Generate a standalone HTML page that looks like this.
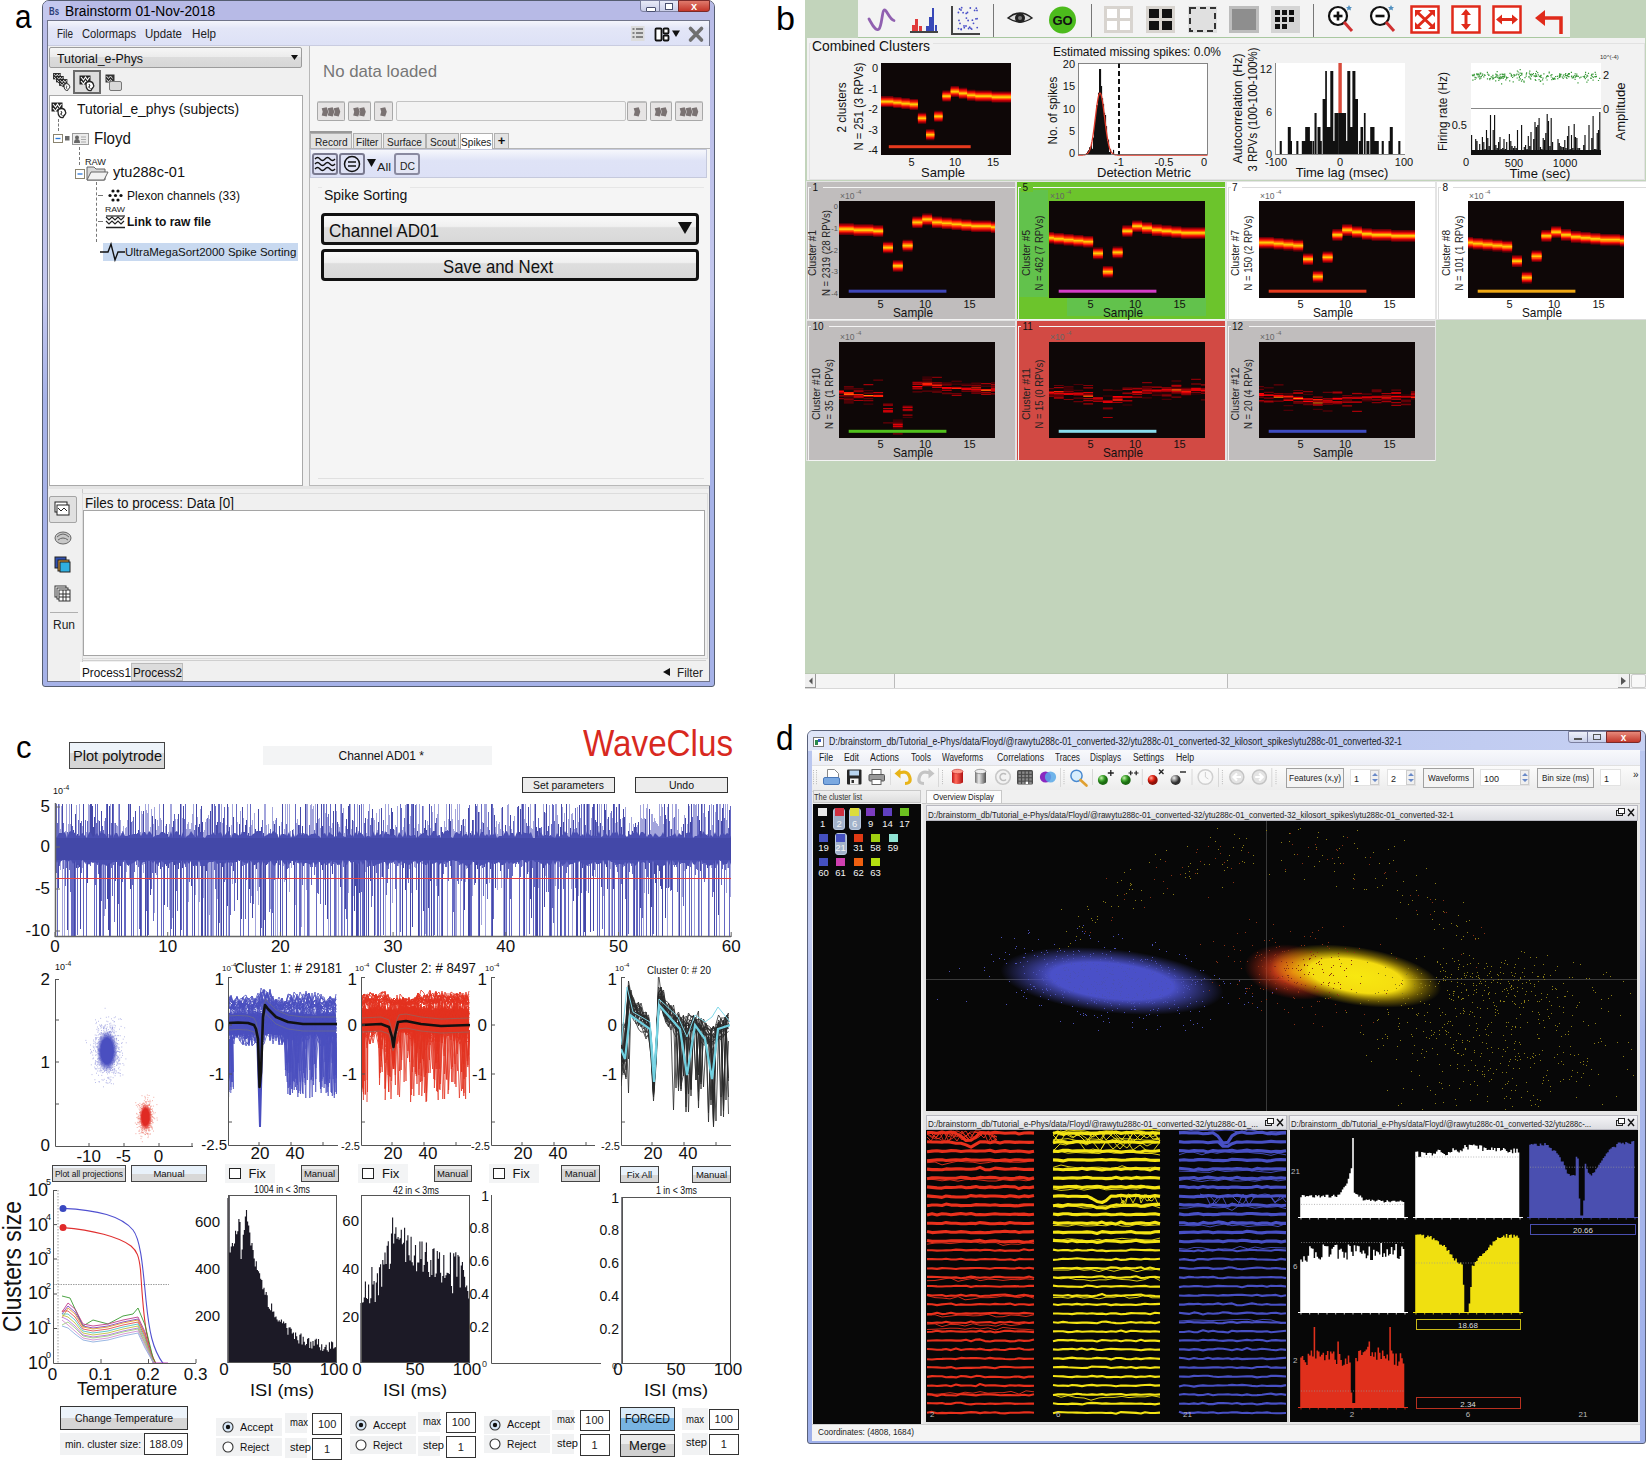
<!DOCTYPE html>
<html><head><meta charset="utf-8"><style>
html,body{margin:0;padding:0;background:#fff;}
body{width:1647px;height:1461px;position:relative;overflow:hidden;font-family:"Liberation Sans",sans-serif;}
.t{position:absolute;white-space:nowrap;transform-origin:0 0;line-height:normal;}
.r{position:absolute;}
.s{position:absolute;overflow:visible;}
</style></head><body>
<div class="t" style="left:14.5px;top:-3.5px;font-size:34px;color:#000;transform:scaleX(0.873);">a</div>
<div class="r" style="left:42px;top:0px;width:673px;height:687px;background:linear-gradient(#b9bce8 0,#c3c7ee 300px,#a6b2e8 400px,#a6b2e8 100%);border:1px solid #555d70;box-sizing:border-box;border-radius:7px 7px 3px 3px;"></div>
<div class="r" style="left:43px;top:1px;width:671px;height:19px;background:#b7bae6;border-radius:6px 6px 0 0;"></div>
<div class="r" style="left:43px;top:1px;width:27px;height:19px;background:#c4c8ee;border-radius:6px 0 0 0;"></div>
<div class="t" style="left:49.0px;top:5.9px;font-size:10px;color:#2c3e78;font-weight:bold;transform:scaleX(0.782);">Bs</div>
<div class="t" style="left:65.0px;top:2.8px;font-size:14px;color:#000;transform:scaleX(0.984);">Brainstorm 01-Nov-2018</div>
<div class="r" style="left:640px;top:0px;width:20px;height:12px;background:linear-gradient(#e8eaf8,#c9cde8);border:1px solid #7c80a0;box-sizing:border-box;border-radius:0 0 0 3px;"></div>
<div class="r" style="left:646px;top:7px;width:8px;height:3px;background:#fff;border:1px solid #4a5070;border-radius:1px;"></div>
<div class="r" style="left:659px;top:0px;width:20px;height:12px;background:linear-gradient(#e8eaf8,#c9cde8);border:1px solid #7c80a0;box-sizing:border-box;"></div>
<div class="r" style="left:665px;top:3px;width:8px;height:7px;background:#fff;border:1.5px solid #4a5070;box-sizing:border-box;"></div>
<div class="r" style="left:678px;top:0px;width:32px;height:12px;background:linear-gradient(#e07a6c,#c4362a);border:1px solid #7a2a2a;box-sizing:border-box;border-radius:0 0 3px 0;"></div>
<div class="t" style="left:690.9px;top:0.0px;font-size:11px;color:#fff;font-weight:bold;">x</div>
<div class="r" style="left:47px;top:20px;width:663px;height:662px;background:#f0f0f0;border:1px solid #70748a;box-sizing:border-box;"></div>
<div class="r" style="left:48px;top:21px;width:661px;height:25px;background:linear-gradient(#f4f5fc 0,#e3e6f7 30%,#dde1f6 100%);"></div>
<div class="r" style="left:48px;top:45px;width:661px;height:1px;background:#c9cce0;"></div>
<div class="t" style="left:57.0px;top:27.1px;font-size:12px;color:#222;transform:scaleX(0.827);">File</div>
<div class="t" style="left:82.0px;top:27.1px;font-size:12px;color:#222;transform:scaleX(0.931);">Colormaps</div>
<div class="t" style="left:145.0px;top:27.1px;font-size:12px;color:#222;transform:scaleX(0.956);">Update</div>
<div class="t" style="left:192.0px;top:27.1px;font-size:12px;color:#222;transform:scaleX(0.972);">Help</div>
<svg class="s" style="left:631px;top:26px;" width="14" height="15" viewBox="0 0 14 15"><rect x="0" y="0" width="13.5" height="15" fill="#dcdcdc"/><g stroke="#666" stroke-width="1.3" fill="none"><path d="M1.5 3h2M5 3h7M1.5 7h2M5 7h7M1.5 11h2M5 11h7"/></g></svg>
<svg class="s" style="left:654px;top:25px;" width="30" height="18" viewBox="0 0 30 18"><rect x="1.5" y="3.5" width="6" height="12" rx="1" fill="#fff" stroke="#111" stroke-width="1.8"/><rect x="9.5" y="3.5" width="5" height="5" rx="1" fill="#fff" stroke="#111" stroke-width="1.8"/><rect x="9.5" y="10.5" width="5" height="5" rx="1" fill="#fff" stroke="#111" stroke-width="1.8"/><path d="M18 5.5h8l-4 6.5z" fill="#111"/></svg>
<svg class="s" style="left:688px;top:26px;" width="16" height="17" viewBox="0 0 16 17"><path d="M2.5 2.5L13.5 14M13.5 2.5L2.5 14" stroke="#707070" stroke-width="3.6" stroke-linecap="round"/></svg>
<div class="r" style="left:49px;top:47px;width:253px;height:21px;background:linear-gradient(#f6f6f6 0,#ececec 45%,#dcdcdc 50%,#d6d6d6 100%);border:1px solid #9c9c9c;box-sizing:border-box;border-radius:2px;"></div>
<div class="t" style="left:57.0px;top:51.2px;font-size:13px;color:#111;transform:scaleX(0.950);">Tutorial_e-Phys</div>
<svg class="s" style="left:291px;top:55px;" width="8" height="6" viewBox="0 0 8 6"><path d="M0 0h7l-3.5 5z" fill="#111"/></svg>
<div class="r" style="left:73px;top:70px;width:28px;height:24px;background:#dcdcdc;border:2px solid #6a6a6a;box-sizing:border-box;"></div>
<svg class="s" style="left:52px;top:72px;" width="20" height="20" viewBox="0 0 20 20"><g transform="translate(0,0) scale(0.7)"><rect x="1.5" y="1.5" width="11" height="9" fill="#222"/><path d="M3 3l2.5 3 2-3 2 3 2-3M3 7l2.5 3 2-3 2 3 2-3" stroke="#fff" stroke-width="1.1" fill="none"/><path d="M8 10.5q0-3 3.5-3t4 3.5q1 1-0.5 2.5t-2 3q-2 0.5-3.5-1t-1.5-5z" fill="#fff" stroke="#222" stroke-width="1.3"/><path d="M11 10l1 2-1.5 1 2 1.5" stroke="#222" fill="none" stroke-width="1"/></g><g transform="translate(3,3) scale(0.7)"><rect x="1.5" y="1.5" width="11" height="9" fill="#222"/><path d="M3 3l2.5 3 2-3 2 3 2-3M3 7l2.5 3 2-3 2 3 2-3" stroke="#fff" stroke-width="1.1" fill="none"/><path d="M8 10.5q0-3 3.5-3t4 3.5q1 1-0.5 2.5t-2 3q-2 0.5-3.5-1t-1.5-5z" fill="#fff" stroke="#222" stroke-width="1.3"/><path d="M11 10l1 2-1.5 1 2 1.5" stroke="#222" fill="none" stroke-width="1"/></g><g transform="translate(6,6) scale(0.75)"><rect x="1.5" y="1.5" width="11" height="9" fill="#222"/><path d="M3 3l2.5 3 2-3 2 3 2-3M3 7l2.5 3 2-3 2 3 2-3" stroke="#fff" stroke-width="1.1" fill="none"/><path d="M8 10.5q0-3 3.5-3t4 3.5q1 1-0.5 2.5t-2 3q-2 0.5-3.5-1t-1.5-5z" fill="#fff" stroke="#222" stroke-width="1.3"/><path d="M11 10l1 2-1.5 1 2 1.5" stroke="#222" fill="none" stroke-width="1"/></g></svg>
<svg class="s" style="left:78px;top:74px;" width="18" height="18" viewBox="0 0 18 18"><rect x="1.5" y="1.5" width="11" height="9" fill="#222"/><path d="M3 3l2.5 3 2-3 2 3 2-3M3 7l2.5 3 2-3 2 3 2-3" stroke="#fff" stroke-width="1.1" fill="none"/><path d="M8 10.5q0-3 3.5-3t4 3.5q1 1-0.5 2.5t-2 3q-2 0.5-3.5-1t-1.5-5z" fill="#fff" stroke="#222" stroke-width="1.3"/><path d="M11 10l1 2-1.5 1 2 1.5" stroke="#222" fill="none" stroke-width="1"/></svg>
<svg class="s" style="left:104px;top:73px;" width="20" height="20" viewBox="0 0 20 20"><rect x="1.5" y="1.5" width="9" height="8" fill="#333"/><path d="M2.5 3l2 2.5 2-2.5 2 2.5M2.5 6.5l2 2.5 2-2.5 2 2.5" stroke="#ddd" fill="none"/><rect x="5.5" y="8.5" width="12" height="9" rx="1.5" fill="#d8d8d8" stroke="#777"/></svg>
<div class="r" style="left:49px;top:95px;width:254px;height:391px;background:#fff;border:1px solid #a9a9a9;box-sizing:border-box;"></div>
<svg class="s" style="left:50px;top:101px;" width="18" height="18" viewBox="0 0 18 18"><rect x="1.5" y="1.5" width="11" height="9" fill="#222"/><path d="M3 3l2.5 3 2-3 2 3 2-3M3 7l2.5 3 2-3 2 3 2-3" stroke="#fff" stroke-width="1.1" fill="none"/><path d="M8 10.5q0-3 3.5-3t4 3.5q1 1-0.5 2.5t-2 3q-2 0.5-3.5-1t-1.5-5z" fill="#fff" stroke="#222" stroke-width="1.3"/><path d="M11 10l1 2-1.5 1 2 1.5" stroke="#222" fill="none" stroke-width="1"/></svg>
<div class="t" style="left:77.0px;top:100.4px;font-size:15px;color:#111;transform:scaleX(0.924);">Tutorial_e_phys (subjects)</div>
<div class="r" style="left:58px;top:119px;width:0px;height:12px;border:0;box-sizing:border-box;border-left:1px dashed #777;"></div>
<svg class="s" style="left:52px;top:131px;" width="38" height="16" viewBox="0 0 38 16"><rect x="1.5" y="3.5" width="9" height="8" fill="#fff" stroke="#8a8470"/><path d="M3.5 7.5h5" stroke="#2a78d8" stroke-width="1.3"/><rect x="13" y="5" width="4.5" height="4.5" fill="#6a6a6a"/><rect x="20.5" y="2.5" width="16" height="11" fill="#ececec" stroke="#999"/><circle cx="25" cy="6.5" r="2" fill="#666"/><path d="M22 12q0-4 3-4t3 4z" fill="#666"/><path d="M29 6h5M29 8.5h5M29 11h5" stroke="#aaa"/></svg>
<div class="t" style="left:94.0px;top:128.6px;font-size:17px;color:#111;transform:scaleX(0.890);">Floyd</div>
<div class="r" style="left:79px;top:147px;width:0px;height:18px;border-left:1px dashed #777;"></div>
<div class="t" style="left:85.0px;top:156.9px;font-size:9px;color:#222;transform:scaleX(1.016);">RAW</div>
<svg class="s" style="left:74px;top:163px;" width="36" height="19" viewBox="0 0 36 19"><rect x="1.5" y="6.5" width="9" height="9" fill="#fff" stroke="#8a8470"/><path d="M3.5 11h5" stroke="#2a78d8" stroke-width="1.3"/><path d="M13 4h7l2 2h9v11H13z" fill="#d8d8d8" stroke="#666"/><path d="M13 17l4-8h17l-4 8z" fill="#f2f2f2" stroke="#666"/></svg>
<div class="t" style="left:113.0px;top:163.4px;font-size:15px;color:#111;transform:scaleX(0.970);">ytu288c-01</div>
<div class="r" style="left:96px;top:182px;width:0px;height:60px;border-left:1px dashed #777;"></div>
<div class="r" style="left:98px;top:195px;width:5px;height:0px;border-top:1px solid #777;"></div>
<svg class="s" style="left:108px;top:189px;" width="16" height="13" viewBox="0 0 16 13"><g fill="#111"><circle cx="5" cy="2" r="1.6"/><circle cx="10" cy="2" r="1.6"/><circle cx="2" cy="6.5" r="1.6"/><circle cx="7.5" cy="6.5" r="1.6"/><circle cx="13" cy="6.5" r="1.6"/><circle cx="5" cy="11" r="1.6"/><circle cx="10" cy="11" r="1.6"/></g></svg>
<div class="t" style="left:127.0px;top:188.2px;font-size:13px;color:#111;transform:scaleX(0.925);">Plexon channels (33)</div>
<div class="t" style="left:105.0px;top:204.8px;font-size:8px;color:#222;transform:scaleX(1.089);">RAW</div>
<div class="r" style="left:98px;top:221px;width:5px;height:0px;border-top:1px solid #777;"></div>
<svg class="s" style="left:105px;top:214px;" width="21" height="15" viewBox="0 0 21 15"><g stroke="#222" fill="none" stroke-width="1.2"><path d="M1 2h19"/><path d="M1 3l3 3 3-3 3 3 3-3 3 3 3-3"/><path d="M1 7l3 3 3-3 3 3 3-3 3 3 3-3"/><path d="M1 13.5h19" stroke-width="1.5"/></g></svg>
<div class="t" style="left:127.0px;top:214.2px;font-size:13px;color:#111;font-weight:bold;transform:scaleX(0.923);">Link to raw file</div>
<div class="r" style="left:103px;top:243px;width:195px;height:18px;background:#c8d9f0;"></div>
<svg class="s" style="left:100px;top:242px;" width="26" height="20" viewBox="0 0 26 20"><path d="M0 10h8l3-8 4 16 3-8h7" fill="none" stroke="#111" stroke-width="1.4"/></svg>
<div class="t" style="left:125.0px;top:245.6px;font-size:11.5px;color:#111;">UltraMegaSort2000 Spike Sorting</div>
<div class="r" style="left:303px;top:46px;width:6px;height:440px;background:#f0f0f0;"></div>
<div class="r" style="left:309px;top:46px;width:401px;height:440px;background:#f5f5f5;border:1px solid #b8b8b8;box-sizing:border-box;border-top:0;border-right:0;"></div>
<div class="t" style="left:323.0px;top:61.6px;font-size:17px;color:#777;transform:scaleX(0.989);">No data loaded</div>
<div class="r" style="left:317px;top:101px;width:28px;height:20px;background:#e6e4e4;border:1px solid #a8a8a8;box-sizing:border-box;border-top:2px solid #bdbdbd;border-radius:2px;"></div>
<svg class="s" style="left:0px;top:106.5px;" width="720" height="10" viewBox="0 0 720 10"><path d="M321.7 1.2L326.7 0.3L328.3 4.8L326.7 9.4L321.7 8.4L322.7 4.8z" fill="#7a7272"/><path d="M327.7 1.2L332.7 0.3L334.3 4.8L332.7 9.4L327.7 8.4L328.7 4.8z" fill="#7a7272"/><path d="M333.7 1.2L338.7 0.3L340.3 4.8L338.7 9.4L333.7 8.4L334.7 4.8z" fill="#7a7272"/></svg>
<div class="r" style="left:348px;top:101px;width:23px;height:20px;background:#e6e4e4;border:1px solid #a8a8a8;box-sizing:border-box;border-top:2px solid #bdbdbd;border-radius:2px;"></div>
<svg class="s" style="left:0px;top:106.5px;" width="720" height="10" viewBox="0 0 720 10"><path d="M353.2 1.2L358.2 0.3L359.8 4.8L358.2 9.4L353.2 8.4L354.2 4.8z" fill="#7a7272"/><path d="M359.2 1.2L364.2 0.3L365.8 4.8L364.2 9.4L359.2 8.4L360.2 4.8z" fill="#7a7272"/></svg>
<div class="r" style="left:374px;top:101px;width:19px;height:20px;background:#e6e4e4;border:1px solid #a8a8a8;box-sizing:border-box;border-top:2px solid #bdbdbd;border-radius:2px;"></div>
<svg class="s" style="left:0px;top:106.5px;" width="720" height="10" viewBox="0 0 720 10"><path d="M380.2 1.2L385.2 0.3L386.8 4.8L385.2 9.4L380.2 8.4L381.2 4.8z" fill="#7a7272"/></svg>
<div class="r" style="left:627px;top:101px;width:20px;height:20px;background:#e6e4e4;border:1px solid #a8a8a8;box-sizing:border-box;border-top:2px solid #bdbdbd;border-radius:2px;"></div>
<svg class="s" style="left:0px;top:106.5px;" width="720" height="10" viewBox="0 0 720 10"><path d="M633.7 1.2L638.7 0.3L640.3 4.8L638.7 9.4L633.7 8.4L634.7 4.8z" fill="#7a7272"/></svg>
<div class="r" style="left:650px;top:101px;width:22px;height:20px;background:#e6e4e4;border:1px solid #a8a8a8;box-sizing:border-box;border-top:2px solid #bdbdbd;border-radius:2px;"></div>
<svg class="s" style="left:0px;top:106.5px;" width="720" height="10" viewBox="0 0 720 10"><path d="M654.7 1.2L659.7 0.3L661.3 4.8L659.7 9.4L654.7 8.4L655.7 4.8z" fill="#7a7272"/><path d="M660.7 1.2L665.7 0.3L667.3 4.8L665.7 9.4L660.7 8.4L661.7 4.8z" fill="#7a7272"/></svg>
<div class="r" style="left:675px;top:101px;width:28px;height:20px;background:#e6e4e4;border:1px solid #a8a8a8;box-sizing:border-box;border-top:2px solid #bdbdbd;border-radius:2px;"></div>
<svg class="s" style="left:0px;top:106.5px;" width="720" height="10" viewBox="0 0 720 10"><path d="M679.7 1.2L684.7 0.3L686.3 4.8L684.7 9.4L679.7 8.4L680.7 4.8z" fill="#7a7272"/><path d="M685.7 1.2L690.7 0.3L692.3 4.8L690.7 9.4L685.7 8.4L686.7 4.8z" fill="#7a7272"/><path d="M691.7 1.2L696.7 0.3L698.3 4.8L696.7 9.4L691.7 8.4L692.7 4.8z" fill="#7a7272"/></svg>
<div class="r" style="left:396px;top:101px;width:230px;height:20px;background:#f3f3f3;border:1px solid #c3c3c3;box-sizing:border-box;border-radius:2px;"></div>
<div class="r" style="left:310px;top:131px;width:42px;height:2px;background:#999;"></div>
<div class="r" style="left:309px;top:148px;width:401px;height:1px;background:#b5b5b5;"></div>
<div class="r" style="left:310px;top:133px;width:42px;height:16px;background:#e3e3e3;border:1px solid #b0b0b0;box-sizing:border-box;"></div>
<div class="t" style="left:314.7px;top:135.6px;font-size:11.5px;color:#222;transform:scaleX(0.880);">Record</div>
<div class="r" style="left:353px;top:133px;width:29px;height:16px;background:#e3e3e3;border:1px solid #b0b0b0;box-sizing:border-box;"></div>
<div class="t" style="left:356.3px;top:135.6px;font-size:11.5px;color:#222;transform:scaleX(0.880);">Filter</div>
<div class="r" style="left:383px;top:133px;width:43px;height:16px;background:#e3e3e3;border:1px solid #b0b0b0;box-sizing:border-box;"></div>
<div class="t" style="left:387.1px;top:135.6px;font-size:11.5px;color:#222;transform:scaleX(0.880);">Surface</div>
<div class="r" style="left:426px;top:133px;width:33px;height:16px;background:#e3e3e3;border:1px solid #b0b0b0;box-sizing:border-box;"></div>
<div class="t" style="left:429.6px;top:135.6px;font-size:11.5px;color:#222;transform:scaleX(0.880);">Scout</div>
<div class="r" style="left:460px;top:133px;width:33px;height:16px;background:#fff;border:1px solid #b0b0b0;box-sizing:border-box;border-bottom:0;"></div>
<div class="t" style="left:461.3px;top:135.6px;font-size:11.5px;color:#222;transform:scaleX(0.880);">Spikes</div>
<div class="r" style="left:494px;top:133px;width:15px;height:16px;background:#e3e3e3;border:1px solid #b0b0b0;box-sizing:border-box;"></div>
<div class="t" style="left:497.7px;top:133.2px;font-size:13px;color:#111;font-weight:bold;">+</div>
<div class="r" style="left:310px;top:149px;width:397px;height:29px;background:linear-gradient(#f6f7fc 0,#dfe3f6 40%,#dde1f6 100%);border:1px solid #c5c9dc;box-sizing:border-box;"></div>
<div class="r" style="left:312px;top:153px;width:26px;height:22px;background:#dfe2f5;border:2px solid #7a7a90;box-sizing:border-box;border-radius:3px;"></div>
<svg class="s" style="left:313px;top:155px;" width="24" height="18" viewBox="0 0 24 18"><g stroke="#111" fill="none" stroke-width="1.3"><path d="M2 4q2.5-3 5 0t5 0 5 0 5 0"/><path d="M2 9q2.5-3 5 0t5 0 5 0 5 0"/><path d="M2 14q2.5-3 5 0t5 0 5 0 5 0"/></g></svg>
<div class="r" style="left:339px;top:153px;width:26px;height:22px;background:#dfe2f5;border:2px solid #7a7a90;box-sizing:border-box;border-radius:3px;"></div>
<svg class="s" style="left:341px;top:155px;" width="22" height="18" viewBox="0 0 22 18"><circle cx="11" cy="9" r="7.5" fill="none" stroke="#111" stroke-width="1.5"/><path d="M7 7h8M7 11h8" stroke="#111" stroke-width="1.5"/></svg>
<svg class="s" style="left:367px;top:159px;" width="10" height="9" viewBox="0 0 10 9"><path d="M0 0h9l-4.5 8z" fill="#111"/></svg>
<div class="t" style="left:377.0px;top:160.6px;font-size:11.5px;color:#222;transform:scaleX(1.095);">All</div>
<div class="r" style="left:394px;top:153px;width:26px;height:22px;background:#e4e6f5;border:2px solid #8a8aa0;box-sizing:border-box;border-radius:3px;"></div>
<div class="t" style="left:399.5px;top:160.0px;font-size:11px;color:#222;transform:scaleX(0.944);">DC</div>
<div class="r" style="left:318px;top:187px;width:386px;height:290px;border-top:1px solid #e6e6e6;border-bottom:1px solid #e0e0e0;"></div>
<div class="r" style="left:322px;top:186px;width:88px;height:4px;background:#f5f5f5;"></div>
<div class="t" style="left:324.0px;top:187.3px;font-size:14px;color:#111;">Spike Sorting</div>
<div class="r" style="left:321px;top:213px;width:378px;height:32px;background:linear-gradient(#fafafa 0,#f0f0f0 40%,#dedede 45%,#d8d8d8 100%);border:3px solid #111;box-sizing:border-box;border-radius:4px;"></div>
<div class="t" style="left:329.0px;top:219.8px;font-size:19px;color:#111;transform:scaleX(0.898);">Channel AD01</div>
<svg class="s" style="left:678px;top:222px;" width="15" height="13" viewBox="0 0 15 13"><path d="M0 0h14l-7 12z" fill="#111"/></svg>
<div class="r" style="left:321px;top:249px;width:378px;height:32px;background:linear-gradient(#fafafa 0,#f0f0f0 40%,#dedede 45%,#d8d8d8 100%);border:3px solid #111;box-sizing:border-box;border-radius:4px;"></div>
<div class="t" style="left:443.0px;top:255.8px;font-size:19px;color:#111;transform:scaleX(0.883);">Save and Next</div>
<div class="r" style="left:48px;top:486px;width:661px;height:3px;background:#e4e4e4;"></div>
<div class="r" style="left:48px;top:489px;width:34px;height:192px;background:#f0f0f0;border-right:1px solid #c8c8c8;"></div>
<div class="r" style="left:49px;top:496px;width:28px;height:27px;background:#e0e0e0;border:1px solid #a5a5a5;box-sizing:border-box;border-radius:2px;"></div>
<svg class="s" style="left:53px;top:500px;" width="20" height="20" viewBox="0 0 20 20"><g fill="#fff" stroke="#222" stroke-width="1"><rect x="2" y="2" width="12" height="10"/><rect x="4" y="5" width="12" height="10"/><path d="M5 8l3 3 3-3 3 3"/></g></svg>
<svg class="s" style="left:53px;top:528px;" width="20" height="20" viewBox="0 0 20 20"><g fill="#c8c8c8" stroke="#666" stroke-width="1"><ellipse cx="10" cy="10" rx="8" ry="6"/><path d="M4 9q6-6 12 0M5 12q5-4 10 0"/></g></svg>
<svg class="s" style="left:53px;top:555px;" width="20" height="20" viewBox="0 0 20 20"><rect x="2" y="2" width="11" height="11" fill="#3050b0" stroke="#222"/><rect x="5" y="5" width="11" height="11" fill="#e8a030" stroke="#222"/><rect x="7" y="7" width="10" height="10" fill="#30b0e0" stroke="#222"/></svg>
<svg class="s" style="left:53px;top:584px;" width="20" height="20" viewBox="0 0 20 20"><g fill="#fff" stroke="#333" stroke-width="1"><rect x="2" y="2" width="11" height="11"/><rect x="4" y="4" width="11" height="11"/><rect x="6" y="6" width="11" height="11"/><path d="M6 10h11M6 13h11M10 6v11M13 6v11"/></g></svg>
<div class="r" style="left:50px;top:612px;width:28px;height:1px;background:#b0b0b0;"></div>
<div class="t" style="left:53.0px;top:618.1px;font-size:12px;color:#222;">Run</div>
<div class="r" style="left:82px;top:493px;width:624px;height:164px;border:1px solid #dcdcdc;"></div>
<div class="t" style="left:85.0px;top:495.3px;font-size:14px;color:#111;transform:scaleX(0.962);">Files to process: Data [0]</div>
<div class="r" style="left:83px;top:510px;width:622px;height:146px;background:#fff;border:1px solid #a5a5a5;box-sizing:border-box;"></div>
<div class="r" style="left:82px;top:660px;width:624px;height:21px;border-top:1px solid #cfcfcf;"></div>
<div class="r" style="left:80px;top:662px;width:51px;height:19px;background:#fff;"></div>
<div class="t" style="left:82.0px;top:665.2px;font-size:13px;color:#111;transform:scaleX(0.904);">Process1</div>
<div class="r" style="left:131px;top:663px;width:52px;height:18px;background:#dcdcdc;border:1px solid #bbb;box-sizing:border-box;"></div>
<div class="t" style="left:133.0px;top:665.2px;font-size:13px;color:#111;transform:scaleX(0.904);">Process2</div>
<svg class="s" style="left:663px;top:668px;" width="8" height="9" viewBox="0 0 8 9"><path d="M7 0v8L0 4z" fill="#111"/></svg>
<div class="t" style="left:677.0px;top:666.1px;font-size:12px;color:#222;transform:scaleX(0.975);">Filter</div>
<div class="t" style="left:776.0px;top:-0.3px;font-size:33px;color:#000;transform:scaleX(1.035);">b</div>
<div class="r" style="left:805px;top:0px;width:841px;height:674px;background:#c2d4bb;"></div>
<div class="r" style="left:858px;top:0px;width:712px;height:37px;background:#f3f3f3;"></div>
<div class="r" style="left:858px;top:37px;width:712px;height:1px;background:#a9c8a0;"></div>
<svg class="s" style="left:866px;top:6px;" width="30" height="28" viewBox="0 0 30 28"><path d="M3 13C6 18 10 26 13 23C16 20 16 4 18.5 4C21 4 23 13 28 14.5" fill="none" stroke="#9060b0" stroke-width="2.8" stroke-linecap="round"/></svg>
<svg class="s" style="left:908px;top:5px;" width="32" height="30" viewBox="0 0 32 30"><path d="M2 27h28" stroke="#444" stroke-width="2"/><path d="M4 26v-6h3v-6h3v12zM11 26v-5h3v5z" fill="#e03a3a"/><path d="M18 26v-5h3v-9h3v-9h2v23zM27 26v-6h2v6z" fill="#3848b8"/></svg>
<svg class="s" style="left:950px;top:4px;" width="32" height="32" viewBox="0 0 32 32"><path d="M2 2v28h28" fill="none" stroke="#444" stroke-width="2"/><circle cx="24.6" cy="6.4" r="0.9" fill="#4a50c8"/><circle cx="9.0" cy="16.4" r="0.9" fill="#4a50c8"/><circle cx="27.0" cy="6.4" r="0.9" fill="#4a50c8"/><circle cx="11.2" cy="25.5" r="0.9" fill="#4a50c8"/><circle cx="11.2" cy="25.1" r="0.9" fill="#4a50c8"/><circle cx="19.7" cy="23.2" r="0.9" fill="#4a50c8"/><circle cx="23.5" cy="19.3" r="0.9" fill="#4a50c8"/><circle cx="13.1" cy="8.7" r="0.9" fill="#4a50c8"/><circle cx="11.0" cy="6.0" r="0.9" fill="#4a50c8"/><circle cx="16.2" cy="9.4" r="0.9" fill="#4a50c8"/><circle cx="18.6" cy="24.5" r="0.9" fill="#4a50c8"/><circle cx="16.0" cy="22.0" r="0.9" fill="#4a50c8"/><circle cx="16.4" cy="14.1" r="0.9" fill="#4a50c8"/><circle cx="11.7" cy="3.7" r="0.9" fill="#4a50c8"/><circle cx="8.4" cy="8.5" r="0.9" fill="#4a50c8"/><circle cx="27.2" cy="23.6" r="0.9" fill="#4a50c8"/><circle cx="14.0" cy="21.9" r="0.9" fill="#4a50c8"/><circle cx="17.5" cy="8.5" r="0.9" fill="#4a50c8"/><circle cx="10.0" cy="19.4" r="0.9" fill="#4a50c8"/><circle cx="20.9" cy="24.3" r="0.9" fill="#4a50c8"/><circle cx="25.9" cy="14.8" r="0.9" fill="#4a50c8"/><circle cx="9.6" cy="5.0" r="0.9" fill="#4a50c8"/><circle cx="27.1" cy="14.7" r="0.9" fill="#4a50c8"/><circle cx="26.3" cy="4.2" r="0.9" fill="#4a50c8"/><circle cx="21.7" cy="25.1" r="0.9" fill="#4a50c8"/><circle cx="14.3" cy="23.7" r="0.9" fill="#4a50c8"/><circle cx="22.4" cy="16.2" r="0.9" fill="#4a50c8"/><circle cx="20.3" cy="4.0" r="0.9" fill="#4a50c8"/><circle cx="8.5" cy="24.6" r="0.9" fill="#4a50c8"/><circle cx="18.1" cy="16.5" r="0.9" fill="#4a50c8"/></svg>
<div class="r" style="left:993px;top:4px;width:1px;height:33px;background:#777;"></div>
<svg class="s" style="left:1006px;top:10px;" width="28" height="16" viewBox="0 0 28 16"><path d="M2 8q12-10 24 0q-12 8-24 0z" fill="#ddd" stroke="#222" stroke-width="1.5"/><circle cx="14" cy="8" r="5" fill="#222"/><circle cx="14" cy="8" r="2" fill="#777"/></svg>
<svg class="s" style="left:1048px;top:6px;" width="30" height="30" viewBox="0 0 30 30"><circle cx="14.5" cy="14" r="13.5" fill="#4cbb1c"/><text x="14.5" y="19" font-size="13" text-anchor="middle" font-family="Liberation Sans" fill="#111" font-weight="bold">GO</text></svg>
<div class="r" style="left:1091px;top:4px;width:1px;height:33px;background:#777;"></div>
<svg class="s" style="left:1103px;top:5px;" width="31" height="29" viewBox="0 0 31 29"><rect x="1" y="1" width="29" height="27" fill="#d8d4cf"/><rect x="4" y="4" width="10" height="9" fill="#fff"/><rect x="17" y="4" width="10" height="9" fill="#fff"/><rect x="4" y="16" width="10" height="9" fill="#fff"/><rect x="17" y="16" width="10" height="9" fill="#fff"/></svg>
<svg class="s" style="left:1145px;top:5px;" width="31" height="29" viewBox="0 0 31 29"><rect x="1" y="1" width="29" height="27" fill="#d8d4cf"/><rect x="4" y="4" width="10" height="9" fill="#111"/><rect x="17" y="4" width="10" height="9" fill="#111"/><rect x="4" y="16" width="10" height="9" fill="#111"/><rect x="17" y="16" width="10" height="9" fill="#111"/></svg>
<svg class="s" style="left:1187px;top:5px;" width="31" height="29" viewBox="0 0 31 29"><rect x="1" y="1" width="29" height="27" fill="#e0e0e0"/><rect x="3" y="3" width="25" height="23" fill="none" stroke="#333" stroke-width="2" stroke-dasharray="6 4"/></svg>
<svg class="s" style="left:1228px;top:5px;" width="32" height="29" viewBox="0 0 32 29"><rect x="1" y="1" width="30" height="27" fill="#bdbdbd"/><rect x="4" y="4" width="24" height="21" fill="#8e8e8e"/></svg>
<svg class="s" style="left:1270px;top:5px;" width="31" height="29" viewBox="0 0 31 29"><rect x="1" y="1" width="29" height="27" fill="#d4d4d4"/><rect x="5" y="5" width="5" height="5" fill="#111"/><rect x="5" y="12" width="5" height="5" fill="#111"/><rect x="5" y="19" width="5" height="5" fill="#111"/><rect x="12" y="5" width="5" height="5" fill="#111"/><rect x="12" y="12" width="5" height="5" fill="#111"/><rect x="12" y="19" width="5" height="5" fill="#111"/><rect x="19" y="5" width="5" height="5" fill="#111"/><rect x="19" y="12" width="5" height="5" fill="#111"/><rect x="19" y="19" width="5" height="5" fill="#111"/><rect x="19" y="19" width="6" height="6" fill="#d4d4d4"/></svg>
<div class="r" style="left:1313px;top:4px;width:1px;height:33px;background:#777;"></div>
<svg class="s" style="left:1327px;top:4px;" width="30" height="30" viewBox="0 0 30 30"><circle cx="11" cy="12" r="9" fill="#fff" stroke="#111" stroke-width="2.2"/><path d="M17 18l8 9" stroke="#d03030" stroke-width="3"/><path d="M6.5 12h9" stroke="#111" stroke-width="2.6"/><path d="M11 7.5v9" stroke="#111" stroke-width="2.6"/><path d="M22 1l1 2 2 0-1.5 1.5.5 2-2-1-2 1 .5-2L19 3h2z" fill="#5090c0"/></svg>
<svg class="s" style="left:1369px;top:4px;" width="30" height="30" viewBox="0 0 30 30"><circle cx="11" cy="12" r="9" fill="#fff" stroke="#111" stroke-width="2.2"/><path d="M17 18l8 9" stroke="#d03030" stroke-width="3"/><path d="M6.5 12h9" stroke="#111" stroke-width="2.6"/><path d="M22 1l1 2 2 0-1.5 1.5.5 2-2-1-2 1 .5-2L19 3h2z" fill="#5090c0"/></svg>
<svg class="s" style="left:1410px;top:5px;" width="30" height="29" viewBox="0 0 30 29"><rect x="1.5" y="1.5" width="27" height="26" fill="#fff" stroke="#e02a1a" stroke-width="2.5"/><path d="M6 6l18 17M24 6L6 23" stroke="#e02a1a" stroke-width="3"/><path d="M5 5h7l-7 7zM25 5h-7l7 7zM5 24h7l-7-7zM25 24h-7l7-7z" fill="#e02a1a"/></svg>
<svg class="s" style="left:1451px;top:5px;" width="30" height="29" viewBox="0 0 30 29"><rect x="1.5" y="1.5" width="27" height="26" fill="#fff" stroke="#e02a1a" stroke-width="2.5"/><path d="M15 6v17" stroke="#e02a1a" stroke-width="3"/><path d="M10 10l5-6 5 6zM10 19l5 6 5-6z" fill="#e02a1a"/></svg>
<svg class="s" style="left:1492px;top:5px;" width="30" height="29" viewBox="0 0 30 29"><rect x="1.5" y="1.5" width="27" height="26" fill="#fff" stroke="#e02a1a" stroke-width="2.5"/><path d="M7 14.5h16" stroke="#e02a1a" stroke-width="3"/><path d="M10 9.5l-6 5 6 5zM20 9.5l6 5-6 5z" fill="#e02a1a"/></svg>
<svg class="s" style="left:1534px;top:5px;" width="32" height="30" viewBox="0 0 32 30"><path d="M27 29V13H10" fill="none" stroke="#e02a1a" stroke-width="3.5"/><path d="M11 5L1 13l10 8z" fill="#e02a1a"/></svg>
<div class="r" style="left:807px;top:38px;width:838px;height:142px;background:#f2f2f2;"></div>
<div class="r" style="left:809px;top:43px;width:834px;height:135px;border:1px solid #e2e2e2;"></div>
<div class="r" style="left:811px;top:40px;width:122px;height:10px;background:#f2f2f2;"></div>
<div class="t" style="left:812.0px;top:38.3px;font-size:14px;color:#111;transform:scaleX(0.991);">Combined Clusters</div>
<svg class="s" style="left:881px;top:63px;" width="130" height="92" viewBox="0 0 130 92"><rect width="130" height="92" fill="#0e0707"/><path d="M0.0 33.1h4.1v11.0h-4.1zM4.1 33.1h8.2v11.0h-8.2zM12.3 34.0h8.2v11.0h-8.2zM20.5 35.0h8.2v11.0h-8.2zM28.7 35.9h8.2v11.0h-8.2zM36.9 49.7h8.2v11.0h-8.2zM45.1 66.2h8.2v11.0h-8.2zM53.3 47.8h8.2v11.0h-8.2zM61.5 27.6h8.2v11.0h-8.2zM69.7 23.0h8.2v11.0h-8.2zM77.9 24.8h8.2v11.0h-8.2zM86.1 26.7h8.2v11.0h-8.2zM94.3 27.6h8.2v11.0h-8.2zM102.5 27.6h8.2v11.0h-8.2zM110.7 28.5h8.2v11.0h-8.2zM118.9 28.5h8.2v11.0h-8.2zM127.1 28.5h2.9v11.0h-2.9z" fill="#670007"/><path d="M0.0 34.4h4.1v8.6h-4.1zM4.1 34.4h8.2v8.6h-8.2zM12.3 35.3h8.2v8.6h-8.2zM20.5 36.2h8.2v8.6h-8.2zM28.7 37.1h8.2v8.6h-8.2zM36.9 50.9h8.2v8.6h-8.2zM45.1 67.5h8.2v8.6h-8.2zM53.3 49.1h8.2v8.6h-8.2zM61.5 28.8h8.2v8.6h-8.2zM69.7 24.2h8.2v8.6h-8.2zM77.9 26.1h8.2v8.6h-8.2zM86.1 27.9h8.2v8.6h-8.2zM94.3 28.8h8.2v8.6h-8.2zM102.5 28.8h8.2v8.6h-8.2zM110.7 29.8h8.2v8.6h-8.2zM118.9 29.8h8.2v8.6h-8.2zM127.1 29.8h2.9v8.6h-2.9z" fill="#c20007"/><path d="M0.0 35.6h4.1v6.1h-4.1zM4.1 35.6h8.2v6.1h-8.2zM12.3 36.5h8.2v6.1h-8.2zM20.5 37.4h8.2v6.1h-8.2zM28.7 38.4h8.2v6.1h-8.2zM36.9 52.2h8.2v6.1h-8.2zM45.1 68.7h8.2v6.1h-8.2zM53.3 50.3h8.2v6.1h-8.2zM61.5 30.1h8.2v6.1h-8.2zM69.7 25.5h8.2v6.1h-8.2zM77.9 27.3h8.2v6.1h-8.2zM86.1 29.2h8.2v6.1h-8.2zM94.3 30.1h8.2v6.1h-8.2zM102.5 30.1h8.2v6.1h-8.2zM110.7 31.0h8.2v6.1h-8.2zM118.9 31.0h8.2v6.1h-8.2zM127.1 31.0h2.9v6.1h-2.9z" fill="#ff1f07"/><path d="M0.0 36.7h4.1v3.9h-4.1zM4.1 36.7h8.2v3.9h-8.2zM12.3 37.6h8.2v3.9h-8.2zM20.5 38.5h8.2v3.9h-8.2zM28.7 39.5h8.2v3.9h-8.2zM36.9 53.3h8.2v3.9h-8.2zM45.1 69.8h8.2v3.9h-8.2zM53.3 51.4h8.2v3.9h-8.2zM61.5 31.2h8.2v3.9h-8.2zM69.7 26.6h8.2v3.9h-8.2zM77.9 28.4h8.2v3.9h-8.2zM86.1 30.3h8.2v3.9h-8.2zM94.3 31.2h8.2v3.9h-8.2zM102.5 31.2h8.2v3.9h-8.2zM110.7 32.1h8.2v3.9h-8.2zM118.9 32.1h8.2v3.9h-8.2zM127.1 32.1h2.9v3.9h-2.9z" fill="#ff7207"/><path d="M0.0 37.8h4.1v1.7h-4.1zM4.1 37.8h8.2v1.7h-8.2zM12.3 38.7h8.2v1.7h-8.2zM20.5 39.7h8.2v1.7h-8.2zM28.7 40.6h8.2v1.7h-8.2zM36.9 54.4h8.2v1.7h-8.2zM45.1 70.9h8.2v1.7h-8.2zM53.3 52.5h8.2v1.7h-8.2zM61.5 32.3h8.2v1.7h-8.2zM69.7 27.7h8.2v1.7h-8.2zM77.9 29.5h8.2v1.7h-8.2zM86.1 31.4h8.2v1.7h-8.2zM94.3 32.3h8.2v1.7h-8.2zM102.5 32.3h8.2v1.7h-8.2zM110.7 33.2h8.2v1.7h-8.2zM118.9 33.2h8.2v1.7h-8.2zM127.1 33.2h2.9v1.7h-2.9z" fill="#ffcb07"/><rect x="7.8" y="82.2" width="81.9" height="3" fill="#e63a1e"/></svg>
<div class="t" style="left:871.9px;top:62.0px;font-size:11px;color:#111;">0</div>
<div class="t" style="left:868.2px;top:82.5px;font-size:11px;color:#111;">-1</div>
<div class="t" style="left:868.2px;top:103.0px;font-size:11px;color:#111;">-2</div>
<div class="t" style="left:868.2px;top:123.5px;font-size:11px;color:#111;">-3</div>
<div class="t" style="left:868.2px;top:144.0px;font-size:11px;color:#111;">-4</div>
<div class="t" style="left:908.6px;top:156.0px;font-size:11px;color:#111;">5</div>
<div class="t" style="left:948.9px;top:156.0px;font-size:11px;color:#111;">10</div>
<div class="t" style="left:986.9px;top:156.0px;font-size:11px;color:#111;">15</div>
<div class="t" style="left:921.0px;top:165.2px;font-size:13px;color:#111;">Sample</div>
<div class="t" style="left:814.2px;top:99.7px;font-size:13px;color:#111;line-height:normal;transform-origin:50% 50%;transform:rotate(-90deg) scaleX(0.899)">2 clusters</div>
<div class="t" style="left:806.9px;top:98.7px;font-size:13px;color:#111;line-height:normal;transform-origin:50% 50%;transform:rotate(-90deg) scaleX(0.861)">N = 251 (3 RPVs)</div>
<svg class="s" style="left:1078px;top:63px;" width="130" height="92" viewBox="0 0 130 92"><rect x="0" y="0" width="130" height="92" fill="#fff"/><rect x="8.0" y="90.2" width="1.1" height="1.8" fill="#111"/><rect x="9.0" y="88.5" width="1.1" height="3.5" fill="#111"/><rect x="10.0" y="87.2" width="1.1" height="4.8" fill="#111"/><rect x="11.0" y="84.3" width="1.1" height="7.7" fill="#111"/><rect x="12.0" y="84.8" width="1.1" height="7.2" fill="#111"/><rect x="13.0" y="79.6" width="1.1" height="12.4" fill="#111"/><rect x="14.0" y="85.8" width="1.1" height="6.2" fill="#111"/><rect x="15.0" y="74.5" width="1.1" height="17.5" fill="#111"/><rect x="16.0" y="60.9" width="1.1" height="31.1" fill="#111"/><rect x="17.0" y="55.3" width="1.1" height="36.7" fill="#111"/><rect x="18.0" y="42.3" width="1.1" height="49.7" fill="#111"/><rect x="19.0" y="42.1" width="1.1" height="49.9" fill="#111"/><rect x="20.0" y="29.7" width="1.1" height="62.3" fill="#111"/><rect x="21.0" y="6.0" width="1.1" height="86.0" fill="#111"/><rect x="22.0" y="6.0" width="1.1" height="86.0" fill="#111"/><rect x="23.0" y="23.0" width="1.1" height="69.0" fill="#111"/><rect x="24.0" y="35.2" width="1.1" height="56.8" fill="#111"/><rect x="25.0" y="40.9" width="1.1" height="51.1" fill="#111"/><rect x="26.0" y="49.8" width="1.1" height="42.2" fill="#111"/><rect x="27.0" y="52.0" width="1.1" height="40.0" fill="#111"/><rect x="28.0" y="63.1" width="1.1" height="28.9" fill="#111"/><rect x="29.0" y="78.1" width="1.1" height="13.9" fill="#111"/><rect x="30.0" y="76.6" width="1.1" height="15.4" fill="#111"/><rect x="31.0" y="89.0" width="1.1" height="3.0" fill="#111"/><rect x="32.0" y="86.2" width="1.1" height="5.8" fill="#111"/><rect x="33.0" y="92.0" width="1.1" height="0.0" fill="#111"/><rect x="34.0" y="92.0" width="1.1" height="0.0" fill="#111"/><rect x="35.0" y="86.9" width="1.1" height="5.1" fill="#111"/><rect x="36.0" y="92.0" width="1.1" height="0.0" fill="#111"/><rect x="37.0" y="92.0" width="1.1" height="0.0" fill="#111"/><polyline points="0.0,92.0 0.5,92.0 1.0,92.0 1.5,92.0 2.0,92.0 2.5,92.0 3.0,92.0 3.5,92.0 4.0,92.0 4.5,92.0 5.0,91.9 5.5,91.9 6.0,91.9 6.5,91.8 7.0,91.7 7.5,91.6 8.0,91.4 8.5,91.2 9.0,90.9 9.5,90.5 10.0,89.9 10.5,89.3 11.0,88.5 11.5,87.4 12.0,86.2 12.5,84.7 13.0,82.9 13.5,80.8 14.0,78.4 14.5,75.6 15.0,72.6 15.5,69.2 16.0,65.6 16.5,61.7 17.0,57.7 17.5,53.6 18.0,49.5 18.5,45.6 19.0,41.9 19.5,38.5 20.0,35.6 20.5,33.2 21.0,31.5 21.5,30.4 22.0,30.0 22.5,30.4 23.0,31.5 23.5,33.2 24.0,35.6 24.5,38.5 25.0,41.9 25.5,45.6 26.0,49.5 26.5,53.6 27.0,57.7 27.5,61.7 28.0,65.6 28.5,69.2 29.0,72.6 29.5,75.6 30.0,78.4 30.5,80.8 31.0,82.9 31.5,84.7 32.0,86.2 32.5,87.4 33.0,88.5 33.5,89.3 34.0,89.9 34.5,90.5 35.0,90.9 35.5,91.2 36.0,91.4 36.5,91.6 37.0,91.7 37.5,91.8 38.0,91.9 38.5,91.9 39.0,91.9 39.5,92.0 40.0,92.0 40.5,92.0 41.0,92.0 41.5,92.0 42.0,92.0 42.5,92.0 43.0,92.0 43.5,92.0 44.0,92.0 44.5,92.0 45.0,92.0 45.5,92.0 46.0,92.0 46.5,92.0 47.0,92.0 47.5,92.0 48.0,92.0 48.5,92.0 49.0,92.0 49.5,92.0 50.0,92.0 50.5,92.0 51.0,92.0 51.5,92.0 52.0,92.0 52.5,92.0 53.0,92.0 53.5,92.0 54.0,92.0 54.5,92.0 55.0,92.0 55.5,92.0 56.0,92.0 56.5,92.0 57.0,92.0 57.5,92.0 58.0,92.0 58.5,92.0 59.0,92.0 59.5,92.0 60.0,92.0 60.5,92.0 61.0,92.0 61.5,92.0 62.0,92.0 62.5,92.0 63.0,92.0 63.5,92.0 64.0,92.0 64.5,92.0 65.0,92.0 65.5,92.0 66.0,92.0 66.5,92.0 67.0,92.0 67.5,92.0 68.0,92.0 68.5,92.0 69.0,92.0 69.5,92.0 70.0,92.0 70.5,92.0 71.0,92.0 71.5,92.0 72.0,92.0 72.5,92.0 73.0,92.0 73.5,92.0 74.0,92.0 74.5,92.0 75.0,92.0 75.5,92.0 76.0,92.0 76.5,92.0 77.0,92.0 77.5,92.0 78.0,92.0 78.5,92.0 79.0,92.0 79.5,92.0 80.0,92.0 80.5,92.0 81.0,92.0 81.5,92.0 82.0,92.0 82.5,92.0 83.0,92.0 83.5,92.0 84.0,92.0 84.5,92.0 85.0,92.0 85.5,92.0 86.0,92.0 86.5,92.0 87.0,92.0 87.5,92.0 88.0,92.0 88.5,92.0 89.0,92.0 89.5,92.0 90.0,92.0 90.5,92.0 91.0,92.0 91.5,92.0 92.0,92.0 92.5,92.0 93.0,92.0 93.5,92.0 94.0,92.0 94.5,92.0 95.0,92.0 95.5,92.0 96.0,92.0 96.5,92.0 97.0,92.0 97.5,92.0 98.0,92.0 98.5,92.0 99.0,92.0 99.5,92.0 100.0,92.0 100.5,92.0 101.0,92.0 101.5,92.0 102.0,92.0 102.5,92.0 103.0,92.0 103.5,92.0 104.0,92.0 104.5,92.0 105.0,92.0 105.5,92.0 106.0,92.0 106.5,92.0 107.0,92.0 107.5,92.0 108.0,92.0 108.5,92.0 109.0,92.0 109.5,92.0 110.0,92.0 110.5,92.0 111.0,92.0 111.5,92.0 112.0,92.0 112.5,92.0 113.0,92.0 113.5,92.0 114.0,92.0 114.5,92.0 115.0,92.0 115.5,92.0 116.0,92.0 116.5,92.0 117.0,92.0 117.5,92.0 118.0,92.0 118.5,92.0 119.0,92.0 119.5,92.0 120.0,92.0 120.5,92.0 121.0,92.0 121.5,92.0 122.0,92.0 122.5,92.0 123.0,92.0 123.5,92.0 124.0,92.0 124.5,92.0 125.0,92.0 125.5,92.0 126.0,92.0 126.5,92.0 127.0,92.0 127.5,92.0 128.0,92.0 128.5,92.0 129.0,92.0 129.5,92.0" fill="none" stroke="#e03a2a" stroke-width="1.3"/><path d="M41 0v92" stroke="#111" stroke-width="2" stroke-dasharray="5 3"/><rect x="0.5" y="0.5" width="129" height="91" fill="none" stroke="#666" stroke-width="0.8"/></svg>
<div class="t" style="left:1053.0px;top:44.2px;font-size:13px;color:#111;transform:scaleX(0.919);">Estimated missing spikes: 0.0%</div>
<div class="t" style="left:1062.8px;top:58.0px;font-size:11px;color:#111;">20</div>
<div class="t" style="left:1062.8px;top:80.3px;font-size:11px;color:#111;">15</div>
<div class="t" style="left:1062.8px;top:102.6px;font-size:11px;color:#111;">10</div>
<div class="t" style="left:1068.9px;top:124.9px;font-size:11px;color:#111;">5</div>
<div class="t" style="left:1068.9px;top:147.2px;font-size:11px;color:#111;">0</div>
<div class="t" style="left:1114.1px;top:156.0px;font-size:11px;color:#111;">-1</div>
<div class="t" style="left:1154.5px;top:156.0px;font-size:11px;color:#111;">-0.5</div>
<div class="t" style="left:1200.9px;top:156.0px;font-size:11px;color:#111;">0</div>
<div class="t" style="left:1097.0px;top:165.2px;font-size:13px;color:#111;">Detection Metric</div>
<div class="t" style="left:1015.4px;top:102.7px;font-size:13px;color:#111;line-height:normal;transform-origin:50% 50%;transform:rotate(-90deg) scaleX(0.905)">No. of spikes</div>
<svg class="s" style="left:1275px;top:63px;" width="130" height="92" viewBox="0 0 130 92"><rect x="0" y="0" width="130" height="92" fill="#fff"/><path d="M4.7 78.0h2.1V92h-2.1zM12.8 64.0h3.0V92h-3.0zM15.7 78.0h1.3V92h-1.3zM21.3 78.0h2.1V92h-2.1zM26.8 78.0h3.4V92h-3.4zM30.2 64.0h4.7V92h-4.7zM34.9 78.0h2.1V92h-2.1zM37.4 78.0h1.7V92h-1.7zM39.5 50.0h2.1V92h-2.1zM42.5 64.0h3.0V92h-3.0zM45.5 78.0h1.3V92h-1.3zM47.6 36.0h2.6V92h-2.6zM50.2 8.0h1.7V92h-1.7zM51.9 64.0h3.4V92h-3.4zM55.3 8.0h3.0V92h-3.0zM58.2 78.0h1.3V92h-1.3zM59.5 50.0h3.8V92h-3.8zM63.4 50.0h3.4V92h-3.4zM66.8 50.0h4.3V92h-4.3zM71.0 78.0h1.3V92h-1.3zM72.3 8.0h3.0V92h-3.0zM75.3 64.0h2.1V92h-2.1zM77.4 8.0h3.0V92h-3.0zM80.4 36.0h2.6V92h-2.6zM83.8 78.0h1.7V92h-1.7zM85.5 64.0h2.6V92h-2.6zM88.9 50.0h1.7V92h-1.7zM91.4 78.0h3.0V92h-3.0zM95.2 64.0h4.3V92h-4.3zM99.5 78.0h4.3V92h-4.3zM106.7 78.0h2.1V92h-2.1zM113.5 78.0h1.3V92h-1.3zM114.8 64.0h3.0V92h-3.0zM123.3 78.0h2.1V92h-2.1z" fill="#111"/><rect x="63.4" y="0" width="3.4" height="50" fill="#d84a3a"/><path d="M0.5 0V92" stroke="#888"/><path d="M0 91.5H130" stroke="#888"/></svg>
<div class="t" style="left:1259.8px;top:63.0px;font-size:11px;color:#111;">12</div>
<div class="t" style="left:1265.9px;top:106.0px;font-size:11px;color:#111;">6</div>
<div class="t" style="left:1265.9px;top:148.0px;font-size:11px;color:#111;">0</div>
<div class="t" style="left:1265.0px;top:156.0px;font-size:11px;color:#111;">-100</div>
<div class="t" style="left:1336.9px;top:156.0px;font-size:11px;color:#111;">0</div>
<div class="t" style="left:1394.8px;top:156.0px;font-size:11px;color:#111;">100</div>
<div class="t" style="left:1295.7px;top:165.2px;font-size:13px;color:#111;">Time lag (msec)</div>
<div class="t" style="left:1180.2px;top:100.7px;font-size:13px;color:#111;line-height:normal;transform-origin:50% 50%;transform:rotate(-90deg) scaleX(0.952)">Autocorrelation (Hz)</div>
<div class="t" style="left:1182.2px;top:101.7px;font-size:13px;color:#111;line-height:normal;transform-origin:50% 50%;transform:rotate(-90deg) scaleX(0.875)">3 RPVs (100-100-100%)</div>
<svg class="s" style="left:1471px;top:63px;" width="130" height="92" viewBox="0 0 130 92"><rect x="0" y="0" width="130" height="92" fill="#fff"/><path d="M21.3 12.3h1.2M61.8 10.6h1.2M27.9 14.6h1.2M66.1 9.6h1.2M65.2 13.5h1.2M47.9 13.7h1.2M75.5 17.0h1.2M30.0 15.1h1.2M30.0 20.9h1.2M95.3 15.5h1.2M112.9 13.1h1.2M42.4 13.1h1.2M64.2 17.5h1.2M47.5 17.1h1.2M20.0 14.0h1.2M119.7 12.5h1.2M58.5 11.6h1.2M62.5 12.9h1.2M24.1 17.8h1.2M30.3 14.5h1.2M100.7 15.0h1.2M115.3 19.1h1.2M97.4 13.7h1.2M94.1 10.6h1.2M15.8 9.4h1.2M25.9 14.1h1.2M119.1 15.2h1.2M47.1 12.0h1.2M58.2 8.1h1.2M49.9 18.2h1.2M3.5 16.4h1.2M128.1 15.4h1.2M64.0 10.7h1.2M96.5 13.6h1.2M28.6 11.3h1.2M80.3 11.7h1.2M23.3 14.5h1.2M119.6 15.3h1.2M44.7 12.0h1.2M13.3 12.4h1.2M8.5 15.0h1.2M48.4 10.0h1.2M88.2 11.4h1.2M123.6 9.3h1.2M52.5 19.1h1.2M76.2 13.1h1.2M113.9 11.4h1.2M31.9 13.6h1.2M113.0 13.9h1.2M103.9 14.2h1.2M99.8 9.3h1.2M6.7 13.9h1.2M33.3 12.9h1.2M22.0 15.7h1.2M9.0 11.0h1.2M126.9 17.5h1.2M96.2 11.8h1.2M123.7 13.7h1.2M67.8 13.4h1.2M27.4 13.0h1.2M108.1 14.8h1.2M77.6 9.1h1.2M55.0 9.8h1.2M39.7 11.4h1.2M68.9 12.9h1.2M1.3 17.2h1.2M88.4 14.0h1.2M76.6 13.4h1.2M83.1 15.2h1.2M33.2 11.2h1.2M52.3 18.1h1.2M17.2 12.3h1.2M12.2 13.9h1.2M57.6 13.8h1.2M18.2 15.7h1.2M16.3 11.1h1.2M69.5 12.3h1.2M28.3 15.8h1.2M21.4 14.4h1.2M91.6 15.5h1.2M71.0 16.8h1.2M112.7 14.5h1.2M99.9 13.6h1.2M59.8 13.2h1.2M8.2 13.6h1.2M91.8 12.1h1.2M32.6 12.9h1.2M5.4 11.7h1.2M50.2 11.8h1.2M38.1 17.9h1.2M64.9 8.4h1.2M12.7 11.9h1.2M77.6 9.9h1.2M124.8 13.3h1.2M40.0 12.7h1.2M72.3 10.9h1.2M8.2 15.9h1.2M45.8 8.0h1.2M41.0 14.5h1.2M9.8 13.5h1.2M9.5 15.0h1.2M57.8 10.1h1.2M80.2 16.6h1.2M57.1 13.9h1.2M66.7 11.8h1.2M29.1 14.9h1.2M6.3 12.0h1.2M90.8 14.2h1.2M105.4 13.1h1.2M30.5 11.1h1.2M49.7 10.4h1.2M124.2 13.8h1.2M11.0 11.0h1.2M92.5 13.8h1.2M114.9 14.1h1.2M97.8 10.5h1.2M86.2 15.7h1.2M88.1 10.9h1.2M31.6 15.4h1.2M79.3 12.4h1.2M106.4 19.9h1.2M0.8 12.0h1.2M40.3 12.7h1.2M18.8 15.5h1.2M71.4 15.1h1.2M121.7 14.4h1.2M95.8 12.5h1.2M123.3 13.7h1.2M90.8 14.0h1.2M82.8 15.4h1.2M87.9 13.1h1.2M41.6 18.9h1.2M32.8 14.2h1.2M87.9 12.5h1.2M25.8 12.1h1.2M48.9 12.5h1.2M121.4 11.2h1.2M79.6 14.0h1.2M36.2 14.5h1.2M35.1 15.4h1.2M24.3 14.1h1.2M104.5 13.4h1.2M120.6 13.4h1.2M64.7 13.1h1.2M5.1 10.8h1.2M31.0 11.4h1.2M1.0 12.6h1.2M39.9 13.2h1.2M58.6 15.2h1.2M17.4 12.2h1.2M102.1 14.7h1.2M6.3 11.1h1.2M24.2 11.2h1.2M29.0 15.1h1.2M103.5 16.3h1.2M114.0 9.3h1.2M2.3 12.7h1.2M116.1 13.1h1.2M96.4 13.6h1.2M7.7 12.1h1.2M105.2 11.1h1.2M60.8 11.6h1.2M103.2 12.6h1.2M45.6 15.0h1.2M38.4 10.3h1.2M9.2 10.2h1.2M8.7 10.2h1.2M24.5 13.3h1.2M34.8 14.1h1.2M63.9 13.7h1.2M87.8 12.8h1.2M13.4 12.4h1.2M120.1 11.3h1.2M89.1 13.0h1.2M93.9 12.6h1.2M106.7 13.4h1.2M27.6 15.5h1.2M68.7 14.0h1.2M81.0 15.1h1.2M63.7 16.6h1.2M20.9 15.9h1.2M116.9 10.3h1.2M87.7 14.3h1.2M116.5 17.2h1.2M68.8 18.4h1.2M50.3 10.3h1.2M121.5 17.1h1.2M1.5 12.0h1.2M45.4 11.2h1.2M97.5 11.5h1.2M83.4 16.2h1.2M69.2 17.8h1.2M113.7 15.6h1.2M71.6 21.0h1.2M100.0 13.2h1.2M46.7 9.0h1.2M10.7 12.4h1.2M69.6 14.3h1.2M105.1 12.7h1.2M3.5 14.4h1.2M54.6 13.1h1.2M85.8 13.3h1.2M27.2 17.4h1.2M67.5 16.6h1.2M115.5 12.4h1.2M31.0 13.4h1.2M54.7 11.1h1.2M96.9 10.6h1.2M84.0 13.5h1.2M48.8 15.8h1.2M63.2 13.2h1.2M59.2 16.2h1.2M4.6 14.8h1.2M103.6 10.9h1.2M95.0 12.7h1.2M48.6 6.6h1.2M50.8 16.7h1.2M75.0 13.6h1.2M74.4 15.0h1.2M29.3 13.5h1.2M94.7 14.5h1.2M7.1 11.2h1.2M47.8 14.7h1.2M59.5 11.2h1.2M50.2 11.4h1.2M89.4 11.4h1.2M111.6 13.5h1.2M32.3 11.4h1.2M100.9 14.8h1.2M25.6 8.6h1.2M109.4 14.2h1.2M39.7 12.9h1.2M81.7 16.0h1.2M34.2 16.8h1.2M88.0 13.1h1.2M26.7 15.0h1.2M64.2 13.1h1.2M88.5 12.0h1.2M43.2 12.3h1.2M24.9 11.8h1.2M18.2 16.7h1.2M53.4 14.7h1.2M15.9 15.8h1.2M2.7 11.3h1.2M93.5 11.5h1.2M64.6 12.2h1.2M124.1 11.3h1.2M82.0 15.7h1.2M47.2 11.4h1.2M82.0 16.5h1.2M58.9 11.9h1.2M101.8 13.4h1.2M2.6 12.0h1.2M28.6 11.6h1.2M75.7 12.7h1.2M63.2 13.0h1.2M21.3 14.1h1.2M42.4 11.6h1.2M27.8 14.9h1.2M19.6 13.9h1.2" stroke="#3a9a3a" stroke-width="1.2"/><path d="M0 45.5h130" stroke="#888" stroke-width="1"/><path d="M0.6 92V72M2.0 92V88M3.3 92V88M4.7 92V76M6.0 92V78M7.3 92V88M8.7 92V81M10.1 92V87M11.4 92V74M12.8 92V79M14.1 92V86M15.5 92V67M16.8 92V75M18.2 92V83M19.5 92V52M20.9 92V87M22.2 92V67M23.6 92V52M24.9 92V82M26.3 92V85M27.6 92V79M29.0 92V74M30.3 92V86M31.7 92V85M33.0 92V76M34.4 92V86M35.7 92V79M37.1 92V87M38.4 92V71M39.8 92V78M41.1 92V83M42.5 92V85M43.8 92V83M45.2 92V85M46.5 92V67M47.9 92V87M49.2 92V87M50.6 92V62M51.9 92V87M53.3 92V84M54.6 92V82M56.0 92V86M57.3 92V73M58.7 92V83M60.0 92V69M61.4 92V88M62.7 92V76M64.0 92V59M65.4 92V64M66.8 92V62M68.1 92V55M69.5 92V84M70.8 92V86M72.2 92V75M73.5 92V77M74.8 92V70M76.2 92V51M77.5 92V58M78.9 92V83M80.2 92V55M81.6 92V79M83.0 92V88M84.3 92V88M85.7 92V88M87.0 92V76M88.3 92V80M89.7 92V83M91.0 92V84M92.4 92V84M93.8 92V77M95.1 92V85M96.5 92V73M97.8 92V63M99.2 92V86M100.5 92V72M101.8 92V85M103.2 92V61M104.5 92V74M105.9 92V75M107.2 92V85M108.6 92V85M110.0 92V89M111.3 92V87M112.7 92V82M114.0 92V72M115.4 92V87M116.7 92V88M118.0 92V62M119.4 92V87M120.8 92V75M122.1 92V53M123.5 92V86M124.8 92V86M126.2 92V70M127.5 92V67M128.8 92V49" stroke="#111" stroke-width="1.15"/><rect x="0" y="87" width="130" height="5" fill="#111"/></svg>
<div class="t" style="left:1600.0px;top:53.6px;font-size:6px;color:#333;">10^(-4)</div>
<div class="t" style="left:1603.0px;top:69.0px;font-size:11px;color:#111;">2</div>
<div class="t" style="left:1603.0px;top:103.0px;font-size:11px;color:#111;">0</div>
<div class="t" style="left:1592.1px;top:103.7px;font-size:13px;color:#111;line-height:normal;transform-origin:50% 50%;transform:rotate(-90deg) scaleX(1.003)">Amplitude</div>
<div class="t" style="left:1398.7px;top:103.7px;font-size:13px;color:#111;line-height:normal;transform-origin:50% 50%;transform:rotate(-90deg) scaleX(0.911)">Firing rate (Hz)</div>
<div class="t" style="left:1451.7px;top:119.0px;font-size:11px;color:#111;">0.5</div>
<div class="t" style="left:1462.9px;top:156.0px;font-size:11px;color:#111;">0</div>
<div class="t" style="left:1504.8px;top:157.0px;font-size:11px;color:#111;">500</div>
<div class="t" style="left:1552.8px;top:157.0px;font-size:11px;color:#111;">1000</div>
<div class="t" style="left:1509.5px;top:166.2px;font-size:13px;color:#111;">Time (sec)</div>
<div class="r" style="left:806px;top:181px;width:840px;height:139px;background:#e4e4e4;"></div>
<div class="r" style="left:806px;top:320px;width:630px;height:141px;background:#e4e4e4;"></div>
<div class="r" style="left:807px;top:182px;width:208px;height:137px;background:#c0bdbd;"></div>
<div class="r" style="left:808px;top:187px;width:206px;height:131px;border:1px solid #f4f4f4;border-right:0;"></div>
<div class="r" style="left:811px;top:183px;width:11.5px;height:9px;background:#c0bdbd;"></div>
<div class="t" style="left:812.5px;top:181.9px;font-size:10px;color:#111;">1</div>
<svg class="s" style="left:839px;top:201px;" width="156" height="97" viewBox="0 0 156 97"><rect width="156" height="97" fill="#0e0707"/><path d="M0.0 22.3h4.9v11.6h-4.9zM4.9 22.3h9.8v11.6h-9.8zM14.7 23.3h9.8v11.6h-9.8zM24.5 23.3h9.8v11.6h-9.8zM34.3 24.2h9.8v11.6h-9.8zM44.1 40.7h9.8v11.6h-9.8zM53.9 59.2h9.8v11.6h-9.8zM63.7 38.8h9.8v11.6h-9.8zM73.5 15.5h9.8v11.6h-9.8zM83.3 12.6h9.8v11.6h-9.8zM93.1 15.5h9.8v11.6h-9.8zM102.9 16.5h9.8v11.6h-9.8zM112.7 17.5h9.8v11.6h-9.8zM122.5 18.4h9.8v11.6h-9.8zM132.3 19.4h9.8v11.6h-9.8zM142.1 19.4h9.8v11.6h-9.8zM151.9 20.4h4.1v11.6h-4.1z" fill="#670007"/><path d="M0.0 23.6h4.9v9.0h-4.9zM4.9 23.6h9.8v9.0h-9.8zM14.7 24.6h9.8v9.0h-9.8zM24.5 24.6h9.8v9.0h-9.8zM34.3 25.6h9.8v9.0h-9.8zM44.1 42.0h9.8v9.0h-9.8zM53.9 60.5h9.8v9.0h-9.8zM63.7 40.1h9.8v9.0h-9.8zM73.5 16.8h9.8v9.0h-9.8zM83.3 13.9h9.8v9.0h-9.8zM93.1 16.8h9.8v9.0h-9.8zM102.9 17.8h9.8v9.0h-9.8zM112.7 18.8h9.8v9.0h-9.8zM122.5 19.7h9.8v9.0h-9.8zM132.3 20.7h9.8v9.0h-9.8zM142.1 20.7h9.8v9.0h-9.8zM151.9 21.7h4.1v9.0h-4.1z" fill="#c20007"/><path d="M0.0 24.9h4.9v6.4h-4.9zM4.9 24.9h9.8v6.4h-9.8zM14.7 25.9h9.8v6.4h-9.8zM24.5 25.9h9.8v6.4h-9.8zM34.3 26.9h9.8v6.4h-9.8zM44.1 43.4h9.8v6.4h-9.8zM53.9 61.8h9.8v6.4h-9.8zM63.7 41.4h9.8v6.4h-9.8zM73.5 18.1h9.8v6.4h-9.8zM83.3 15.2h9.8v6.4h-9.8zM93.1 18.1h9.8v6.4h-9.8zM102.9 19.1h9.8v6.4h-9.8zM112.7 20.1h9.8v6.4h-9.8zM122.5 21.0h9.8v6.4h-9.8zM132.3 22.0h9.8v6.4h-9.8zM142.1 22.0h9.8v6.4h-9.8zM151.9 23.0h4.1v6.4h-4.1z" fill="#ff1f07"/><path d="M0.0 26.1h4.9v4.1h-4.9zM4.9 26.1h9.8v4.1h-9.8zM14.7 27.1h9.8v4.1h-9.8zM24.5 27.1h9.8v4.1h-9.8zM34.3 28.0h9.8v4.1h-9.8zM44.1 44.5h9.8v4.1h-9.8zM53.9 63.0h9.8v4.1h-9.8zM63.7 42.6h9.8v4.1h-9.8zM73.5 19.3h9.8v4.1h-9.8zM83.3 16.4h9.8v4.1h-9.8zM93.1 19.3h9.8v4.1h-9.8zM102.9 20.3h9.8v4.1h-9.8zM112.7 21.2h9.8v4.1h-9.8zM122.5 22.2h9.8v4.1h-9.8zM132.3 23.2h9.8v4.1h-9.8zM142.1 23.2h9.8v4.1h-9.8zM151.9 24.2h4.1v4.1h-4.1z" fill="#ff7207"/><path d="M0.0 27.3h4.9v1.7h-4.9zM4.9 27.3h9.8v1.7h-9.8zM14.7 28.2h9.8v1.7h-9.8zM24.5 28.2h9.8v1.7h-9.8zM34.3 29.2h9.8v1.7h-9.8zM44.1 45.7h9.8v1.7h-9.8zM53.9 64.1h9.8v1.7h-9.8zM63.7 43.7h9.8v1.7h-9.8zM73.5 20.5h9.8v1.7h-9.8zM83.3 17.6h9.8v1.7h-9.8zM93.1 20.5h9.8v1.7h-9.8zM102.9 21.4h9.8v1.7h-9.8zM112.7 22.4h9.8v1.7h-9.8zM122.5 23.4h9.8v1.7h-9.8zM132.3 24.3h9.8v1.7h-9.8zM142.1 24.3h9.8v1.7h-9.8zM151.9 25.3h4.1v1.7h-4.1z" fill="#ffcb07"/><rect x="9.7" y="88.7" width="97.7" height="3" fill="#3f46b8"/></svg>
<div class="t" style="left:840.0px;top:190.8px;font-size:8.5px;color:#666;">×10</div>
<div class="t" style="left:856.0px;top:189.1px;font-size:6px;color:#666;">-4</div>
<div class="t" style="left:833.8px;top:202.2px;font-size:7.5px;color:#555;">0</div>
<div class="t" style="left:831.3px;top:223.9px;font-size:7.5px;color:#555;">-1</div>
<div class="t" style="left:831.3px;top:245.6px;font-size:7.5px;color:#555;">-2</div>
<div class="t" style="left:831.3px;top:267.3px;font-size:7.5px;color:#555;">-3</div>
<div class="t" style="left:831.3px;top:289.0px;font-size:7.5px;color:#555;">-4</div>
<div class="t" style="left:787.4px;top:247.4px;font-size:11px;color:#222;line-height:normal;transform-origin:50% 50%;transform:rotate(-90deg) scaleX(0.918)">Cluster #1</div>
<div class="t" style="left:776.6px;top:247.4px;font-size:11px;color:#222;line-height:normal;transform-origin:50% 50%;transform:rotate(-90deg) scaleX(0.871)">N = 2319 (28 RPVs)</div>
<div class="t" style="left:877.4px;top:298.0px;font-size:11px;color:#111;">5</div>
<div class="t" style="left:918.9px;top:298.0px;font-size:11px;color:#111;">10</div>
<div class="t" style="left:963.5px;top:298.0px;font-size:11px;color:#111;">15</div>
<div class="t" style="left:893.1px;top:305.3px;font-size:13.5px;color:#111;transform:scaleX(0.874);">Sample</div>
<div class="r" style="left:1017px;top:182px;width:208px;height:137px;background:#6cc42c;"></div>
<div class="r" style="left:1018px;top:190px;width:30px;height:107px;background:#62c24c;"></div>
<div class="r" style="left:1067px;top:295px;width:139px;height:21px;background:#62c24c;"></div>
<div class="r" style="left:1018px;top:187px;width:206px;height:131px;border:1px solid #f4f4f4;border-right:0;"></div>
<div class="r" style="left:1021px;top:183px;width:11.5px;height:9px;background:#6cc42c;"></div>
<div class="t" style="left:1022.5px;top:181.9px;font-size:10px;color:#111;">5</div>
<svg class="s" style="left:1049px;top:201px;" width="156" height="97" viewBox="0 0 156 97"><rect width="156" height="97" fill="#0e0707"/><path d="M0.0 31.0h4.9v11.6h-4.9zM4.9 32.0h9.8v11.6h-9.8zM14.7 33.0h9.8v11.6h-9.8zM24.5 33.9h9.8v11.6h-9.8zM34.3 34.9h9.8v11.6h-9.8zM44.1 46.6h9.8v11.6h-9.8zM53.9 65.0h9.8v11.6h-9.8zM63.7 45.6h9.8v11.6h-9.8zM73.5 24.2h9.8v11.6h-9.8zM83.3 19.4h9.8v11.6h-9.8zM93.1 21.3h9.8v11.6h-9.8zM102.9 23.3h9.8v11.6h-9.8zM112.7 24.2h9.8v11.6h-9.8zM122.5 25.2h9.8v11.6h-9.8zM132.3 26.2h9.8v11.6h-9.8zM142.1 26.2h9.8v11.6h-9.8zM151.9 26.2h4.1v11.6h-4.1z" fill="#670007"/><path d="M0.0 32.3h4.9v9.0h-4.9zM4.9 33.3h9.8v9.0h-9.8zM14.7 34.3h9.8v9.0h-9.8zM24.5 35.3h9.8v9.0h-9.8zM34.3 36.2h9.8v9.0h-9.8zM44.1 47.9h9.8v9.0h-9.8zM53.9 66.3h9.8v9.0h-9.8zM63.7 46.9h9.8v9.0h-9.8zM73.5 25.6h9.8v9.0h-9.8zM83.3 20.7h9.8v9.0h-9.8zM93.1 22.6h9.8v9.0h-9.8zM102.9 24.6h9.8v9.0h-9.8zM112.7 25.6h9.8v9.0h-9.8zM122.5 26.5h9.8v9.0h-9.8zM132.3 27.5h9.8v9.0h-9.8zM142.1 27.5h9.8v9.0h-9.8zM151.9 27.5h4.1v9.0h-4.1z" fill="#c20007"/><path d="M0.0 33.7h4.9v6.4h-4.9zM4.9 34.6h9.8v6.4h-9.8zM14.7 35.6h9.8v6.4h-9.8zM24.5 36.6h9.8v6.4h-9.8zM34.3 37.5h9.8v6.4h-9.8zM44.1 49.2h9.8v6.4h-9.8zM53.9 67.6h9.8v6.4h-9.8zM63.7 48.2h9.8v6.4h-9.8zM73.5 26.9h9.8v6.4h-9.8zM83.3 22.0h9.8v6.4h-9.8zM93.1 24.0h9.8v6.4h-9.8zM102.9 25.9h9.8v6.4h-9.8zM112.7 26.9h9.8v6.4h-9.8zM122.5 27.8h9.8v6.4h-9.8zM132.3 28.8h9.8v6.4h-9.8zM142.1 28.8h9.8v6.4h-9.8zM151.9 28.8h4.1v6.4h-4.1z" fill="#ff1f07"/><path d="M0.0 34.8h4.9v4.1h-4.9zM4.9 35.8h9.8v4.1h-9.8zM14.7 36.8h9.8v4.1h-9.8zM24.5 37.7h9.8v4.1h-9.8zM34.3 38.7h9.8v4.1h-9.8zM44.1 50.3h9.8v4.1h-9.8zM53.9 68.8h9.8v4.1h-9.8zM63.7 49.4h9.8v4.1h-9.8zM73.5 28.0h9.8v4.1h-9.8zM83.3 23.2h9.8v4.1h-9.8zM93.1 25.1h9.8v4.1h-9.8zM102.9 27.1h9.8v4.1h-9.8zM112.7 28.0h9.8v4.1h-9.8zM122.5 29.0h9.8v4.1h-9.8zM132.3 30.0h9.8v4.1h-9.8zM142.1 30.0h9.8v4.1h-9.8zM151.9 30.0h4.1v4.1h-4.1z" fill="#ff7207"/><path d="M0.0 36.0h4.9v1.7h-4.9zM4.9 37.0h9.8v1.7h-9.8zM14.7 37.9h9.8v1.7h-9.8zM24.5 38.9h9.8v1.7h-9.8zM34.3 39.9h9.8v1.7h-9.8zM44.1 51.5h9.8v1.7h-9.8zM53.9 69.9h9.8v1.7h-9.8zM63.7 50.5h9.8v1.7h-9.8zM73.5 29.2h9.8v1.7h-9.8zM83.3 24.3h9.8v1.7h-9.8zM93.1 26.3h9.8v1.7h-9.8zM102.9 28.2h9.8v1.7h-9.8zM112.7 29.2h9.8v1.7h-9.8zM122.5 30.2h9.8v1.7h-9.8zM132.3 31.1h9.8v1.7h-9.8zM142.1 31.1h9.8v1.7h-9.8zM151.9 31.1h4.1v1.7h-4.1z" fill="#ffcb07"/><rect x="9.7" y="88.7" width="97.7" height="3" fill="#d43cc8"/></svg>
<div class="t" style="left:1050.0px;top:190.8px;font-size:8.5px;color:#666;">×10</div>
<div class="t" style="left:1066.0px;top:189.1px;font-size:6px;color:#666;">-4</div>
<div class="t" style="left:1000.7px;top:247.4px;font-size:11px;color:#222;line-height:normal;transform-origin:50% 50%;transform:rotate(-90deg) scaleX(0.918)">Cluster #5</div>
<div class="t" style="left:995.7px;top:247.4px;font-size:11px;color:#222;line-height:normal;transform-origin:50% 50%;transform:rotate(-90deg) scaleX(0.867)">N = 462 (7 RPVs)</div>
<div class="t" style="left:1087.4px;top:298.0px;font-size:11px;color:#111;">5</div>
<div class="t" style="left:1128.9px;top:298.0px;font-size:11px;color:#111;">10</div>
<div class="t" style="left:1173.5px;top:298.0px;font-size:11px;color:#111;">15</div>
<div class="t" style="left:1103.1px;top:305.3px;font-size:13.5px;color:#111;transform:scaleX(0.874);">Sample</div>
<div class="r" style="left:1226.5px;top:182px;width:208.5px;height:137px;background:#ffffff;"></div>
<div class="r" style="left:1227.5px;top:187px;width:206.5px;height:131px;border:1px solid #dcdcdc;border-right:0;"></div>
<div class="r" style="left:1230.5px;top:183px;width:11.5px;height:9px;background:#ffffff;"></div>
<div class="t" style="left:1232.0px;top:181.9px;font-size:10px;color:#111;">7</div>
<svg class="s" style="left:1259px;top:201px;" width="156" height="97" viewBox="0 0 156 97"><rect width="156" height="97" fill="#0e0707"/><path d="M0.0 35.9h4.9v11.6h-4.9zM4.9 35.9h9.8v11.6h-9.8zM14.7 36.9h9.8v11.6h-9.8zM24.5 37.8h9.8v11.6h-9.8zM34.3 38.8h9.8v11.6h-9.8zM44.1 52.4h9.8v11.6h-9.8zM53.9 69.8h9.8v11.6h-9.8zM63.7 50.4h9.8v11.6h-9.8zM73.5 28.1h9.8v11.6h-9.8zM83.3 23.3h9.8v11.6h-9.8zM93.1 25.2h9.8v11.6h-9.8zM102.9 27.2h9.8v11.6h-9.8zM112.7 28.1h9.8v11.6h-9.8zM122.5 28.1h9.8v11.6h-9.8zM132.3 29.1h9.8v11.6h-9.8zM142.1 29.1h9.8v11.6h-9.8zM151.9 29.1h4.1v11.6h-4.1z" fill="#670007"/><path d="M0.0 37.2h4.9v9.0h-4.9zM4.9 37.2h9.8v9.0h-9.8zM14.7 38.2h9.8v9.0h-9.8zM24.5 39.1h9.8v9.0h-9.8zM34.3 40.1h9.8v9.0h-9.8zM44.1 53.7h9.8v9.0h-9.8zM53.9 71.1h9.8v9.0h-9.8zM63.7 51.7h9.8v9.0h-9.8zM73.5 29.4h9.8v9.0h-9.8zM83.3 24.6h9.8v9.0h-9.8zM93.1 26.5h9.8v9.0h-9.8zM102.9 28.5h9.8v9.0h-9.8zM112.7 29.4h9.8v9.0h-9.8zM122.5 29.4h9.8v9.0h-9.8zM132.3 30.4h9.8v9.0h-9.8zM142.1 30.4h9.8v9.0h-9.8zM151.9 30.4h4.1v9.0h-4.1z" fill="#c20007"/><path d="M0.0 38.5h4.9v6.4h-4.9zM4.9 38.5h9.8v6.4h-9.8zM14.7 39.5h9.8v6.4h-9.8zM24.5 40.4h9.8v6.4h-9.8zM34.3 41.4h9.8v6.4h-9.8zM44.1 55.0h9.8v6.4h-9.8zM53.9 72.5h9.8v6.4h-9.8zM63.7 53.1h9.8v6.4h-9.8zM73.5 30.7h9.8v6.4h-9.8zM83.3 25.9h9.8v6.4h-9.8zM93.1 27.8h9.8v6.4h-9.8zM102.9 29.8h9.8v6.4h-9.8zM112.7 30.7h9.8v6.4h-9.8zM122.5 30.7h9.8v6.4h-9.8zM132.3 31.7h9.8v6.4h-9.8zM142.1 31.7h9.8v6.4h-9.8zM151.9 31.7h4.1v6.4h-4.1z" fill="#ff1f07"/><path d="M0.0 39.7h4.9v4.1h-4.9zM4.9 39.7h9.8v4.1h-9.8zM14.7 40.6h9.8v4.1h-9.8zM24.5 41.6h9.8v4.1h-9.8zM34.3 42.6h9.8v4.1h-9.8zM44.1 56.2h9.8v4.1h-9.8zM53.9 73.6h9.8v4.1h-9.8zM63.7 54.2h9.8v4.1h-9.8zM73.5 31.9h9.8v4.1h-9.8zM83.3 27.1h9.8v4.1h-9.8zM93.1 29.0h9.8v4.1h-9.8zM102.9 30.9h9.8v4.1h-9.8zM112.7 31.9h9.8v4.1h-9.8zM122.5 31.9h9.8v4.1h-9.8zM132.3 32.9h9.8v4.1h-9.8zM142.1 32.9h9.8v4.1h-9.8zM151.9 32.9h4.1v4.1h-4.1z" fill="#ff7207"/><path d="M0.0 40.8h4.9v1.7h-4.9zM4.9 40.8h9.8v1.7h-9.8zM14.7 41.8h9.8v1.7h-9.8zM24.5 42.8h9.8v1.7h-9.8zM34.3 43.7h9.8v1.7h-9.8zM44.1 57.3h9.8v1.7h-9.8zM53.9 74.8h9.8v1.7h-9.8zM63.7 55.4h9.8v1.7h-9.8zM73.5 33.1h9.8v1.7h-9.8zM83.3 28.2h9.8v1.7h-9.8zM93.1 30.2h9.8v1.7h-9.8zM102.9 32.1h9.8v1.7h-9.8zM112.7 33.1h9.8v1.7h-9.8zM122.5 33.1h9.8v1.7h-9.8zM132.3 34.0h9.8v1.7h-9.8zM142.1 34.0h9.8v1.7h-9.8zM151.9 34.0h4.1v1.7h-4.1z" fill="#ffcb07"/><rect x="9.7" y="88.7" width="97.7" height="3" fill="#e63a1e"/></svg>
<div class="t" style="left:1260.0px;top:190.8px;font-size:8.5px;color:#666;">×10</div>
<div class="t" style="left:1276.0px;top:189.1px;font-size:6px;color:#666;">-4</div>
<div class="t" style="left:1210.2px;top:247.4px;font-size:11px;color:#222;line-height:normal;transform-origin:50% 50%;transform:rotate(-90deg) scaleX(0.918)">Cluster #7</div>
<div class="t" style="left:1205.2px;top:247.4px;font-size:11px;color:#222;line-height:normal;transform-origin:50% 50%;transform:rotate(-90deg) scaleX(0.867)">N = 150 (2 RPVs)</div>
<div class="t" style="left:1297.4px;top:298.0px;font-size:11px;color:#111;">5</div>
<div class="t" style="left:1338.9px;top:298.0px;font-size:11px;color:#111;">10</div>
<div class="t" style="left:1383.5px;top:298.0px;font-size:11px;color:#111;">15</div>
<div class="t" style="left:1313.1px;top:305.3px;font-size:13.5px;color:#111;transform:scaleX(0.874);">Sample</div>
<div class="r" style="left:1437px;top:182px;width:209px;height:137px;background:#ffffff;"></div>
<div class="r" style="left:1438px;top:187px;width:207px;height:131px;border:1px solid #dcdcdc;border-right:0;"></div>
<div class="r" style="left:1441px;top:183px;width:11.5px;height:9px;background:#ffffff;"></div>
<div class="t" style="left:1442.5px;top:181.9px;font-size:10px;color:#111;">8</div>
<svg class="s" style="left:1468px;top:201px;" width="156" height="97" viewBox="0 0 156 97"><rect width="156" height="97" fill="#0e0707"/><path d="M0.0 35.9h4.9v11.6h-4.9zM4.9 36.9h9.8v11.6h-9.8zM14.7 37.8h9.8v11.6h-9.8zM24.5 38.8h9.8v11.6h-9.8zM34.3 39.8h9.8v11.6h-9.8zM44.1 54.3h9.8v11.6h-9.8zM53.9 70.8h9.8v11.6h-9.8zM63.7 49.5h9.8v11.6h-9.8zM73.5 29.1h9.8v11.6h-9.8zM83.3 25.2h9.8v11.6h-9.8zM93.1 28.1h9.8v11.6h-9.8zM102.9 30.1h9.8v11.6h-9.8zM112.7 31.0h9.8v11.6h-9.8zM122.5 32.0h9.8v11.6h-9.8zM132.3 33.0h9.8v11.6h-9.8zM142.1 33.0h9.8v11.6h-9.8zM151.9 33.9h4.1v11.6h-4.1z" fill="#670007"/><path d="M0.0 37.2h4.9v9.0h-4.9zM4.9 38.2h9.8v9.0h-9.8zM14.7 39.1h9.8v9.0h-9.8zM24.5 40.1h9.8v9.0h-9.8zM34.3 41.1h9.8v9.0h-9.8zM44.1 55.6h9.8v9.0h-9.8zM53.9 72.1h9.8v9.0h-9.8zM63.7 50.8h9.8v9.0h-9.8zM73.5 30.4h9.8v9.0h-9.8zM83.3 26.5h9.8v9.0h-9.8zM93.1 29.4h9.8v9.0h-9.8zM102.9 31.4h9.8v9.0h-9.8zM112.7 32.3h9.8v9.0h-9.8zM122.5 33.3h9.8v9.0h-9.8zM132.3 34.3h9.8v9.0h-9.8zM142.1 34.3h9.8v9.0h-9.8zM151.9 35.3h4.1v9.0h-4.1z" fill="#c20007"/><path d="M0.0 38.5h4.9v6.4h-4.9zM4.9 39.5h9.8v6.4h-9.8zM14.7 40.4h9.8v6.4h-9.8zM24.5 41.4h9.8v6.4h-9.8zM34.3 42.4h9.8v6.4h-9.8zM44.1 56.9h9.8v6.4h-9.8zM53.9 73.4h9.8v6.4h-9.8zM63.7 52.1h9.8v6.4h-9.8zM73.5 31.7h9.8v6.4h-9.8zM83.3 27.8h9.8v6.4h-9.8zM93.1 30.7h9.8v6.4h-9.8zM102.9 32.7h9.8v6.4h-9.8zM112.7 33.7h9.8v6.4h-9.8zM122.5 34.6h9.8v6.4h-9.8zM132.3 35.6h9.8v6.4h-9.8zM142.1 35.6h9.8v6.4h-9.8zM151.9 36.6h4.1v6.4h-4.1z" fill="#ff1f07"/><path d="M0.0 39.7h4.9v4.1h-4.9zM4.9 40.6h9.8v4.1h-9.8zM14.7 41.6h9.8v4.1h-9.8zM24.5 42.6h9.8v4.1h-9.8zM34.3 43.6h9.8v4.1h-9.8zM44.1 58.1h9.8v4.1h-9.8zM53.9 74.6h9.8v4.1h-9.8zM63.7 53.3h9.8v4.1h-9.8zM73.5 32.9h9.8v4.1h-9.8zM83.3 29.0h9.8v4.1h-9.8zM93.1 31.9h9.8v4.1h-9.8zM102.9 33.9h9.8v4.1h-9.8zM112.7 34.8h9.8v4.1h-9.8zM122.5 35.8h9.8v4.1h-9.8zM132.3 36.8h9.8v4.1h-9.8zM142.1 36.8h9.8v4.1h-9.8zM151.9 37.7h4.1v4.1h-4.1z" fill="#ff7207"/><path d="M0.0 40.8h4.9v1.7h-4.9zM4.9 41.8h9.8v1.7h-9.8zM14.7 42.8h9.8v1.7h-9.8zM24.5 43.7h9.8v1.7h-9.8zM34.3 44.7h9.8v1.7h-9.8zM44.1 59.3h9.8v1.7h-9.8zM53.9 75.8h9.8v1.7h-9.8zM63.7 54.4h9.8v1.7h-9.8zM73.5 34.0h9.8v1.7h-9.8zM83.3 30.2h9.8v1.7h-9.8zM93.1 33.1h9.8v1.7h-9.8zM102.9 35.0h9.8v1.7h-9.8zM112.7 36.0h9.8v1.7h-9.8zM122.5 37.0h9.8v1.7h-9.8zM132.3 37.9h9.8v1.7h-9.8zM142.1 37.9h9.8v1.7h-9.8zM151.9 38.9h4.1v1.7h-4.1z" fill="#ffcb07"/><rect x="9.7" y="88.7" width="97.7" height="3" fill="#f0a814"/></svg>
<div class="t" style="left:1469.0px;top:190.8px;font-size:8.5px;color:#666;">×10</div>
<div class="t" style="left:1485.0px;top:189.1px;font-size:6px;color:#666;">-4</div>
<div class="t" style="left:1420.7px;top:247.4px;font-size:11px;color:#222;line-height:normal;transform-origin:50% 50%;transform:rotate(-90deg) scaleX(0.918)">Cluster #8</div>
<div class="t" style="left:1415.7px;top:247.4px;font-size:11px;color:#222;line-height:normal;transform-origin:50% 50%;transform:rotate(-90deg) scaleX(0.867)">N = 101 (1 RPVs)</div>
<div class="t" style="left:1506.4px;top:298.0px;font-size:11px;color:#111;">5</div>
<div class="t" style="left:1547.9px;top:298.0px;font-size:11px;color:#111;">10</div>
<div class="t" style="left:1592.5px;top:298.0px;font-size:11px;color:#111;">15</div>
<div class="t" style="left:1522.1px;top:305.3px;font-size:13.5px;color:#111;transform:scaleX(0.874);">Sample</div>
<div class="r" style="left:807px;top:321px;width:208px;height:139px;background:#c0bdbd;"></div>
<div class="r" style="left:808px;top:326px;width:206px;height:133px;border:1px solid #f4f4f4;border-right:0;"></div>
<div class="r" style="left:811px;top:322px;width:18.0px;height:9px;background:#c0bdbd;"></div>
<div class="t" style="left:812.5px;top:320.9px;font-size:10px;color:#111;">10</div>
<svg class="s" style="left:839px;top:342px;" width="156" height="96" viewBox="0 0 156 96"><rect width="156" height="96" fill="#0e0707"/><path d="M0.0 50.7h4.9v1.2h-4.9zM0.0 53.6h4.9v1.2h-4.9zM4.9 54.3h9.8v1.2h-9.8zM4.9 60.3h9.8v1.2h-9.8zM4.9 46.2h9.8v1.2h-9.8zM14.7 46.2h9.8v1.2h-9.8zM24.5 56.1h9.8v1.2h-9.8zM24.5 50.9h9.8v1.2h-9.8zM34.3 37.5h9.8v1.2h-9.8zM34.3 53.4h9.8v1.2h-9.8zM44.1 80.2h9.8v1.2h-9.8zM44.1 62.0h9.8v1.2h-9.8zM44.1 68.9h9.8v1.2h-9.8zM53.9 81.1h9.8v1.2h-9.8zM53.9 79.5h9.8v1.2h-9.8zM63.7 64.4h9.8v1.2h-9.8zM63.7 63.4h9.8v1.2h-9.8zM63.7 67.6h9.8v1.2h-9.8zM63.7 68.0h9.8v1.2h-9.8zM73.5 49.3h9.8v1.2h-9.8zM83.3 38.5h9.8v1.2h-9.8zM83.3 48.6h9.8v1.2h-9.8zM83.3 36.5h9.8v1.2h-9.8zM93.1 42.5h9.8v1.2h-9.8zM102.9 51.0h9.8v1.2h-9.8zM102.9 50.4h9.8v1.2h-9.8zM102.9 42.1h9.8v1.2h-9.8zM102.9 40.5h9.8v1.2h-9.8zM112.7 38.8h9.8v1.2h-9.8zM112.7 44.8h9.8v1.2h-9.8zM112.7 51.1h9.8v1.2h-9.8zM122.5 42.4h9.8v1.2h-9.8zM122.5 46.4h9.8v1.2h-9.8zM122.5 42.7h9.8v1.2h-9.8zM132.3 41.2h9.8v1.2h-9.8zM132.3 50.8h9.8v1.2h-9.8zM142.1 48.3h9.8v1.2h-9.8z" fill="#670007"/><path d="M0.0 56.0h4.9v1.2h-4.9zM0.0 53.0h4.9v1.2h-4.9zM4.9 44.3h9.8v1.2h-9.8zM4.9 58.4h9.8v1.2h-9.8zM4.9 53.0h9.8v1.2h-9.8zM14.7 54.7h9.8v1.2h-9.8zM14.7 49.0h9.8v1.2h-9.8zM14.7 55.0h9.8v1.2h-9.8zM24.5 58.1h9.8v1.2h-9.8zM44.1 62.9h9.8v1.2h-9.8zM44.1 68.6h9.8v1.2h-9.8zM44.1 61.5h9.8v1.2h-9.8zM53.9 91.2h9.8v1.2h-9.8zM53.9 81.2h9.8v1.2h-9.8zM73.5 43.9h9.8v1.2h-9.8zM93.1 43.3h9.8v1.2h-9.8zM93.1 34.8h9.8v1.2h-9.8zM102.9 42.4h9.8v1.2h-9.8zM122.5 45.3h9.8v1.2h-9.8zM122.5 48.5h9.8v1.2h-9.8zM132.3 43.0h9.8v1.2h-9.8zM132.3 43.4h9.8v1.2h-9.8zM132.3 49.3h9.8v1.2h-9.8zM142.1 43.7h9.8v1.2h-9.8z" fill="#850007"/><path d="M0.0 49.1h4.9v1.2h-4.9zM24.5 49.8h9.8v1.2h-9.8zM24.5 47.9h9.8v1.2h-9.8zM24.5 61.6h9.8v1.2h-9.8zM34.3 53.6h9.8v1.2h-9.8zM34.3 53.2h9.8v1.2h-9.8zM34.3 52.1h9.8v1.2h-9.8zM53.9 85.6h9.8v1.2h-9.8zM53.9 82.8h9.8v1.2h-9.8zM53.9 77.6h9.8v1.2h-9.8zM63.7 74.8h9.8v1.2h-9.8zM73.5 39.3h9.8v1.2h-9.8zM73.5 45.9h9.8v1.2h-9.8zM73.5 46.6h9.8v1.2h-9.8zM83.3 34.5h9.8v1.2h-9.8zM93.1 47.6h9.8v1.2h-9.8zM93.1 41.6h9.8v1.2h-9.8zM102.9 41.0h9.8v1.2h-9.8zM112.7 41.5h9.8v1.2h-9.8zM112.7 39.1h9.8v1.2h-9.8zM112.7 45.5h9.8v1.2h-9.8zM122.5 47.7h9.8v1.2h-9.8zM122.5 41.6h9.8v1.2h-9.8zM132.3 40.5h9.8v1.2h-9.8zM142.1 43.9h9.8v1.2h-9.8zM142.1 40.9h9.8v1.2h-9.8zM151.9 48.3h4.1v1.2h-4.1zM151.9 40.1h4.1v1.2h-4.1z" fill="#490007"/><path d="M0.0 49.1h4.9v1.2h-4.9zM4.9 56.5h9.8v1.2h-9.8zM14.7 54.6h9.8v1.2h-9.8zM14.7 57.9h9.8v1.2h-9.8zM14.7 48.3h9.8v1.2h-9.8zM24.5 42.1h9.8v1.2h-9.8zM34.3 53.3h9.8v1.2h-9.8zM63.7 64.4h9.8v1.2h-9.8zM63.7 72.5h9.8v1.2h-9.8zM73.5 46.0h9.8v1.2h-9.8zM73.5 40.1h9.8v1.2h-9.8zM83.3 43.1h9.8v1.2h-9.8zM83.3 40.9h9.8v1.2h-9.8zM83.3 41.0h9.8v1.2h-9.8zM93.1 40.3h9.8v1.2h-9.8zM93.1 49.4h9.8v1.2h-9.8zM102.9 47.9h9.8v1.2h-9.8zM112.7 52.8h9.8v1.2h-9.8zM132.3 48.3h9.8v1.2h-9.8zM142.1 51.7h9.8v1.2h-9.8zM142.1 50.0h9.8v1.2h-9.8zM142.1 41.1h9.8v1.2h-9.8zM151.9 48.5h4.1v1.2h-4.1zM151.9 47.8h4.1v1.2h-4.1zM151.9 51.2h4.1v1.2h-4.1zM151.9 41.7h4.1v1.2h-4.1zM151.9 43.5h4.1v1.2h-4.1z" fill="#a40007"/><path d="M0.0 50.1h4.9v1.2h-4.9zM0.0 49.1h4.9v1.4h-4.9zM14.7 53.8h9.8v1.4h-9.8zM34.3 50.1h9.8v1.2h-9.8zM44.1 66.1h9.8v1.2h-9.8zM44.1 67.9h9.8v1.4h-9.8zM63.7 64.9h9.8v1.4h-9.8zM93.1 44.7h9.8v1.4h-9.8zM112.7 45.3h9.8v1.4h-9.8zM142.1 47.2h9.8v1.4h-9.8zM151.9 45.5h4.1v1.4h-4.1z" fill="#c20007"/><path d="M0.0 48.6h4.9v1.4h-4.9zM24.5 53.4h9.8v1.4h-9.8zM24.5 53.3h9.8v1.4h-9.8zM73.5 44.0h9.8v1.4h-9.8zM102.9 44.9h9.8v1.4h-9.8zM142.1 47.2h9.8v1.4h-9.8zM151.9 47.2h4.1v1.4h-4.1z" fill="#ff0007"/><path d="M4.9 51.5h9.8v1.4h-9.8zM4.9 50.0h9.8v1.4h-9.8zM14.7 52.0h9.8v1.4h-9.8zM34.3 53.6h9.8v1.4h-9.8zM34.3 52.9h9.8v1.4h-9.8zM83.3 41.8h9.8v1.4h-9.8zM83.3 40.5h9.8v1.4h-9.8zM93.1 42.5h9.8v1.4h-9.8zM112.7 45.7h9.8v1.4h-9.8zM132.3 45.2h9.8v1.4h-9.8z" fill="#ff1f07"/><path d="M4.9 51.7h9.8v1.0h-9.8zM24.5 53.1h9.8v1.0h-9.8zM142.1 47.8h9.8v1.0h-9.8z" fill="#ff7f07"/><path d="M44.1 69.2h9.8v1.4h-9.8zM53.9 82.1h9.8v1.4h-9.8zM53.9 83.9h9.8v1.4h-9.8zM63.7 67.2h9.8v1.4h-9.8zM73.5 41.4h9.8v1.4h-9.8zM102.9 45.8h9.8v1.4h-9.8zM122.5 46.0h9.8v1.4h-9.8zM122.5 46.7h9.8v1.4h-9.8zM132.3 46.9h9.8v1.4h-9.8z" fill="#e00007"/><rect x="9.7" y="87.8" width="97.7" height="3" fill="#50c01c"/></svg>
<div class="t" style="left:840.0px;top:331.8px;font-size:8.5px;color:#666;">×10</div>
<div class="t" style="left:856.0px;top:330.1px;font-size:6px;color:#666;">-4</div>
<div class="t" style="left:787.7px;top:387.9px;font-size:11px;color:#222;line-height:normal;transform-origin:50% 50%;transform:rotate(-90deg) scaleX(0.924)">Cluster #10</div>
<div class="t" style="left:788.8px;top:387.9px;font-size:11px;color:#222;line-height:normal;transform-origin:50% 50%;transform:rotate(-90deg) scaleX(0.871)">N = 35 (1 RPVs)</div>
<div class="t" style="left:877.4px;top:438.0px;font-size:11px;color:#111;">5</div>
<div class="t" style="left:918.9px;top:438.0px;font-size:11px;color:#111;">10</div>
<div class="t" style="left:963.5px;top:438.0px;font-size:11px;color:#111;">15</div>
<div class="t" style="left:893.1px;top:445.3px;font-size:13.5px;color:#111;transform:scaleX(0.874);">Sample</div>
<div class="r" style="left:1017px;top:321px;width:208px;height:139px;background:#d24a44;"></div>
<div class="r" style="left:1018px;top:326px;width:206px;height:133px;border:1px solid #f4f4f4;border-right:0;"></div>
<div class="r" style="left:1021px;top:322px;width:18.0px;height:9px;background:#d24a44;"></div>
<div class="t" style="left:1022.5px;top:320.9px;font-size:10px;color:#111;">11</div>
<svg class="s" style="left:1049px;top:342px;" width="156" height="96" viewBox="0 0 156 96"><rect width="156" height="96" fill="#0e0707"/><path d="M0.0 49.5h4.9v1.2h-4.9zM0.0 46.1h4.9v1.2h-4.9zM4.9 42.9h9.8v1.2h-9.8zM14.7 44.3h9.8v1.2h-9.8zM14.7 47.4h9.8v1.2h-9.8zM14.7 49.2h9.8v1.2h-9.8zM24.5 55.5h9.8v1.2h-9.8zM24.5 59.0h9.8v1.2h-9.8zM34.3 51.4h9.8v1.2h-9.8zM44.1 56.8h9.8v1.2h-9.8zM44.1 58.1h9.8v1.2h-9.8zM53.9 66.3h9.8v1.2h-9.8zM53.9 57.9h9.8v1.2h-9.8zM53.9 59.6h9.8v1.2h-9.8zM73.5 51.0h9.8v1.2h-9.8zM93.1 45.7h9.8v1.2h-9.8zM102.9 49.3h9.8v1.2h-9.8zM102.9 52.5h9.8v1.2h-9.8zM122.5 45.6h9.8v1.2h-9.8zM122.5 38.4h9.8v1.2h-9.8zM122.5 49.8h9.8v1.2h-9.8zM132.3 45.8h9.8v1.2h-9.8zM132.3 46.9h9.8v1.2h-9.8zM132.3 51.2h9.8v1.2h-9.8zM151.9 46.2h4.1v1.2h-4.1zM151.9 57.3h4.1v1.2h-4.1zM151.9 47.2h4.1v1.2h-4.1zM151.9 48.9h4.1v1.2h-4.1z" fill="#670007"/><path d="M0.0 51.5h4.9v1.2h-4.9zM0.0 50.3h4.9v1.2h-4.9zM4.9 52.6h9.8v1.2h-9.8zM14.7 46.3h9.8v1.2h-9.8zM14.7 50.8h9.8v1.2h-9.8zM24.5 41.9h9.8v1.2h-9.8zM24.5 47.7h9.8v1.2h-9.8zM44.1 56.5h9.8v1.2h-9.8zM44.1 57.6h9.8v1.2h-9.8zM44.1 54.9h9.8v1.2h-9.8zM53.9 53.4h9.8v1.2h-9.8zM63.7 47.7h9.8v1.2h-9.8zM73.5 62.4h9.8v1.2h-9.8zM73.5 58.8h9.8v1.2h-9.8zM83.3 50.6h9.8v1.2h-9.8zM93.1 48.3h9.8v1.2h-9.8zM93.1 50.0h9.8v1.2h-9.8zM93.1 55.3h9.8v1.2h-9.8zM102.9 50.4h9.8v1.2h-9.8zM112.7 56.7h9.8v1.2h-9.8zM112.7 50.4h9.8v1.2h-9.8zM132.3 49.6h9.8v1.2h-9.8zM142.1 51.4h9.8v1.2h-9.8z" fill="#490007"/><path d="M0.0 53.6h4.9v1.2h-4.9zM0.0 51.2h4.9v1.2h-4.9zM4.9 45.1h9.8v1.2h-9.8zM4.9 44.9h9.8v1.2h-9.8zM4.9 55.0h9.8v1.2h-9.8zM24.5 50.5h9.8v1.2h-9.8zM34.3 61.3h9.8v1.2h-9.8zM34.3 45.2h9.8v1.2h-9.8zM34.3 56.0h9.8v1.2h-9.8zM34.3 52.6h9.8v1.2h-9.8zM34.3 58.1h9.8v1.2h-9.8zM44.1 58.7h9.8v1.2h-9.8zM53.9 74.9h9.8v1.2h-9.8zM63.7 56.0h9.8v1.2h-9.8zM63.7 59.8h9.8v1.2h-9.8zM63.7 57.4h9.8v1.2h-9.8zM73.5 58.0h9.8v1.2h-9.8zM73.5 46.8h9.8v1.2h-9.8zM73.5 50.6h9.8v1.2h-9.8zM83.3 46.3h9.8v1.2h-9.8zM83.3 45.8h9.8v1.2h-9.8zM83.3 50.4h9.8v1.2h-9.8zM83.3 51.9h9.8v1.2h-9.8zM83.3 48.7h9.8v1.2h-9.8zM83.3 54.5h9.8v1.2h-9.8zM102.9 44.7h9.8v1.2h-9.8zM102.9 48.6h9.8v1.2h-9.8zM112.7 45.3h9.8v1.2h-9.8zM122.5 42.7h9.8v1.2h-9.8zM122.5 50.4h9.8v1.2h-9.8zM132.3 50.6h9.8v1.2h-9.8zM132.3 47.0h9.8v1.2h-9.8zM142.1 47.5h9.8v1.2h-9.8zM142.1 41.4h9.8v1.2h-9.8zM142.1 47.6h9.8v1.2h-9.8zM151.9 42.2h4.1v1.2h-4.1z" fill="#a40007"/><path d="M0.0 49.6h4.9v1.2h-4.9zM4.9 55.7h9.8v1.2h-9.8zM4.9 53.5h9.8v1.2h-9.8zM14.7 56.9h9.8v1.2h-9.8zM14.7 49.0h9.8v1.2h-9.8zM24.5 51.2h9.8v1.2h-9.8zM24.5 52.3h9.8v1.2h-9.8zM34.3 42.9h9.8v1.2h-9.8zM53.9 47.4h9.8v1.2h-9.8zM53.9 65.6h9.8v1.2h-9.8zM63.7 56.2h9.8v1.2h-9.8zM63.7 54.8h9.8v1.2h-9.8zM63.7 57.0h9.8v1.2h-9.8zM73.5 45.6h9.8v1.2h-9.8zM93.1 49.1h9.8v1.2h-9.8zM93.1 40.1h9.8v1.2h-9.8zM93.1 44.2h9.8v1.2h-9.8zM102.9 44.5h9.8v1.2h-9.8zM102.9 47.9h9.8v1.2h-9.8zM112.7 46.3h9.8v1.2h-9.8zM112.7 53.2h9.8v1.2h-9.8zM112.7 52.3h9.8v1.2h-9.8zM112.7 48.5h9.8v1.2h-9.8zM122.5 54.5h9.8v1.2h-9.8zM132.3 52.0h9.8v1.2h-9.8zM142.1 36.7h9.8v1.2h-9.8zM142.1 49.7h9.8v1.2h-9.8zM142.1 46.9h9.8v1.2h-9.8zM151.9 50.9h4.1v1.2h-4.1zM151.9 50.5h4.1v1.2h-4.1z" fill="#850007"/><path d="M0.0 49.7h4.9v1.4h-4.9zM4.9 49.1h9.8v1.4h-9.8zM63.7 57.3h9.8v1.4h-9.8zM83.3 49.7h9.8v1.4h-9.8zM132.3 48.5h9.8v1.4h-9.8z" fill="#ff1f07"/><path d="M0.0 50.2h4.9v1.4h-4.9zM63.7 54.1h9.8v1.4h-9.8zM73.5 54.2h9.8v1.4h-9.8zM93.1 47.4h9.8v1.4h-9.8zM122.5 48.4h9.8v1.4h-9.8zM142.1 47.3h9.8v1.4h-9.8zM151.9 47.9h4.1v1.4h-4.1z" fill="#ff0007"/><path d="M4.9 51.1h9.8v1.4h-9.8zM14.7 51.6h9.8v1.4h-9.8zM14.7 50.9h9.8v1.4h-9.8zM24.5 50.8h9.8v1.4h-9.8zM34.3 49.9h9.8v1.4h-9.8zM44.1 55.4h9.8v1.4h-9.8zM53.9 58.8h9.8v1.4h-9.8zM53.9 59.7h9.8v1.4h-9.8zM83.3 49.2h9.8v1.4h-9.8zM102.9 47.8h9.8v1.4h-9.8zM102.9 47.6h9.8v1.4h-9.8zM112.7 47.0h9.8v1.4h-9.8zM132.3 49.8h9.8v1.4h-9.8zM142.1 45.7h9.8v1.4h-9.8z" fill="#e00007"/><path d="M24.5 51.8h9.8v1.4h-9.8zM34.3 52.8h9.8v1.4h-9.8zM44.1 55.5h9.8v1.2h-9.8zM44.1 56.0h9.8v1.4h-9.8zM73.5 54.3h9.8v1.4h-9.8zM93.1 50.4h9.8v1.4h-9.8zM112.7 48.0h9.8v1.4h-9.8zM122.5 43.5h9.8v1.2h-9.8zM122.5 46.7h9.8v1.4h-9.8zM151.9 46.4h4.1v1.4h-4.1z" fill="#c20007"/><path d="M34.3 53.8h9.8v1.0h-9.8zM122.5 47.6h9.8v1.0h-9.8z" fill="#ff7f07"/><rect x="9.7" y="87.8" width="97.7" height="3" fill="#88dcec"/></svg>
<div class="t" style="left:1050.0px;top:331.8px;font-size:8.5px;color:#666;">×10</div>
<div class="t" style="left:1066.0px;top:330.1px;font-size:6px;color:#666;">-4</div>
<div class="t" style="left:998.1px;top:387.9px;font-size:11px;color:#222;line-height:normal;transform-origin:50% 50%;transform:rotate(-90deg) scaleX(0.938)">Cluster #11</div>
<div class="t" style="left:998.8px;top:387.9px;font-size:11px;color:#222;line-height:normal;transform-origin:50% 50%;transform:rotate(-90deg) scaleX(0.858)">N = 15 (0 RPVs)</div>
<div class="t" style="left:1087.4px;top:438.0px;font-size:11px;color:#111;">5</div>
<div class="t" style="left:1128.9px;top:438.0px;font-size:11px;color:#111;">10</div>
<div class="t" style="left:1173.5px;top:438.0px;font-size:11px;color:#111;">15</div>
<div class="t" style="left:1103.1px;top:445.3px;font-size:13.5px;color:#111;transform:scaleX(0.874);">Sample</div>
<div class="r" style="left:1226.5px;top:321px;width:208.5px;height:139px;background:#c0bdbd;"></div>
<div class="r" style="left:1227.5px;top:326px;width:206.5px;height:133px;border:1px solid #f4f4f4;border-right:0;"></div>
<div class="r" style="left:1230.5px;top:322px;width:18.0px;height:9px;background:#c0bdbd;"></div>
<div class="t" style="left:1232.0px;top:320.9px;font-size:10px;color:#111;">12</div>
<svg class="s" style="left:1259px;top:342px;" width="156" height="96" viewBox="0 0 156 96"><rect width="156" height="96" fill="#0e0707"/><path d="M0.0 54.5h4.9v1.2h-4.9zM0.0 51.6h4.9v1.2h-4.9zM14.7 58.8h9.8v1.2h-9.8zM14.7 51.1h9.8v1.2h-9.8zM14.7 51.0h9.8v1.2h-9.8zM24.5 56.4h9.8v1.2h-9.8zM34.3 59.1h9.8v1.2h-9.8zM44.1 49.0h9.8v1.2h-9.8zM53.9 62.9h9.8v1.2h-9.8zM63.7 61.9h9.8v1.2h-9.8zM63.7 59.7h9.8v1.2h-9.8zM63.7 60.5h9.8v1.2h-9.8zM63.7 55.9h9.8v1.2h-9.8zM73.5 61.1h9.8v1.2h-9.8zM93.1 58.9h9.8v1.2h-9.8zM102.9 57.2h9.8v1.2h-9.8zM102.9 56.2h9.8v1.2h-9.8zM112.7 60.0h9.8v1.2h-9.8zM112.7 54.0h9.8v1.2h-9.8zM112.7 47.5h9.8v1.2h-9.8zM112.7 56.8h9.8v1.2h-9.8zM122.5 56.7h9.8v1.2h-9.8zM122.5 54.9h9.8v1.2h-9.8zM122.5 52.7h9.8v1.2h-9.8zM132.3 54.0h9.8v1.2h-9.8zM151.9 49.2h4.1v1.2h-4.1zM151.9 50.8h4.1v1.2h-4.1z" fill="#850007"/><path d="M0.0 44.0h4.9v1.2h-4.9zM0.0 59.0h4.9v1.2h-4.9zM0.0 46.7h4.9v1.2h-4.9zM4.9 49.7h9.8v1.2h-9.8zM4.9 55.7h9.8v1.2h-9.8zM4.9 55.3h9.8v1.2h-9.8zM14.7 42.3h9.8v1.2h-9.8zM24.5 54.3h9.8v1.2h-9.8zM24.5 51.3h9.8v1.2h-9.8zM24.5 51.4h9.8v1.2h-9.8zM34.3 50.8h9.8v1.2h-9.8zM34.3 47.9h9.8v1.2h-9.8zM44.1 61.3h9.8v1.2h-9.8zM44.1 62.0h9.8v1.2h-9.8zM44.1 62.0h9.8v1.2h-9.8zM44.1 57.8h9.8v1.2h-9.8zM53.9 56.8h9.8v1.2h-9.8zM53.9 58.8h9.8v1.2h-9.8zM63.7 68.4h9.8v1.2h-9.8zM63.7 49.7h9.8v1.2h-9.8zM83.3 53.1h9.8v1.2h-9.8zM93.1 50.7h9.8v1.2h-9.8zM93.1 59.5h9.8v1.2h-9.8zM102.9 51.6h9.8v1.2h-9.8zM112.7 57.9h9.8v1.2h-9.8zM112.7 49.0h9.8v1.2h-9.8zM112.7 53.6h9.8v1.2h-9.8zM132.3 53.3h9.8v1.2h-9.8zM132.3 47.5h9.8v1.2h-9.8zM132.3 55.5h9.8v1.2h-9.8zM142.1 57.6h9.8v1.2h-9.8zM151.9 55.5h4.1v1.2h-4.1z" fill="#670007"/><path d="M0.0 52.2h4.9v1.2h-4.9zM0.0 57.9h4.9v1.2h-4.9zM4.9 58.6h9.8v1.2h-9.8zM4.9 59.3h9.8v1.2h-9.8zM24.5 53.3h9.8v1.2h-9.8zM34.3 60.4h9.8v1.2h-9.8zM34.3 50.5h9.8v1.2h-9.8zM44.1 56.8h9.8v1.2h-9.8zM53.9 54.6h9.8v1.2h-9.8zM53.9 62.1h9.8v1.2h-9.8zM73.5 56.3h9.8v1.2h-9.8zM73.5 49.5h9.8v1.2h-9.8zM73.5 50.1h9.8v1.2h-9.8zM73.5 50.2h9.8v1.2h-9.8zM83.3 63.2h9.8v1.2h-9.8zM83.3 59.8h9.8v1.2h-9.8zM83.3 58.4h9.8v1.2h-9.8zM93.1 68.8h9.8v1.2h-9.8zM93.1 59.7h9.8v1.2h-9.8zM93.1 51.1h9.8v1.2h-9.8zM102.9 54.5h9.8v1.2h-9.8zM122.5 50.9h9.8v1.2h-9.8zM122.5 59.1h9.8v1.2h-9.8zM132.3 56.8h9.8v1.2h-9.8zM132.3 62.8h9.8v1.2h-9.8zM132.3 60.1h9.8v1.2h-9.8zM142.1 61.7h9.8v1.2h-9.8zM142.1 58.8h9.8v1.2h-9.8zM151.9 53.8h4.1v1.2h-4.1z" fill="#a40007"/><path d="M0.0 50.9h4.9v1.4h-4.9zM0.0 52.6h4.9v1.4h-4.9zM4.9 52.4h9.8v1.4h-9.8zM14.7 53.1h9.8v1.4h-9.8zM34.3 54.8h9.8v1.4h-9.8zM44.1 58.9h9.8v1.4h-9.8zM53.9 59.2h9.8v1.4h-9.8zM73.5 56.0h9.8v1.4h-9.8zM83.3 55.8h9.8v1.4h-9.8zM93.1 55.4h9.8v1.4h-9.8zM102.9 55.5h9.8v1.4h-9.8zM112.7 54.3h9.8v1.4h-9.8zM132.3 53.9h9.8v1.4h-9.8zM132.3 50.3h9.8v1.4h-9.8zM142.1 54.3h9.8v1.4h-9.8zM151.9 52.0h4.1v1.4h-4.1z" fill="#ff0007"/><path d="M4.9 45.0h9.8v1.2h-9.8zM4.9 45.2h9.8v1.2h-9.8zM14.7 58.4h9.8v1.2h-9.8zM14.7 51.8h9.8v1.2h-9.8zM14.7 58.2h9.8v1.2h-9.8zM24.5 63.1h9.8v1.2h-9.8zM24.5 67.8h9.8v1.2h-9.8zM34.3 53.8h9.8v1.2h-9.8zM44.1 51.8h9.8v1.2h-9.8zM53.9 59.4h9.8v1.2h-9.8zM53.9 66.7h9.8v1.2h-9.8zM63.7 61.5h9.8v1.2h-9.8zM73.5 54.7h9.8v1.2h-9.8zM73.5 59.1h9.8v1.2h-9.8zM83.3 54.8h9.8v1.2h-9.8zM83.3 55.5h9.8v1.2h-9.8zM83.3 57.1h9.8v1.2h-9.8zM93.1 53.8h9.8v1.2h-9.8zM102.9 56.3h9.8v1.2h-9.8zM102.9 51.6h9.8v1.2h-9.8zM102.9 58.2h9.8v1.2h-9.8zM122.5 57.7h9.8v1.2h-9.8zM122.5 57.4h9.8v1.2h-9.8zM142.1 59.3h9.8v1.2h-9.8zM142.1 62.4h9.8v1.2h-9.8zM142.1 52.5h9.8v1.2h-9.8zM142.1 54.5h9.8v1.2h-9.8zM151.9 52.4h4.1v1.2h-4.1zM151.9 56.6h4.1v1.2h-4.1z" fill="#490007"/><path d="M4.9 52.7h9.8v1.4h-9.8zM14.7 53.7h9.8v1.4h-9.8zM24.5 57.5h9.8v1.4h-9.8zM34.3 56.3h9.8v1.4h-9.8zM44.1 56.2h9.8v1.4h-9.8zM63.7 59.2h9.8v1.4h-9.8zM73.5 59.3h9.8v1.4h-9.8zM102.9 54.4h9.8v1.4h-9.8z" fill="#e00007"/><path d="M14.7 54.7h9.8v1.0h-9.8zM34.3 56.0h9.8v1.0h-9.8zM53.9 60.6h9.8v1.0h-9.8z" fill="#ff7f07"/><path d="M24.5 54.0h9.8v1.4h-9.8zM53.9 57.1h9.8v1.4h-9.8zM122.5 54.4h9.8v1.4h-9.8zM151.9 54.7h4.1v1.4h-4.1z" fill="#ff1f07"/><path d="M34.3 50.4h9.8v1.2h-9.8zM63.7 57.5h9.8v1.4h-9.8zM83.3 55.0h9.8v1.4h-9.8zM93.1 55.2h9.8v1.4h-9.8zM112.7 54.1h9.8v1.4h-9.8zM122.5 55.5h9.8v1.4h-9.8zM142.1 54.1h9.8v1.4h-9.8zM151.9 51.6h4.1v1.2h-4.1z" fill="#c20007"/><rect x="9.7" y="87.8" width="97.7" height="3" fill="#3f4cc0"/></svg>
<div class="t" style="left:1260.0px;top:331.8px;font-size:8.5px;color:#666;">×10</div>
<div class="t" style="left:1276.0px;top:330.1px;font-size:6px;color:#666;">-4</div>
<div class="t" style="left:1207.2px;top:387.9px;font-size:11px;color:#222;line-height:normal;transform-origin:50% 50%;transform:rotate(-90deg) scaleX(0.942)">Cluster #12</div>
<div class="t" style="left:1208.3px;top:387.9px;font-size:11px;color:#222;line-height:normal;transform-origin:50% 50%;transform:rotate(-90deg) scaleX(0.871)">N = 20 (4 RPVs)</div>
<div class="t" style="left:1297.4px;top:438.0px;font-size:11px;color:#111;">5</div>
<div class="t" style="left:1338.9px;top:438.0px;font-size:11px;color:#111;">10</div>
<div class="t" style="left:1383.5px;top:438.0px;font-size:11px;color:#111;">15</div>
<div class="t" style="left:1313.1px;top:445.3px;font-size:13.5px;color:#111;transform:scaleX(0.874);">Sample</div>
<div class="r" style="left:805px;top:673px;width:841px;height:16px;background:#f4f4f4;border-top:1px solid #b8c8b0;border-bottom:1px solid #d8d8d8;box-sizing:border-box;"></div>
<div class="r" style="left:1618px;top:674px;width:12px;height:14px;background:#f0f0f0;border-right:1px solid #999;border-bottom:1px solid #999;box-sizing:border-box;"></div>
<div class="r" style="left:894px;top:674px;width:332px;height:14px;background:#f7f7f7;border-left:1px solid #bbb;border-right:1px solid #bbb;"></div>
<div class="r" style="left:805px;top:674px;width:11px;height:14px;background:#f0f0f0;border-right:1px solid #999;border-bottom:1px solid #999;box-sizing:border-box;"></div>
<svg class="s" style="left:808px;top:677px;" width="6" height="8" viewBox="0 0 6 8"><path d="M4.5 0.5v7L1 4z" fill="#555"/></svg>
<svg class="s" style="left:1619px;top:676px;" width="8" height="10" viewBox="0 0 8 10"><path d="M2 1v8l5-4z" fill="#555"/></svg>
<div class="r" style="left:1631px;top:674px;width:15px;height:14px;background:#f8f8f8;border:1px solid #ccc;box-sizing:border-box;border-radius:2px;"></div>
<div class="t" style="left:16.0px;top:729.0px;font-size:32px;color:#000;transform:scaleX(0.969);">c</div>
<div class="r" style="left:69px;top:742px;width:96px;height:27px;background:linear-gradient(#edf3f9 0,#edf3f9 42%,#d6d6d6 42%,#d6d6d6 100%);border:1.5px solid #444;box-sizing:border-box;"></div>
<div class="t" style="left:72.5px;top:747.9px;font-size:14px;color:#111;transform:scaleX(1.040);">Plot polytrode</div>
<div class="r" style="left:263px;top:746px;width:229px;height:19px;background:#f3f4f5;"></div>
<div class="t" style="left:338.5px;top:749.1px;font-size:12px;color:#111;">Channel AD01 *</div>
<div class="t" style="left:583.0px;top:723.4px;font-size:36px;color:#d8291f;transform:scaleX(0.922);">WaveClus</div>
<div class="r" style="left:522px;top:777px;width:93px;height:16px;background:linear-gradient(#ececec 0,#ececec 50%,#ececec 50%,#ececec 100%);border:1.5px solid #333;box-sizing:border-box;"></div>
<div class="t" style="left:533.0px;top:779.3px;font-size:10.5px;color:#111;transform:scaleX(0.989);">Set parameters</div>
<div class="r" style="left:635px;top:777px;width:93px;height:16px;background:linear-gradient(#ececec 0,#ececec 50%,#ececec 50%,#ececec 100%);border:1.5px solid #333;box-sizing:border-box;"></div>
<div class="t" style="left:668.9px;top:779.3px;font-size:10.5px;color:#111;">Undo</div>
<svg class="s" style="left:55px;top:803px;" width="676" height="134" viewBox="0 0 676 134"><path d="M4.5 46V1M5.5 46V26M5.5 46V67M6.5 46V3M6.5 46V58M7.5 46V133M9.5 46V133M10.5 46V28M11.5 46V1M13.5 46V21M13.5 46V133M14.5 46V1M15.5 46V21M19.5 46V32M21.5 46V2M24.5 46V1M27.5 46V23M27.5 46V65M29.5 46V33M30.5 46V61M31.5 46V29M33.5 46V1M33.5 46V61M34.5 46V2M38.5 46V57M43.5 46V17M45.5 46V28M47.5 46V133M49.5 46V18M49.5 46V113M53.5 46V31M55.5 46V1M59.5 46V20M61.5 46V22M62.5 46V23M63.5 46V1M65.5 46V17M66.5 46V30M67.5 46V28M68.5 46V23M69.5 46V33M70.5 46V25M71.5 46V24M71.5 46V69M72.5 46V17M74.5 46V1M74.5 46V75M77.5 46V18M79.5 46V31M81.5 46V32M82.5 46V133M85.5 46V29M86.5 46V8M87.5 46V11M87.5 46V62M88.5 46V70M89.5 46V61M90.5 46V1M91.5 46V7M92.5 46V10M93.5 46V1M94.5 46V33M95.5 46V24M96.5 46V6M98.5 46V21M99.5 46V4M99.5 46V110M101.5 46V27M101.5 46V72M102.5 46V17M103.5 46V23M104.5 46V1M105.5 46V15M106.5 46V17M110.5 46V23M113.5 46V29M114.5 46V21M114.5 46V107M115.5 46V1M116.5 46V1M117.5 46V115M120.5 46V16M122.5 46V16M126.5 46V1M127.5 46V15M129.5 46V57M131.5 46V26M132.5 46V21M133.5 46V19M133.5 46V99M134.5 46V26M135.5 46V26M136.5 46V20M137.5 46V11M138.5 46V1M140.5 46V92M142.5 46V14M143.5 46V133M144.5 46V99M145.5 46V6M148.5 46V29M148.5 46V95M149.5 46V27M149.5 46V133M150.5 46V19M151.5 46V16M153.5 46V12M153.5 46V133M154.5 46V16M154.5 46V112M155.5 46V133M156.5 46V1M157.5 46V133M158.5 46V34M158.5 46V133M162.5 46V96M165.5 46V133M166.5 46V1M167.5 46V20M170.5 46V33M170.5 46V77M171.5 46V22M173.5 46V4M173.5 46V133M175.5 46V32M176.5 46V22M177.5 46V1M177.5 46V81M180.5 46V31M181.5 46V57M182.5 46V19M183.5 46V32M185.5 46V8M186.5 46V29M188.5 46V15M192.5 46V1M194.5 46V24M196.5 46V22M196.5 46V93M197.5 46V17M198.5 46V34M199.5 46V10M199.5 46V62M200.5 46V133M201.5 46V28M202.5 46V88M203.5 46V102M204.5 46V30M207.5 46V133M209.5 46V1M210.5 46V1M211.5 46V22M213.5 46V21M213.5 46V76M215.5 46V106M217.5 46V4M218.5 46V18M220.5 46V17M220.5 46V133M222.5 46V31M222.5 46V133M223.5 46V35M226.5 46V19M226.5 46V57M228.5 46V63M229.5 46V26M229.5 46V79M230.5 46V1M232.5 46V1M233.5 46V31M234.5 46V1M234.5 46V89M235.5 46V28M236.5 46V34M236.5 46V65M238.5 46V26M239.5 46V34M240.5 46V102M241.5 46V20M242.5 46V16M243.5 46V60M246.5 46V30M246.5 46V124M249.5 46V33M249.5 46V133M250.5 46V59M251.5 46V1M251.5 46V87M252.5 46V1M254.5 46V133M255.5 46V2M256.5 46V1M257.5 46V6M258.5 46V3M258.5 46V57M260.5 46V1M263.5 46V16M264.5 46V15M265.5 46V25M269.5 46V1M269.5 46V77M270.5 46V10M272.5 46V14M273.5 46V133M274.5 46V23M276.5 46V25M277.5 46V20M279.5 46V34M281.5 46V8M281.5 46V133M283.5 46V21M283.5 46V133M284.5 46V24M284.5 46V60M285.5 46V1M287.5 46V133M288.5 46V5M289.5 46V30M290.5 46V23M293.5 46V90M295.5 46V1M296.5 46V26M298.5 46V18M298.5 46V93M300.5 46V32M302.5 46V1M303.5 46V28M305.5 46V30M307.5 46V31M308.5 46V1M310.5 46V69M311.5 46V30M312.5 46V16M314.5 46V1M318.5 46V15M319.5 46V17M320.5 46V35M320.5 46V132M321.5 46V10M322.5 46V27M324.5 46V6M324.5 46V60M326.5 46V74M329.5 46V33M330.5 46V1M330.5 46V133M332.5 46V22M333.5 46V1M334.5 46V12M334.5 46V58M337.5 46V100M339.5 46V27M340.5 46V22M342.5 46V3M343.5 46V33M343.5 46V63M344.5 46V133M346.5 46V62M347.5 46V27M348.5 46V24M350.5 46V2M351.5 46V1M354.5 46V21M354.5 46V66M355.5 46V13M356.5 46V90M358.5 46V58M359.5 46V25M359.5 46V64M360.5 46V65M361.5 46V1M363.5 46V21M364.5 46V1M365.5 46V30M367.5 46V61M368.5 46V3M370.5 46V131M372.5 46V18M372.5 46V133M373.5 46V22M375.5 46V25M377.5 46V9M379.5 46V1M380.5 46V59M381.5 46V83M382.5 46V11M383.5 46V1M384.5 46V133M385.5 46V24M385.5 46V57M388.5 46V35M389.5 46V18M390.5 46V24M391.5 46V1M392.5 46V133M393.5 46V16M396.5 46V1M397.5 46V16M398.5 46V26M399.5 46V28M400.5 46V6M400.5 46V133M401.5 46V29M401.5 46V133M402.5 46V1M403.5 46V17M404.5 46V1M405.5 46V133M407.5 46V17M407.5 46V75M409.5 46V23M410.5 46V16M410.5 46V79M411.5 46V29M411.5 46V66M412.5 46V34M416.5 46V28M417.5 46V93M419.5 46V34M422.5 46V1M424.5 46V9M425.5 46V26M426.5 46V122M427.5 46V19M429.5 46V1M430.5 46V1M430.5 46V133M431.5 46V1M432.5 46V24M433.5 46V58M434.5 46V80M435.5 46V34M438.5 46V5M440.5 46V24M441.5 46V18M442.5 46V31M442.5 46V87M443.5 46V21M443.5 46V58M444.5 46V19M444.5 46V59M445.5 46V26M446.5 46V5M446.5 46V85M448.5 46V28M448.5 46V133M450.5 46V133M451.5 46V32M452.5 46V2M453.5 46V1M454.5 46V23M456.5 46V26M459.5 46V13M461.5 46V32M462.5 46V59M466.5 46V1M467.5 46V63M469.5 46V16M470.5 46V1M470.5 46V59M471.5 46V133M473.5 46V69M474.5 46V23M475.5 46V1M476.5 46V25M477.5 46V26M478.5 46V18M479.5 46V1M483.5 46V85M485.5 46V133M488.5 46V1M490.5 46V10M490.5 46V73M494.5 46V2M499.5 46V133M500.5 46V1M500.5 46V83M501.5 46V1M502.5 46V12M504.5 46V64M507.5 46V4M509.5 46V10M510.5 46V32M512.5 46V30M513.5 46V16M514.5 46V1M516.5 46V11M516.5 46V86M517.5 46V10M517.5 46V133M519.5 46V26M519.5 46V60M522.5 46V4M523.5 46V19M523.5 46V93M525.5 46V15M528.5 46V1M531.5 46V1M531.5 46V88M534.5 46V1M534.5 46V63M536.5 46V15M540.5 46V74M543.5 46V23M544.5 46V1M545.5 46V59M546.5 46V1M547.5 46V23M548.5 46V93M550.5 46V58M551.5 46V1M552.5 46V16M553.5 46V133M555.5 46V10M555.5 46V66M556.5 46V133M557.5 46V15M560.5 46V20M562.5 46V19M563.5 46V1M564.5 46V133M567.5 46V15M568.5 46V64M570.5 46V4M571.5 46V34M572.5 46V34M572.5 46V133M574.5 46V20M576.5 46V14M578.5 46V21M580.5 46V87M582.5 46V22M583.5 46V58M585.5 46V2M586.5 46V15M587.5 46V16M588.5 46V1M588.5 46V133M589.5 46V15M589.5 46V90M591.5 46V5M592.5 46V1M593.5 46V32M595.5 46V27M596.5 46V11M597.5 46V11M598.5 46V19M599.5 46V15M600.5 46V18M601.5 46V20M602.5 46V21M603.5 46V23M603.5 46V133M604.5 46V1M605.5 46V13M606.5 46V1M607.5 46V4M608.5 46V21M612.5 46V4M612.5 46V133M614.5 46V84M615.5 46V26M617.5 46V1M618.5 46V15M620.5 46V1M621.5 46V1M622.5 46V27M623.5 46V6M623.5 46V133M625.5 46V32M626.5 46V24M626.5 46V133M627.5 46V94M629.5 46V12M629.5 46V68M632.5 46V21M634.5 46V3M638.5 46V1M638.5 46V61M639.5 46V1M639.5 46V133M640.5 46V2M641.5 46V1M644.5 46V133M647.5 46V1M648.5 46V10M650.5 46V14M652.5 46V31M654.5 46V133M655.5 46V62M656.5 46V1M656.5 46V65M657.5 46V22M659.5 46V34M660.5 46V9M664.5 46V1M664.5 46V133M665.5 46V1M670.5 46V1M671.5 46V17M671.5 46V90M672.5 46V1M672.5 46V65M675.5 46V94" stroke="#a3a5dc" stroke-width="1" fill="none"/><path d="M0.5 46V22M0.5 46V66M1.5 46V1M1.5 46V70M2.5 46V20M2.5 46V133M3.5 46V1M4.5 46V63M8.5 46V20M8.5 46V66M10.5 46V83M11.5 46V65M12.5 46V29M14.5 46V67M15.5 46V89M16.5 46V133M17.5 46V23M17.5 46V133M18.5 46V133M20.5 46V133M22.5 46V132M23.5 46V17M23.5 46V65M26.5 46V18M26.5 46V70M28.5 46V133M29.5 46V58M30.5 46V17M31.5 46V133M32.5 46V18M34.5 46V61M35.5 46V63M36.5 46V59M37.5 46V58M39.5 46V133M40.5 46V1M40.5 46V82M41.5 46V20M41.5 46V133M42.5 46V1M42.5 46V62M43.5 46V71M46.5 46V98M47.5 46V23M48.5 46V27M48.5 46V133M50.5 46V15M50.5 46V106M51.5 46V1M51.5 46V58M55.5 46V133M56.5 46V20M56.5 46V65M57.5 46V93M58.5 46V1M58.5 46V62M59.5 46V119M60.5 46V20M61.5 46V59M63.5 46V101M64.5 46V1M64.5 46V133M65.5 46V59M67.5 46V79M68.5 46V59M69.5 46V133M70.5 46V133M72.5 46V60M73.5 46V63M76.5 46V19M76.5 46V133M77.5 46V82M78.5 46V14M78.5 46V133M79.5 46V69M80.5 46V58M81.5 46V62M82.5 46V30M83.5 46V64M84.5 46V3M84.5 46V126M86.5 46V133M89.5 46V33M91.5 46V108M93.5 46V132M94.5 46V77M96.5 46V86M97.5 46V70M98.5 46V118M102.5 46V133M103.5 46V63M104.5 46V58M106.5 46V133M107.5 46V31M107.5 46V64M108.5 46V133M109.5 46V32M112.5 46V104M115.5 46V133M116.5 46V126M117.5 46V24M119.5 46V11M121.5 46V88M122.5 46V108M124.5 46V32M124.5 46V60M126.5 46V127M128.5 46V133M129.5 46V16M130.5 46V1M130.5 46V64M131.5 46V133M132.5 46V133M134.5 46V79M135.5 46V58M137.5 46V133M138.5 46V62M139.5 46V27M140.5 46V22M141.5 46V63M145.5 46V63M152.5 46V15M152.5 46V133M156.5 46V133M159.5 46V1M159.5 46V67M160.5 46V3M160.5 46V86M161.5 46V133M163.5 46V1M164.5 46V1M164.5 46V120M165.5 46V19M169.5 46V4M169.5 46V79M171.5 46V133M174.5 46V133M175.5 46V112M176.5 46V63M179.5 46V108M180.5 46V80M181.5 46V1M185.5 46V133M187.5 46V63M188.5 46V133M189.5 46V62M190.5 46V116M191.5 46V77M193.5 46V133M195.5 46V1M195.5 46V100M198.5 46V101M204.5 46V84M206.5 46V125M207.5 46V17M209.5 46V117M212.5 46V61M214.5 46V35M214.5 46V109M215.5 46V26M216.5 46V31M216.5 46V133M217.5 46V110M218.5 46V133M219.5 46V77M221.5 46V15M224.5 46V62M227.5 46V133M230.5 46V77M231.5 46V21M232.5 46V66M233.5 46V65M237.5 46V58M240.5 46V1M241.5 46V133M242.5 46V60M244.5 46V22M244.5 46V133M245.5 46V133M247.5 46V82M248.5 46V30M252.5 46V133M253.5 46V133M254.5 46V22M255.5 46V64M256.5 46V82M257.5 46V64M259.5 46V27M259.5 46V72M260.5 46V64M261.5 46V20M261.5 46V133M262.5 46V90M263.5 46V91M264.5 46V59M265.5 46V101M268.5 46V1M268.5 46V133M271.5 46V1M271.5 46V62M273.5 46V11M275.5 46V1M275.5 46V133M276.5 46V63M278.5 46V61M279.5 46V133M280.5 46V133M282.5 46V62M286.5 46V1M286.5 46V133M288.5 46V64M289.5 46V133M291.5 46V116M292.5 46V26M292.5 46V133M294.5 46V58M295.5 46V59M296.5 46V133M299.5 46V1M303.5 46V133M305.5 46V133M306.5 46V1M306.5 46V89M307.5 46V133M308.5 46V133M309.5 46V20M311.5 46V133M312.5 46V64M313.5 46V8M314.5 46V63M315.5 46V22M316.5 46V15M316.5 46V104M317.5 46V93M318.5 46V58M321.5 46V70M322.5 46V133M323.5 46V133M325.5 46V133M327.5 46V28M328.5 46V17M328.5 46V132M331.5 46V29M331.5 46V92M332.5 46V80M333.5 46V66M335.5 46V133M336.5 46V60M338.5 46V58M339.5 46V61M340.5 46V86M341.5 46V24M341.5 46V133M342.5 46V63M345.5 46V1M345.5 46V129M346.5 46V5M349.5 46V15M349.5 46V60M351.5 46V133M353.5 46V80M356.5 46V1M357.5 46V1M360.5 46V2M361.5 46V87M364.5 46V133M366.5 46V133M367.5 46V3M369.5 46V133M371.5 46V133M374.5 46V133M376.5 46V3M377.5 46V59M378.5 46V133M379.5 46V132M381.5 46V15M382.5 46V133M384.5 46V32M386.5 46V133M388.5 46V71M389.5 46V61M390.5 46V64M391.5 46V64M392.5 46V27M393.5 46V78M395.5 46V63M397.5 46V133M398.5 46V109M399.5 46V133M402.5 46V78M403.5 46V81M404.5 46V62M405.5 46V28M406.5 46V78M408.5 46V133M412.5 46V65M414.5 46V2M415.5 46V133M416.5 46V133M418.5 46V17M419.5 46V82M421.5 46V3M423.5 46V133M425.5 46V63M426.5 46V1M427.5 46V65M428.5 46V93M432.5 46V96M433.5 46V9M434.5 46V27M436.5 46V133M437.5 46V1M438.5 46V116M439.5 46V61M449.5 46V33M451.5 46V133M452.5 46V75M453.5 46V66M454.5 46V133M455.5 46V96M456.5 46V133M457.5 46V31M457.5 46V73M458.5 46V18M458.5 46V60M459.5 46V59M460.5 46V64M461.5 46V61M462.5 46V4M463.5 46V61M464.5 46V133M465.5 46V74M466.5 46V64M468.5 46V1M468.5 46V133M471.5 46V20M472.5 46V23M474.5 46V131M477.5 46V65M478.5 46V133M479.5 46V84M480.5 46V133M483.5 46V15M484.5 46V133M485.5 46V25M486.5 46V24M486.5 46V59M491.5 46V89M492.5 46V28M493.5 46V89M494.5 46V133M495.5 46V32M496.5 46V21M496.5 46V133M497.5 46V1M497.5 46V105M498.5 46V2M498.5 46V120M499.5 46V18M501.5 46V57M502.5 46V133M503.5 46V86M506.5 46V133M507.5 46V63M508.5 46V86M509.5 46V133M510.5 46V133M511.5 46V70M512.5 46V64M513.5 46V133M514.5 46V58M515.5 46V60M520.5 46V5M520.5 46V85M521.5 46V25M526.5 46V1M526.5 46V90M527.5 46V33M528.5 46V133M530.5 46V22M532.5 46V63M533.5 46V1M533.5 46V90M535.5 46V27M536.5 46V57M537.5 46V4M537.5 46V73M539.5 46V1M539.5 46V67M541.5 46V19M541.5 46V61M542.5 46V133M543.5 46V60M544.5 46V133M547.5 46V126M548.5 46V27M549.5 46V133M554.5 46V27M554.5 46V133M556.5 46V8M557.5 46V133M559.5 46V1M559.5 46V133M560.5 46V62M561.5 46V64M562.5 46V69M563.5 46V133M565.5 46V16M565.5 46V133M566.5 46V81M569.5 46V63M570.5 46V96M573.5 46V131M574.5 46V69M575.5 46V59M576.5 46V63M577.5 46V71M578.5 46V133M581.5 46V24M581.5 46V133M582.5 46V133M584.5 46V133M586.5 46V133M587.5 46V115M591.5 46V133M592.5 46V74M593.5 46V91M594.5 46V58M597.5 46V133M598.5 46V131M602.5 46V60M611.5 46V16M611.5 46V85M614.5 46V18M615.5 46V88M617.5 46V133M618.5 46V62M619.5 46V14M619.5 46V64M621.5 46V64M622.5 46V89M624.5 46V33M625.5 46V61M628.5 46V103M630.5 46V133M631.5 46V30M634.5 46V133M635.5 46V64M636.5 46V133M637.5 46V14M640.5 46V72M641.5 46V66M642.5 46V13M642.5 46V67M643.5 46V1M643.5 46V133M646.5 46V133M647.5 46V61M648.5 46V75M649.5 46V1M649.5 46V79M650.5 46V76M651.5 46V62M653.5 46V133M654.5 46V2M655.5 46V27M657.5 46V94M658.5 46V2M658.5 46V89M660.5 46V65M661.5 46V1M661.5 46V133M662.5 46V1M665.5 46V58M666.5 46V82M667.5 46V66M668.5 46V1M668.5 46V60M669.5 46V15M669.5 46V133M670.5 46V67M673.5 46V25M673.5 46V65M674.5 46V133M675.5 46V3" stroke="#6569c2" stroke-width="1" fill="none"/><path d="M3.5 46V85M7.5 46V1M9.5 46V34M12.5 46V127M16.5 46V1M18.5 46V27M19.5 46V133M20.5 46V11M21.5 46V65M22.5 46V31M24.5 46V64M25.5 46V20M25.5 46V126M28.5 46V1M32.5 46V80M35.5 46V1M36.5 46V1M37.5 46V3M38.5 46V24M39.5 46V14M44.5 46V18M44.5 46V133M45.5 46V133M46.5 46V8M52.5 46V1M52.5 46V96M53.5 46V127M54.5 46V3M54.5 46V133M57.5 46V1M60.5 46V78M62.5 46V133M66.5 46V133M73.5 46V1M75.5 46V1M75.5 46V86M80.5 46V8M83.5 46V27M85.5 46V133M88.5 46V8M90.5 46V133M92.5 46V133M95.5 46V92M97.5 46V13M100.5 46V16M100.5 46V70M105.5 46V66M108.5 46V1M109.5 46V102M110.5 46V59M111.5 46V21M111.5 46V63M112.5 46V31M113.5 46V65M118.5 46V18M118.5 46V133M119.5 46V62M120.5 46V133M121.5 46V29M123.5 46V11M123.5 46V66M125.5 46V1M125.5 46V133M127.5 46V65M128.5 46V3M136.5 46V83M139.5 46V133M141.5 46V1M142.5 46V75M143.5 46V24M144.5 46V21M146.5 46V3M146.5 46V133M147.5 46V19M147.5 46V133M150.5 46V133M151.5 46V68M155.5 46V8M157.5 46V1M161.5 46V22M162.5 46V19M163.5 46V133M166.5 46V133M167.5 46V64M168.5 46V15M168.5 46V133M172.5 46V1M172.5 46V103M174.5 46V24M178.5 46V14M178.5 46V68M179.5 46V33M182.5 46V97M183.5 46V57M184.5 46V21M184.5 46V58M186.5 46V116M187.5 46V4M189.5 46V34M190.5 46V22M191.5 46V17M192.5 46V59M193.5 46V30M194.5 46V86M197.5 46V115M200.5 46V26M201.5 46V66M202.5 46V30M203.5 46V6M205.5 46V29M205.5 46V133M206.5 46V24M208.5 46V30M208.5 46V133M210.5 46V133M211.5 46V62M212.5 46V33M219.5 46V21M221.5 46V60M223.5 46V75M224.5 46V23M225.5 46V35M225.5 46V133M227.5 46V1M228.5 46V31M231.5 46V133M235.5 46V60M237.5 46V27M238.5 46V62M239.5 46V133M243.5 46V22M245.5 46V4M247.5 46V23M248.5 46V63M250.5 46V1M253.5 46V33M262.5 46V1M266.5 46V1M266.5 46V62M267.5 46V23M267.5 46V67M270.5 46V102M272.5 46V116M274.5 46V59M277.5 46V71M278.5 46V8M280.5 46V1M282.5 46V19M285.5 46V84M287.5 46V10M290.5 46V106M291.5 46V16M293.5 46V3M294.5 46V1M297.5 46V17M297.5 46V133M299.5 46V108M300.5 46V83M301.5 46V24M301.5 46V133M302.5 46V133M304.5 46V2M304.5 46V90M309.5 46V133M310.5 46V15M313.5 46V133M315.5 46V78M317.5 46V6M319.5 46V133M323.5 46V19M325.5 46V34M326.5 46V5M327.5 46V74M329.5 46V59M335.5 46V26M336.5 46V5M337.5 46V9M338.5 46V26M344.5 46V32M347.5 46V133M348.5 46V65M350.5 46V87M352.5 46V1M352.5 46V75M353.5 46V1M355.5 46V133M357.5 46V124M358.5 46V1M362.5 46V28M362.5 46V58M363.5 46V133M365.5 46V59M366.5 46V35M368.5 46V108M369.5 46V25M370.5 46V17M371.5 46V27M373.5 46V105M374.5 46V1M375.5 46V78M376.5 46V133M378.5 46V29M380.5 46V20M383.5 46V93M386.5 46V24M387.5 46V29M387.5 46V133M394.5 46V1M394.5 46V57M395.5 46V18M396.5 46V75M406.5 46V22M408.5 46V16M409.5 46V107M413.5 46V5M413.5 46V133M414.5 46V133M415.5 46V30M417.5 46V17M418.5 46V59M420.5 46V1M420.5 46V80M421.5 46V62M422.5 46V66M423.5 46V9M424.5 46V133M428.5 46V20M429.5 46V64M431.5 46V81M435.5 46V66M436.5 46V1M437.5 46V133M439.5 46V12M440.5 46V85M441.5 46V58M445.5 46V68M447.5 46V4M447.5 46V60M449.5 46V133M450.5 46V22M455.5 46V12M460.5 46V35M463.5 46V3M464.5 46V29M465.5 46V6M467.5 46V1M469.5 46V133M472.5 46V71M473.5 46V4M475.5 46V96M476.5 46V115M480.5 46V1M481.5 46V24M481.5 46V133M482.5 46V28M482.5 46V133M484.5 46V25M487.5 46V34M487.5 46V133M488.5 46V65M489.5 46V9M489.5 46V104M491.5 46V1M492.5 46V58M493.5 46V23M495.5 46V133M503.5 46V21M504.5 46V34M505.5 46V24M505.5 46V133M506.5 46V1M508.5 46V19M511.5 46V1M515.5 46V25M518.5 46V17M518.5 46V98M521.5 46V133M522.5 46V133M524.5 46V2M524.5 46V58M525.5 46V133M527.5 46V65M529.5 46V1M529.5 46V129M530.5 46V133M532.5 46V1M535.5 46V129M538.5 46V1M538.5 46V128M540.5 46V17M542.5 46V1M545.5 46V20M546.5 46V84M549.5 46V1M550.5 46V7M551.5 46V64M552.5 46V86M553.5 46V14M558.5 46V1M558.5 46V86M561.5 46V4M564.5 46V1M566.5 46V24M567.5 46V133M568.5 46V6M569.5 46V14M571.5 46V133M573.5 46V28M575.5 46V33M577.5 46V28M579.5 46V24M579.5 46V133M580.5 46V20M583.5 46V19M584.5 46V34M585.5 46V105M590.5 46V16M590.5 46V66M594.5 46V6M595.5 46V133M596.5 46V104M599.5 46V71M600.5 46V80M601.5 46V133M604.5 46V68M605.5 46V83M606.5 46V86M607.5 46V133M608.5 46V59M609.5 46V1M609.5 46V58M610.5 46V12M610.5 46V115M613.5 46V1M613.5 46V85M616.5 46V26M616.5 46V87M620.5 46V62M624.5 46V133M627.5 46V28M628.5 46V21M630.5 46V15M631.5 46V66M632.5 46V62M633.5 46V1M633.5 46V63M635.5 46V19M636.5 46V1M637.5 46V57M644.5 46V17M645.5 46V28M645.5 46V68M646.5 46V1M651.5 46V32M652.5 46V65M653.5 46V8M659.5 46V133M662.5 46V59M663.5 46V17M663.5 46V112M666.5 46V18M667.5 46V5M674.5 46V7" stroke="#4448a8" stroke-width="1" fill="none"/><polygon points="0,35 2,34 4,30 6,30 8,30 10,29 12,35 14,29 16,28 18,29 20,30 22,33 24,33 26,31 28,30 30,33 32,35 34,29 36,30 38,34 40,32 42,30 44,33 46,28 48,30 50,31 52,34 54,35 56,31 58,35 60,30 62,30 64,34 66,32 68,28 70,33 72,33 74,32 76,32 78,31 80,31 82,31 84,30 86,33 88,29 90,29 92,32 94,28 96,30 98,34 100,33 102,32 104,32 106,29 108,29 110,30 112,33 114,34 116,28 118,35 120,29 122,28 124,31 126,34 128,29 130,35 132,33 134,32 136,28 138,31 140,34 142,34 144,29 146,29 148,34 150,35 152,32 154,32 156,32 158,29 160,32 162,31 164,30 166,29 168,34 170,32 172,29 174,28 176,35 178,30 180,30 182,31 184,33 186,31 188,29 190,29 192,32 194,33 196,33 198,31 200,30 202,28 204,28 206,28 208,34 210,33 212,32 214,30 216,31 218,28 220,29 222,31 224,35 226,31 228,32 230,31 232,33 234,29 236,35 238,30 240,34 242,32 244,30 246,31 248,33 250,30 252,31 254,33 256,31 258,31 260,30 262,32 264,33 266,35 268,31 270,30 272,34 274,29 276,31 278,32 280,34 282,33 284,28 286,30 288,33 290,34 292,33 294,30 296,32 298,34 300,29 302,32 304,29 306,30 308,32 310,35 312,33 314,33 316,34 318,28 320,33 322,29 324,32 326,31 328,35 330,28 332,31 334,31 336,33 338,32 340,32 342,35 344,29 346,32 348,34 350,28 352,34 354,32 356,33 358,32 360,32 362,35 364,33 366,31 368,30 370,30 372,32 374,33 376,32 378,28 380,28 382,33 384,32 386,35 388,31 390,28 392,28 394,28 396,34 398,35 400,30 402,29 404,31 406,30 408,34 410,31 412,31 414,35 416,31 418,34 420,31 422,28 424,34 426,29 428,29 430,33 432,31 434,34 436,31 438,32 440,29 442,35 444,33 446,33 448,33 450,29 452,28 454,33 456,30 458,30 460,34 462,29 464,32 466,32 468,29 470,30 472,30 474,31 476,29 478,35 480,35 482,34 484,32 486,29 488,33 490,32 492,32 494,33 496,33 498,34 500,35 502,30 504,33 506,34 508,31 510,28 512,32 514,34 516,33 518,28 520,30 522,29 524,32 526,33 528,31 530,35 532,28 534,31 536,33 538,32 540,33 542,33 544,28 546,34 548,33 550,29 552,32 554,34 556,32 558,29 560,30 562,28 564,33 566,30 568,32 570,32 572,34 574,31 576,32 578,30 580,29 582,29 584,33 586,29 588,29 590,31 592,34 594,31 596,31 598,34 600,30 602,32 604,34 606,33 608,29 610,34 612,34 614,33 616,33 618,32 620,30 622,34 624,30 626,32 628,32 630,35 632,30 634,29 636,31 638,35 640,33 642,33 644,31 646,35 648,28 650,31 652,32 654,34 656,32 658,34 660,29 662,33 664,34 666,31 668,30 670,32 672,30 674,31 676,34 676,62 674,57 672,61 670,61 668,62 666,58 664,57 662,63 660,57 658,62 656,62 654,63 652,61 650,60 648,60 646,57 644,59 642,58 640,62 638,61 636,57 634,62 632,63 630,60 628,60 626,60 624,58 622,62 620,60 618,58 616,57 614,63 612,57 610,62 608,63 606,63 604,63 602,62 600,60 598,58 596,60 594,60 592,57 590,60 588,59 586,60 584,58 582,61 580,63 578,60 576,61 574,59 572,61 570,59 568,63 566,61 564,61 562,62 560,60 558,59 556,59 554,57 552,59 550,62 548,57 546,60 544,61 542,61 540,59 538,59 536,61 534,61 532,62 530,63 528,61 526,60 524,58 522,62 520,59 518,61 516,61 514,62 512,58 510,61 508,62 506,61 504,58 502,58 500,62 498,57 496,62 494,62 492,60 490,63 488,60 486,61 484,59 482,59 480,59 478,57 476,58 474,58 472,60 470,59 468,57 466,57 464,60 462,59 460,60 458,61 456,59 454,61 452,58 450,61 448,62 446,62 444,59 442,60 440,61 438,59 436,61 434,59 432,60 430,61 428,62 426,62 424,62 422,58 420,60 418,58 416,62 414,61 412,63 410,62 408,60 406,62 404,59 402,58 400,58 398,57 396,58 394,58 392,60 390,58 388,60 386,60 384,62 382,59 380,60 378,61 376,60 374,57 372,62 370,62 368,58 366,58 364,62 362,60 360,58 358,59 356,61 354,62 352,62 350,60 348,61 346,58 344,61 342,58 340,57 338,60 336,58 334,61 332,63 330,59 328,59 326,60 324,61 322,61 320,63 318,63 316,57 314,62 312,58 310,57 308,62 306,58 304,60 302,62 300,59 298,59 296,60 294,57 292,62 290,61 288,57 286,61 284,62 282,61 280,59 278,59 276,58 274,61 272,59 270,60 268,62 266,61 264,58 262,61 260,62 258,59 256,62 254,61 252,60 250,60 248,63 246,59 244,61 242,57 240,60 238,58 236,58 234,62 232,58 230,62 228,59 226,57 224,57 222,58 220,63 218,62 216,58 214,59 212,61 210,61 208,58 206,63 204,59 202,60 200,62 198,62 196,58 194,58 192,61 190,60 188,59 186,57 184,57 182,59 180,59 178,60 176,59 174,60 172,58 170,61 168,59 166,60 164,60 162,61 160,58 158,59 156,59 154,59 152,61 150,63 148,63 146,62 144,58 142,61 140,63 138,63 136,58 134,61 132,58 130,62 128,58 126,58 124,60 122,62 120,58 118,59 116,59 114,61 112,62 110,61 108,59 106,58 104,60 102,62 100,58 98,60 96,58 94,58 92,58 90,59 88,59 86,62 84,58 82,57 80,59 78,60 76,61 74,62 72,62 70,57 68,58 66,63 64,63 62,59 60,59 58,59 56,61 54,60 52,63 50,62 48,61 46,63 44,59 42,61 40,59 38,60 36,59 34,62 32,59 30,60 28,57 26,58 24,62 22,62 20,58 18,61 16,57 14,58 12,59 10,57 8,57 6,58 4,62 2,58 0,62" fill="#4a4fb2"/><rect x="0" y="35" width="676" height="22" fill="#4348a8"/><path d="M0 75.5H676" stroke="#e84040" stroke-width="1"/><path d="M0.5 0V133.5H676" fill="none" stroke="#666" stroke-width="1.5"/><path d="M0 4h5" stroke="#666"/><path d="M0 44h5" stroke="#666"/><path d="M0 86h5" stroke="#666"/><path d="M0 128h5" stroke="#666"/><path d="M0.0 134v-5" stroke="#666"/><path d="M112.7 134v-5" stroke="#666"/><path d="M225.4 134v-5" stroke="#666"/><path d="M338.1 134v-5" stroke="#666"/><path d="M450.8 134v-5" stroke="#666"/><path d="M563.5 134v-5" stroke="#666"/><path d="M676.2 134v-5" stroke="#666"/></svg>
<div class="t" style="left:53.0px;top:785.9px;font-size:9px;color:#111;">10</div><div class="t" style="left:63.2px;top:783.8px;font-size:6.75px;color:#111;">-4</div>
<div class="t" style="left:40.5px;top:796.6px;font-size:17px;color:#111;">5</div>
<div class="t" style="left:40.5px;top:836.6px;font-size:17px;color:#111;">0</div>
<div class="t" style="left:34.9px;top:878.6px;font-size:17px;color:#111;">-5</div>
<div class="t" style="left:25.4px;top:920.6px;font-size:17px;color:#111;">-10</div>
<div class="t" style="left:50.3px;top:936.6px;font-size:17px;color:#111;">0</div>
<div class="t" style="left:158.2px;top:936.6px;font-size:17px;color:#111;">10</div>
<div class="t" style="left:270.9px;top:936.6px;font-size:17px;color:#111;">20</div>
<div class="t" style="left:383.6px;top:936.6px;font-size:17px;color:#111;">30</div>
<div class="t" style="left:496.3px;top:936.6px;font-size:17px;color:#111;">40</div>
<div class="t" style="left:609.0px;top:936.6px;font-size:17px;color:#111;">50</div>
<div class="t" style="left:721.7px;top:936.6px;font-size:17px;color:#111;">60</div>
<svg class="s" style="left:54.5px;top:979px;" width="140" height="168" viewBox="0 0 140 168"><defs><radialGradient id="sb"><stop offset="0" stop-color="#4a4fc0"/><stop offset="0.6" stop-color="#4a4fc0"/><stop offset="1" stop-color="#4a4fc0" stop-opacity="0"/></radialGradient><radialGradient id="sr"><stop offset="0" stop-color="#e02a24"/><stop offset="0.6" stop-color="#e02a24"/><stop offset="1" stop-color="#e02a24" stop-opacity="0"/></radialGradient></defs><path d="M50.4 78.3h0.8M50.6 68.1h0.8M46.2 69.4h0.8M58.9 77.3h0.8M58.4 75.1h0.8M54.4 74.3h0.8M41.7 82.6h0.8M55.1 78.2h0.8M41.5 50.4h0.8M46.5 66.2h0.8M53.9 71.4h0.8M55.2 64.0h0.8M53.9 76.9h0.8M47.9 93.3h0.8M55.5 86.8h0.8M48.2 62.8h0.8M49.9 70.7h0.8M55.9 75.1h0.8M49.2 60.1h0.8M48.8 87.1h0.8M47.0 75.0h0.8M54.6 53.5h0.8M52.3 88.2h0.8M39.5 68.0h0.8M51.3 61.9h0.8M55.1 71.2h0.8M42.9 82.3h0.8M56.1 83.7h0.8M60.9 76.5h0.8M52.7 55.9h0.8M55.8 64.4h0.8M49.2 56.3h0.8M46.0 65.4h0.8M60.0 46.8h0.8M43.0 75.0h0.8M60.9 79.2h0.8M40.2 40.8h0.8M54.2 62.9h0.8M45.1 84.1h0.8M58.8 73.9h0.8M53.5 77.4h0.8M61.9 79.7h0.8M55.2 78.8h0.8M42.3 87.9h0.8M57.9 78.6h0.8M39.8 64.1h0.8M57.2 49.5h0.8M50.9 84.6h0.8M43.9 92.0h0.8M55.4 70.1h0.8M54.0 80.1h0.8M52.7 86.2h0.8M47.9 66.9h0.8M58.5 72.3h0.8M46.5 83.7h0.8M61.1 66.5h0.8M43.4 70.3h0.8M51.1 68.3h0.8M60.7 59.3h0.8M59.8 56.3h0.8M47.1 79.8h0.8M59.0 82.7h0.8M54.1 73.8h0.8M52.9 79.1h0.8M50.9 75.4h0.8M55.6 72.0h0.8M56.7 79.0h0.8M64.5 76.0h0.8M49.3 67.4h0.8M51.9 83.5h0.8M49.9 76.8h0.8M63.4 40.2h0.8M45.0 75.0h0.8M54.5 75.0h0.8M49.3 80.1h0.8M53.7 65.5h0.8M67.1 76.4h0.8M48.6 70.8h0.8M50.6 71.2h0.8M35.1 66.0h0.8M58.3 57.5h0.8M51.6 83.8h0.8M57.3 90.5h0.8M41.5 67.6h0.8M49.9 79.7h0.8M58.8 38.7h0.8M58.7 54.1h0.8M56.2 53.5h0.8M53.1 86.8h0.8M51.1 74.4h0.8M56.9 73.8h0.8M51.5 91.0h0.8M58.5 68.4h0.8M69.0 57.8h0.8M57.7 68.7h0.8M52.8 80.7h0.8M53.4 79.9h0.8M42.5 53.3h0.8M55.8 60.1h0.8M45.6 53.8h0.8M59.9 81.3h0.8M61.1 60.4h0.8M52.0 57.9h0.8M56.7 91.7h0.8M46.5 91.3h0.8M58.1 69.8h0.8M39.8 89.4h0.8M51.4 64.5h0.8M54.5 77.1h0.8M61.3 59.4h0.8M59.0 90.4h0.8M61.0 69.8h0.8M47.4 84.6h0.8M52.7 73.5h0.8M60.8 68.7h0.8M37.8 67.2h0.8M40.5 82.2h0.8M54.0 64.4h0.8M51.9 82.3h0.8M52.5 88.4h0.8M51.6 84.9h0.8M61.2 92.0h0.8M47.8 82.9h0.8M40.4 58.6h0.8M39.8 85.3h0.8M44.4 71.8h0.8M50.8 71.6h0.8M48.3 74.9h0.8M63.1 72.5h0.8M55.3 84.4h0.8M50.8 56.4h0.8M48.6 85.3h0.8M41.8 64.6h0.8M58.2 81.8h0.8M52.0 82.0h0.8M53.0 57.4h0.8M42.3 64.1h0.8M57.7 65.0h0.8M46.4 62.4h0.8M42.5 70.5h0.8M44.7 76.5h0.8M37.4 76.1h0.8M48.0 47.9h0.8M56.5 68.6h0.8M38.2 61.1h0.8M53.8 66.3h0.8M56.8 81.3h0.8M56.1 76.1h0.8M60.3 80.2h0.8M54.8 46.2h0.8M57.6 88.2h0.8M50.2 66.2h0.8M64.0 50.2h0.8M54.9 102.1h0.8M46.2 80.6h0.8M63.7 70.5h0.8M55.5 83.2h0.8M46.4 70.9h0.8M53.8 82.2h0.8M51.8 69.6h0.8M45.7 67.5h0.8M57.5 73.3h0.8M46.7 61.6h0.8M68.5 86.1h0.8M56.0 39.8h0.8M55.9 78.0h0.8M62.4 77.3h0.8M51.6 78.5h0.8M39.9 84.8h0.8M54.0 63.3h0.8M60.2 94.4h0.8M43.3 63.7h0.8M53.8 74.3h0.8M49.5 59.9h0.8M65.1 84.9h0.8M44.6 55.3h0.8M62.6 84.3h0.8M63.3 82.0h0.8M46.6 75.2h0.8M38.6 62.7h0.8M51.6 78.5h0.8M47.5 70.5h0.8M54.8 76.7h0.8M56.0 74.6h0.8M50.0 81.8h0.8M52.3 61.8h0.8M48.1 72.0h0.8M51.3 73.9h0.8M52.0 74.2h0.8M51.2 56.4h0.8M54.6 85.1h0.8M54.7 69.7h0.8M54.8 60.0h0.8M40.2 72.7h0.8M46.2 81.2h0.8M45.3 39.4h0.8M45.6 91.6h0.8M49.6 55.0h0.8M47.3 78.5h0.8M55.1 74.2h0.8M61.2 80.8h0.8M51.9 79.4h0.8M62.3 84.0h0.8M58.3 58.6h0.8M51.1 81.1h0.8M50.2 85.3h0.8M55.7 83.3h0.8M50.7 103.6h0.8M59.7 69.3h0.8M52.6 104.2h0.8M49.9 82.8h0.8M58.1 72.1h0.8M44.8 74.3h0.8M54.2 86.0h0.8M56.9 72.3h0.8M57.3 78.7h0.8M53.3 72.7h0.8M50.5 80.5h0.8M45.5 64.2h0.8M52.0 53.8h0.8M49.3 47.1h0.8M47.8 79.0h0.8M55.5 71.3h0.8M50.6 54.4h0.8M63.3 78.4h0.8M58.8 61.1h0.8M50.9 49.4h0.8M56.8 83.6h0.8M40.2 71.4h0.8M55.9 50.2h0.8M40.7 58.8h0.8M48.1 54.6h0.8M52.2 75.1h0.8M55.9 80.7h0.8M61.3 86.4h0.8M43.9 65.7h0.8M45.4 58.6h0.8M51.5 72.1h0.8M55.0 52.3h0.8M44.3 71.7h0.8M50.8 68.1h0.8M51.6 62.6h0.8M56.3 76.4h0.8M51.5 63.7h0.8M50.9 38.3h0.8M45.9 72.5h0.8M42.7 74.5h0.8M52.9 54.9h0.8M50.4 68.1h0.8M54.9 79.6h0.8M51.8 61.4h0.8M51.1 71.2h0.8M56.6 75.6h0.8M47.5 55.2h0.8M49.7 62.8h0.8M45.1 70.6h0.8M49.0 73.3h0.8M55.2 66.9h0.8M66.4 68.0h0.8M58.8 73.5h0.8M58.9 42.5h0.8M47.3 75.1h0.8M55.7 101.0h0.8M54.0 87.9h0.8M56.8 83.7h0.8M55.2 70.1h0.8M55.2 58.6h0.8M59.3 59.4h0.8M53.5 98.3h0.8M50.6 72.2h0.8M59.2 72.3h0.8M47.0 75.2h0.8M55.6 80.8h0.8M47.2 93.7h0.8M62.3 72.2h0.8M53.7 66.7h0.8M60.8 63.3h0.8M56.2 66.1h0.8M47.7 80.9h0.8M60.3 71.9h0.8M47.8 82.1h0.8M51.7 75.9h0.8M61.4 86.0h0.8M48.8 100.3h0.8M52.0 81.7h0.8M48.0 71.4h0.8M41.2 94.2h0.8M60.5 56.9h0.8M42.7 51.9h0.8M59.3 66.3h0.8M51.6 68.1h0.8M51.2 58.5h0.8M52.1 54.2h0.8M51.6 75.8h0.8M54.9 69.1h0.8M46.4 74.0h0.8M49.0 91.4h0.8M56.8 70.6h0.8M49.1 63.3h0.8M46.2 67.6h0.8M53.8 78.4h0.8M55.5 98.0h0.8M47.6 72.2h0.8M69.3 48.8h0.8M48.8 74.1h0.8M53.0 77.1h0.8M50.5 76.5h0.8M52.3 81.6h0.8M40.3 61.0h0.8M52.0 59.2h0.8M45.5 79.8h0.8M48.0 79.9h0.8M56.6 75.8h0.8M55.1 70.7h0.8M43.3 71.6h0.8M54.8 65.4h0.8M51.4 81.3h0.8M46.6 79.9h0.8M63.5 65.1h0.8M52.9 70.1h0.8M61.5 75.9h0.8M57.6 63.4h0.8M51.9 71.9h0.8M41.0 89.9h0.8M57.6 50.3h0.8M56.6 70.4h0.8M54.8 76.5h0.8M42.7 69.4h0.8M61.3 64.9h0.8M45.7 55.1h0.8M44.4 76.2h0.8M62.5 77.3h0.8M53.5 99.7h0.8M48.8 63.6h0.8M55.3 78.8h0.8M45.7 57.5h0.8M53.8 75.1h0.8M43.9 69.5h0.8M48.6 77.7h0.8M51.3 70.9h0.8M49.8 85.1h0.8M60.6 67.4h0.8M57.2 62.6h0.8M52.4 81.3h0.8M61.4 67.3h0.8M51.5 74.4h0.8M42.7 72.2h0.8M47.8 76.6h0.8M45.0 47.5h0.8M52.2 75.2h0.8M48.6 83.0h0.8M50.3 64.5h0.8M55.0 52.6h0.8M47.8 71.7h0.8M57.3 70.0h0.8M53.9 63.9h0.8M53.9 92.6h0.8M47.7 101.3h0.8M48.0 72.2h0.8M53.1 84.7h0.8M44.3 46.0h0.8M55.8 81.9h0.8M55.9 104.6h0.8M53.3 75.1h0.8M57.8 76.6h0.8M62.3 56.6h0.8M49.7 29.3h0.8M57.0 67.4h0.8M57.7 98.7h0.8M52.0 68.8h0.8M48.9 61.6h0.8M48.1 79.9h0.8M52.2 72.8h0.8M50.9 83.3h0.8M55.1 70.2h0.8M56.1 70.1h0.8M44.9 90.0h0.8M54.9 60.1h0.8M58.7 76.3h0.8M42.3 92.0h0.8M54.1 83.1h0.8M53.2 70.1h0.8M42.4 84.0h0.8M52.2 68.4h0.8M54.2 73.0h0.8M56.2 67.4h0.8M51.8 45.5h0.8M49.4 80.4h0.8M60.3 67.5h0.8M51.2 91.6h0.8M50.0 81.1h0.8M62.4 72.5h0.8M59.6 63.2h0.8M53.3 71.0h0.8M52.7 86.0h0.8M66.8 63.7h0.8M48.4 78.2h0.8M45.5 78.2h0.8M55.5 68.6h0.8M55.3 52.8h0.8M56.7 52.8h0.8M47.7 65.1h0.8M49.5 82.6h0.8M52.5 67.1h0.8M55.4 91.6h0.8M52.0 76.5h0.8M59.7 75.3h0.8M44.0 102.9h0.8M65.7 47.4h0.8M51.8 77.2h0.8M58.0 80.3h0.8M50.3 58.9h0.8M52.6 84.8h0.8M45.2 59.3h0.8M51.8 48.0h0.8M50.4 66.6h0.8M54.8 63.3h0.8M46.5 67.1h0.8M51.7 63.8h0.8M52.1 81.3h0.8M59.3 93.1h0.8M47.1 66.8h0.8M36.6 95.6h0.8M47.5 71.6h0.8M55.2 55.2h0.8M54.9 71.7h0.8M40.7 75.6h0.8M59.4 48.8h0.8M57.0 74.6h0.8M54.9 77.5h0.8M60.1 69.2h0.8M57.4 66.9h0.8M56.5 61.9h0.8M51.3 93.5h0.8M54.8 70.0h0.8M44.9 62.2h0.8M53.2 83.6h0.8M54.6 78.5h0.8M51.7 88.8h0.8M49.6 65.2h0.8M57.5 72.8h0.8M50.3 64.9h0.8M50.4 79.7h0.8M54.2 57.0h0.8M54.6 74.2h0.8M45.8 81.6h0.8M50.3 67.8h0.8M56.9 88.4h0.8M47.7 77.4h0.8M46.6 100.7h0.8M48.9 86.8h0.8M48.0 82.1h0.8M65.8 40.5h0.8M49.3 78.2h0.8M51.4 63.7h0.8M65.3 73.0h0.8M41.8 82.6h0.8M41.3 86.3h0.8M48.4 73.8h0.8M59.8 73.5h0.8M43.4 51.0h0.8M59.3 81.2h0.8M46.9 82.7h0.8M55.1 80.0h0.8M38.0 68.3h0.8M57.6 81.1h0.8M57.5 41.5h0.8M53.0 78.1h0.8M67.8 60.2h0.8M50.0 72.4h0.8M57.5 66.5h0.8M59.1 62.2h0.8M53.7 65.5h0.8M53.0 63.4h0.8M42.1 85.6h0.8M53.9 65.1h0.8M53.2 84.3h0.8M45.9 70.6h0.8M55.3 78.5h0.8M49.9 45.9h0.8M59.7 76.1h0.8M52.1 68.5h0.8M53.6 66.7h0.8M45.6 62.8h0.8M48.3 64.4h0.8M44.8 79.9h0.8M43.9 80.2h0.8M45.7 76.4h0.8M60.5 74.5h0.8M47.5 72.6h0.8M52.9 50.5h0.8M48.2 74.0h0.8M49.1 73.0h0.8M56.6 81.5h0.8M57.6 79.3h0.8M50.2 71.8h0.8M50.3 68.1h0.8M50.9 50.6h0.8M49.9 71.7h0.8M46.0 71.7h0.8M55.2 70.0h0.8M64.9 39.7h0.8M50.7 49.4h0.8M58.1 104.9h0.8M36.5 73.6h0.8M55.2 68.2h0.8M55.4 44.2h0.8M57.3 76.6h0.8M52.1 64.7h0.8M56.0 66.0h0.8M53.4 65.7h0.8M38.1 71.6h0.8M53.3 81.4h0.8M46.6 71.6h0.8M55.8 73.8h0.8M59.7 96.7h0.8M46.4 48.2h0.8M57.3 91.0h0.8M57.7 82.1h0.8M48.2 63.2h0.8M57.5 60.7h0.8M40.8 59.6h0.8M67.5 95.9h0.8M47.7 63.0h0.8M53.4 62.7h0.8M60.1 71.0h0.8M45.3 88.2h0.8M48.4 74.7h0.8M51.9 68.1h0.8M54.0 63.4h0.8M40.6 44.6h0.8M44.1 62.6h0.8M51.9 72.7h0.8M55.4 73.5h0.8M47.1 63.2h0.8M38.9 69.9h0.8M55.0 78.6h0.8M51.2 69.8h0.8M57.8 72.2h0.8M56.6 79.2h0.8M53.3 88.2h0.8M48.4 67.5h0.8M47.0 62.1h0.8M61.6 93.8h0.8M52.1 79.0h0.8M59.3 82.0h0.8M59.5 56.3h0.8M48.0 77.6h0.8M60.9 73.3h0.8M46.7 67.6h0.8M47.9 61.4h0.8M61.3 64.2h0.8M52.1 98.8h0.8M59.3 76.2h0.8M48.2 77.1h0.8M62.1 79.7h0.8M59.8 73.2h0.8M55.2 69.5h0.8M54.6 88.1h0.8M43.1 71.2h0.8M53.5 64.9h0.8M50.1 81.8h0.8M64.4 79.8h0.8M54.0 52.8h0.8M64.0 73.0h0.8M51.8 58.1h0.8M51.6 58.4h0.8M52.4 77.8h0.8M52.2 75.5h0.8M46.7 89.7h0.8M48.0 49.5h0.8M50.8 62.5h0.8M45.7 67.6h0.8M53.8 57.3h0.8M51.1 89.7h0.8M56.2 70.1h0.8M52.8 70.5h0.8M51.7 81.1h0.8M51.4 42.2h0.8M51.9 61.0h0.8M56.0 64.4h0.8M52.9 99.0h0.8M45.5 58.1h0.8M43.2 42.3h0.8M40.4 76.5h0.8M48.0 48.8h0.8M42.8 79.7h0.8M47.2 67.5h0.8M54.0 88.8h0.8M64.0 84.8h0.8M52.9 74.3h0.8M63.2 89.7h0.8M50.1 77.7h0.8M53.8 72.6h0.8M48.9 55.6h0.8M48.7 52.9h0.8M59.6 78.7h0.8M44.5 89.3h0.8M57.5 48.3h0.8M63.4 82.0h0.8M64.8 56.7h0.8M55.3 77.2h0.8M53.3 74.1h0.8M58.5 53.5h0.8M44.3 54.7h0.8M48.5 64.5h0.8M54.3 75.3h0.8M52.2 63.6h0.8M49.3 83.8h0.8M56.7 73.3h0.8M50.0 91.3h0.8M48.3 80.0h0.8M59.2 68.7h0.8M57.1 58.2h0.8M58.3 74.5h0.8M42.2 80.3h0.8M46.5 87.9h0.8M47.8 70.0h0.8M53.8 67.9h0.8M53.6 65.1h0.8M56.2 72.1h0.8M53.3 37.9h0.8M59.2 72.4h0.8M40.9 73.2h0.8M54.9 85.3h0.8M45.3 91.2h0.8M51.0 101.7h0.8M51.1 80.4h0.8M49.7 58.2h0.8M58.8 83.2h0.8M61.5 82.6h0.8M48.4 51.4h0.8M48.0 63.6h0.8M46.9 79.2h0.8M54.0 68.7h0.8M53.1 70.2h0.8M53.3 81.3h0.8M57.9 63.5h0.8M42.7 89.7h0.8M52.7 85.7h0.8M41.8 67.9h0.8M52.2 54.1h0.8M48.8 81.0h0.8M58.7 91.8h0.8M46.6 54.6h0.8M55.2 83.7h0.8M53.2 55.9h0.8M56.8 81.8h0.8M55.4 66.0h0.8M53.9 81.8h0.8M48.5 49.1h0.8M54.0 78.0h0.8M52.1 83.0h0.8M48.4 71.0h0.8M50.1 79.1h0.8M61.9 68.9h0.8M64.7 91.0h0.8M56.9 79.3h0.8M63.0 69.8h0.8M51.3 58.8h0.8M54.9 88.7h0.8M55.3 77.2h0.8M50.8 74.1h0.8M43.2 85.0h0.8M49.5 58.3h0.8M47.3 61.8h0.8M57.3 85.1h0.8M43.6 83.5h0.8M57.5 64.8h0.8M42.8 62.8h0.8M48.1 76.2h0.8M49.8 46.8h0.8M53.4 53.0h0.8M57.6 57.0h0.8M47.7 61.4h0.8M48.6 88.1h0.8M57.3 79.5h0.8M54.0 52.8h0.8M48.8 65.2h0.8M45.9 78.3h0.8M47.4 63.2h0.8M45.5 46.5h0.8M55.7 88.5h0.8M53.1 59.9h0.8M35.2 74.1h0.8M59.5 75.7h0.8M57.7 90.3h0.8M59.0 66.5h0.8M58.5 81.6h0.8M42.5 67.0h0.8M43.2 70.6h0.8M55.6 58.8h0.8M39.3 88.1h0.8M54.3 90.2h0.8M43.8 85.2h0.8M64.9 96.9h0.8M50.7 75.3h0.8M51.0 84.4h0.8M58.4 73.1h0.8M43.6 81.2h0.8M49.1 79.8h0.8M53.6 92.1h0.8M59.1 66.4h0.8M54.2 93.9h0.8M48.7 77.4h0.8M59.4 87.6h0.8M55.2 55.6h0.8M44.2 75.1h0.8M54.4 103.6h0.8M46.7 86.1h0.8M56.8 51.3h0.8M46.9 74.1h0.8M48.9 70.1h0.8M54.9 62.0h0.8M54.9 64.1h0.8M48.6 78.7h0.8M48.4 75.6h0.8M61.9 72.3h0.8M51.1 81.1h0.8M49.7 85.4h0.8M44.0 79.7h0.8M48.8 62.1h0.8M63.0 61.5h0.8M62.9 80.2h0.8M61.0 59.9h0.8M59.4 90.1h0.8M51.3 70.4h0.8M67.2 74.2h0.8M49.4 64.2h0.8M54.8 76.1h0.8M53.1 93.3h0.8M50.0 77.9h0.8M61.0 59.6h0.8M58.4 94.7h0.8M43.6 58.4h0.8M45.6 49.1h0.8M54.8 49.0h0.8M55.1 90.0h0.8M42.0 68.1h0.8M40.1 81.7h0.8M47.4 68.7h0.8M52.3 78.8h0.8M49.9 72.2h0.8M48.6 73.4h0.8M44.7 72.8h0.8M40.0 65.9h0.8M63.9 73.0h0.8M44.2 75.2h0.8M46.0 51.5h0.8M47.4 81.1h0.8M54.4 70.8h0.8M46.3 58.6h0.8M60.4 75.0h0.8M46.1 45.8h0.8M43.5 102.7h0.8M44.9 71.0h0.8M53.3 70.0h0.8M50.3 55.0h0.8M45.5 92.9h0.8M47.3 82.5h0.8M41.5 68.6h0.8M53.6 84.9h0.8M45.0 79.4h0.8M54.4 62.9h0.8M55.0 60.9h0.8M47.1 71.8h0.8M35.2 70.6h0.8M45.8 53.9h0.8M49.4 81.5h0.8M49.5 87.7h0.8M44.8 55.7h0.8M61.6 76.9h0.8M57.9 61.7h0.8M57.0 75.2h0.8M56.0 72.3h0.8M59.5 64.0h0.8M46.0 53.7h0.8M59.2 62.8h0.8M45.5 60.3h0.8M49.2 56.2h0.8M50.2 64.2h0.8M48.6 60.1h0.8M52.2 66.3h0.8M52.7 75.1h0.8M54.1 44.9h0.8M48.7 62.1h0.8M56.8 52.4h0.8M47.6 68.4h0.8M49.9 84.3h0.8M49.3 84.0h0.8M42.9 49.5h0.8M59.6 77.4h0.8M55.0 73.5h0.8M55.0 56.9h0.8M57.9 65.4h0.8M58.1 73.1h0.8M39.8 56.0h0.8M59.0 70.3h0.8M49.5 75.0h0.8M49.4 65.2h0.8M52.6 73.8h0.8M61.4 72.6h0.8M63.7 94.4h0.8M62.6 85.2h0.8M52.8 73.7h0.8M51.1 62.9h0.8M51.6 64.1h0.8M62.2 78.6h0.8M49.2 48.2h0.8M51.7 66.8h0.8M45.3 57.9h0.8M38.0 79.1h0.8M51.6 104.0h0.8M51.8 70.2h0.8M61.0 73.7h0.8M53.0 67.4h0.8M48.2 90.6h0.8M58.2 93.3h0.8M49.8 72.4h0.8M46.5 84.0h0.8M43.4 79.0h0.8M58.8 89.5h0.8M46.2 85.5h0.8M47.6 62.6h0.8M43.8 86.3h0.8M62.2 64.6h0.8M47.3 67.8h0.8M67.5 84.5h0.8M48.6 49.8h0.8M47.8 86.7h0.8M63.6 68.7h0.8M47.7 65.7h0.8M40.3 83.3h0.8M45.3 85.2h0.8M41.4 56.3h0.8M53.8 62.5h0.8M56.8 72.1h0.8M44.7 79.7h0.8M57.2 48.3h0.8M63.3 78.2h0.8M56.7 48.9h0.8M47.5 67.7h0.8M58.7 53.9h0.8M46.5 46.8h0.8M50.5 76.3h0.8M41.5 64.7h0.8M55.2 91.7h0.8M56.1 68.2h0.8M44.7 60.4h0.8M47.9 73.8h0.8M51.7 92.7h0.8M53.8 58.7h0.8M61.6 83.8h0.8M52.6 63.1h0.8M40.4 59.3h0.8M57.7 62.0h0.8M43.8 74.4h0.8M53.5 79.5h0.8M56.1 89.5h0.8M46.8 84.1h0.8M45.9 80.6h0.8M53.1 75.0h0.8M58.0 71.8h0.8M58.9 82.9h0.8M52.8 65.0h0.8M47.3 65.5h0.8M50.7 71.7h0.8M70.5 79.9h0.8M56.8 61.3h0.8M47.6 68.0h0.8M53.2 59.2h0.8M62.0 65.0h0.8M58.7 43.0h0.8M52.0 75.4h0.8M53.2 79.5h0.8M53.7 74.0h0.8M40.3 63.2h0.8M37.5 79.8h0.8M53.9 69.6h0.8M46.9 64.8h0.8M63.4 93.5h0.8M51.6 88.0h0.8M42.2 48.0h0.8M49.0 61.2h0.8M48.5 74.3h0.8M70.8 63.8h0.8M52.3 75.4h0.8M51.8 83.5h0.8M63.0 56.6h0.8M53.0 68.7h0.8M54.2 53.0h0.8M41.1 43.3h0.8M55.3 74.4h0.8M52.5 42.7h0.8M49.7 62.6h0.8M43.2 60.6h0.8M56.3 78.7h0.8M51.9 78.4h0.8M48.3 72.9h0.8M52.2 78.9h0.8M51.6 70.2h0.8M51.2 64.0h0.8M65.8 78.4h0.8M54.7 100.4h0.8M60.7 52.7h0.8M56.3 82.4h0.8M63.7 88.3h0.8M56.8 57.4h0.8M46.6 75.3h0.8M55.1 59.3h0.8M49.6 67.0h0.8M52.4 76.2h0.8M50.2 56.7h0.8M59.7 91.8h0.8M51.3 84.7h0.8M54.8 80.2h0.8M55.0 62.5h0.8M55.6 84.5h0.8M46.4 96.4h0.8M65.0 94.6h0.8M64.3 81.2h0.8M49.9 64.6h0.8M47.0 73.4h0.8M51.8 80.3h0.8M39.5 100.7h0.8M66.1 71.7h0.8M56.2 77.9h0.8M53.7 69.4h0.8M51.2 61.8h0.8M53.1 71.7h0.8M54.0 61.4h0.8M52.2 72.6h0.8M55.7 58.8h0.8M54.6 84.2h0.8M55.7 67.4h0.8M49.0 69.1h0.8M56.5 91.3h0.8M51.0 64.0h0.8M54.3 74.5h0.8M46.4 62.9h0.8M51.4 80.3h0.8M44.6 59.4h0.8M55.1 56.8h0.8M52.7 76.4h0.8M51.3 59.4h0.8M51.6 67.9h0.8M54.1 61.6h0.8M58.8 51.2h0.8M50.9 72.1h0.8M58.0 64.5h0.8M55.4 65.0h0.8M56.6 93.5h0.8M49.5 77.5h0.8M46.3 84.1h0.8M59.5 72.4h0.8M45.0 77.0h0.8M59.1 85.5h0.8M57.0 49.3h0.8M47.8 89.6h0.8M44.4 86.0h0.8M63.7 81.4h0.8M58.9 67.9h0.8M44.4 70.7h0.8M50.8 71.4h0.8M56.3 70.2h0.8M53.2 77.3h0.8M52.0 94.9h0.8M54.7 73.0h0.8M50.7 64.2h0.8M60.3 73.9h0.8M45.3 65.0h0.8M51.2 66.5h0.8M58.7 57.6h0.8M55.1 73.8h0.8M44.7 72.6h0.8M51.4 78.2h0.8M49.2 75.8h0.8M41.7 58.6h0.8M56.9 84.9h0.8M51.9 64.6h0.8M58.7 46.1h0.8M47.0 80.3h0.8M56.0 59.2h0.8M40.3 90.0h0.8M52.9 60.9h0.8M52.3 83.2h0.8M35.9 85.8h0.8M56.6 46.2h0.8M56.8 49.9h0.8M59.1 76.9h0.8M66.0 64.4h0.8M52.0 85.0h0.8M48.0 63.3h0.8M49.7 71.1h0.8M45.3 78.0h0.8M55.4 72.9h0.8M62.5 67.9h0.8M60.1 65.2h0.8M56.7 48.0h0.8M53.2 69.8h0.8M48.9 64.4h0.8M49.8 63.1h0.8M38.4 64.6h0.8M48.6 65.5h0.8M45.4 70.3h0.8M56.9 68.9h0.8M48.9 88.8h0.8M58.1 83.4h0.8M59.2 67.9h0.8M51.2 85.8h0.8M48.6 70.5h0.8M54.3 76.6h0.8M50.3 84.2h0.8M50.9 81.0h0.8M58.6 80.2h0.8M56.5 57.6h0.8M43.9 64.3h0.8M54.9 90.6h0.8M44.4 75.8h0.8M46.7 62.9h0.8M50.3 80.6h0.8M53.3 86.6h0.8M45.9 83.0h0.8M57.8 72.9h0.8M55.0 65.0h0.8M45.2 67.0h0.8M48.0 107.8h0.8M49.0 92.5h0.8M53.3 75.9h0.8M56.6 62.3h0.8M57.7 76.7h0.8M42.6 79.5h0.8M55.4 77.6h0.8M61.8 66.9h0.8M55.2 81.3h0.8M46.4 86.9h0.8M43.0 55.9h0.8M55.2 58.5h0.8M51.3 51.6h0.8M52.4 57.9h0.8M54.1 53.0h0.8M54.8 68.7h0.8M52.4 71.2h0.8M52.8 55.6h0.8M36.1 72.4h0.8M46.2 66.4h0.8M54.6 47.4h0.8M47.3 64.4h0.8M45.4 76.1h0.8M51.1 61.8h0.8M45.9 82.0h0.8M47.9 79.3h0.8M54.8 48.5h0.8M45.3 72.0h0.8M54.1 81.7h0.8M57.0 84.8h0.8M49.7 69.4h0.8M56.8 66.7h0.8M58.6 52.3h0.8M56.1 69.9h0.8M39.8 84.1h0.8M53.9 72.3h0.8M45.3 66.2h0.8M61.4 61.7h0.8M30.5 61.4h0.8M44.6 70.4h0.8M49.6 60.7h0.8M46.8 85.0h0.8M43.1 96.3h0.8M48.6 58.5h0.8M56.9 79.0h0.8M45.5 81.3h0.8M40.6 60.5h0.8M59.0 68.8h0.8M43.9 78.4h0.8M57.7 71.7h0.8M40.8 67.7h0.8M54.6 81.5h0.8M63.5 68.9h0.8M49.0 71.5h0.8M59.5 60.3h0.8M60.1 37.9h0.8M56.9 63.6h0.8M54.8 80.5h0.8M44.7 70.9h0.8M53.5 79.3h0.8M46.2 59.7h0.8M40.1 103.5h0.8M50.8 69.2h0.8M42.7 83.5h0.8M48.7 89.8h0.8M57.3 72.3h0.8M56.5 58.2h0.8M50.0 64.9h0.8M44.1 72.2h0.8M51.1 89.8h0.8M31.2 63.7h0.8M46.3 66.2h0.8M54.6 77.0h0.8M52.2 66.1h0.8" stroke="#6a6ed0" stroke-width="0.8" opacity="0.7"/><ellipse cx="52" cy="72" rx="10.5" ry="21.0" fill="url(#sb)"/><path d="M92.3 140.9h0.8M83.6 135.9h0.8M85.4 128.5h0.8M91.0 138.5h0.8M90.9 130.9h0.8M89.8 130.6h0.8M91.9 143.6h0.8M97.0 148.2h0.8M87.5 134.3h0.8M87.0 140.5h0.8M97.9 143.7h0.8M82.3 127.9h0.8M85.7 142.2h0.8M90.5 140.4h0.8M97.1 131.3h0.8M87.3 153.8h0.8M91.8 131.7h0.8M83.0 125.7h0.8M81.4 138.6h0.8M90.7 146.0h0.8M90.0 132.4h0.8M87.7 153.3h0.8M83.9 139.4h0.8M90.6 143.0h0.8M89.0 142.0h0.8M93.5 136.8h0.8M88.8 136.5h0.8M86.9 136.3h0.8M89.4 139.7h0.8M95.5 148.5h0.8M88.8 142.9h0.8M91.6 144.1h0.8M90.6 140.1h0.8M88.8 131.7h0.8M93.7 148.5h0.8M93.0 141.5h0.8M91.5 134.4h0.8M83.9 143.3h0.8M91.2 133.5h0.8M86.9 148.3h0.8M83.8 152.2h0.8M92.9 157.1h0.8M87.8 137.8h0.8M88.6 139.3h0.8M89.7 132.0h0.8M94.5 131.7h0.8M88.6 142.5h0.8M88.5 134.5h0.8M91.8 135.0h0.8M85.9 137.2h0.8M89.7 151.7h0.8M86.4 145.8h0.8M87.6 135.1h0.8M89.3 140.2h0.8M93.7 152.1h0.8M88.1 148.7h0.8M94.2 144.5h0.8M87.7 145.3h0.8M90.1 140.8h0.8M89.5 143.4h0.8M94.6 147.1h0.8M89.7 146.0h0.8M95.9 130.5h0.8M96.0 127.2h0.8M92.5 142.8h0.8M96.0 140.2h0.8M88.7 131.6h0.8M85.8 144.2h0.8M89.6 132.2h0.8M92.5 131.8h0.8M88.9 134.3h0.8M96.7 149.8h0.8M89.9 125.3h0.8M91.5 138.6h0.8M91.8 142.6h0.8M89.3 145.5h0.8M93.6 139.7h0.8M89.0 134.1h0.8M93.1 129.1h0.8M89.9 132.0h0.8M85.3 142.9h0.8M90.4 138.3h0.8M93.8 126.0h0.8M90.3 140.3h0.8M93.6 129.3h0.8M93.2 139.8h0.8M95.5 147.2h0.8M92.5 155.3h0.8M90.5 134.6h0.8M89.2 130.4h0.8M90.4 122.9h0.8M90.2 141.4h0.8M94.2 135.2h0.8M95.7 132.8h0.8M90.0 122.9h0.8M87.7 131.6h0.8M95.9 142.2h0.8M86.5 142.2h0.8M92.2 136.2h0.8M90.6 135.6h0.8M88.5 124.0h0.8M90.2 148.1h0.8M95.7 135.8h0.8M87.8 136.3h0.8M93.8 140.8h0.8M88.4 140.8h0.8M89.8 142.1h0.8M89.0 126.4h0.8M90.7 144.0h0.8M86.5 137.2h0.8M93.7 135.1h0.8M88.1 154.0h0.8M93.5 146.1h0.8M87.1 150.8h0.8M84.5 133.9h0.8M93.2 148.4h0.8M87.1 132.8h0.8M91.2 122.9h0.8M92.8 142.4h0.8M88.9 142.2h0.8M93.3 140.4h0.8M92.4 149.8h0.8M88.8 139.3h0.8M88.6 146.1h0.8M89.0 141.7h0.8M91.0 138.5h0.8M96.7 137.3h0.8M95.6 144.4h0.8M95.3 136.7h0.8M93.8 143.9h0.8M88.3 140.1h0.8M90.0 137.7h0.8M95.2 132.4h0.8M84.5 124.4h0.8M88.9 133.0h0.8M90.6 142.4h0.8M96.8 140.4h0.8M92.2 132.3h0.8M92.6 148.6h0.8M95.3 122.8h0.8M93.7 150.3h0.8M93.5 126.4h0.8M89.4 142.6h0.8M92.0 131.7h0.8M87.3 145.5h0.8M85.7 149.1h0.8M90.6 140.3h0.8M85.7 133.4h0.8M93.0 126.6h0.8M97.9 127.1h0.8M86.1 138.3h0.8M92.2 143.7h0.8M89.2 136.4h0.8M89.7 133.5h0.8M81.3 145.5h0.8M91.4 139.2h0.8M88.3 139.9h0.8M90.5 137.4h0.8M94.5 124.7h0.8M91.4 129.7h0.8M89.4 149.6h0.8M86.6 137.2h0.8M88.4 145.4h0.8M87.0 125.0h0.8M92.3 135.3h0.8M89.4 146.4h0.8M87.3 135.1h0.8M91.0 141.2h0.8M88.7 146.0h0.8M98.5 134.8h0.8M97.2 121.7h0.8M95.5 135.3h0.8M91.0 135.4h0.8M88.2 128.1h0.8M89.1 148.0h0.8M94.6 135.3h0.8M88.6 132.6h0.8M86.2 152.0h0.8M92.9 138.9h0.8M88.7 130.1h0.8M95.2 144.0h0.8M87.1 145.7h0.8M86.5 143.0h0.8M87.1 134.8h0.8M92.3 141.3h0.8M94.1 131.5h0.8M96.1 148.4h0.8M90.5 141.6h0.8M87.7 136.8h0.8M85.8 138.7h0.8M91.2 148.4h0.8M93.9 144.3h0.8M89.2 136.3h0.8M89.3 139.7h0.8M83.6 144.0h0.8M84.9 134.0h0.8M90.6 134.0h0.8M96.4 137.2h0.8M96.1 147.1h0.8M88.7 141.1h0.8M95.1 135.4h0.8M90.8 133.7h0.8M90.7 135.3h0.8M90.8 145.8h0.8M95.5 139.0h0.8M91.2 144.6h0.8M89.5 129.8h0.8M94.5 130.8h0.8M93.8 130.5h0.8M97.0 129.9h0.8M93.5 149.6h0.8M87.1 149.5h0.8M87.6 124.3h0.8M93.1 143.4h0.8M89.8 118.5h0.8M90.3 135.6h0.8M89.1 135.8h0.8M84.1 133.6h0.8M96.9 150.0h0.8M89.2 132.5h0.8M91.9 146.2h0.8M93.1 129.0h0.8M91.1 139.1h0.8M95.6 147.3h0.8M92.4 147.4h0.8M89.1 149.9h0.8M89.0 141.1h0.8M93.8 130.9h0.8M88.0 124.4h0.8M91.1 137.6h0.8M89.3 141.9h0.8M82.9 137.8h0.8M90.8 135.9h0.8M93.3 151.6h0.8M88.9 130.7h0.8M88.3 138.7h0.8M92.6 131.3h0.8M94.1 130.1h0.8M93.5 141.3h0.8M92.2 154.7h0.8M89.6 136.7h0.8M92.2 144.7h0.8M85.7 140.1h0.8M87.9 142.9h0.8M95.4 138.4h0.8M90.1 139.4h0.8M79.9 144.0h0.8M92.5 139.3h0.8M89.1 132.3h0.8M89.9 147.4h0.8M90.1 148.4h0.8M81.3 134.4h0.8M91.5 137.9h0.8M84.6 132.9h0.8M95.0 128.0h0.8M87.0 129.5h0.8M88.5 143.0h0.8M92.6 122.3h0.8M95.7 133.4h0.8M88.4 150.9h0.8M90.2 128.4h0.8M88.2 132.4h0.8M86.9 135.4h0.8M93.6 140.7h0.8M85.6 159.6h0.8M87.0 138.9h0.8M90.6 143.9h0.8M89.3 141.5h0.8M98.0 138.7h0.8M86.6 140.5h0.8M87.6 135.1h0.8M91.2 140.6h0.8M89.5 144.6h0.8M89.8 127.9h0.8M93.6 135.2h0.8M94.8 132.9h0.8M92.5 140.4h0.8M80.9 126.4h0.8M86.5 148.9h0.8M83.8 145.1h0.8M94.4 141.8h0.8M92.9 134.2h0.8M90.5 139.7h0.8M92.0 143.5h0.8M89.8 132.6h0.8M88.5 141.2h0.8M84.6 128.3h0.8M89.0 133.7h0.8M89.5 117.4h0.8M89.3 136.1h0.8M93.3 122.7h0.8M89.4 141.7h0.8M92.2 147.3h0.8M94.3 129.9h0.8M92.8 135.4h0.8M87.6 149.9h0.8M88.3 131.4h0.8M89.0 131.4h0.8M94.1 140.9h0.8M95.5 141.2h0.8M88.3 146.1h0.8M88.2 134.4h0.8M89.9 138.3h0.8M94.8 133.3h0.8M91.8 137.8h0.8M86.0 129.5h0.8M89.7 141.1h0.8M91.6 141.7h0.8M90.7 134.5h0.8M92.0 130.2h0.8M85.7 135.4h0.8M85.4 134.0h0.8M87.8 133.7h0.8M90.3 131.8h0.8M89.0 124.7h0.8M91.0 131.2h0.8M91.9 116.0h0.8M87.6 139.9h0.8M81.7 135.2h0.8M90.8 138.8h0.8M85.1 139.8h0.8M91.0 130.4h0.8M93.2 137.6h0.8M90.6 134.5h0.8M92.5 138.8h0.8M94.6 141.5h0.8M88.3 136.3h0.8M93.8 135.2h0.8M91.9 142.1h0.8M89.9 119.9h0.8M91.0 139.7h0.8M91.0 132.1h0.8M94.8 137.0h0.8M88.3 132.4h0.8M91.8 129.5h0.8M86.9 153.6h0.8M95.2 146.2h0.8M95.4 142.6h0.8M84.4 147.3h0.8M95.0 141.8h0.8M83.5 147.7h0.8M95.4 134.2h0.8M91.0 144.1h0.8M90.2 146.6h0.8M90.8 143.4h0.8M90.8 126.5h0.8M86.9 162.7h0.8M91.5 148.2h0.8M94.6 151.4h0.8M92.5 133.3h0.8M90.6 123.0h0.8M89.8 145.1h0.8M82.7 139.5h0.8M93.5 148.4h0.8M87.2 132.9h0.8M83.7 130.0h0.8M92.4 154.2h0.8M86.4 148.8h0.8M92.0 134.1h0.8M98.4 118.3h0.8M90.3 139.7h0.8M98.2 152.1h0.8M98.7 139.1h0.8M94.0 148.7h0.8M92.3 140.8h0.8M89.8 134.8h0.8M86.1 153.3h0.8M88.9 121.7h0.8M91.5 137.7h0.8M91.1 152.2h0.8M90.1 135.9h0.8M87.8 137.8h0.8M88.9 139.6h0.8M101.8 141.1h0.8M87.4 153.1h0.8M93.6 144.4h0.8M93.1 144.4h0.8M92.9 149.1h0.8M94.1 148.6h0.8M88.7 138.0h0.8M87.9 145.5h0.8M93.5 134.3h0.8M92.6 158.6h0.8M95.0 129.2h0.8M90.2 143.0h0.8M90.4 141.0h0.8M94.8 140.6h0.8M86.5 143.6h0.8M90.1 138.9h0.8M88.4 127.1h0.8M86.0 135.2h0.8M86.6 116.7h0.8M94.7 128.9h0.8M87.9 142.2h0.8M81.8 148.5h0.8M87.7 143.2h0.8M88.8 140.4h0.8M90.9 138.0h0.8M83.9 126.5h0.8M90.4 149.1h0.8M88.5 142.2h0.8M91.1 141.8h0.8M94.1 126.2h0.8M91.5 136.6h0.8M89.4 131.3h0.8M87.7 129.9h0.8M86.5 157.7h0.8M96.7 138.1h0.8M93.2 130.3h0.8M80.4 123.7h0.8M91.0 149.3h0.8M90.3 130.1h0.8M89.6 130.2h0.8M85.4 136.2h0.8M89.1 131.6h0.8M87.3 130.7h0.8M91.4 148.9h0.8M89.7 155.6h0.8M84.6 140.2h0.8M86.3 136.7h0.8M90.9 142.4h0.8M94.6 133.6h0.8M86.0 136.5h0.8M91.6 132.5h0.8M93.7 151.2h0.8M85.3 140.8h0.8M94.2 122.9h0.8M91.2 136.2h0.8M85.3 148.3h0.8M91.3 134.2h0.8M92.1 143.0h0.8M93.3 142.6h0.8M92.0 128.8h0.8M89.0 139.0h0.8M80.5 154.7h0.8M89.1 129.7h0.8M83.9 140.0h0.8M90.6 133.4h0.8M89.0 131.0h0.8M87.8 137.2h0.8M88.2 143.3h0.8M90.0 139.0h0.8M92.0 148.0h0.8M92.7 139.8h0.8M89.9 131.7h0.8M89.3 143.4h0.8M91.3 135.0h0.8M85.7 126.0h0.8M91.7 146.1h0.8M91.9 127.2h0.8M89.7 139.7h0.8M87.2 140.7h0.8M89.8 131.4h0.8M86.0 144.4h0.8M91.8 131.0h0.8M86.8 145.0h0.8M92.7 135.6h0.8M96.3 135.7h0.8M86.7 146.6h0.8M89.8 140.7h0.8M90.6 130.1h0.8M86.2 136.5h0.8M95.6 130.1h0.8M95.4 139.7h0.8M86.5 140.1h0.8M92.6 130.9h0.8M82.8 140.8h0.8M86.5 141.5h0.8M83.6 136.9h0.8M87.6 126.4h0.8M89.6 139.3h0.8M88.5 128.7h0.8M91.3 124.3h0.8M92.4 141.8h0.8M96.6 144.9h0.8M91.8 140.1h0.8M90.6 127.6h0.8M95.8 142.1h0.8M89.5 129.0h0.8M95.9 142.2h0.8M86.2 143.3h0.8M97.4 137.8h0.8M91.9 134.7h0.8M88.2 146.4h0.8M101.6 138.9h0.8M90.1 144.2h0.8M89.4 143.7h0.8M93.5 130.0h0.8M86.6 137.4h0.8M93.5 140.2h0.8M95.0 127.2h0.8M92.3 133.1h0.8M90.9 140.5h0.8M87.0 136.2h0.8M86.3 140.1h0.8M87.4 134.1h0.8M91.3 132.9h0.8M94.6 133.0h0.8M93.6 140.2h0.8M86.8 136.3h0.8M87.5 135.2h0.8M89.5 152.2h0.8M89.0 150.3h0.8M92.1 127.8h0.8M82.2 143.3h0.8M83.3 143.6h0.8M94.2 141.0h0.8M89.7 136.0h0.8M91.4 135.6h0.8M88.6 135.1h0.8M94.7 133.2h0.8M91.9 129.0h0.8M87.9 127.3h0.8M89.8 143.3h0.8M91.6 134.2h0.8M92.7 135.3h0.8M91.8 140.1h0.8M92.5 118.7h0.8M85.8 144.0h0.8M90.1 155.5h0.8M89.7 133.7h0.8M95.9 142.3h0.8M97.3 142.0h0.8M89.8 143.6h0.8M87.7 134.5h0.8M88.5 136.3h0.8M93.3 134.2h0.8M91.7 134.1h0.8M93.7 116.5h0.8M89.8 139.3h0.8M86.6 145.9h0.8M91.3 148.0h0.8M94.0 143.0h0.8M90.0 129.5h0.8M89.7 134.4h0.8M91.4 134.4h0.8M101.5 125.6h0.8M94.7 134.3h0.8M89.6 145.2h0.8M90.5 128.6h0.8M92.0 136.5h0.8M83.1 139.5h0.8M86.7 132.2h0.8M92.2 140.3h0.8M89.5 154.9h0.8M92.0 133.2h0.8M91.3 137.1h0.8M82.6 125.7h0.8M85.5 154.1h0.8M89.8 135.8h0.8M88.5 145.6h0.8M90.6 151.3h0.8M93.3 150.8h0.8M90.1 140.9h0.8M88.9 136.7h0.8M84.3 133.5h0.8M87.1 132.9h0.8M94.9 140.0h0.8M94.9 144.7h0.8M93.8 145.8h0.8M88.3 144.2h0.8M89.3 133.9h0.8M94.8 154.8h0.8M87.0 151.5h0.8M93.5 131.4h0.8M91.5 140.9h0.8M91.8 135.2h0.8M85.9 138.2h0.8M93.6 144.1h0.8M92.9 146.6h0.8M86.9 137.7h0.8M91.7 145.8h0.8M91.1 142.0h0.8M91.0 154.3h0.8M82.7 137.8h0.8M99.4 139.8h0.8M83.9 139.0h0.8M85.4 132.7h0.8M91.3 151.3h0.8M92.2 143.2h0.8M94.1 139.6h0.8M87.4 137.2h0.8M91.7 135.9h0.8M88.1 135.2h0.8M85.1 130.0h0.8M90.2 135.2h0.8M90.6 148.9h0.8M91.6 137.7h0.8M86.3 129.6h0.8M91.8 131.2h0.8M92.0 129.7h0.8M91.0 137.4h0.8M94.1 135.0h0.8M89.2 139.9h0.8M90.7 151.1h0.8M89.6 133.8h0.8M89.4 141.7h0.8M91.3 143.4h0.8M85.5 157.2h0.8M97.1 137.8h0.8M86.2 139.2h0.8M92.0 120.7h0.8M90.5 126.5h0.8M92.1 148.7h0.8M94.2 126.3h0.8M95.4 145.0h0.8M89.2 141.9h0.8M95.9 135.4h0.8M90.4 133.7h0.8M94.6 121.3h0.8M95.6 130.5h0.8M93.8 125.4h0.8M87.1 133.4h0.8M93.5 125.4h0.8M92.7 133.1h0.8M94.9 135.6h0.8M92.2 136.7h0.8M96.9 135.2h0.8M90.4 153.4h0.8M90.8 143.3h0.8M87.9 139.5h0.8M82.4 138.8h0.8M88.2 126.3h0.8M85.4 146.9h0.8M92.0 126.2h0.8M97.0 132.6h0.8M89.2 139.9h0.8M86.4 125.5h0.8M87.8 147.2h0.8M93.9 125.7h0.8M94.8 138.3h0.8M92.3 138.4h0.8M92.0 130.2h0.8M87.2 132.5h0.8M89.2 142.8h0.8M86.1 150.4h0.8M88.2 133.4h0.8M93.0 141.4h0.8M89.3 129.7h0.8M86.9 125.6h0.8M94.6 146.4h0.8M97.2 141.9h0.8M91.7 143.9h0.8M93.9 136.0h0.8M91.8 154.7h0.8M84.4 127.1h0.8M87.1 143.8h0.8M94.8 135.4h0.8M92.9 137.6h0.8M91.6 133.8h0.8M90.4 138.0h0.8M94.6 155.3h0.8M84.0 142.1h0.8M90.5 145.5h0.8M94.3 144.1h0.8M93.4 130.6h0.8M84.4 151.0h0.8M94.8 130.6h0.8M95.1 143.2h0.8M81.7 145.0h0.8M87.0 147.0h0.8M88.1 132.2h0.8M85.0 136.3h0.8M94.1 132.8h0.8M83.8 154.6h0.8M97.1 143.4h0.8M88.6 128.6h0.8M84.6 142.3h0.8M95.2 129.8h0.8M90.5 135.8h0.8M89.6 141.9h0.8M98.0 133.1h0.8M93.5 146.5h0.8M89.5 136.8h0.8M85.7 146.4h0.8M88.6 132.9h0.8M90.7 131.3h0.8M86.8 135.7h0.8M95.8 136.4h0.8M92.4 126.6h0.8M83.5 152.1h0.8M89.1 126.0h0.8M90.1 142.7h0.8M84.3 131.1h0.8M91.4 130.8h0.8M93.4 145.5h0.8M92.1 134.7h0.8M90.3 133.1h0.8M90.0 140.5h0.8M89.4 145.6h0.8M99.8 133.7h0.8M91.7 144.4h0.8M92.8 136.1h0.8M88.8 145.8h0.8M92.7 141.9h0.8M87.6 142.9h0.8M93.4 136.6h0.8M92.8 154.9h0.8M83.8 142.7h0.8M86.3 127.4h0.8" stroke="#e85040" stroke-width="0.8" opacity="0.7"/><ellipse cx="90.5" cy="138" rx="6.300000000000001" ry="13.65" fill="url(#sr)"/><path d="M0.5 0V167.5H138" fill="none" stroke="#555" stroke-width="1"/><path d="M34 168v-4" stroke="#555"/><path d="M69 168v-4" stroke="#555"/><path d="M104 168v-4" stroke="#555"/><path d="M137 168v-4" stroke="#555"/><path d="M0 0.5h4" stroke="#555"/><path d="M0 41h4" stroke="#555"/><path d="M0 83h4" stroke="#555"/><path d="M0 125h4" stroke="#555"/></svg>
<div class="t" style="left:40.5px;top:969.6px;font-size:17px;color:#111;">2</div>
<div class="t" style="left:55.0px;top:961.9px;font-size:9px;color:#111;">10</div><div class="t" style="left:65.2px;top:959.8px;font-size:6.75px;color:#111;">-4</div>
<div class="t" style="left:40.5px;top:1052.6px;font-size:17px;color:#111;">1</div>
<div class="t" style="left:40.5px;top:1135.6px;font-size:17px;color:#111;">0</div>
<div class="t" style="left:76.4px;top:1146.6px;font-size:17px;color:#111;">-10</div>
<div class="t" style="left:115.9px;top:1146.6px;font-size:17px;color:#111;">-5</div>
<div class="t" style="left:153.8px;top:1146.6px;font-size:17px;color:#111;">0</div>
<div class="r" style="left:52px;top:1165px;width:74px;height:17px;background:linear-gradient(#f0f5fb 0,#f0f5fb 15%,#dadada 15%,#dadada 100%);border:1.5px solid #444;box-sizing:border-box;"></div>
<div class="t" style="left:55.0px;top:1168.3px;font-size:9.5px;color:#111;transform:scaleX(0.882);">Plot all projections</div>
<div class="r" style="left:131px;top:1165px;width:76px;height:17px;background:linear-gradient(#e8f1fa 0,#e8f1fa 50%,#d8d8d8 50%,#d8d8d8 100%);border:1.5px solid #444;box-sizing:border-box;"></div>
<div class="t" style="left:153.4px;top:1168.3px;font-size:9.5px;color:#111;">Manual</div>
<svg class="s" style="left:228px;top:977px;overflow:hidden;" width="109" height="168" viewBox="0 0 109 168"><path d="M62.1 56L64.5 116L65.7 56M81.3 56L83.4 102L85.9 56M60.0 56L62.6 86L64.1 56M95.4 56L97.0 85L99.3 56M67.1 56L69.9 120L70.5 56M56.3 56L59.2 105L60.6 56M66.5 56L67.1 101L68.1 56M78.2 56L79.3 103L80.4 56M66.6 56L67.8 102L68.4 56M99.4 56L101.5 106L102.5 56M107.6 56L108.4 117L109.7 56M93.2 56L96.1 111L97.6 56M99.0 56L100.3 110L102.2 56M101.8 56L103.5 116L105.5 56M56.8 56L59.3 94L60.9 56M64.2 56L66.4 105L68.6 56M74.9 56L76.6 101L79.1 56M82.6 56L84.3 100L84.9 56M57.3 56L60.3 111L62.2 56M75.9 56L77.6 91L80.6 56M95.8 56L98.5 105L99.6 56M82.2 56L84.2 120L85.8 56M69.3 56L72.2 105L72.7 56M96.5 56L99.2 115L101.6 56M97.9 56L99.8 104L101.4 56M58.0 56L59.9 117L60.9 56M81.8 56L83.1 103L84.5 56M83.5 56L85.6 108L87.2 56M56.5 56L57.4 93L59.4 56M100.6 56L103.1 115L105.7 56M68.5 56L70.7 116L71.4 56M55.9 56L58.3 86L59.4 56M60.8 56L62.2 108L62.8 56M63.5 56L64.4 105L65.6 56M92.7 56L94.0 102L95.7 56M56.3 56L57.8 99L58.8 56M60.8 56L62.5 118L63.6 56M87.1 56L87.7 115L88.2 56M62.8 56L63.7 112L65.9 56M90.9 56L92.0 105L94.9 56M97.3 56L98.3 104L100.5 56M75.9 56L77.2 106L79.3 56M58.1 56L61.0 96L63.7 56M71.2 56L72.5 117L75.4 56M94.4 56L95.6 100L96.1 56M101.6 56L104.1 86L107.0 56M85.2 56L87.9 91L90.8 56M92.3 56L93.8 104L95.1 56M65.9 56L67.5 110L68.5 56M60.5 56L61.8 110L63.5 56M72.2 56L75.0 117L75.5 56M65.6 56L68.6 97L71.1 56M73.0 56L75.2 93L77.8 56M104.4 56L107.1 98L109.3 56M80.7 56L81.8 121L84.1 56M59.5 56L62.3 91L63.3 56M95.2 56L97.8 107L99.3 56M73.0 56L75.7 96L77.7 56M105.6 56L106.4 118L108.3 56M60.5 56L61.2 86L63.9 56M96.8 56L98.1 116L100.2 56M96.4 56L98.4 99L99.4 56M59.3 56L62.1 95L64.0 56M104.0 56L105.2 102L107.7 56M98.9 56L101.0 85L101.8 56M61.1 56L61.7 118L62.8 56M107.4 56L108.2 101L109.1 56M67.8 56L68.6 113L71.3 56M75.0 56L77.8 121L79.1 56M68.4 56L69.2 103L71.3 56M57.1 56L60.1 85L61.3 56M86.6 56L87.9 102L88.6 56M103.4 56L106.3 121L107.1 56M66.4 56L69.4 108L71.2 56M91.5 56L92.6 109L94.5 56M71.3 56L72.0 94L73.2 56M107.1 56L109.2 102L111.4 56M104.9 56L106.1 99L107.4 56M71.8 56L74.5 116L75.8 56M72.7 56L74.7 105L76.7 56M68.0 56L69.1 86L69.8 56M84.2 56L84.9 88L87.0 56M70.4 56L72.1 114L74.8 56M63.2 56L65.7 104L66.4 56M105.3 56L107.7 91L110.7 56M98.5 56L99.3 97L101.1 56M103.7 56L106.5 96L107.3 56M103.3 56L104.5 86L107.3 56M97.6 56L100.2 119L102.6 56M91.5 56L93.1 92L94.0 56M92.9 56L94.0 110L94.7 56M106.1 56L107.9 115L109.8 56M100.1 56L101.6 102L103.0 56M68.7 56L70.8 86L72.3 56M85.2 56L86.6 87L87.5 56M61.6 56L64.2 95L65.7 56M76.3 56L77.3 108L77.9 56M83.0 56L85.1 104L86.7 56M91.4 56L92.5 112L94.2 56M80.4 56L81.9 93L83.8 56M103.1 56L104.3 119L106.4 56M57.6 56L59.3 88L62.0 56M63.5 56L66.2 113L67.4 56M91.7 56L93.1 116L95.4 56M94.0 56L96.7 107L99.4 56M105.9 56L106.8 106L108.0 56M66.5 56L68.9 106L69.6 56M91.1 56L92.5 112L94.3 56M63.7 56L64.3 112L67.3 56M97.8 56L99.0 108L101.8 56" stroke="#4a4fbf" stroke-width="0.7" fill="none" stroke-linejoin="bevel"/><path d="M0 33L3 21L6 31L9 31L12 29L15 30L18 26L21 32L24 33L27 26L30 30L33 24L36 17L39 21L42 16L45 32L48 33L51 24L54 30L57 28L60 19L63 23L66 22L69 30L72 15L75 21L78 26L81 16L84 28L87 28L90 31L93 21L96 23L99 27L102 23L105 28L108 22M0 30L3 31L6 31L9 33L12 28L15 27L18 31L21 31L24 28L27 26L30 20L33 15L36 30L39 16L42 29L45 29L48 33L51 31L54 33L57 24L60 27L63 28L66 23L69 27L72 24L75 27L78 14L81 26L84 26L87 23L90 25L93 30L96 29L99 26L102 29L105 25L108 21M0 17L3 24L6 28L9 32L12 31L15 27L18 33L21 27L24 31L27 26L30 29L33 33L36 21L39 17L42 27L45 29L48 27L51 20L54 27L57 28L60 25L63 31L66 28L69 30L72 32L75 30L78 26L81 30L84 29L87 29L90 28L93 25L96 28L99 28L102 32L105 30L108 31M0 31L3 31L6 29L9 25L12 24L15 30L18 32L21 28L24 21L27 31L30 25L33 24L36 13L39 25L42 29L45 28L48 27L51 30L54 21L57 29L60 32L63 29L66 25L69 29L72 28L75 21L78 21L81 32L84 23L87 18L90 31L93 27L96 24L99 27L102 30L105 21L108 29M0 30L3 31L6 24L9 29L12 23L15 28L18 22L21 31L24 32L27 25L30 19L33 32L36 28L39 31L42 12L45 32L48 30L51 27L54 28L57 31L60 30L63 21L66 28L69 20L72 33L75 26L78 32L81 30L84 28L87 23L90 27L93 20L96 20L99 30L102 24L105 30L108 22M0 30L3 30L6 24L9 20L12 26L15 27L18 20L21 22L24 19L27 28L30 31L33 19L36 12L39 28L42 30L45 33L48 30L51 27L54 32L57 24L60 29L63 19L66 25L69 26L72 25L75 21L78 22L81 31L84 26L87 28L90 21L93 30L96 24L99 28L102 32L105 33L108 17M0 31L3 32L6 25L9 26L12 28L15 32L18 26L21 32L24 30L27 21L30 32L33 11L36 17L39 28L42 13L45 27L48 24L51 28L54 32L57 32L60 17L63 18L66 31L69 17L72 23L75 19L78 19L81 16L84 29L87 30L90 29L93 31L96 29L99 25L102 28L105 33L108 29M0 23L3 19L6 32L9 28L12 25L15 29L18 28L21 28L24 19L27 25L30 23L33 18L36 31L39 23L42 28L45 31L48 31L51 31L54 31L57 26L60 33L63 20L66 32L69 31L72 31L75 17L78 19L81 31L84 26L87 24L90 33L93 17L96 27L99 26L102 20L105 25L108 29M0 32L3 18L6 28L9 20L12 31L15 20L18 18L21 26L24 30L27 24L30 16L33 30L36 30L39 31L42 21L45 28L48 26L51 29L54 27L57 27L60 30L63 32L66 28L69 19L72 29L75 26L78 33L81 30L84 31L87 29L90 27L93 32L96 31L99 23L102 20L105 24L108 27M0 20L3 25L6 28L9 19L12 31L15 29L18 24L21 24L24 25L27 25L30 29L33 25L36 25L39 17L42 32L45 27L48 27L51 23L54 33L57 28L60 32L63 32L66 33L69 31L72 32L75 32L78 31L81 20L84 27L87 28L90 33L93 30L96 29L99 30L102 24L105 32L108 29M0 26L3 27L6 33L9 28L12 22L15 21L18 30L21 28L24 32L27 22L30 23L33 29L36 13L39 15L42 26L45 26L48 23L51 26L54 30L57 29L60 18L63 18L66 31L69 29L72 21L75 31L78 16L81 24L84 31L87 29L90 23L93 32L96 28L99 31L102 32L105 25L108 29M0 28L3 32L6 31L9 30L12 31L15 33L18 24L21 22L24 30L27 31L30 25L33 25L36 23L39 31L42 30L45 29L48 22L51 32L54 28L57 25L60 23L63 29L66 15L69 19L72 23L75 32L78 30L81 33L84 27L87 28L90 27L93 27L96 27L99 31L102 32L105 25L108 28M0 24L3 24L6 27L9 28L12 28L15 33L18 22L21 29L24 33L27 30L30 26L33 22L36 23L39 32L42 31L45 30L48 32L51 32L54 32L57 27L60 26L63 31L66 25L69 30L72 26L75 24L78 26L81 19L84 24L87 25L90 16L93 21L96 22L99 31L102 28L105 23L108 33M0 24L3 27L6 30L9 30L12 26L15 31L18 27L21 30L24 27L27 33L30 29L33 15L36 16L39 33L42 19L45 21L48 26L51 28L54 33L57 27L60 30L63 31L66 18L69 28L72 33L75 27L78 27L81 24L84 32L87 33L90 19L93 27L96 25L99 29L102 19L105 23L108 23M0 27L3 31L6 32L9 31L12 29L15 20L18 26L21 29L24 24L27 27L30 32L33 16L36 31L39 15L42 23L45 32L48 25L51 29L54 28L57 32L60 33L63 23L66 26L69 32L72 27L75 22L78 30L81 24L84 26L87 15L90 33L93 29L96 32L99 33L102 23L105 27L108 26M0 30L3 31L6 23L9 24L12 30L15 26L18 21L21 22L24 28L27 28L30 32L33 25L36 27L39 17L42 23L45 26L48 30L51 26L54 25L57 27L60 26L63 24L66 28L69 21L72 32L75 29L78 27L81 17L84 24L87 29L90 29L93 31L96 32L99 24L102 26L105 24L108 20" stroke="#4a4fbf" stroke-width="0.8" fill="none"/><polygon points="0,36 2,36 4,37 6,37 8,36 10,38 12,35 14,36 16,36 18,37 20,37 22,37 24,36 26,36 28,38 30,36 32,36 34,36 36,25 38,22 40,25 42,27 44,28 46,31 48,33 50,33 52,34 54,34 56,35 58,35 60,37 62,36 64,37 66,36 68,37 70,36 72,37 74,36 76,37 78,37 80,38 82,36 84,38 86,38 88,38 90,38 92,37 94,36 96,37 98,36 100,36 102,38 104,36 106,38 108,37 108,58 106,58 104,59 102,58 100,59 98,58 96,58 94,59 92,59 90,59 88,57 86,57 84,57 82,57 80,59 78,59 76,58 74,58 72,58 70,58 68,57 66,58 64,57 62,57 60,58 58,58 56,58 54,58 52,58 50,58 48,58 46,58 44,57 42,57 40,57 38,59 36,57 34,57 32,57 30,59 28,57 26,59 24,57 22,57 20,58 18,59 16,57 14,58 12,57 10,58 8,58 6,57 4,58 2,58 0,57" fill="#4a4fbf"/><path d="M0 44L3 53L6 39L9 32L12 60L15 41L18 57L21 60L24 54L27 64L30 54L33 53L36 45L39 47L42 48L45 38L48 47L51 45L54 68L57 60L60 43L63 56L66 35L69 51L72 67L75 52L78 62L81 48L84 55L87 54L90 32L93 44L96 68L99 43L102 61L105 66L108 50M0 55L3 46L6 57L9 55L12 43L15 47L18 40L21 49L24 51L27 43L30 35L33 57L36 57L39 36L42 46L45 41L48 30L51 68L54 52L57 38L60 62L63 58L66 64L69 58L72 56L75 64L78 49L81 54L84 42L87 41L90 53L93 54L96 38L99 55L102 60L105 40L108 49M0 47L3 59L6 61L9 56L12 55L15 59L18 57L21 56L24 41L27 57L30 47L33 68L36 67L39 57L42 30L45 59L48 52L51 42L54 42L57 63L60 48L63 53L66 55L69 63L72 36L75 65L78 47L81 51L84 60L87 58L90 36L93 60L96 53L99 45L102 49L105 40L108 61M0 48L3 49L6 40L9 47L12 44L15 53L18 69L21 63L24 62L27 45L30 61L33 47L36 40L39 52L42 47L45 67L48 52L51 48L54 58L57 42L60 59L63 67L66 52L69 49L72 63L75 44L78 57L81 49L84 56L87 46L90 59L93 58L96 69L99 50L102 57L105 38L108 46M0 36L3 48L6 40L9 53L12 54L15 44L18 54L21 44L24 50L27 53L30 53L33 54L36 58L39 35L42 41L45 28L48 53L51 36L54 42L57 43L60 52L63 46L66 46L69 49L72 46L75 48L78 40L81 44L84 38L87 56L90 57L93 54L96 52L99 43L102 53L105 35L108 30M0 56L3 45L6 56L9 36L12 51L15 57L18 51L21 45L24 52L27 39L30 58L33 33L36 30L39 35L42 30L45 54L48 46L51 34L54 56L57 54L60 39L63 56L66 53L69 38L72 38L75 45L78 53L81 57L84 56L87 38L90 27L93 28L96 56L99 52L102 53L105 43L108 43M0 54L3 50L6 41L9 37L12 51L15 48L18 62L21 40L24 32L27 32L30 49L33 64L36 40L39 36L42 47L45 59L48 56L51 55L54 56L57 46L60 50L63 53L66 65L69 31L72 45L75 53L78 47L81 48L84 47L87 41L90 54L93 61L96 46L99 53L102 59L105 44L108 49M0 56L3 57L6 40L9 60L12 50L15 26L18 47L21 44L24 47L27 48L30 38L33 52L36 39L39 51L42 35L45 19L48 56L51 45L54 24L57 36L60 35L63 50L66 37L69 53L72 38L75 51L78 37L81 32L84 48L87 40L90 47L93 28L96 33L99 39L102 60L105 46L108 27M0 51L3 38L6 24L9 43L12 42L15 53L18 37L21 31L24 42L27 23L30 31L33 26L36 24L39 16L42 16L45 21L48 35L51 33L54 32L57 38L60 41L63 39L66 53L69 37L72 38L75 31L78 44L81 48L84 16L87 42L90 25L93 38L96 36L99 24L102 23L105 33L108 53M0 39L3 40L6 40L9 52L12 60L15 42L18 46L21 40L24 56L27 42L30 49L33 41L36 46L39 34L42 29L45 55L48 22L51 42L54 38L57 33L60 60L63 45L66 39L69 35L72 46L75 43L78 40L81 37L84 56L87 44L90 41L93 31L96 36L99 49L102 36L105 48L108 42M0 52L3 45L6 47L9 48L12 55L15 67L18 57L21 38L24 68L27 48L30 43L33 50L36 43L39 44L42 43L45 44L48 57L51 62L54 48L57 62L60 57L63 59L66 51L69 51L72 56L75 41L78 50L81 39L84 57L87 51L90 54L93 46L96 42L99 58L102 45L105 47L108 49M0 50L3 40L6 40L9 58L12 46L15 47L18 42L21 58L24 53L27 45L30 34L33 65L36 38L39 31L42 39L45 35L48 46L51 42L54 37L57 54L60 41L63 33L66 52L69 45L72 40L75 35L78 43L81 44L84 45L87 45L90 61L93 59L96 52L99 54L102 45L105 37L108 54M0 47L3 47L6 47L9 41L12 58L15 43L18 65L21 68L24 54L27 53L30 45L33 61L36 48L39 32L42 39L45 53L48 46L51 55L54 53L57 65L60 52L63 62L66 63L69 65L72 50L75 55L78 72L81 51L84 48L87 54L90 43L93 45L96 49L99 51L102 62L105 43L108 51M0 46L3 55L6 67L9 39L12 41L15 44L18 44L21 44L24 52L27 64L30 67L33 48L36 24L39 55L42 43L45 40L48 55L51 45L54 45L57 40L60 56L63 56L66 41L69 44L72 59L75 42L78 45L81 42L84 46L87 56L90 49L93 57L96 54L99 31L102 48L105 48L108 34M0 50L3 46L6 55L9 59L12 57L15 46L18 50L21 69L24 39L27 51L30 51L33 64L36 50L39 45L42 42L45 57L48 48L51 47L54 50L57 56L60 50L63 53L66 58L69 44L72 49L75 51L78 57L81 56L84 46L87 42L90 47L93 46L96 58L99 56L102 51L105 41L108 39M0 53L3 51L6 46L9 53L12 30L15 58L18 61L21 50L24 50L27 46L30 56L33 40L36 37L39 44L42 29L45 48L48 49L51 46L54 42L57 62L60 43L63 49L66 55L69 48L72 57L75 48L78 50L81 48L84 54L87 42L90 56L93 57L96 39L99 35L102 36L105 41L108 54M0 64L3 62L6 34L9 44L12 45L15 62L18 55L21 56L24 41L27 66L30 38L33 48L36 33L39 32L42 44L45 35L48 51L51 50L54 47L57 52L60 57L63 57L66 38L69 54L72 56L75 44L78 44L81 58L84 54L87 49L90 60L93 56L96 63L99 44L102 56L105 30L108 42M0 46L3 53L6 51L9 58L12 64L15 68L18 53L21 57L24 62L27 64L30 52L33 66L36 36L39 49L42 36L45 46L48 44L51 67L54 67L57 60L60 55L63 37L66 39L69 56L72 61L75 59L78 48L81 47L84 59L87 73L90 61L93 54L96 53L99 58L102 57L105 42L108 68M0 54L3 45L6 59L9 58L12 43L15 58L18 43L21 33L24 57L27 41L30 44L33 41L36 43L39 38L42 45L45 49L48 61L51 51L54 52L57 53L60 56L63 57L66 52L69 39L72 41L75 52L78 47L81 46L84 45L87 43L90 59L93 56L96 38L99 51L102 49L105 45L108 59M0 49L3 41L6 57L9 51L12 51L15 43L18 62L21 30L24 37L27 34L30 37L33 40L36 38L39 38L42 44L45 56L48 51L51 47L54 46L57 51L60 55L63 42L66 64L69 49L72 56L75 30L78 50L81 45L84 61L87 58L90 52L93 54L96 46L99 41L102 59L105 38L108 44M0 35L3 39L6 50L9 34L12 49L15 26L18 35L21 35L24 49L27 54L30 24L33 43L36 51L39 35L42 51L45 49L48 42L51 28L54 35L57 55L60 35L63 33L66 39L69 54L72 44L75 29L78 37L81 49L84 53L87 56L90 47L93 47L96 34L99 38L102 31L105 42L108 46M0 39L3 53L6 56L9 58L12 29L15 29L18 38L21 52L24 57L27 54L30 48L33 50L36 40L39 34L42 33L45 62L48 43L51 50L54 51L57 54L60 47L63 56L66 65L69 42L72 43L75 39L78 45L81 37L84 51L87 54L90 58L93 59L96 44L99 49L102 41L105 48L108 49M0 49L3 40L6 58L9 48L12 37L15 34L18 55L21 34L24 55L27 63L30 54L33 57L36 49L39 37L42 45L45 29L48 52L51 53L54 49L57 58L60 48L63 34L66 62L69 50L72 44L75 45L78 46L81 51L84 38L87 50L90 46L93 55L96 47L99 55L102 42L105 53L108 47M0 55L3 61L6 47L9 46L12 51L15 43L18 49L21 63L24 42L27 47L30 52L33 66L36 64L39 39L42 42L45 50L48 43L51 32L54 55L57 54L60 54L63 56L66 53L69 46L72 57L75 51L78 53L81 42L84 53L87 51L90 44L93 45L96 48L99 52L102 46L105 42L108 52M0 46L3 35L6 41L9 52L12 24L15 31L18 38L21 41L24 35L27 34L30 37L33 34L36 38L39 29L42 35L45 39L48 46L51 35L54 37L57 45L60 24L63 43L66 35L69 50L72 40L75 35L78 52L81 38L84 35L87 47L90 26L93 41L96 49L99 32L102 51L105 40L108 38M0 53L3 52L6 38L9 44L12 24L15 41L18 44L21 34L24 35L27 39L30 34L33 26L36 41L39 41L42 40L45 43L48 47L51 36L54 21L57 40L60 35L63 30L66 45L69 32L72 30L75 59L78 37L81 42L84 46L87 46L90 40L93 45L96 40L99 37L102 39L105 46L108 47M0 36L3 47L6 53L9 46L12 53L15 50L18 59L21 31L24 51L27 58L30 55L33 45L36 41L39 38L42 47L45 51L48 41L51 56L54 51L57 30L60 45L63 48L66 43L69 50L72 49L75 48L78 47L81 52L84 44L87 54L90 34L93 50L96 45L99 46L102 52L105 44L108 31M0 40L3 39L6 37L9 36L12 47L15 42L18 33L21 34L24 50L27 43L30 45L33 42L36 38L39 29L42 27L45 29L48 31L51 55L54 45L57 41L60 40L63 27L66 48L69 27L72 51L75 37L78 30L81 54L84 33L87 39L90 40L93 29L96 46L99 30L102 40L105 32L108 55M0 60L3 43L6 49L9 52L12 48L15 45L18 57L21 51L24 48L27 55L30 29L33 39L36 46L39 37L42 39L45 30L48 41L51 57L54 42L57 38L60 45L63 56L66 42L69 33L72 50L75 45L78 49L81 33L84 38L87 45L90 51L93 63L96 59L99 58L102 56L105 57L108 53M0 47L3 46L6 61L9 40L12 45L15 48L18 52L21 44L24 46L27 43L30 43L33 47L36 63L39 32L42 63L45 35L48 49L51 47L54 54L57 46L60 40L63 45L66 47L69 37L72 49L75 51L78 37L81 38L84 57L87 42L90 44L93 45L96 44L99 55L102 52L105 68L108 47M0 43L3 57L6 36L9 41L12 47L15 67L18 67L21 66L24 49L27 35L30 54L33 58L36 37L39 58L42 60L45 30L48 42L51 44L54 45L57 46L60 49L63 46L66 67L69 45L72 38L75 59L78 58L81 39L84 41L87 41L90 30L93 37L96 53L99 37L102 47L105 46L108 44M0 51L3 60L6 52L9 44L12 64L15 52L18 54L21 52L24 47L27 41L30 60L33 43L36 41L39 49L42 52L45 45L48 64L51 45L54 66L57 60L60 51L63 47L66 59L69 35L72 56L75 55L78 63L81 62L84 52L87 54L90 41L93 54L96 43L99 37L102 65L105 65L108 48M0 67L3 37L6 62L9 46L12 54L15 48L18 62L21 59L24 47L27 59L30 57L33 61L36 34L39 49L42 43L45 47L48 32L51 65L54 47L57 52L60 35L63 47L66 50L69 50L72 39L75 52L78 45L81 57L84 39L87 59L90 40L93 39L96 53L99 54L102 53L105 44L108 46M0 54L3 28L6 33L9 33L12 48L15 31L18 51L21 29L24 29L27 47L30 47L33 41L36 50L39 32L42 33L45 38L48 53L51 40L54 59L57 55L60 53L63 52L66 55L69 48L72 25L75 45L78 43L81 34L84 27L87 45L90 34L93 44L96 37L99 47L102 35L105 46L108 44M0 43L3 48L6 27L9 29L12 46L15 46L18 48L21 49L24 37L27 57L30 52L33 49L36 38L39 32L42 34L45 44L48 44L51 51L54 46L57 41L60 55L63 33L66 34L69 49L72 41L75 33L78 33L81 46L84 58L87 58L90 45L93 43L96 38L99 62L102 45L105 42L108 52M0 52L3 63L6 41L9 56L12 57L15 56L18 58L21 54L24 57L27 34L30 46L33 60L36 36L39 37L42 64L45 48L48 51L51 53L54 66L57 49L60 44L63 54L66 64L69 36L72 51L75 49L78 53L81 58L84 55L87 38L90 50L93 51L96 52L99 61L102 49L105 47L108 51M0 54L3 32L6 35L9 47L12 56L15 47L18 50L21 63L24 49L27 50L30 47L33 56L36 46L39 38L42 48L45 47L48 40L51 52L54 64L57 37L60 38L63 46L66 46L69 50L72 47L75 49L78 58L81 59L84 29L87 52L90 48L93 52L96 48L99 51L102 46L105 42L108 46M0 51L3 50L6 62L9 58L12 43L15 44L18 49L21 55L24 60L27 36L30 62L33 51L36 47L39 50L42 47L45 48L48 56L51 59L54 39L57 36L60 41L63 53L66 48L69 49L72 46L75 43L78 55L81 50L84 53L87 55L90 64L93 69L96 46L99 62L102 52L105 55L108 61M0 44L3 54L6 50L9 61L12 50L15 46L18 44L21 50L24 29L27 57L30 48L33 40L36 40L39 42L42 29L45 49L48 24L51 56L54 41L57 46L60 42L63 40L66 54L69 37L72 45L75 50L78 35L81 51L84 37L87 53L90 42L93 57L96 45L99 36L102 54L105 56L108 53M0 32L3 50L6 46L9 39L12 40L15 43L18 23L21 31L24 31L27 51L30 38L33 23L36 34L39 31L42 29L45 24L48 31L51 42L54 36L57 47L60 53L63 38L66 28L69 33L72 42L75 48L78 40L81 41L84 44L87 52L90 48L93 38L96 36L99 41L102 36L105 33L108 51M0 39L3 52L6 39L9 39L12 34L15 38L18 44L21 50L24 47L27 51L30 49L33 44L36 52L39 31L42 33L45 62L48 47L51 48L54 65L57 37L60 62L63 48L66 46L69 39L72 48L75 55L78 48L81 44L84 52L87 59L90 49L93 44L96 45L99 52L102 43L105 60L108 43M0 50L3 58L6 41L9 50L12 43L15 45L18 51L21 41L24 69L27 66L30 60L33 52L36 40L39 29L42 53L45 37L48 48L51 44L54 50L57 65L60 50L63 50L66 60L69 47L72 35L75 45L78 49L81 45L84 60L87 62L90 43L93 52L96 53L99 48L102 46L105 55L108 48M0 54L3 55L6 56L9 56L12 51L15 60L18 62L21 57L24 58L27 42L30 51L33 55L36 46L39 56L42 52L45 50L48 46L51 49L54 51L57 68L60 44L63 62L66 51L69 69L72 63L75 47L78 58L81 42L84 61L87 53L90 45L93 54L96 60L99 73L102 62L105 58L108 54M0 25L3 20L6 28L9 47L12 49L15 41L18 35L21 45L24 57L27 40L30 51L33 50L36 25L39 32L42 25L45 37L48 32L51 28L54 43L57 37L60 36L63 46L66 42L69 49L72 55L75 27L78 43L81 23L84 46L87 55L90 30L93 49L96 44L99 42L102 20L105 29L108 35M0 49L3 55L6 49L9 46L12 39L15 41L18 46L21 66L24 44L27 47L30 56L33 55L36 47L39 41L42 56L45 38L48 57L51 59L54 48L57 42L60 42L63 50L66 30L69 59L72 40L75 37L78 52L81 48L84 40L87 59L90 37L93 43L96 34L99 63L102 53L105 35L108 52" stroke="#4a4fbf" stroke-width="0.8" fill="none"/><path d="M3.3 60L3.1 113M4.3 60L5.3 95M4.6 60L5.1 110M3.8 60L3.5 105M0.2 60L1.1 115M2.6 60L2.8 116M0.8 60L1.0 113M2.9 60L3.9 101M3.4 60L4.0 105M4.7 60L4.5 99M0.9 60L0.6 120M4.6 60L5.4 112M2.5 60L2.8 110M4.8 60L4.6 105" stroke="#4a4fbf" stroke-width="0.9"/><polygon points="0,62 3.0,62 2.0,100 0,110" fill="#4a4fbf"/><polygon points="29,54 32,150 35,37" fill="#4a4fbf" stroke="#4a4fbf" stroke-width="2"/><polyline points="0,39.0 2,38.9 4,38.8 6,38.7 8,38.6 10,38.5 12,38.6 14,38.7 16,38.8 18,38.9 20,39.0 22,39.7 24,40.3 26,41.0 28,45.0 30,55.0 32,98.0 34,60.5 36,27.0 38,22.3 40,25.0 42,27.0 44,29.0 46,31.0 48,33.0 50,33.8 52,34.7 54,35.5 56,36.3 58,37.2 60,38.0 62,38.3 64,38.5 66,38.8 68,39.1 70,39.3 72,39.6 74,39.9 76,40.0 78,40.0 80,40.0 82,40.0 84,40.0 86,40.0 88,40.0 90,40.0 92,40.0 94,40.0 96,40.0 98,40.0 100,40.0 102,40.0 104,40.0 106,40.0 108,40.0" fill="none" stroke="#777" stroke-width="0.7" opacity="0.8"/><polyline points="0,53.0 2,52.9 4,52.8 6,52.7 8,52.6 10,52.5 12,52.6 14,52.7 16,52.8 18,52.9 20,53.0 22,53.7 24,54.3 26,55.0 28,59.0 30,69.0 32,112.0 34,74.5 36,41.0 38,36.3 40,39.0 42,41.0 44,43.0 46,45.0 48,47.0 50,47.8 52,48.7 54,49.5 56,50.3 58,51.2 60,52.0 62,52.3 64,52.5 66,52.8 68,53.1 70,53.3 72,53.6 74,53.9 76,54.0 78,54.0 80,54.0 82,54.0 84,54.0 86,54.0 88,54.0 90,54.0 92,54.0 94,54.0 96,54.0 98,54.0 100,54.0 102,54.0 104,54.0 106,54.0 108,54.0" fill="none" stroke="#777" stroke-width="0.7" opacity="0.8"/><polyline points="0.0,46.0 10.0,45.5 20.0,46.0 26.0,48.0 28.0,52.0 30.0,62.0 31.5,110.0 33.0,95.0 35.0,40.0 37.0,28.0 40.0,32.0 48.0,40.0 60.0,45.0 75.0,47.0 109.0,47.0" fill="none" stroke="#111" stroke-width="2.6" stroke-linejoin="round"/></svg>
<svg class="s" style="left:361px;top:977px;overflow:hidden;" width="109" height="168" viewBox="0 0 109 168"><path d="M104.0 53L104.6 122L105.3 53M92.9 53L95.0 110L96.3 53M71.7 53L73.7 103L74.6 53M55.6 53L57.9 92L60.9 53M103.3 53L105.0 100L106.1 53M19.3 53L21.0 72L22.3 53M51.0 53L52.8 119L54.7 53M37.7 53L39.0 71L39.9 53M62.9 53L65.1 125L66.1 53M98.2 53L100.5 114L103.3 53M86.2 53L87.6 113L90.5 53M104.5 53L106.9 79L109.2 53M58.4 53L60.2 99L63.0 53M62.1 53L63.5 116L66.2 53M98.8 53L100.7 95L103.5 53M82.6 53L83.6 97L85.0 53M80.4 53L83.1 79L84.3 53M99.8 53L102.7 87L105.0 53M62.4 53L64.5 98L66.5 53M44.7 53L46.5 81L49.3 53M73.3 53L75.9 74L78.2 53M99.5 53L101.9 81L102.5 53M76.1 53L77.1 85L79.8 53M25.8 53L28.4 99L29.5 53M35.4 53L36.9 118L39.2 53M18.9 53L19.9 90L22.0 53M23.6 53L24.2 123L26.5 53M17.9 53L20.5 84L21.4 53M32.9 53L34.4 108L35.0 53M107.1 53L107.7 78L109.0 53M72.6 53L73.4 111L74.7 53M18.8 53L21.2 95L23.6 53M99.0 53L101.6 112L103.9 53M59.5 53L61.6 82L62.9 53M25.4 53L28.1 95L28.9 53M69.8 53L71.6 92L72.5 53M104.3 53L106.3 84L107.9 53M17.7 53L18.5 101L19.2 53M19.1 53L19.8 79L21.9 53M62.8 53L65.6 124L68.6 53M37.4 53L38.5 94L40.5 53M73.4 53L75.7 114L76.8 53M54.9 53L55.4 99L56.0 53M53.6 53L55.9 76L57.0 53M25.2 53L26.3 80L27.3 53M63.9 53L65.2 96L67.3 53M35.5 53L38.5 120L40.8 53M55.9 53L57.9 98L58.5 53M54.5 53L55.4 99L56.1 53M89.8 53L91.6 90L94.4 53M72.2 53L75.1 86L76.6 53M17.8 53L18.5 108L19.8 53M93.3 53L93.9 107L95.5 53M53.8 53L54.8 97L56.8 53M22.8 53L24.2 86L27.1 53M23.0 53L24.0 112L26.0 53M52.0 53L54.4 95L55.9 53M27.2 53L27.9 77L30.5 53M75.0 53L77.2 123L77.8 53M76.6 53L79.0 113L80.7 53M48.9 53L51.4 95L52.6 53M64.4 53L67.3 96L69.8 53M101.7 53L103.0 116L104.1 53M61.0 53L62.5 84L64.7 53M100.5 53L103.1 102L103.8 53M48.8 53L49.6 125L51.2 53M22.1 53L24.9 75L27.9 53M75.6 53L76.9 77L77.9 53M77.7 53L79.3 107L81.1 53M26.3 53L29.2 100L31.6 53M24.8 53L27.1 98L28.3 53M98.3 53L100.6 95L102.1 53M107.6 53L109.5 113L110.3 53M56.6 53L58.6 72L61.3 53M32.6 53L34.3 98L35.8 53M81.4 53L83.6 122L85.3 53M104.5 53L106.9 88L109.0 53M86.1 53L87.1 117L89.2 53M53.1 53L56.0 107L58.1 53M17.1 53L19.3 96L22.1 53M75.8 53L76.4 115L79.2 53M83.1 53L85.9 103L88.6 53M25.2 53L27.7 115L28.7 53M84.5 53L85.4 102L88.0 53M28.7 53L30.3 104L31.4 53M68.1 53L69.1 96L72.0 53M22.7 53L24.4 70L27.0 53M76.6 53L78.3 112L80.5 53M46.8 53L48.6 85L49.1 53M23.3 53L24.3 111L26.7 53M88.2 53L90.4 92L92.8 53M95.5 53L96.4 77L97.9 53M58.7 53L59.3 86L61.2 53M105.0 53L106.8 90L108.3 53M56.7 53L58.0 118L60.1 53M60.5 53L63.3 100L64.0 53M91.8 53L94.0 87L96.4 53M76.1 53L78.7 92L79.4 53M74.3 53L76.1 92L78.7 53M89.4 53L90.7 105L91.8 53M58.1 53L59.3 83L62.2 53M26.3 53L27.7 115L29.2 53M45.3 53L46.9 74L47.9 53M56.7 53L59.4 86L62.2 53M56.7 53L59.5 105L60.8 53M25.2 53L26.1 83L28.3 53M50.4 53L52.9 90L54.0 53M90.4 53L91.9 105L94.4 53M47.5 53L50.3 118L52.1 53M79.5 53L81.8 122L84.2 53M96.0 53L98.4 121L101.3 53M42.8 53L45.0 104L46.4 53M52.4 53L55.3 80L56.6 53M59.9 53L60.8 119L63.7 53M27.7 53L29.1 72L30.5 53M100.4 53L102.8 119L104.4 53M65.9 53L68.5 83L70.0 53M42.2 53L43.1 105L44.4 53M101.2 53L102.1 75L103.1 53M39.1 53L40.2 93L41.6 53M38.7 53L40.7 83L42.0 53M50.3 53L51.0 112L51.8 53M94.3 53L96.7 94L97.6 53M64.1 53L65.5 116L67.9 53M72.2 53L75.1 92L76.6 53M59.6 53L60.9 104L63.5 53M71.0 53L72.8 102L75.8 53M107.0 53L108.6 116L110.1 53M64.3 53L65.0 73L68.0 53M27.8 53L30.0 122L32.8 53" stroke="#e3321f" stroke-width="0.7" fill="none" stroke-linejoin="bevel"/><path d="M0 17L3 21L6 26L9 15L12 18L15 21L18 19L21 18L24 25L27 17L30 28L33 26L36 21L39 28L42 23L45 25L48 26L51 22L54 25L57 16L60 19L63 27L66 26L69 23L72 25L75 27L78 18L81 23L84 17L87 17L90 17L93 19L96 16L99 19L102 21L105 24L108 27M0 27L3 25L6 23L9 27L12 19L15 18L18 26L21 25L24 19L27 22L30 24L33 25L36 25L39 25L42 27L45 27L48 26L51 25L54 24L57 26L60 28L63 19L66 25L69 25L72 25L75 15L78 23L81 19L84 19L87 24L90 25L93 24L96 26L99 25L102 23L105 15L108 26M0 26L3 27L6 24L9 16L12 19L15 18L18 25L21 24L24 19L27 28L30 28L33 28L36 25L39 24L42 23L45 27L48 26L51 24L54 28L57 24L60 22L63 22L66 25L69 22L72 25L75 17L78 25L81 20L84 27L87 19L90 21L93 23L96 22L99 23L102 27L105 19L108 26M0 25L3 26L6 23L9 23L12 21L15 23L18 20L21 19L24 23L27 19L30 25L33 26L36 24L39 23L42 26L45 27L48 23L51 26L54 26L57 27L60 25L63 20L66 19L69 26L72 20L75 14L78 27L81 19L84 20L87 21L90 20L93 25L96 21L99 22L102 22L105 26L108 14M0 24L3 18L6 18L9 24L12 22L15 17L18 24L21 27L24 25L27 23L30 27L33 28L36 23L39 24L42 28L45 28L48 23L51 26L54 27L57 24L60 25L63 23L66 19L69 19L72 16L75 25L78 18L81 24L84 22L87 22L90 28L93 22L96 23L99 21L102 19L105 19L108 23M0 26L3 17L6 28L9 25L12 16L15 25L18 22L21 23L24 18L27 23L30 25L33 27L36 26L39 26L42 27L45 23L48 21L51 25L54 22L57 18L60 21L63 23L66 24L69 25L72 27L75 17L78 24L81 16L84 25L87 22L90 18L93 20L96 25L99 23L102 27L105 21L108 21M0 27L3 24L6 18L9 26L12 22L15 28L18 25L21 26L24 27L27 23L30 28L33 21L36 24L39 27L42 20L45 26L48 28L51 27L54 27L57 16L60 23L63 24L66 22L69 22L72 26L75 18L78 15L81 24L84 28L87 26L90 25L93 20L96 27L99 15L102 19L105 26L108 27M0 22L3 27L6 18L9 24L12 17L15 20L18 19L21 15L24 22L27 23L30 24L33 26L36 21L39 25L42 25L45 25L48 28L51 22L54 25L57 22L60 21L63 28L66 24L69 23L72 22L75 22L78 28L81 26L84 25L87 18L90 24L93 17L96 21L99 15L102 25L105 28L108 24M0 24L3 20L6 23L9 23L12 22L15 20L18 20L21 26L24 28L27 26L30 26L33 21L36 24L39 27L42 28L45 26L48 26L51 26L54 23L57 25L60 21L63 27L66 22L69 25L72 24L75 23L78 22L81 28L84 26L87 22L90 23L93 27L96 26L99 25L102 28L105 17L108 24M0 25L3 23L6 28L9 28L12 22L15 24L18 26L21 25L24 22L27 26L30 24L33 23L36 26L39 26L42 25L45 25L48 28L51 27L54 25L57 27L60 24L63 22L66 25L69 26L72 27L75 25L78 25L81 22L84 15L87 22L90 17L93 27L96 21L99 24L102 25L105 18L108 26M0 21L3 17L6 24L9 22L12 27L15 23L18 17L21 15L24 16L27 23L30 27L33 21L36 24L39 25L42 27L45 28L48 27L51 26L54 26L57 19L60 24L63 18L66 20L69 26L72 24L75 25L78 22L81 20L84 23L87 24L90 19L93 27L96 28L99 18L102 19L105 26L108 25M0 20L3 24L6 20L9 27L12 24L15 23L18 19L21 22L24 23L27 22L30 23L33 23L36 26L39 28L42 27L45 26L48 27L51 22L54 23L57 25L60 13L63 16L66 26L69 19L72 18L75 22L78 26L81 14L84 27L87 20L90 24L93 23L96 17L99 28L102 18L105 26L108 27M0 23L3 28L6 17L9 18L12 23L15 17L18 26L21 24L24 26L27 21L30 21L33 27L36 23L39 25L42 22L45 26L48 25L51 23L54 21L57 21L60 26L63 18L66 19L69 24L72 24L75 26L78 25L81 27L84 18L87 27L90 15L93 17L96 17L99 26L102 23L105 27L108 28M0 28L3 24L6 21L9 28L12 26L15 19L18 24L21 15L24 15L27 25L30 27L33 27L36 27L39 22L42 27L45 28L48 26L51 25L54 24L57 16L60 24L63 28L66 17L69 26L72 27L75 21L78 27L81 18L84 20L87 24L90 27L93 23L96 17L99 27L102 24L105 26L108 19M0 21L3 17L6 19L9 23L12 22L15 25L18 27L21 21L24 27L27 25L30 24L33 23L36 28L39 26L42 21L45 26L48 24L51 25L54 27L57 19L60 20L63 23L66 27L69 16L72 26L75 25L78 18L81 25L84 24L87 25L90 23L93 20L96 23L99 19L102 22L105 22L108 17M0 20L3 21L6 22L9 24L12 26L15 20L18 24L21 21L24 20L27 18L30 28L33 28L36 27L39 23L42 23L45 22L48 24L51 25L54 20L57 22L60 25L63 26L66 19L69 13L72 26L75 21L78 20L81 18L84 20L87 20L90 20L93 19L96 23L99 26L102 20L105 22L108 23" stroke="#e3321f" stroke-width="0.8" fill="none"/><polygon points="0,33 2,33 4,33 6,32 8,32 10,30 12,33 14,31 16,32 18,31 20,30 22,33 24,33 26,33 28,32 30,31 32,33 34,32 36,33 38,30 40,29 42,29 44,30 46,29 48,30 50,30 52,29 54,29 56,31 58,32 60,32 62,31 64,33 66,32 68,30 70,33 72,33 74,31 76,32 78,32 80,31 82,31 84,31 86,32 88,33 90,31 92,33 94,33 96,33 98,32 100,31 102,31 104,33 106,33 108,31 108,54 106,54 104,56 102,56 100,54 98,55 96,56 94,55 92,55 90,55 88,55 86,56 84,56 82,55 80,56 78,56 76,54 74,54 72,56 70,55 68,55 66,54 64,55 62,54 60,54 58,54 56,55 54,54 52,54 50,55 48,55 46,56 44,56 42,54 40,56 38,54 36,54 34,56 32,54 30,54 28,56 26,56 24,55 22,56 20,54 18,55 16,55 14,54 12,56 10,54 8,54 6,55 4,54 2,54 0,56" fill="#e3321f"/><path d="M0 50L3 67L6 40L9 60L12 57L15 42L18 36L21 42L24 53L27 65L30 35L33 46L36 37L39 55L42 49L45 47L48 54L51 50L54 62L57 45L60 43L63 49L66 48L69 61L72 45L75 44L78 43L81 42L84 30L87 50L90 54L93 51L96 42L99 58L102 56L105 51L108 55M0 47L3 48L6 32L9 38L12 36L15 47L18 22L21 46L24 43L27 42L30 47L33 29L36 45L39 34L42 36L45 54L48 38L51 52L54 42L57 40L60 39L63 29L66 40L69 45L72 57L75 50L78 51L81 35L84 36L87 47L90 48L93 33L96 53L99 37L102 46L105 39L108 50M0 57L3 38L6 48L9 67L12 47L15 51L18 48L21 42L24 63L27 62L30 41L33 52L36 65L39 50L42 46L45 54L48 53L51 34L54 38L57 61L60 41L63 46L66 41L69 65L72 35L75 49L78 43L81 44L84 36L87 40L90 45L93 49L96 30L99 48L102 39L105 47L108 43M0 41L3 48L6 43L9 27L12 22L15 29L18 45L21 27L24 34L27 61L30 40L33 41L36 46L39 48L42 36L45 42L48 22L51 45L54 48L57 26L60 51L63 61L66 23L69 41L72 56L75 50L78 36L81 37L84 39L87 50L90 35L93 29L96 44L99 36L102 59L105 33L108 46M0 28L3 38L6 23L9 46L12 33L15 30L18 27L21 56L24 47L27 33L30 41L33 48L36 48L39 41L42 21L45 57L48 40L51 54L54 29L57 49L60 55L63 53L66 31L69 40L72 57L75 35L78 49L81 41L84 28L87 52L90 53L93 49L96 45L99 52L102 24L105 42L108 59M0 56L3 43L6 49L9 34L12 50L15 48L18 41L21 45L24 46L27 47L30 53L33 55L36 25L39 46L42 54L45 32L48 42L51 64L54 38L57 54L60 47L63 31L66 43L69 28L72 42L75 54L78 52L81 48L84 40L87 52L90 57L93 53L96 55L99 50L102 50L105 37L108 60M0 31L3 32L6 32L9 52L12 37L15 36L18 36L21 39L24 52L27 54L30 35L33 56L36 45L39 41L42 50L45 39L48 41L51 39L54 27L57 27L60 30L63 31L66 34L69 34L72 50L75 39L78 47L81 43L84 31L87 37L90 25L93 23L96 43L99 39L102 40L105 49L108 26M0 23L3 34L6 48L9 28L12 30L15 39L18 58L21 50L24 41L27 49L30 43L33 39L36 38L39 45L42 40L45 48L48 36L51 49L54 38L57 53L60 52L63 36L66 63L69 46L72 36L75 31L78 44L81 44L84 35L87 32L90 38L93 32L96 36L99 34L102 47L105 23L108 62M0 41L3 29L6 52L9 40L12 38L15 32L18 47L21 46L24 35L27 57L30 33L33 53L36 43L39 27L42 37L45 45L48 36L51 41L54 39L57 45L60 35L63 59L66 44L69 55L72 39L75 43L78 32L81 42L84 56L87 44L90 34L93 36L96 47L99 40L102 61L105 44L108 42M0 62L3 32L6 39L9 39L12 27L15 44L18 45L21 54L24 52L27 52L30 52L33 42L36 67L39 59L42 41L45 36L48 49L51 55L54 50L57 53L60 55L63 50L66 37L69 41L72 29L75 55L78 41L81 48L84 67L87 39L90 46L93 38L96 29L99 56L102 45L105 46L108 54M0 49L3 55L6 36L9 47L12 44L15 52L18 62L21 33L24 57L27 44L30 49L33 46L36 41L39 29L42 41L45 32L48 55L51 46L54 36L57 38L60 53L63 29L66 44L69 44L72 34L75 53L78 39L81 53L84 44L87 37L90 42L93 52L96 34L99 35L102 42L105 48L108 48M0 28L3 39L6 37L9 42L12 25L15 34L18 29L21 54L24 20L27 31L30 35L33 23L36 35L39 31L42 23L45 33L48 50L51 39L54 51L57 51L60 40L63 36L66 19L69 20L72 42L75 40L78 41L81 31L84 37L87 29L90 48L93 40L96 20L99 34L102 51L105 30L108 29M0 34L3 40L6 38L9 41L12 34L15 45L18 52L21 31L24 42L27 42L30 41L33 39L36 44L39 36L42 32L45 30L48 45L51 33L54 21L57 34L60 34L63 47L66 49L69 29L72 51L75 43L78 54L81 35L84 46L87 46L90 54L93 28L96 39L99 41L102 38L105 31L108 37M0 62L3 44L6 54L9 39L12 46L15 43L18 44L21 30L24 44L27 64L30 44L33 32L36 64L39 47L42 45L45 27L48 39L51 40L54 41L57 34L60 49L63 31L66 54L69 44L72 40L75 29L78 47L81 47L84 30L87 59L90 42L93 29L96 55L99 34L102 35L105 30L108 35M0 32L3 45L6 32L9 41L12 22L15 37L18 41L21 48L24 39L27 43L30 45L33 34L36 47L39 43L42 35L45 28L48 52L51 51L54 43L57 51L60 55L63 40L66 47L69 47L72 47L75 41L78 38L81 49L84 44L87 57L90 46L93 43L96 30L99 41L102 45L105 41L108 35M0 23L3 33L6 47L9 21L12 36L15 19L18 40L21 29L24 32L27 35L30 26L33 26L36 41L39 17L42 21L45 37L48 37L51 23L54 24L57 32L60 49L63 45L66 29L69 27L72 31L75 15L78 34L81 28L84 42L87 24L90 35L93 26L96 27L99 48L102 23L105 31L108 36M0 53L3 46L6 53L9 67L12 55L15 56L18 71L21 42L24 61L27 43L30 62L33 56L36 57L39 52L42 51L45 28L48 38L51 69L54 50L57 49L60 56L63 59L66 52L69 60L72 57L75 45L78 52L81 60L84 42L87 51L90 44L93 48L96 36L99 52L102 45L105 61L108 47M0 62L3 44L6 71L9 52L12 55L15 39L18 50L21 45L24 39L27 41L30 64L33 46L36 51L39 42L42 45L45 44L48 48L51 50L54 58L57 50L60 49L63 43L66 56L69 55L72 48L75 34L78 50L81 31L84 65L87 51L90 63L93 49L96 59L99 67L102 59L105 41L108 36M0 42L3 29L6 22L9 34L12 38L15 22L18 38L21 46L24 29L27 41L30 39L33 42L36 42L39 29L42 43L45 57L48 41L51 25L54 35L57 56L60 37L63 40L66 27L69 25L72 38L75 43L78 33L81 43L84 36L87 21L90 37L93 45L96 61L99 25L102 43L105 43L108 44M0 56L3 53L6 36L9 34L12 42L15 28L18 43L21 49L24 37L27 39L30 36L33 43L36 47L39 31L42 49L45 31L48 41L51 43L54 32L57 38L60 31L63 51L66 41L69 28L72 49L75 39L78 60L81 41L84 48L87 32L90 40L93 41L96 51L99 55L102 43L105 41L108 34M0 38L3 49L6 56L9 37L12 33L15 30L18 47L21 52L24 46L27 55L30 40L33 36L36 41L39 26L42 35L45 32L48 20L51 38L54 44L57 51L60 38L63 50L66 32L69 51L72 33L75 38L78 27L81 56L84 36L87 50L90 39L93 42L96 47L99 29L102 44L105 36L108 30M0 45L3 59L6 48L9 43L12 41L15 47L18 41L21 56L24 42L27 60L30 44L33 46L36 41L39 66L42 26L45 53L48 56L51 57L54 63L57 61L60 31L63 48L66 38L69 45L72 45L75 57L78 55L81 47L84 39L87 50L90 48L93 43L96 56L99 60L102 39L105 59L108 37M0 26L3 44L6 57L9 29L12 34L15 31L18 41L21 51L24 27L27 48L30 59L33 38L36 41L39 45L42 20L45 30L48 44L51 39L54 47L57 31L60 39L63 33L66 30L69 47L72 57L75 32L78 44L81 47L84 54L87 34L90 26L93 45L96 33L99 29L102 38L105 40L108 42M0 22L3 22L6 46L9 54L12 46L15 31L18 50L21 32L24 54L27 45L30 50L33 34L36 48L39 21L42 52L45 28L48 40L51 49L54 50L57 43L60 27L63 55L66 39L69 29L72 56L75 63L78 39L81 53L84 52L87 46L90 49L93 46L96 23L99 35L102 38L105 34L108 43M0 50L3 63L6 36L9 50L12 60L15 43L18 27L21 43L24 55L27 49L30 29L33 46L36 42L39 37L42 50L45 21L48 56L51 60L54 39L57 33L60 29L63 47L66 38L69 24L72 23L75 49L78 52L81 30L84 57L87 38L90 44L93 33L96 53L99 41L102 43L105 46L108 36M0 52L3 43L6 37L9 50L12 50L15 47L18 37L21 61L24 50L27 58L30 54L33 47L36 42L39 35L42 56L45 45L48 61L51 62L54 53L57 49L60 59L63 65L66 48L69 56L72 65L75 40L78 56L81 48L84 55L87 59L90 48L93 54L96 66L99 57L102 55L105 51L108 51M0 47L3 45L6 43L9 46L12 50L15 48L18 47L21 68L24 39L27 51L30 56L33 49L36 50L39 35L42 48L45 54L48 39L51 51L54 56L57 49L60 50L63 34L66 60L69 68L72 61L75 65L78 28L81 41L84 43L87 49L90 43L93 30L96 46L99 32L102 44L105 56L108 65M0 53L3 28L6 34L9 51L12 51L15 46L18 38L21 41L24 49L27 63L30 45L33 25L36 66L39 50L42 38L45 57L48 51L51 39L54 39L57 53L60 46L63 59L66 39L69 38L72 33L75 43L78 65L81 25L84 49L87 34L90 36L93 64L96 26L99 40L102 25L105 38L108 50M0 53L3 50L6 38L9 43L12 47L15 39L18 23L21 38L24 46L27 45L30 25L33 34L36 49L39 33L42 50L45 30L48 23L51 29L54 62L57 34L60 36L63 47L66 37L69 23L72 37L75 53L78 27L81 30L84 41L87 45L90 36L93 60L96 39L99 30L102 44L105 45L108 43M0 62L3 56L6 47L9 40L12 49L15 49L18 44L21 33L24 53L27 47L30 30L33 49L36 52L39 47L42 37L45 38L48 34L51 37L54 53L57 47L60 31L63 46L66 54L69 57L72 47L75 34L78 39L81 36L84 36L87 29L90 43L93 44L96 36L99 61L102 38L105 50L108 62M0 61L3 47L6 61L9 51L12 33L15 35L18 28L21 37L24 36L27 45L30 22L33 24L36 38L39 34L42 49L45 37L48 33L51 45L54 25L57 45L60 52L63 51L66 35L69 60L72 47L75 47L78 53L81 56L84 33L87 43L90 41L93 43L96 47L99 49L102 42L105 51L108 56M0 30L3 25L6 41L9 42L12 43L15 45L18 43L21 57L24 44L27 40L30 40L33 51L36 38L39 40L42 41L45 34L48 27L51 30L54 32L57 33L60 39L63 47L66 39L69 31L72 56L75 43L78 24L81 43L84 30L87 40L90 39L93 47L96 27L99 46L102 54L105 30L108 51M0 48L3 60L6 38L9 40L12 48L15 51L18 45L21 48L24 43L27 49L30 40L33 48L36 39L39 39L42 28L45 36L48 43L51 37L54 44L57 55L60 43L63 37L66 41L69 26L72 54L75 59L78 34L81 66L84 36L87 53L90 46L93 61L96 55L99 56L102 59L105 48L108 51M0 58L3 40L6 46L9 41L12 32L15 30L18 34L21 36L24 29L27 40L30 45L33 43L36 34L39 38L42 51L45 46L48 35L51 34L54 47L57 19L60 45L63 29L66 34L69 36L72 48L75 23L78 45L81 54L84 29L87 44L90 60L93 37L96 48L99 35L102 40L105 19L108 37M0 68L3 45L6 55L9 47L12 50L15 43L18 65L21 46L24 66L27 48L30 67L33 49L36 39L39 43L42 51L45 58L48 57L51 39L54 66L57 54L60 53L63 45L66 62L69 50L72 38L75 51L78 55L81 49L84 47L87 54L90 38L93 60L96 45L99 38L102 55L105 66L108 63M0 30L3 45L6 42L9 43L12 45L15 22L18 53L21 26L24 41L27 30L30 43L33 52L36 45L39 30L42 37L45 36L48 35L51 46L54 29L57 43L60 28L63 46L66 46L69 41L72 50L75 53L78 39L81 42L84 27L87 30L90 50L93 19L96 54L99 47L102 33L105 41L108 32M0 43L3 63L6 49L9 38L12 58L15 55L18 54L21 60L24 44L27 34L30 48L33 53L36 52L39 40L42 52L45 35L48 49L51 54L54 52L57 54L60 34L63 46L66 46L69 47L72 45L75 51L78 56L81 58L84 48L87 47L90 53L93 34L96 57L99 43L102 57L105 53L108 53M0 61L3 56L6 40L9 40L12 45L15 46L18 42L21 40L24 62L27 32L30 70L33 49L36 49L39 28L42 49L45 52L48 57L51 29L54 41L57 64L60 50L63 62L66 57L69 62L72 44L75 57L78 50L81 29L84 53L87 43L90 52L93 49L96 34L99 63L102 48L105 52L108 30M0 46L3 50L6 32L9 56L12 30L15 49L18 49L21 51L24 34L27 49L30 24L33 51L36 45L39 48L42 45L45 25L48 56L51 45L54 54L57 23L60 54L63 39L66 35L69 50L72 48L75 64L78 64L81 42L84 50L87 49L90 45L93 35L96 37L99 30L102 36L105 49L108 56M0 20L3 28L6 37L9 36L12 49L15 36L18 26L21 44L24 14L27 31L30 37L33 41L36 31L39 42L42 32L45 22L48 32L51 41L54 37L57 43L60 39L63 44L66 43L69 14L72 29L75 40L78 22L81 37L84 25L87 39L90 22L93 44L96 17L99 24L102 16L105 54L108 36M0 40L3 40L6 47L9 30L12 35L15 47L18 39L21 55L24 59L27 52L30 47L33 42L36 18L39 36L42 21L45 22L48 23L51 44L54 28L57 50L60 36L63 32L66 43L69 30L72 30L75 35L78 49L81 22L84 48L87 41L90 41L93 27L96 38L99 49L102 41L105 43L108 43M0 42L3 47L6 54L9 51L12 28L15 32L18 42L21 48L24 32L27 46L30 33L33 59L36 59L39 45L42 54L45 37L48 32L51 40L54 45L57 39L60 45L63 33L66 41L69 52L72 48L75 36L78 46L81 51L84 41L87 46L90 45L93 53L96 48L99 54L102 45L105 50L108 40M0 31L3 47L6 51L9 52L12 43L15 46L18 45L21 33L24 44L27 44L30 47L33 37L36 62L39 49L42 38L45 51L48 42L51 46L54 36L57 51L60 41L63 41L66 46L69 39L72 54L75 40L78 51L81 40L84 31L87 46L90 44L93 46L96 37L99 31L102 51L105 54L108 40M0 30L3 47L6 33L9 46L12 55L15 39L18 39L21 34L24 38L27 35L30 51L33 37L36 50L39 50L42 41L45 41L48 42L51 37L54 59L57 28L60 43L63 56L66 36L69 62L72 37L75 47L78 57L81 57L84 45L87 56L90 35L93 53L96 35L99 45L102 36L105 43L108 47M0 60L3 61L6 58L9 46L12 66L15 51L18 47L21 35L24 42L27 46L30 49L33 33L36 48L39 41L42 46L45 44L48 46L51 51L54 55L57 38L60 49L63 47L66 68L69 53L72 52L75 48L78 40L81 60L84 34L87 34L90 48L93 36L96 59L99 62L102 46L105 34L108 64" stroke="#e3321f" stroke-width="0.8" fill="none"/><path d="M0.0 57L0.5 126M1.6 57L1.9 105M2.8 57L3.7 104M1.3 57L0.6 106M1.6 57L2.5 117M3.6 57L4.2 118M6.8 57L6.5 115M6.3 57L6.0 125M2.7 57L2.6 112M0.8 57L0.5 120M5.9 57L6.1 103M4.1 57L4.4 117M1.8 57L0.9 115M1.8 57L2.4 123" stroke="#e3321f" stroke-width="0.9"/><polygon points="0,59 4.2,59 2.8000000000000003,107 0,117" fill="#e3321f"/><polygon points="29.5,52 32.5,92 35.5,48" fill="#e3321f" stroke="#e3321f" stroke-width="2"/><polyline points="0,41.0 2,40.9 4,40.8 6,40.7 8,40.6 10,40.5 12,40.4 14,40.3 16,40.2 18,40.1 20,40.0 22,40.8 24,41.5 26,42.2 28,43.0 30,49.7 32,59.7 34,51.0 36,42.3 38,37.9 40,37.6 42,37.4 44,37.1 46,37.2 48,37.6 50,38.0 52,38.4 54,38.8 56,39.2 58,39.6 60,40.0 62,40.2 64,40.4 66,40.6 68,40.8 70,41.0 72,41.2 74,41.4 76,41.6 78,41.8 80,42.0 82,41.9 84,41.9 86,41.8 88,41.7 90,41.7 92,41.6 94,41.5 96,41.4 98,41.4 100,41.3 102,41.2 104,41.2 106,41.1 108,41.0" fill="none" stroke="#777" stroke-width="0.7" opacity="0.8"/><polyline points="0,55.0 2,54.9 4,54.8 6,54.7 8,54.6 10,54.5 12,54.4 14,54.3 16,54.2 18,54.1 20,54.0 22,54.8 24,55.5 26,56.2 28,57.0 30,63.7 32,73.7 34,65.0 36,56.3 38,51.9 40,51.6 42,51.4 44,51.1 46,51.2 48,51.6 50,52.0 52,52.4 54,52.8 56,53.2 58,53.6 60,54.0 62,54.2 64,54.4 66,54.6 68,54.8 70,55.0 72,55.2 74,55.4 76,55.6 78,55.8 80,56.0 82,55.9 84,55.9 86,55.8 88,55.7 90,55.7 92,55.6 94,55.5 96,55.4 98,55.4 100,55.3 102,55.2 104,55.2 106,55.1 108,55.0" fill="none" stroke="#777" stroke-width="0.7" opacity="0.8"/><polyline points="0.0,48.0 20.0,47.0 28.0,50.0 31.0,60.0 32.5,70.0 34.0,58.0 37.0,45.0 45.0,44.0 60.0,47.0 80.0,49.0 109.0,48.0" fill="none" stroke="#111" stroke-width="2.6" stroke-linejoin="round"/></svg>
<svg class="s" style="left:228px;top:977px;" width="110" height="169" viewBox="0 0 110 169"><path d="M0.5 0V168.5H110" fill="none" stroke="#555" stroke-width="1"/><path d="M31.0 169v-4" stroke="#555" stroke-width="1"/><path d="M63.0 169v-4" stroke="#555" stroke-width="1"/><path d="M95.0 169v-4" stroke="#555" stroke-width="1"/><path d="M0 0.5h4" stroke="#555" stroke-width="1"/><path d="M0 48.0h4" stroke="#555" stroke-width="1"/><path d="M0 97.0h4" stroke="#555" stroke-width="1"/><path d="M0 145.0h4" stroke="#555" stroke-width="1"/></svg>
<svg class="s" style="left:361px;top:977px;" width="110" height="169" viewBox="0 0 110 169"><path d="M0.5 0V168.5H110" fill="none" stroke="#555" stroke-width="1"/><path d="M31.0 169v-4" stroke="#555" stroke-width="1"/><path d="M63.0 169v-4" stroke="#555" stroke-width="1"/><path d="M95.0 169v-4" stroke="#555" stroke-width="1"/><path d="M0 0.5h4" stroke="#555" stroke-width="1"/><path d="M0 48.0h4" stroke="#555" stroke-width="1"/><path d="M0 97.0h4" stroke="#555" stroke-width="1"/><path d="M0 145.0h4" stroke="#555" stroke-width="1"/></svg>
<svg class="s" style="left:491px;top:977px;" width="104" height="169" viewBox="0 0 104 169"><path d="M0.5 0V168.5H104" fill="none" stroke="#555" stroke-width="1"/><path d="M31.0 169v-4" stroke="#555" stroke-width="1"/><path d="M63.0 169v-4" stroke="#555" stroke-width="1"/><path d="M95.0 169v-4" stroke="#555" stroke-width="1"/><path d="M0 0.5h4" stroke="#555" stroke-width="1"/><path d="M0 48.0h4" stroke="#555" stroke-width="1"/><path d="M0 97.0h4" stroke="#555" stroke-width="1"/><path d="M0 145.0h4" stroke="#555" stroke-width="1"/></svg>
<svg class="s" style="left:621px;top:977px;" width="110" height="169" viewBox="0 0 110 169"><path d="M0.5 0V168.5H110" fill="none" stroke="#555" stroke-width="1"/><path d="M31.0 169v-4" stroke="#555" stroke-width="1"/><path d="M63.0 169v-4" stroke="#555" stroke-width="1"/><path d="M95.0 169v-4" stroke="#555" stroke-width="1"/><path d="M0 0.5h4" stroke="#555" stroke-width="1"/><path d="M0 48.0h4" stroke="#555" stroke-width="1"/><path d="M0 97.0h4" stroke="#555" stroke-width="1"/><path d="M0 145.0h4" stroke="#555" stroke-width="1"/></svg>
<svg class="s" style="left:621px;top:977px;overflow:hidden;" width="109" height="168" viewBox="0 0 109 168"><path d="M0.0 71L2.5 79L5.0 59L7.5 14L10.0 18L12.5 27L15.0 27L17.5 26L20.0 32L22.5 40L25.0 40L27.5 40L30.0 57L32.5 104L35.0 69L37.5 18L40.0 16L42.5 13L45.0 30L47.5 27L50.0 31L52.5 32L55.0 43L57.5 43L60.0 44L62.5 99L65.0 39L67.5 43L70.0 44L72.5 41L75.0 44L77.5 42L80.0 53L82.5 51L85.0 59L87.5 136L90.0 54L92.5 50L95.0 53L97.5 51L100.0 45L102.5 44L105.0 39L107.5 39M0.0 78L2.5 74L5.0 85L7.5 17L10.0 23L12.5 29L15.0 27L17.5 33L20.0 39L22.5 42L25.0 56L27.5 45L30.0 69L32.5 112L35.0 77L37.5 -4L40.0 16L42.5 25L45.0 30L47.5 40L50.0 32L52.5 36L55.0 45L57.5 46L60.0 49L62.5 43L65.0 135L67.5 49L70.0 51L72.5 44L75.0 52L77.5 131L80.0 48L82.5 56L85.0 55L87.5 60L90.0 57L92.5 122L95.0 52L97.5 49L100.0 48L102.5 45L105.0 45L107.5 36M0.0 81L2.5 86L5.0 64L7.5 22L10.0 33L12.5 29L15.0 33L17.5 41L20.0 47L22.5 46L25.0 50L27.5 58L30.0 75L32.5 116L35.0 81L37.5 23L40.0 27L42.5 34L45.0 38L47.5 46L50.0 44L52.5 47L55.0 43L57.5 55L60.0 50L62.5 56L65.0 57L67.5 53L70.0 54L72.5 52L75.0 52L77.5 56L80.0 55L82.5 63L85.0 63L87.5 59L90.0 67L92.5 63L95.0 63L97.5 49L100.0 57L102.5 45L105.0 123L107.5 64M0.0 83L2.5 64L5.0 46L7.5 116L10.0 25L12.5 32L15.0 33L17.5 36L20.0 43L22.5 42L25.0 49L27.5 43L30.0 63L32.5 106L35.0 84L37.5 27L40.0 17L42.5 26L45.0 37L47.5 41L50.0 44L52.5 49L55.0 47L57.5 49L60.0 112L62.5 54L65.0 51L67.5 52L70.0 51L72.5 45L75.0 49L77.5 51L80.0 105L82.5 55L85.0 70L87.5 59L90.0 123L92.5 59L95.0 56L97.5 57L100.0 53L102.5 47L105.0 48L107.5 101M0.0 70L2.5 87L5.0 49L7.5 9L10.0 27L12.5 35L15.0 29L17.5 41L20.0 30L22.5 45L25.0 35L27.5 45L30.0 62L32.5 105L35.0 76L37.5 16L40.0 13L42.5 20L45.0 38L47.5 32L50.0 38L52.5 38L55.0 45L57.5 39L60.0 41L62.5 43L65.0 48L67.5 117L70.0 47L72.5 46L75.0 48L77.5 48L80.0 107L82.5 50L85.0 51L87.5 52L90.0 54L92.5 50L95.0 54L97.5 49L100.0 139L102.5 44L105.0 39L107.5 39M0.0 80L2.5 77L5.0 93L7.5 18L10.0 19L12.5 29L15.0 31L17.5 31L20.0 37L22.5 43L25.0 41L27.5 47L30.0 58L32.5 103L35.0 74L37.5 21L40.0 17L42.5 25L45.0 26L47.5 37L50.0 34L52.5 32L55.0 42L57.5 41L60.0 48L62.5 50L65.0 47L67.5 45L70.0 43L72.5 51L75.0 42L77.5 52L80.0 41L82.5 50L85.0 57L87.5 57L90.0 59L92.5 51L95.0 55L97.5 52L100.0 49L102.5 134L105.0 46L107.5 42M0.0 80L2.5 88L5.0 102L7.5 23L10.0 31L12.5 42L15.0 35L17.5 45L20.0 44L22.5 38L25.0 48L27.5 47L30.0 70L32.5 118L35.0 81L37.5 25L40.0 28L42.5 31L45.0 40L47.5 45L50.0 43L52.5 50L55.0 52L57.5 55L60.0 114L62.5 55L65.0 51L67.5 135L70.0 53L72.5 53L75.0 103L77.5 52L80.0 56L82.5 57L85.0 58L87.5 57L90.0 128L92.5 66L95.0 52L97.5 60L100.0 59L102.5 57L105.0 50L107.5 50M0.0 81L2.5 86L5.0 43L7.5 12L10.0 24L12.5 40L15.0 35L17.5 49L20.0 43L22.5 46L25.0 49L27.5 49L30.0 72L32.5 115L35.0 85L37.5 23L40.0 21L42.5 36L45.0 40L47.5 41L50.0 43L52.5 41L55.0 111L57.5 50L60.0 48L62.5 52L65.0 57L67.5 52L70.0 112L72.5 44L75.0 49L77.5 58L80.0 57L82.5 58L85.0 65L87.5 63L90.0 62L92.5 149L95.0 62L97.5 52L100.0 55L102.5 51L105.0 56L107.5 46M0.0 84L2.5 96L5.0 67L7.5 27L10.0 36L12.5 43L15.0 46L17.5 52L20.0 55L22.5 55L25.0 62L27.5 57L30.0 80L32.5 124L35.0 88L37.5 39L40.0 28L42.5 38L45.0 46L47.5 49L50.0 43L52.5 55L55.0 60L57.5 55L60.0 56L62.5 61L65.0 56L67.5 59L70.0 66L72.5 59L75.0 54L77.5 124L80.0 61L82.5 64L85.0 69L87.5 64L90.0 76L92.5 70L95.0 144L97.5 59L100.0 63L102.5 58L105.0 57L107.5 54M0.0 105L2.5 49L5.0 52L7.5 4L10.0 17L12.5 22L15.0 33L17.5 29L20.0 30L22.5 39L25.0 40L27.5 38L30.0 57L32.5 95L35.0 72L37.5 10L40.0 14L42.5 15L45.0 29L47.5 30L50.0 29L52.5 37L55.0 39L57.5 35L60.0 43L62.5 43L65.0 47L67.5 36L70.0 40L72.5 39L75.0 41L77.5 34L80.0 112L82.5 52L85.0 49L87.5 53L90.0 53L92.5 49L95.0 56L97.5 50L100.0 49L102.5 129L105.0 40L107.5 36M0.0 72L2.5 71L5.0 55L7.5 13L10.0 17L12.5 21L15.0 29L17.5 36L20.0 39L22.5 40L25.0 38L27.5 46L30.0 63L32.5 110L35.0 75L37.5 17L40.0 17L42.5 25L45.0 37L47.5 42L50.0 31L52.5 37L55.0 39L57.5 103L60.0 43L62.5 52L65.0 50L67.5 47L70.0 119L72.5 45L75.0 42L77.5 47L80.0 51L82.5 56L85.0 50L87.5 56L90.0 58L92.5 58L95.0 51L97.5 48L100.0 41L102.5 41L105.0 40L107.5 137M0.0 80L2.5 79L5.0 61L7.5 19L10.0 28L12.5 33L15.0 36L17.5 38L20.0 40L22.5 43L25.0 38L27.5 49L30.0 67L32.5 110L35.0 77L37.5 22L40.0 23L42.5 23L45.0 33L47.5 38L50.0 44L52.5 43L55.0 48L57.5 110L60.0 51L62.5 52L65.0 59L67.5 53L70.0 52L72.5 53L75.0 103L77.5 54L80.0 54L82.5 51L85.0 57L87.5 66L90.0 62L92.5 144L95.0 54L97.5 46L100.0 52L102.5 43L105.0 55L107.5 43M0.0 85L2.5 71L5.0 54L7.5 8L10.0 20L12.5 23L15.0 31L17.5 27L20.0 38L22.5 35L25.0 45L27.5 42L30.0 60L32.5 107L35.0 71L37.5 19L40.0 23L42.5 26L45.0 34L47.5 26L50.0 41L52.5 41L55.0 39L57.5 37L60.0 109L62.5 97L65.0 46L67.5 47L70.0 45L72.5 44L75.0 43L77.5 98L80.0 42L82.5 59L85.0 56L87.5 58L90.0 56L92.5 49L95.0 58L97.5 45L100.0 120L102.5 47L105.0 48L107.5 40M0.0 72L2.5 83L5.0 50L7.5 9L10.0 29L12.5 29L15.0 28L17.5 45L20.0 42L22.5 42L25.0 47L27.5 50L30.0 64L32.5 113L35.0 74L37.5 15L40.0 13L42.5 28L45.0 45L47.5 33L50.0 37L52.5 45L55.0 52L57.5 45L60.0 49L62.5 47L65.0 49L67.5 54L70.0 46L72.5 51L75.0 50L77.5 48L80.0 48L82.5 54L85.0 52L87.5 55L90.0 60L92.5 60L95.0 55L97.5 45L100.0 49L102.5 50L105.0 50L107.5 49M0.0 74L2.5 79L5.0 78L7.5 18L10.0 25L12.5 30L15.0 47L17.5 43L20.0 48L22.5 55L25.0 54L27.5 56L30.0 65L32.5 118L35.0 81L37.5 22L40.0 29L42.5 35L45.0 42L47.5 43L50.0 52L52.5 133L55.0 51L57.5 55L60.0 56L62.5 57L65.0 62L67.5 97L70.0 57L72.5 48L75.0 55L77.5 51L80.0 65L82.5 68L85.0 68L87.5 65L90.0 72L92.5 146L95.0 60L97.5 53L100.0 55L102.5 60L105.0 54L107.5 47M0.0 109L2.5 82L5.0 57L7.5 13L10.0 24L12.5 35L15.0 32L17.5 37L20.0 38L22.5 42L25.0 51L27.5 47L30.0 63L32.5 115L35.0 76L37.5 29L40.0 19L42.5 26L45.0 28L47.5 32L50.0 39L52.5 39L55.0 42L57.5 39L60.0 50L62.5 53L65.0 117L67.5 47L70.0 51L72.5 39L75.0 50L77.5 51L80.0 51L82.5 53L85.0 46L87.5 56L90.0 57L92.5 126L95.0 62L97.5 48L100.0 51L102.5 47L105.0 49L107.5 104M0.0 70L2.5 77L5.0 51L7.5 82L10.0 13L12.5 27L15.0 31L17.5 34L20.0 26L22.5 36L25.0 46L27.5 50L30.0 71L32.5 106L35.0 71L37.5 18L40.0 10L42.5 19L45.0 34L47.5 40L50.0 34L52.5 28L55.0 42L57.5 38L60.0 102L62.5 39L65.0 44L67.5 47L70.0 40L72.5 40L75.0 44L77.5 42L80.0 43L82.5 49L85.0 54L87.5 145L90.0 51L92.5 54L95.0 50L97.5 54L100.0 42L102.5 45L105.0 40L107.5 41M0.0 89L2.5 87L5.0 50L7.5 11L10.0 35L12.5 33L15.0 38L17.5 47L20.0 45L22.5 47L25.0 60L27.5 58L30.0 79L32.5 120L35.0 80L37.5 31L40.0 19L42.5 39L45.0 40L47.5 42L50.0 47L52.5 44L55.0 52L57.5 114L60.0 56L62.5 50L65.0 48L67.5 65L70.0 113L72.5 51L75.0 47L77.5 54L80.0 56L82.5 57L85.0 66L87.5 62L90.0 71L92.5 64L95.0 69L97.5 53L100.0 55L102.5 54L105.0 47L107.5 49M0.0 83L2.5 92L5.0 100L7.5 12L10.0 35L12.5 39L15.0 41L17.5 48L20.0 43L22.5 52L25.0 49L27.5 52L30.0 70L32.5 112L35.0 79L37.5 27L40.0 31L42.5 37L45.0 43L47.5 50L50.0 43L52.5 49L55.0 53L57.5 52L60.0 56L62.5 59L65.0 63L67.5 51L70.0 50L72.5 50L75.0 50L77.5 95L80.0 60L82.5 61L85.0 66L87.5 64L90.0 66L92.5 64L95.0 61L97.5 63L100.0 59L102.5 119L105.0 52L107.5 51M0.0 64L2.5 85L5.0 42L7.5 8L10.0 23L12.5 23L15.0 30L17.5 25L20.0 38L22.5 36L25.0 35L27.5 46L30.0 64L32.5 106L35.0 72L37.5 16L40.0 10L42.5 23L45.0 24L47.5 26L50.0 32L52.5 41L55.0 41L57.5 41L60.0 94L62.5 45L65.0 50L67.5 38L70.0 39L72.5 40L75.0 44L77.5 115L80.0 47L82.5 42L85.0 48L87.5 49L90.0 51L92.5 116L95.0 47L97.5 38L100.0 42L102.5 48L105.0 41L107.5 41M0.0 76L2.5 77L5.0 60L7.5 13L10.0 17L12.5 41L15.0 28L17.5 40L20.0 39L22.5 40L25.0 44L27.5 42L30.0 65L32.5 103L35.0 68L37.5 21L40.0 23L42.5 34L45.0 32L47.5 40L50.0 44L52.5 43L55.0 43L57.5 50L60.0 40L62.5 48L65.0 49L67.5 48L70.0 48L72.5 49L75.0 45L77.5 54L80.0 54L82.5 110L85.0 65L87.5 60L90.0 62L92.5 56L95.0 59L97.5 43L100.0 48L102.5 117L105.0 51L107.5 49M0.0 79L2.5 67L5.0 59L7.5 19L10.0 28L12.5 36L15.0 43L17.5 44L20.0 50L22.5 43L25.0 46L27.5 47L30.0 69L32.5 118L35.0 74L37.5 31L40.0 27L42.5 30L45.0 38L47.5 48L50.0 53L52.5 40L55.0 55L57.5 49L60.0 53L62.5 48L65.0 111L67.5 51L70.0 55L72.5 50L75.0 51L77.5 46L80.0 58L82.5 55L85.0 59L87.5 62L90.0 67L92.5 59L95.0 61L97.5 59L100.0 50L102.5 54L105.0 48L107.5 52M0.0 73L2.5 45L5.0 53L7.5 14L10.0 26L12.5 28L15.0 32L17.5 38L20.0 38L22.5 39L25.0 44L27.5 41L30.0 70L32.5 102L35.0 73L37.5 23L40.0 15L42.5 29L45.0 29L47.5 33L50.0 28L52.5 41L55.0 45L57.5 38L60.0 98L62.5 49L65.0 47L67.5 46L70.0 52L72.5 45L75.0 41L77.5 51L80.0 51L82.5 44L85.0 51L87.5 51L90.0 55L92.5 150L95.0 47L97.5 49L100.0 47L102.5 140L105.0 39L107.5 38M0.0 72L2.5 82L5.0 56L7.5 18L10.0 24L12.5 29L15.0 30L17.5 36L20.0 41L22.5 38L25.0 40L27.5 48L30.0 68L32.5 111L35.0 71L37.5 15L40.0 22L42.5 19L45.0 31L47.5 38L50.0 43L52.5 43L55.0 40L57.5 42L60.0 43L62.5 38L65.0 130L67.5 48L70.0 47L72.5 38L75.0 44L77.5 51L80.0 52L82.5 53L85.0 47L87.5 52L90.0 54L92.5 61L95.0 59L97.5 47L100.0 49L102.5 49L105.0 44L107.5 120" fill="none" stroke="#2a2a2a" stroke-width="0.8"/><polyline points="0,72 4,82 9,38 29,52 33,105 38,28 59,52 66,98 74,48 84,62 91,102 97,52 109,48" fill="none" stroke="#70d0e0" stroke-width="2.2"/><polyline points="0,68 6,10 12,35 29,45 33,90 38,22 57,40 66,60 74,38 84,45 91,40 97,30 109,45" fill="none" stroke="#80d8e8" stroke-width="1"/></svg>
<div class="t" style="left:214.5px;top:969.6px;font-size:17px;color:#111;">1</div>
<div class="t" style="left:222.0px;top:963.8px;font-size:8px;color:#111;">10</div><div class="t" style="left:231.1px;top:962.0px;font-size:6.0px;color:#111;">-4</div>
<div class="t" style="left:214.5px;top:1015.6px;font-size:17px;color:#111;">0</div>
<div class="t" style="left:208.9px;top:1064.6px;font-size:17px;color:#111;">-1</div>
<div class="t" style="left:201.2px;top:1136.4px;font-size:15px;color:#111;">-2.5</div>
<div class="t" style="left:250.5px;top:1143.6px;font-size:17px;color:#111;">20</div>
<div class="t" style="left:285.5px;top:1143.6px;font-size:17px;color:#111;">40</div>
<div class="t" style="left:347.5px;top:969.6px;font-size:17px;color:#111;">1</div>
<div class="t" style="left:355.0px;top:963.8px;font-size:8px;color:#111;">10</div><div class="t" style="left:364.1px;top:962.0px;font-size:6.0px;color:#111;">-4</div>
<div class="t" style="left:347.5px;top:1015.6px;font-size:17px;color:#111;">0</div>
<div class="t" style="left:341.9px;top:1064.6px;font-size:17px;color:#111;">-1</div>
<div class="t" style="left:341.0px;top:1140.0px;font-size:11px;color:#111;">-2.5</div>
<div class="t" style="left:383.5px;top:1143.6px;font-size:17px;color:#111;">20</div>
<div class="t" style="left:418.5px;top:1143.6px;font-size:17px;color:#111;">40</div>
<div class="t" style="left:477.5px;top:969.6px;font-size:17px;color:#111;">1</div>
<div class="t" style="left:485.0px;top:963.8px;font-size:8px;color:#111;">10</div><div class="t" style="left:494.1px;top:962.0px;font-size:6.0px;color:#111;">-4</div>
<div class="t" style="left:477.5px;top:1015.6px;font-size:17px;color:#111;">0</div>
<div class="t" style="left:471.9px;top:1064.6px;font-size:17px;color:#111;">-1</div>
<div class="t" style="left:471.0px;top:1140.0px;font-size:11px;color:#111;">-2.5</div>
<div class="t" style="left:513.5px;top:1143.6px;font-size:17px;color:#111;">20</div>
<div class="t" style="left:548.5px;top:1143.6px;font-size:17px;color:#111;">40</div>
<div class="t" style="left:607.5px;top:969.6px;font-size:17px;color:#111;">1</div>
<div class="t" style="left:615.0px;top:963.8px;font-size:8px;color:#111;">10</div><div class="t" style="left:624.1px;top:962.0px;font-size:6.0px;color:#111;">-4</div>
<div class="t" style="left:607.5px;top:1015.6px;font-size:17px;color:#111;">0</div>
<div class="t" style="left:601.9px;top:1064.6px;font-size:17px;color:#111;">-1</div>
<div class="t" style="left:601.0px;top:1140.0px;font-size:11px;color:#111;">-2.5</div>
<div class="t" style="left:643.5px;top:1143.6px;font-size:17px;color:#111;">20</div>
<div class="t" style="left:678.5px;top:1143.6px;font-size:17px;color:#111;">40</div>
<div class="t" style="left:235.0px;top:959.4px;font-size:15px;color:#111;transform:scaleX(0.873);">Cluster 1: # 29181</div>
<div class="t" style="left:375.0px;top:959.4px;font-size:15px;color:#111;transform:scaleX(0.884);">Cluster 2: # 8497</div>
<div class="t" style="left:647.0px;top:964.0px;font-size:11px;color:#111;transform:scaleX(0.895);">Cluster 0: # 20</div>
<div class="r" style="left:224.5px;top:1164px;width:50px;height:19px;background:#f3f4f5;"></div>
<div class="r" style="left:228.5px;top:1167.5px;width:12px;height:11px;background:#fff;border:1.5px solid #222;box-sizing:border-box;"></div>
<div class="t" style="left:248.5px;top:1166.2px;font-size:13px;color:#111;">Fix</div>
<div class="r" style="left:300.5px;top:1165px;width:38.0px;height:17px;background:linear-gradient(#ececec 0,#ececec 20%,#d6d6d6 20%,#d6d6d6 100%);border:1.5px solid #444;box-sizing:border-box;"></div>
<div class="t" style="left:303.9px;top:1168.3px;font-size:9.5px;color:#111;">Manual</div>
<div class="r" style="left:358px;top:1164px;width:50px;height:19px;background:#f3f4f5;"></div>
<div class="r" style="left:362px;top:1167.5px;width:12px;height:11px;background:#fff;border:1.5px solid #222;box-sizing:border-box;"></div>
<div class="t" style="left:382.0px;top:1166.2px;font-size:13px;color:#111;">Fix</div>
<div class="r" style="left:433.5px;top:1165px;width:38.0px;height:17px;background:linear-gradient(#ececec 0,#ececec 20%,#d6d6d6 20%,#d6d6d6 100%);border:1.5px solid #444;box-sizing:border-box;"></div>
<div class="t" style="left:436.9px;top:1168.3px;font-size:9.5px;color:#111;">Manual</div>
<div class="r" style="left:488.5px;top:1164px;width:50px;height:19px;background:#f3f4f5;"></div>
<div class="r" style="left:492.5px;top:1167.5px;width:12px;height:11px;background:#fff;border:1.5px solid #222;box-sizing:border-box;"></div>
<div class="t" style="left:512.5px;top:1166.2px;font-size:13px;color:#111;">Fix</div>
<div class="r" style="left:561px;top:1165px;width:38.5px;height:17px;background:linear-gradient(#ececec 0,#ececec 20%,#d6d6d6 20%,#d6d6d6 100%);border:1.5px solid #444;box-sizing:border-box;"></div>
<div class="t" style="left:564.7px;top:1168.3px;font-size:9.5px;color:#111;">Manual</div>
<div class="r" style="left:620px;top:1166px;width:39px;height:17px;background:linear-gradient(#e8f1fa 0,#e8f1fa 50%,#d6d6d6 50%,#d6d6d6 100%);border:1.5px solid #444;box-sizing:border-box;"></div>
<div class="t" style="left:626.8px;top:1169.3px;font-size:9.5px;color:#111;">Fix All</div>
<div class="r" style="left:692px;top:1166px;width:39px;height:17px;background:linear-gradient(#e8f1fa 0,#e8f1fa 50%,#d6d6d6 50%,#d6d6d6 100%);border:1.5px solid #444;box-sizing:border-box;"></div>
<div class="t" style="left:695.9px;top:1169.3px;font-size:9.5px;color:#111;">Manual</div>
<svg class="s" style="left:52.5px;top:1190px;overflow:hidden;" width="144" height="174" viewBox="0 0 144 174"><path d="M5 0V173" stroke="#888" stroke-width="0.8" stroke-dasharray="1.5 1.5"/><path d="M0 94.5H116" stroke="#888" stroke-width="0.8" stroke-dasharray="1.5 1"/><path d="M9.8 18.4C45 20 68 26 80 40C88 50 90 80 93 110S99 160 112 176" fill="none" stroke="#5050d0" stroke-width="1.1"/><path d="M9.8 37.6C40 40 66 47 78 56C84 61 86 66 87.5 80C89 100 90 125 94 145S100 168 104 176" fill="none" stroke="#e03030" stroke-width="1.1"/><circle cx="10" cy="18.5" r="3.5" fill="#3a48c0"/><circle cx="10" cy="37.5" r="3.5" fill="#e02a2a"/><polyline points="9,106 17,108 30,136 40,130 55,134 70,126 80,124 85,118 92,135 100,168 106,180" fill="none" stroke="#3a9a30" stroke-width="0.9"/><polyline points="9,122 15,113 22,119 30,134 40,136 55,134 70,130 80,128 85,127 92,142 100,172 105,180" fill="none" stroke="#c03a8a" stroke-width="0.9"/><polyline points="9,124 15,116 22,122 30,136 40,138 55,136 70,132 80,130 85,129 92,144 100,172 105,180" fill="none" stroke="#8040c0" stroke-width="0.9"/><polyline points="9,128 15,118 22,124 30,137 40,139 55,137 70,133 80,131 85,130 92,145 100,172 105,180" fill="none" stroke="#e0a030" stroke-width="0.9"/><polyline points="9,121 15,121 22,127 30,139 40,141 55,139 70,135 80,133 85,132 92,147 100,172 105,180" fill="none" stroke="#e05050" stroke-width="0.9"/><polyline points="9,124 15,124 22,130 30,141 40,143 55,141 70,137 80,135 85,134 92,149 100,172 105,180" fill="none" stroke="#50c0c0" stroke-width="0.9"/><polyline points="9,125 15,127 22,133 30,143 40,145 55,143 70,139 80,137 85,136 92,151 100,172 105,180" fill="none" stroke="#c0c040" stroke-width="0.9"/><polyline points="9,127 15,130 22,136 30,145 40,147 55,145 70,141 80,139 85,138 92,153 100,172 105,180" fill="none" stroke="#b070e0" stroke-width="0.9"/><polyline points="9,135 15,132 22,138 30,146 40,148 55,146 70,142 80,140 85,139 92,154 100,172 105,180" fill="none" stroke="#a0d080" stroke-width="0.9"/><polyline points="9,130 15,135 22,141 30,148 40,150 55,148 70,144 80,142 85,141 92,156 100,172 105,180" fill="none" stroke="#d090d0" stroke-width="0.9"/><polyline points="9,136 15,138 22,144 30,150 40,152 55,150 70,146 80,144 85,143 92,158 100,172 105,180" fill="none" stroke="#90b0e0" stroke-width="0.9"/><polyline points="100,173 115,173 120,185" fill="none" stroke="#c040c0" stroke-width="1"/><path d="M0.5 0V173.5H143" fill="none" stroke="#555" stroke-width="1"/><path d="M48 173v-4" stroke="#555"/><path d="M95.5 173v-4" stroke="#555"/><path d="M143 173v-4" stroke="#555"/><path d="M0 0.5h4" stroke="#555"/><path d="M0 34.6h4" stroke="#555"/><path d="M0 69h4" stroke="#555"/><path d="M0 104h4" stroke="#555"/><path d="M0 138.5h4" stroke="#555"/></svg>
<div class="t" style="left:28.0px;top:1352.7px;font-size:18px;color:#111;">10</div>
<div class="t" style="left:46.0px;top:1349.9px;font-size:9px;color:#111;">0</div>
<div class="t" style="left:28.0px;top:1318.3px;font-size:18px;color:#111;">10</div>
<div class="t" style="left:46.0px;top:1315.5px;font-size:9px;color:#111;">1</div>
<div class="t" style="left:28.0px;top:1283.4px;font-size:18px;color:#111;">10</div>
<div class="t" style="left:46.0px;top:1280.6px;font-size:9px;color:#111;">2</div>
<div class="t" style="left:28.0px;top:1248.7px;font-size:18px;color:#111;">10</div>
<div class="t" style="left:46.0px;top:1245.9px;font-size:9px;color:#111;">3</div>
<div class="t" style="left:28.0px;top:1214.5px;font-size:18px;color:#111;">10</div>
<div class="t" style="left:46.0px;top:1211.7px;font-size:9px;color:#111;">4</div>
<div class="t" style="left:28.0px;top:1179.7px;font-size:18px;color:#111;">10</div>
<div class="t" style="left:46.0px;top:1176.9px;font-size:9px;color:#111;">5</div>
<div class="t" style="left:47.8px;top:1364.6px;font-size:17px;color:#111;">0</div>
<div class="t" style="left:88.7px;top:1364.6px;font-size:17px;color:#111;">0.1</div>
<div class="t" style="left:136.2px;top:1364.6px;font-size:17px;color:#111;">0.2</div>
<div class="t" style="left:183.8px;top:1364.6px;font-size:17px;color:#111;">0.3</div>
<div class="t" style="left:77.0px;top:1377.8px;font-size:19px;color:#111;transform:scaleX(0.938);">Temperature</div>
<div class="t" style="left:-59.5px;top:1252.0px;font-size:25px;color:#111;line-height:normal;transform-origin:50% 50%;transform:rotate(-90deg) scaleX(0.915)">Clusters size</div>
<div class="r" style="left:60px;top:1406px;width:128px;height:24px;background:linear-gradient(#ecf3fa 0,#ecf3fa 50%,#d6d6d6 50%,#d6d6d6 100%);border:1.5px solid #333;box-sizing:border-box;"></div>
<div class="t" style="left:75.0px;top:1411.7px;font-size:11.5px;color:#111;transform:scaleX(0.909);">Change Temperature</div>
<div class="r" style="left:60px;top:1433px;width:84px;height:22px;background:#f1f2f3;"></div>
<div class="t" style="left:64.5px;top:1437.6px;font-size:11.5px;color:#111;transform:scaleX(0.888);">min. cluster size:</div>
<div class="r" style="left:144px;top:1433px;width:44px;height:22px;background:#fff;border:1.5px solid #333;box-sizing:border-box;"></div><div class="t" style="left:149.2px;top:1438.0px;font-size:11px;color:#222;">188.09</div>
<svg class="s" style="left:228px;top:1195px;" width="109" height="168" viewBox="0 0 109 168"><path d="M0.0 168V3.1M1.1 168V0.0M2.2 168V57.5M3.3 168V51.5M4.4 168V48.0M5.5 168V51.3M6.5 168V48.6M7.6 168V35.7M8.7 168V39.2M9.8 168V36.2M10.9 168V24.1M12.0 168V26.9M13.1 168V64.0M14.2 168V54.4M15.3 168V39.8M16.4 168V34.9M17.4 168V21.6M18.5 168V14.9M19.6 168V26.5M20.7 168V30.4M21.8 168V37.4M22.9 168V50.4M24.0 168V47.9M25.1 168V55.1M26.2 168V63.5M27.3 168V71.4M28.3 168V66.2M29.4 168V75.1M30.5 168V76.3M31.6 168V78.2M32.7 168V83.8M33.8 168V84.9M34.9 168V94.3M36.0 168V92.7M37.1 168V99.8M38.2 168V96.9M39.2 168V100.2M40.3 168V111.9M41.4 168V113.8M42.5 168V115.2M43.6 168V108.6M44.7 168V116.8M45.8 168V116.5M46.9 168V122.2M48.0 168V121.5M49.1 168V124.6M50.1 168V126.6M51.2 168V125.3M52.3 168V126.8M53.4 168V124.4M54.5 168V128.3M55.6 168V126.6M56.7 168V128.6M57.8 168V128.1M58.9 168V132.9M60.0 168V139.8M61.0 168V132.6M62.1 168V132.2M63.2 168V133.8M64.3 168V138.5M65.4 168V137.6M66.5 168V144.1M67.6 168V137.6M68.7 168V141.2M69.8 168V145.2M70.9 168V148.4M71.9 168V139.7M73.0 168V138.6M74.1 168V149.6M75.2 168V141.8M76.3 168V146.8M77.4 168V150.3M78.5 168V149.0M79.6 168V143.8M80.7 168V143.0M81.8 168V153.0M82.8 168V146.7M83.9 168V153.6M85.0 168V146.0M86.1 168V150.8M87.2 168V144.7M88.3 168V143.8M89.4 168V149.6M90.5 168V144.0M91.6 168V152.3M92.7 168V155.2M93.7 168V149.3M94.8 168V156.1M95.9 168V154.3M97.0 168V152.0M98.1 168V149.8M99.2 168V155.3M100.3 168V156.7M101.4 168V147.3M102.5 168V153.8M103.6 168V146.4M104.6 168V147.3M105.7 168V153.4M106.8 168V152.6M107.9 168V152.0" stroke="#1c1a26" stroke-width="1.14" fill="none"/><rect x="0.5" y="0.5" width="108" height="167" fill="none" stroke="#555" stroke-width="1"/></svg>
<svg class="s" style="left:361px;top:1195px;" width="109" height="168" viewBox="0 0 109 168"><path d="M0.0 168V107.9M1.1 168V107.8M2.2 168V107.2M3.3 168V102.5M4.4 168V86.4M5.5 168V103.0M6.5 168V104.1M7.6 168V89.5M8.7 168V108.2M9.8 168V103.3M10.9 168V71.9M12.0 168V89.4M13.1 168V86.1M14.2 168V107.1M15.3 168V87.5M16.4 168V78.2M17.4 168V100.2M18.5 168V72.3M19.6 168V69.3M20.7 168V91.7M21.8 168V64.9M22.9 168V69.4M24.0 168V57.6M25.1 168V69.0M26.2 168V50.8M27.3 168V46.3M28.3 168V73.9M29.4 168V68.8M30.5 168V38.6M31.6 168V22.5M32.7 168V48.5M33.8 168V38.8M34.9 168V32.3M36.0 168V43.7M37.1 168V41.9M38.2 168V44.7M39.2 168V43.2M40.3 168V34.8M41.4 168V49.2M42.5 168V47.8M43.6 168V32.8M44.7 168V67.1M45.8 168V45.6M46.9 168V40.3M48.0 168V60.3M49.1 168V65.6M50.1 168V41.8M51.2 168V67.3M52.3 168V70.4M53.4 168V60.6M54.5 168V49.9M55.6 168V76.3M56.7 168V67.5M57.8 168V67.5M58.9 168V46.5M60.0 168V64.1M61.0 168V46.6M62.1 168V76.8M63.2 168V70.1M64.3 168V57.1M65.4 168V47.5M66.5 168V66.7M67.6 168V77.0M68.7 168V82.1M69.8 168V64.9M70.9 168V80.1M71.9 168V54.0M73.0 168V53.2M74.1 168V82.0M75.2 168V78.4M76.3 168V56.1M77.4 168V63.8M78.5 168V57.2M79.6 168V77.7M80.7 168V87.5M81.8 168V81.0M82.8 168V59.9M83.9 168V83.0M85.0 168V80.2M86.1 168V77.7M87.2 168V78.1M88.3 168V79.1M89.4 168V57.5M90.5 168V91.1M91.6 168V98.2M92.7 168V58.2M93.7 168V61.4M94.8 168V57.3M95.9 168V81.7M97.0 168V60.0M98.1 168V61.5M99.2 168V92.5M100.3 168V70.4M101.4 168V67.0M102.5 168V75.0M103.6 168V81.8M104.6 168V92.2M105.7 168V90.5M106.8 168V95.9M107.9 168V103.4" stroke="#1c1a26" stroke-width="1.14" fill="none"/><rect x="0.5" y="0.5" width="108" height="167" fill="none" stroke="#555" stroke-width="1"/></svg>
<svg class="s" style="left:622px;top:1197px;" width="109" height="167" viewBox="0 0 109 167"><path d="M0.0 167V0.0M1.1 167V167.0M2.2 167V167.0M3.3 167V167.0M4.4 167V167.0M5.5 167V167.0M6.5 167V167.0M7.6 167V167.0M8.7 167V167.0M9.8 167V167.0M10.9 167V167.0M12.0 167V167.0M13.1 167V167.0M14.2 167V167.0M15.3 167V167.0M16.4 167V167.0M17.4 167V167.0M18.5 167V167.0M19.6 167V167.0M20.7 167V167.0M21.8 167V167.0M22.9 167V167.0M24.0 167V167.0M25.1 167V167.0M26.2 167V167.0M27.3 167V167.0M28.3 167V167.0M29.4 167V167.0M30.5 167V167.0M31.6 167V167.0M32.7 167V167.0M33.8 167V167.0M34.9 167V167.0M36.0 167V167.0M37.1 167V167.0M38.2 167V167.0M39.2 167V167.0M40.3 167V167.0M41.4 167V167.0M42.5 167V167.0M43.6 167V167.0M44.7 167V167.0M45.8 167V167.0M46.9 167V167.0M48.0 167V167.0M49.1 167V167.0M50.1 167V167.0M51.2 167V167.0M52.3 167V167.0M53.4 167V167.0M54.5 167V167.0M55.6 167V167.0M56.7 167V167.0M57.8 167V167.0M58.9 167V167.0M60.0 167V167.0M61.0 167V167.0M62.1 167V167.0M63.2 167V167.0M64.3 167V167.0M65.4 167V167.0M66.5 167V167.0M67.6 167V167.0M68.7 167V167.0M69.8 167V167.0M70.9 167V167.0M71.9 167V167.0M73.0 167V167.0M74.1 167V167.0M75.2 167V167.0M76.3 167V167.0M77.4 167V167.0M78.5 167V167.0M79.6 167V167.0M80.7 167V167.0M81.8 167V167.0M82.8 167V167.0M83.9 167V167.0M85.0 167V167.0M86.1 167V167.0M87.2 167V167.0M88.3 167V167.0M89.4 167V167.0M90.5 167V167.0M91.6 167V167.0M92.7 167V167.0M93.7 167V167.0M94.8 167V167.0M95.9 167V167.0M97.0 167V167.0M98.1 167V167.0M99.2 167V167.0M100.3 167V167.0M101.4 167V167.0M102.5 167V167.0M103.6 167V167.0M104.6 167V167.0M105.7 167V167.0M106.8 167V167.0M107.9 167V167.0" stroke="#1c1a26" stroke-width="1.14" fill="none"/><rect x="0.5" y="0.5" width="108" height="166" fill="none" stroke="#555" stroke-width="1"/></svg>
<svg class="s" style="left:491px;top:1195px;" width="110" height="169" viewBox="0 0 110 169"><path d="M0.5 0V168.5H110" fill="none" stroke="#555" stroke-width="1"/></svg>
<div class="t" style="left:195.0px;top:1213.4px;font-size:15px;color:#111;">600</div>
<div class="t" style="left:195.0px;top:1260.4px;font-size:15px;color:#111;">400</div>
<div class="t" style="left:195.0px;top:1307.4px;font-size:15px;color:#111;">200</div>
<div class="t" style="left:342.3px;top:1212.4px;font-size:15px;color:#111;">60</div>
<div class="t" style="left:342.3px;top:1260.4px;font-size:15px;color:#111;">40</div>
<div class="t" style="left:342.3px;top:1308.4px;font-size:15px;color:#111;">20</div>
<div class="t" style="left:481.2px;top:1188.3px;font-size:14px;color:#111;">1</div>
<div class="t" style="left:469.5px;top:1220.3px;font-size:14px;color:#111;">0.8</div>
<div class="t" style="left:469.5px;top:1253.3px;font-size:14px;color:#111;">0.6</div>
<div class="t" style="left:469.5px;top:1286.3px;font-size:14px;color:#111;">0.4</div>
<div class="t" style="left:469.5px;top:1319.3px;font-size:14px;color:#111;">0.2</div>
<div class="t" style="left:482.0px;top:1358.9px;font-size:9px;color:#333;">0</div>
<div class="t" style="left:611.2px;top:1190.3px;font-size:14px;color:#111;">1</div>
<div class="t" style="left:599.5px;top:1222.3px;font-size:14px;color:#111;">0.8</div>
<div class="t" style="left:599.5px;top:1255.3px;font-size:14px;color:#111;">0.6</div>
<div class="t" style="left:599.5px;top:1288.3px;font-size:14px;color:#111;">0.4</div>
<div class="t" style="left:599.5px;top:1321.3px;font-size:14px;color:#111;">0.2</div>
<div class="t" style="left:612.0px;top:1360.9px;font-size:9px;color:#333;">0</div>
<div class="t" style="left:219.3px;top:1359.6px;font-size:17px;color:#111;">0</div>
<div class="t" style="left:272.5px;top:1359.6px;font-size:17px;color:#111;">50</div>
<div class="t" style="left:319.8px;top:1359.6px;font-size:17px;color:#111;">100</div>
<div class="t" style="left:250.0px;top:1380.6px;font-size:17px;color:#111;transform:scaleX(1.076);">ISI (ms)</div>
<div class="t" style="left:352.3px;top:1359.6px;font-size:17px;color:#111;">0</div>
<div class="t" style="left:405.5px;top:1359.6px;font-size:17px;color:#111;">50</div>
<div class="t" style="left:452.8px;top:1359.6px;font-size:17px;color:#111;">100</div>
<div class="t" style="left:383.0px;top:1380.6px;font-size:17px;color:#111;transform:scaleX(1.076);">ISI (ms)</div>
<div class="t" style="left:613.3px;top:1359.6px;font-size:17px;color:#111;">0</div>
<div class="t" style="left:666.5px;top:1359.6px;font-size:17px;color:#111;">50</div>
<div class="t" style="left:713.8px;top:1359.6px;font-size:17px;color:#111;">100</div>
<div class="t" style="left:644.0px;top:1380.6px;font-size:17px;color:#111;transform:scaleX(1.076);">ISI (ms)</div>
<div class="t" style="left:254.0px;top:1182.5px;font-size:10.5px;color:#111;transform:scaleX(0.845);">1004 in &lt; 3ms</div>
<div class="t" style="left:393.0px;top:1183.5px;font-size:10.5px;color:#111;transform:scaleX(0.843);">42 in &lt; 3ms</div>
<div class="t" style="left:655.5px;top:1183.5px;font-size:10.5px;color:#111;transform:scaleX(0.841);">1 in &lt; 3ms</div>
<div class="r" style="left:216px;top:1418px;width:66px;height:18px;background:#f1f2f3;"></div>
<div class="r" style="left:216px;top:1438px;width:66px;height:18px;background:#f1f2f3;"></div>
<svg class="s" style="left:221.5px;top:1421px;" width="12" height="12" viewBox="0 0 12 12"><circle cx="6" cy="6" r="5" fill="#d8e8f8" stroke="#333" stroke-width="1.1"/><circle cx="6" cy="6" r="2.2" fill="#111"/></svg>
<svg class="s" style="left:221.5px;top:1441px;" width="12" height="12" viewBox="0 0 12 12"><circle cx="6" cy="6" r="5" fill="#fff" stroke="#333" stroke-width="1.1"/></svg>
<div class="t" style="left:239.5px;top:1420.6px;font-size:11.5px;color:#111;transform:scaleX(0.939);">Accept</div>
<div class="t" style="left:239.5px;top:1440.6px;font-size:11.5px;color:#111;transform:scaleX(0.890);">Reject</div>
<div class="r" style="left:284.6px;top:1413px;width:22px;height:20px;background:#f1f2f3;"></div>
<div class="r" style="left:284.6px;top:1438px;width:22px;height:20px;background:#f1f2f3;"></div>
<div class="t" style="left:289.6px;top:1416.0px;font-size:11px;color:#111;transform:scaleX(0.866);">max</div>
<div class="t" style="left:289.6px;top:1441.0px;font-size:11px;color:#111;transform:scaleX(1.010);">step</div>
<div class="r" style="left:312.1px;top:1413px;width:30px;height:21.5px;background:#fff;border:1.5px solid #333;box-sizing:border-box;"></div><div class="t" style="left:317.9px;top:1417.8px;font-size:11px;color:#222;">100</div>
<div class="r" style="left:312.1px;top:1438px;width:30px;height:21.5px;background:#fff;border:1.5px solid #333;box-sizing:border-box;"></div><div class="t" style="left:324.0px;top:1442.8px;font-size:11px;color:#222;">1</div>
<div class="r" style="left:350px;top:1416px;width:66px;height:18px;background:#f1f2f3;"></div>
<div class="r" style="left:350px;top:1436px;width:66px;height:18px;background:#f1f2f3;"></div>
<svg class="s" style="left:354.5px;top:1419px;" width="12" height="12" viewBox="0 0 12 12"><circle cx="6" cy="6" r="5" fill="#d8e8f8" stroke="#333" stroke-width="1.1"/><circle cx="6" cy="6" r="2.2" fill="#111"/></svg>
<svg class="s" style="left:354.5px;top:1439px;" width="12" height="12" viewBox="0 0 12 12"><circle cx="6" cy="6" r="5" fill="#fff" stroke="#333" stroke-width="1.1"/></svg>
<div class="t" style="left:372.5px;top:1418.6px;font-size:11.5px;color:#111;transform:scaleX(0.939);">Accept</div>
<div class="t" style="left:372.5px;top:1438.6px;font-size:11.5px;color:#111;transform:scaleX(0.890);">Reject</div>
<div class="r" style="left:418.4px;top:1411.5px;width:22px;height:20px;background:#f1f2f3;"></div>
<div class="r" style="left:418.4px;top:1436px;width:22px;height:20px;background:#f1f2f3;"></div>
<div class="t" style="left:423.4px;top:1414.5px;font-size:11px;color:#111;transform:scaleX(0.866);">max</div>
<div class="t" style="left:423.4px;top:1439.0px;font-size:11px;color:#111;transform:scaleX(1.010);">step</div>
<div class="r" style="left:445.9px;top:1411.5px;width:30px;height:21.5px;background:#fff;border:1.5px solid #333;box-sizing:border-box;"></div><div class="t" style="left:451.7px;top:1416.3px;font-size:11px;color:#222;">100</div>
<div class="r" style="left:445.9px;top:1436px;width:30px;height:21.5px;background:#fff;border:1.5px solid #333;box-sizing:border-box;"></div><div class="t" style="left:457.8px;top:1440.8px;font-size:11px;color:#222;">1</div>
<div class="r" style="left:484.4px;top:1415.5px;width:66px;height:18px;background:#f1f2f3;"></div>
<div class="r" style="left:484.4px;top:1435.4px;width:66px;height:18px;background:#f1f2f3;"></div>
<svg class="s" style="left:488.8px;top:1418.5px;" width="12" height="12" viewBox="0 0 12 12"><circle cx="6" cy="6" r="5" fill="#d8e8f8" stroke="#333" stroke-width="1.1"/><circle cx="6" cy="6" r="2.2" fill="#111"/></svg>
<svg class="s" style="left:488.8px;top:1438.4px;" width="12" height="12" viewBox="0 0 12 12"><circle cx="6" cy="6" r="5" fill="#fff" stroke="#333" stroke-width="1.1"/></svg>
<div class="t" style="left:506.8px;top:1418.1px;font-size:11.5px;color:#111;transform:scaleX(0.939);">Accept</div>
<div class="t" style="left:506.8px;top:1438.0px;font-size:11.5px;color:#111;transform:scaleX(0.890);">Reject</div>
<div class="r" style="left:552px;top:1409.5px;width:22px;height:20px;background:#f1f2f3;"></div>
<div class="r" style="left:552px;top:1434.4px;width:22px;height:20px;background:#f1f2f3;"></div>
<div class="t" style="left:557.0px;top:1412.5px;font-size:11px;color:#111;transform:scaleX(0.866);">max</div>
<div class="t" style="left:557.0px;top:1437.4px;font-size:11px;color:#111;transform:scaleX(1.010);">step</div>
<div class="r" style="left:579.5px;top:1409.5px;width:30px;height:21.5px;background:#fff;border:1.5px solid #333;box-sizing:border-box;"></div><div class="t" style="left:585.3px;top:1414.3px;font-size:11px;color:#222;">100</div>
<div class="r" style="left:579.5px;top:1434.4px;width:30px;height:21.5px;background:#fff;border:1.5px solid #333;box-sizing:border-box;"></div><div class="t" style="left:591.4px;top:1439.2px;font-size:11px;color:#222;">1</div>
<div class="r" style="left:620px;top:1406.5px;width:55px;height:24px;background:linear-gradient(#d8eaf8 0,#d8eaf8 45%,#78b4e2 45%,#78b4e2 100%);border:1.5px solid #333;box-sizing:border-box;"></div>
<div class="t" style="left:625.0px;top:1411.7px;font-size:12.5px;color:#111;transform:scaleX(0.853);">FORCED</div>
<div class="r" style="left:620px;top:1434px;width:55px;height:23px;background:linear-gradient(#ececec 0,#ececec 45%,#d0d0d0 45%,#d0d0d0 100%);border:1.5px solid #333;box-sizing:border-box;"></div>
<div class="t" style="left:629.1px;top:1438.4px;font-size:13px;color:#111;">Merge</div>
<div class="r" style="left:682px;top:1408px;width:26px;height:22px;background:#f1f2f3;"></div>
<div class="r" style="left:682px;top:1433px;width:26px;height:22px;background:#f1f2f3;"></div>
<div class="t" style="left:686.0px;top:1413.0px;font-size:11px;color:#111;transform:scaleX(0.866);">max</div>
<div class="t" style="left:686.0px;top:1436.0px;font-size:11px;color:#111;transform:scaleX(1.010);">step</div>
<div class="r" style="left:708.5px;top:1408.5px;width:30.5px;height:21.5px;background:#fff;border:1.5px solid #333;box-sizing:border-box;"></div><div class="t" style="left:714.6px;top:1413.3px;font-size:11px;color:#222;">100</div>
<div class="r" style="left:708.5px;top:1433.5px;width:30.5px;height:21.5px;background:#fff;border:1.5px solid #333;box-sizing:border-box;"></div><div class="t" style="left:720.7px;top:1438.3px;font-size:11px;color:#222;">1</div>
<div class="t" style="left:775.5px;top:718.3px;font-size:35px;color:#000;transform:scaleX(0.899);">d</div>
<div class="r" style="left:807px;top:730px;width:839px;height:714px;background:linear-gradient(#c8d2f2 0,#b9c6ef 20px,#c2cbf0 200px,#aab8ec 300px,#9fb0ea 100%);border:1px solid #59617a;box-sizing:border-box;border-radius:6px 6px 3px 3px;"></div>
<div class="r" style="left:808px;top:731px;width:837px;height:20px;background:linear-gradient(90deg,#dfe5f8 0,#cfd8f4 40%,#bcc8f0 60%,#c6d0f2 100%);border-radius:5px 5px 0 0;"></div>
<svg class="s" style="left:813px;top:737px;" width="11" height="10" viewBox="0 0 11 10"><rect x="0.5" y="0.5" width="10" height="9" fill="#fff" stroke="#777"/><rect x="2" y="3" width="3" height="5" fill="#2a8a4a"/><rect x="5" y="2" width="3" height="3" fill="#3a5ac0"/></svg>
<div class="t" style="left:829.0px;top:735.0px;font-size:10.5px;color:#1a1a1a;transform:scaleX(0.835);">D:/brainstorm_db/Tutorial_e-Phys/data/Floyd/@rawytu288c-01_converted-32/ytu288c-01_converted-32_kilosort_spikes\ytu288c-01_converted-32-1</div>
<div class="r" style="left:1568px;top:731px;width:20px;height:12px;background:linear-gradient(#eef0fa,#c8cfea);border:1px solid #7c80a0;box-sizing:border-box;border-radius:0 0 0 3px;"></div>
<div class="r" style="left:1574px;top:738px;width:8px;height:2px;background:#555;"></div>
<div class="r" style="left:1587px;top:731px;width:20px;height:12px;background:linear-gradient(#eef0fa,#c8cfea);border:1px solid #7c80a0;box-sizing:border-box;"></div>
<div class="r" style="left:1593px;top:734px;width:8px;height:6px;border:1px solid #555;box-sizing:border-box;"></div>
<div class="r" style="left:1606px;top:731px;width:35px;height:12px;background:linear-gradient(#e8897a,#c3382b);border:1px solid #7a2a2a;box-sizing:border-box;border-radius:0 0 3px 0;"></div>
<div class="t" style="left:1620.7px;top:732.0px;font-size:10px;color:#fff;font-weight:bold;">x</div>
<div class="r" style="left:812px;top:750px;width:828px;height:690px;background:#f0f0f0;"></div>
<div class="r" style="left:812px;top:750px;width:828px;height:15px;background:linear-gradient(#f8f9fc,#eceef6);"></div>
<div class="t" style="left:819.0px;top:752.0px;font-size:10px;color:#222;transform:scaleX(0.869);">File</div>
<div class="t" style="left:843.7px;top:752.0px;font-size:10px;color:#222;transform:scaleX(0.870);">Edit</div>
<div class="t" style="left:870.0px;top:752.0px;font-size:10px;color:#222;transform:scaleX(0.884);">Actions</div>
<div class="t" style="left:911.0px;top:752.0px;font-size:10px;color:#222;transform:scaleX(0.857);">Tools</div>
<div class="t" style="left:942.0px;top:752.0px;font-size:10px;color:#222;transform:scaleX(0.817);">Waveforms</div>
<div class="t" style="left:996.7px;top:752.0px;font-size:10px;color:#222;transform:scaleX(0.872);">Correlations</div>
<div class="t" style="left:1055.0px;top:752.0px;font-size:10px;color:#222;transform:scaleX(0.828);">Traces</div>
<div class="t" style="left:1089.6px;top:752.0px;font-size:10px;color:#222;transform:scaleX(0.820);">Displays</div>
<div class="t" style="left:1133.0px;top:752.0px;font-size:10px;color:#222;transform:scaleX(0.858);">Settings</div>
<div class="t" style="left:1175.5px;top:752.0px;font-size:10px;color:#222;transform:scaleX(0.875);">Help</div>
<div class="r" style="left:812px;top:765px;width:828px;height:25px;background:linear-gradient(#fbfbfb,#ececec);border-top:1px solid #e0e0e0;border-bottom:1px solid #d8d8d8;"></div>
<svg class="s" style="left:812px;top:765px;" width="470" height="25" viewBox="0 0 470 25"><defs><radialGradient id="bg1" cx="0.35" cy="0.3"><stop offset="0" stop-color="#c8f0b0"/><stop offset="0.6" stop-color="#3aa028"/><stop offset="1" stop-color="#1a6a10"/></radialGradient><radialGradient id="br1" cx="0.35" cy="0.3"><stop offset="0" stop-color="#ffb0a0"/><stop offset="0.6" stop-color="#e02010"/><stop offset="1" stop-color="#901008"/></radialGradient><radialGradient id="bk1" cx="0.35" cy="0.3"><stop offset="0" stop-color="#f0f0f0"/><stop offset="0.6" stop-color="#808080"/><stop offset="1" stop-color="#303030"/></radialGradient><linearGradient id="cr1"><stop offset="0" stop-color="#c01818"/><stop offset="0.35" stop-color="#ff6a5a"/><stop offset="1" stop-color="#b01010"/></linearGradient><linearGradient id="cg1"><stop offset="0" stop-color="#707070"/><stop offset="0.35" stop-color="#e8e8e8"/><stop offset="1" stop-color="#505050"/></linearGradient></defs><path d="M4.5 5v15M1.5 5v15" stroke="#bbb" stroke-dasharray="1 1.2"/><path d="M15.5 4.5h7l4 4v6h-11z" fill="#fff" stroke="#888"/><rect x="11.5" y="12.5" width="16" height="7" rx="1.5" fill="#7aa8e0" stroke="#4a78b8"/><rect x="35" y="4.5" width="14.5" height="15" rx="1" fill="#262626"/><rect x="37.5" y="5.5" width="9.5" height="5" fill="#b8d4f0"/><rect x="38" y="13.5" width="8.5" height="6" fill="#f4f4f4"/><rect x="39.5" y="15" width="2.5" height="3" fill="#333"/><rect x="60" y="4.5" width="9" height="6" fill="#fff" stroke="#666"/><rect x="57" y="9.5" width="15.5" height="6.5" rx="1" fill="#9a9a9a" stroke="#555"/><rect x="60" y="14.5" width="9" height="5" fill="#fff" stroke="#666"/><path d="M78.5 4v16" stroke="#ddd"/><path d="M86 8.5q9-4 11.5 3t-4.5 7" fill="none" stroke="#e8b418" stroke-width="3.2"/><path d="M82.5 8.5l6-5v10z" fill="#e8b418"/><path d="M119 8.5q-9-4-11.5 3t4.5 7" fill="none" stroke="#c4c4c4" stroke-width="3.2"/><path d="M122.5 8.5l-6-5v10z" fill="#c4c4c4"/><path d="M126.5 3v19" stroke="#d8d8d8"/><path d="M130.5 5v15" stroke="#bbb" stroke-dasharray="1 1.2"/><path d="M140 6.5v11q5.5 3 11 0v-11z" fill="url(#cr1)"/><ellipse cx="145.5" cy="6.5" rx="5.5" ry="2.2" fill="#ff9a8a" stroke="#c02020" stroke-width="0.6"/><path d="M163 6.5v11q5.5 3 11 0v-11z" fill="url(#cg1)"/><ellipse cx="168.5" cy="6.5" rx="5.5" ry="2.2" fill="#eee" stroke="#666" stroke-width="0.6"/><circle cx="191" cy="12" r="7.3" fill="#f2f2f2" stroke="#c8c8c8" stroke-width="1.6"/><path d="M194 9.5a3.5 3.5 0 1 0 0 5" fill="none" stroke="#bdbdbd" stroke-width="1.6"/><rect x="205" y="5" width="16" height="14.5" rx="1.5" fill="#4a4a4a"/><rect x="206.5" y="6.5" width="2.4" height="2.3" fill="#8a8a8a"/><rect x="206.5" y="9.9" width="2.4" height="2.3" fill="#8a8a8a"/><rect x="206.5" y="13.3" width="2.4" height="2.3" fill="#8a8a8a"/><rect x="206.5" y="16.7" width="2.4" height="2.3" fill="#8a8a8a"/><rect x="210.1" y="6.5" width="2.4" height="2.3" fill="#8a8a8a"/><rect x="210.1" y="9.9" width="2.4" height="2.3" fill="#8a8a8a"/><rect x="210.1" y="13.3" width="2.4" height="2.3" fill="#8a8a8a"/><rect x="210.1" y="16.7" width="2.4" height="2.3" fill="#8a8a8a"/><rect x="213.7" y="6.5" width="2.4" height="2.3" fill="#8a8a8a"/><rect x="213.7" y="9.9" width="2.4" height="2.3" fill="#8a8a8a"/><rect x="213.7" y="13.3" width="2.4" height="2.3" fill="#8a8a8a"/><rect x="213.7" y="16.7" width="2.4" height="2.3" fill="#8a8a8a"/><rect x="217.3" y="6.5" width="2.4" height="2.3" fill="#8a8a8a"/><rect x="217.3" y="9.9" width="2.4" height="2.3" fill="#8a8a8a"/><rect x="217.3" y="13.3" width="2.4" height="2.3" fill="#8a8a8a"/><rect x="217.3" y="16.7" width="2.4" height="2.3" fill="#8a8a8a"/><rect x="213.7" y="16.7" width="2.4" height="2.3" fill="#fff"/><circle cx="233.5" cy="12" r="5.6" fill="#8a28c0"/><circle cx="238.5" cy="12" r="5.6" fill="#58a8e8" opacity="0.85"/><path d="M248.5 3v19" stroke="#d8d8d8"/><path d="M252 5v15" stroke="#bbb" stroke-dasharray="1 1.2"/><circle cx="264.5" cy="10.8" r="5.6" fill="#d8eefc" stroke="#4a8ad0" stroke-width="1.5"/><path d="M268.5 15l6 5.5" stroke="#e0a030" stroke-width="2.6" stroke-linecap="round"/><path d="M280.5 4v16" stroke="#d8d8d8"/><circle cx="290.9" cy="15" r="5" fill="url(#bg1)"/><path d="M295.8 8h6M298.8 5v6" stroke="#222" stroke-width="1.3"/><circle cx="313.7" cy="15" r="5" fill="url(#bg1)"/><path d="M316.5 8h4.5M318.7 5.8v4.4M322 8h4.5M324.2 5.8v4.4" stroke="#222" stroke-width="1.2"/><path d="M330.3 4v16" stroke="#d8d8d8"/><circle cx="340.7" cy="15" r="5" fill="url(#br1)"/><path d="M347 4.5l4.5 4.5M351.5 4.5l-4.5 4.5" stroke="#222" stroke-width="1.3"/><circle cx="363.6" cy="15" r="5" fill="url(#bk1)"/><path d="M368 7h6" stroke="#222" stroke-width="1.4"/><path d="M380 4v16" stroke="#d8d8d8"/><circle cx="393.4" cy="12" r="7.3" fill="#f8f8f8" stroke="#cfcfcf" stroke-width="1.5"/><path d="M393.4 7v5l3 2" stroke="#d0d0d0" fill="none"/><path d="M406.5 3v19" stroke="#d8d8d8"/><path d="M410.4 5v15" stroke="#bbb" stroke-dasharray="1 1.2"/><circle cx="424.8" cy="12" r="7" fill="#e4e4e4" stroke="#c4c4c4" stroke-width="1.5"/><path d="M429 12h-7M425 8.5l-3.5 3.5 3.5 3.5" stroke="#fff" stroke-width="2.2" fill="none"/><circle cx="447.4" cy="12" r="7" fill="#e4e4e4" stroke="#c4c4c4" stroke-width="1.5"/><path d="M443.2 12h7M447.2 8.5l3.5 3.5-3.5 3.5" stroke="#fff" stroke-width="2.2" fill="none"/><path d="M459.8 3v19" stroke="#d8d8d8"/><path d="M464 5v15" stroke="#bbb" stroke-dasharray="1 1.2"/></svg>
<div class="r" style="left:1285.5px;top:767.5px;width:58.5px;height:20px;background:#f4f4f4;border:1px solid #a0a0a0;box-sizing:border-box;"></div><div class="t" style="left:1288.8px;top:772.9px;font-size:9px;color:#222;transform:scaleX(0.937);">Features (x,y)</div>
<div class="r" style="left:1423px;top:767.5px;width:51px;height:20px;background:#f4f4f4;border:1px solid #a0a0a0;box-sizing:border-box;"></div><div class="t" style="left:1428.0px;top:772.9px;font-size:9px;color:#222;transform:scaleX(0.908);">Waveforms</div>
<div class="r" style="left:1537px;top:767.5px;width:57px;height:20px;background:#f4f4f4;border:1px solid #a0a0a0;box-sizing:border-box;"></div><div class="t" style="left:1542.0px;top:772.9px;font-size:9px;color:#222;transform:scaleX(0.904);">Bin size (ms)</div>
<div class="r" style="left:1350px;top:769px;width:30px;height:17px;background:#fff;border:1px solid #e2e2e2;box-sizing:border-box;"></div>
<div class="t" style="left:1354.0px;top:773.9px;font-size:9px;color:#222;">1</div>
<div class="r" style="left:1370px;top:770px;width:9px;height:15px;background:#f0f0f0;border:1px solid #ccc;box-sizing:border-box;"></div>
<svg class="s" style="left:1372px;top:772px;" width="6" height="11" viewBox="0 0 6 11"><path d="M0 4l3-3 3 3zM0 7l3 3 3-3z" fill="#6a8ac8"/></svg>
<div class="r" style="left:1387px;top:769px;width:29px;height:17px;background:#fff;border:1px solid #e2e2e2;box-sizing:border-box;"></div>
<div class="t" style="left:1391.0px;top:773.9px;font-size:9px;color:#222;">2</div>
<div class="r" style="left:1406px;top:770px;width:9px;height:15px;background:#f0f0f0;border:1px solid #ccc;box-sizing:border-box;"></div>
<svg class="s" style="left:1408px;top:772px;" width="6" height="11" viewBox="0 0 6 11"><path d="M0 4l3-3 3 3zM0 7l3 3 3-3z" fill="#6a8ac8"/></svg>
<div class="r" style="left:1480px;top:769px;width:50px;height:17px;background:#fff;border:1px solid #e2e2e2;box-sizing:border-box;"></div>
<div class="t" style="left:1484.0px;top:773.9px;font-size:9px;color:#222;">100</div>
<div class="r" style="left:1520px;top:770px;width:9px;height:15px;background:#f0f0f0;border:1px solid #ccc;box-sizing:border-box;"></div>
<svg class="s" style="left:1522px;top:772px;" width="6" height="11" viewBox="0 0 6 11"><path d="M0 4l3-3 3 3zM0 7l3 3 3-3z" fill="#6a8ac8"/></svg>
<div class="r" style="left:1600px;top:769px;width:21px;height:17px;background:#fff;border:1px solid #e2e2e2;box-sizing:border-box;"></div>
<div class="t" style="left:1604.0px;top:773.9px;font-size:9px;color:#222;">1</div>
<div class="t" style="left:1633.0px;top:769.0px;font-size:10px;color:#222;">»</div>
<div class="r" style="left:813px;top:790px;width:108px;height:13px;background:linear-gradient(#f0f0f0,#dedede);border:1px solid #c8c8c8;box-sizing:border-box;"></div>
<div class="t" style="left:814.0px;top:791.4px;font-size:9.5px;color:#333;transform:scaleX(0.784);">The cluster list</div>
<div class="r" style="left:813px;top:804px;width:108px;height:620px;background:#080808;"></div>
<div class="r" style="left:818px;top:808px;width:9px;height:8px;background:#e8e8e8;"></div>
<div class="t" style="left:819.9px;top:818.4px;font-size:9.5px;color:#f4f4f4;">1</div>
<div class="r" style="left:833.0px;top:807.5px;width:12px;height:22px;background:#a2b2ca;border-radius:3px;border:1px solid #b8c8e0;box-sizing:border-box;"></div>
<div class="r" style="left:834.5px;top:808px;width:9px;height:8px;background:#d03040;"></div>
<div class="t" style="left:836.4px;top:818.4px;font-size:9.5px;color:#f4f4f4;">2</div>
<div class="r" style="left:848.5px;top:807.5px;width:12px;height:22px;background:#a2b2ca;border-radius:3px;border:1px solid #b8c8e0;box-sizing:border-box;"></div>
<div class="r" style="left:850px;top:808px;width:9px;height:8px;background:#dcdc3c;"></div>
<div class="t" style="left:851.9px;top:818.4px;font-size:9.5px;color:#f4f4f4;">6</div>
<div class="r" style="left:866px;top:808px;width:9px;height:8px;background:#7c3cc0;"></div>
<div class="t" style="left:867.9px;top:818.4px;font-size:9.5px;color:#f4f4f4;">9</div>
<div class="r" style="left:883px;top:808px;width:9px;height:8px;background:#6040c0;"></div>
<div class="t" style="left:882.2px;top:818.4px;font-size:9.5px;color:#f4f4f4;">14</div>
<div class="r" style="left:900px;top:808px;width:9px;height:8px;background:#6cc020;"></div>
<div class="t" style="left:899.2px;top:818.4px;font-size:9.5px;color:#f4f4f4;">17</div>
<div class="r" style="left:819px;top:833.5px;width:9px;height:8px;background:#4450c0;"></div>
<div class="t" style="left:818.2px;top:842.4px;font-size:9.5px;color:#f4f4f4;">19</div>
<div class="r" style="left:834.5px;top:833.0px;width:12px;height:22px;background:#a2b2ca;border-radius:3px;border:1px solid #b8c8e0;box-sizing:border-box;"></div>
<div class="r" style="left:836px;top:833.5px;width:9px;height:8px;background:#4450c0;"></div>
<div class="t" style="left:835.2px;top:842.4px;font-size:9.5px;color:#f4f4f4;">21</div>
<div class="r" style="left:854px;top:833.5px;width:9px;height:8px;background:#e03a14;"></div>
<div class="t" style="left:853.2px;top:842.4px;font-size:9.5px;color:#f4f4f4;">31</div>
<div class="r" style="left:871px;top:833.5px;width:9px;height:8px;background:#a0d010;"></div>
<div class="t" style="left:870.2px;top:842.4px;font-size:9.5px;color:#f4f4f4;">58</div>
<div class="r" style="left:888.5px;top:833.5px;width:9px;height:8px;background:#90e4d4;"></div>
<div class="t" style="left:887.7px;top:842.4px;font-size:9.5px;color:#f4f4f4;">59</div>
<div class="r" style="left:819px;top:858px;width:9px;height:8px;background:#4450c0;"></div>
<div class="t" style="left:818.2px;top:867.4px;font-size:9.5px;color:#f4f4f4;">60</div>
<div class="r" style="left:836px;top:858px;width:9px;height:8px;background:#d040b0;"></div>
<div class="t" style="left:835.2px;top:867.4px;font-size:9.5px;color:#f4f4f4;">61</div>
<div class="r" style="left:854px;top:858px;width:9px;height:8px;background:#f06010;"></div>
<div class="t" style="left:853.2px;top:867.4px;font-size:9.5px;color:#f4f4f4;">62</div>
<div class="r" style="left:871px;top:858px;width:9px;height:8px;background:#b4e010;"></div>
<div class="t" style="left:870.2px;top:867.4px;font-size:9.5px;color:#f4f4f4;">63</div>
<div class="r" style="left:921px;top:790px;width:719px;height:14px;background:#f0f0f0;"></div>
<div class="r" style="left:925.5px;top:789.5px;width:76px;height:14px;background:#fcfcfc;border:1px solid #c8c8c8;border-bottom:0;box-sizing:border-box;"></div>
<div class="t" style="left:933.0px;top:791.4px;font-size:9.5px;color:#222;transform:scaleX(0.831);">Overview Display</div>
<div class="r" style="left:922px;top:803px;width:718px;height:1px;background:#c8c8c8;"></div>
<div class="r" style="left:923px;top:804px;width:717px;height:620px;background:#e6e6e6;"></div>
<div class="r" style="left:926px;top:805px;width:712px;height:16px;background:linear-gradient(#f4f4f6,#dcdde2);border:1px solid #b8b8c0;box-sizing:border-box;"></div><div class="t" style="left:928.0px;top:808.9px;font-size:9.5px;color:#222;transform:scaleX(0.847);">D:/brainstorm_db/Tutorial_e-Phys/data/Floyd/@rawytu288c-01_converted-32/ytu288c-01_converted-32_kilosort_spikes\ytu288c-01_converted-32-1</div><svg class="s" style="left:1614px;top:807px;" width="22" height="11" viewBox="0 0 22 11"><rect x="2.5" y="3.5" width="6" height="5" fill="none" stroke="#222"/><rect x="4.5" y="1.5" width="6" height="5" fill="#fff" stroke="#222"/><path d="M14 2l6 7M20 2l-6 7" stroke="#111" stroke-width="1.4"/></svg>
<svg class="s" style="left:926px;top:821px;" width="711" height="290" viewBox="0 0 711 290"><rect width="711" height="290" fill="#070707"/><path d="M340.5 0V290M0 158.5H711" stroke="#3a3a3a" stroke-width="1"/><defs><radialGradient id="gb"><stop offset="0" stop-color="#4a50c8"/><stop offset="0.55" stop-color="#4a50c8"/><stop offset="1" stop-color="#4a50c8" stop-opacity="0"/></radialGradient><radialGradient id="gy"><stop offset="0" stop-color="#f8e810"/><stop offset="0.55" stop-color="#f4dc10"/><stop offset="0.8" stop-color="#e8c000" stop-opacity="0.4"/><stop offset="1" stop-color="#e8c000" stop-opacity="0"/></radialGradient><radialGradient id="gr"><stop offset="0" stop-color="#e8601a"/><stop offset="0.4" stop-color="#d8401a" stop-opacity="0.85"/><stop offset="1" stop-color="#c02010" stop-opacity="0"/></radialGradient></defs><ellipse cx="186" cy="160" rx="112" ry="32" fill="url(#gb)" transform="rotate(6 186 160)"/><path d="M203 130.5h1M248 183.5h1M121 142.5h1M173 179.5h1M244 174.5h1M157 149.5h1M232 187.5h1M156 135.5h1M138 171.5h1M211 173.5h1M234 177.5h1M120 163.5h1M159 141.5h1M270 180.5h1M158 112.5h1M244 163.5h1M58 146.5h1M195 170.5h1M107 151.5h1M183 171.5h1M171 196.5h1M199 155.5h1M120 167.5h1M158 135.5h1M241 181.5h1M191 178.5h1M275 163.5h1M195 166.5h1M153 167.5h1M181 145.5h1M235 146.5h1M232 165.5h1M148 166.5h1M137 143.5h1M211 163.5h1M223 162.5h1M185 153.5h1M119 145.5h1M172 120.5h1M183 201.5h1M161 167.5h1M195 147.5h1M145 143.5h1M147 150.5h1M183 175.5h1M260 137.5h1M113 184.5h1M144 156.5h1M162 174.5h1M159 144.5h1M242 176.5h1M126 161.5h1M147 170.5h1M142 161.5h1M110 153.5h1M208 181.5h1M220 145.5h1M175 163.5h1M124 168.5h1M80 183.5h1M212 157.5h1M171 148.5h1M322 181.5h1M98 152.5h1M264 190.5h1M102 158.5h1M123 150.5h1M160 194.5h1M265 163.5h1M256 156.5h1M252 186.5h1M164 140.5h1M181 181.5h1M130 160.5h1M63 155.5h1M176 161.5h1M241 167.5h1M231 194.5h1M236 155.5h1M243 152.5h1M248 160.5h1M265 140.5h1M237 181.5h1M220 194.5h1M155 144.5h1M102 109.5h1M177 200.5h1M197 150.5h1M200 152.5h1M181 156.5h1M129 138.5h1M135 181.5h1M179 144.5h1M178 180.5h1M216 168.5h1M40 180.5h1M202 160.5h1M176 132.5h1M75 116.5h1M257 164.5h1M128 123.5h1M228 181.5h1M188 159.5h1M153 168.5h1M215 179.5h1M155 165.5h1M304 162.5h1M208 188.5h1M181 143.5h1M133 153.5h1M219 138.5h1M242 155.5h1M136 157.5h1M159 193.5h1M100 177.5h1M259 134.5h1M97 136.5h1M249 166.5h1M33 147.5h1M223 180.5h1M192 113.5h1M217 176.5h1M168 160.5h1M226 166.5h1M145 142.5h1M168 181.5h1M120 156.5h1M215 138.5h1M156 110.5h1M257 171.5h1M109 167.5h1M243 187.5h1M140 146.5h1M248 148.5h1M243 149.5h1M226 182.5h1M181 191.5h1M203 147.5h1M211 158.5h1M101 140.5h1M192 158.5h1M293 157.5h1M108 165.5h1M236 168.5h1M163 114.5h1M173 169.5h1M111 135.5h1M119 155.5h1M157 194.5h1M143 171.5h1M205 165.5h1M179 159.5h1M106 129.5h1M238 157.5h1M187 171.5h1M251 167.5h1M187 153.5h1M163 157.5h1M104 163.5h1M264 156.5h1M226 153.5h1M165 179.5h1M137 147.5h1M132 165.5h1M302 182.5h1M167 132.5h1M224 176.5h1M135 169.5h1M73 137.5h1M148 157.5h1M164 117.5h1M269 161.5h1M195 165.5h1M178 187.5h1M173 153.5h1M139 159.5h1M105 168.5h1M98 136.5h1M78 138.5h1M263 168.5h1M178 161.5h1M264 182.5h1M207 142.5h1M121 156.5h1M220 208.5h1M234 144.5h1M231 189.5h1M147 133.5h1M176 167.5h1M120 129.5h1M227 152.5h1M89 142.5h1M186 162.5h1M175 194.5h1M183 146.5h1M221 178.5h1M253 133.5h1M114 175.5h1M116 157.5h1M223 172.5h1M192 163.5h1M175 160.5h1M249 155.5h1M156 166.5h1M196 180.5h1M194 166.5h1M267 203.5h1M89 127.5h1M220 170.5h1M179 148.5h1M220 177.5h1M205 182.5h1M132 157.5h1M144 152.5h1M149 119.5h1M126 141.5h1M154 193.5h1M242 152.5h1M194 174.5h1M137 176.5h1M255 161.5h1M161 182.5h1M165 177.5h1M116 168.5h1M101 168.5h1M23 150.5h1M137 140.5h1M147 130.5h1M157 160.5h1M179 169.5h1M180 133.5h1M229 160.5h1M170 178.5h1M130 135.5h1M120 154.5h1M346 171.5h1M239 180.5h1M194 172.5h1M144 154.5h1M58 149.5h1M142 138.5h1M112 118.5h1M148 143.5h1M185 184.5h1M182 197.5h1M107 165.5h1M151 190.5h1M209 160.5h1M248 162.5h1M239 158.5h1M331 186.5h1M207 182.5h1M90 125.5h1M147 169.5h1M231 208.5h1M266 159.5h1M251 170.5h1M184 130.5h1M264 176.5h1M208 176.5h1M153 172.5h1M139 149.5h1M206 157.5h1M226 136.5h1M242 146.5h1M167 142.5h1M126 159.5h1M244 174.5h1M140 154.5h1M230 151.5h1M119 153.5h1M326 175.5h1M134 129.5h1M209 151.5h1M248 161.5h1M170 170.5h1M257 160.5h1M176 173.5h1M242 167.5h1M223 172.5h1M208 185.5h1M144 154.5h1M187 115.5h1M189 167.5h1M117 171.5h1M136 173.5h1M90 142.5h1M219 158.5h1M143 166.5h1M208 176.5h1M182 178.5h1M260 164.5h1M123 153.5h1M227 188.5h1M269 163.5h1M83 160.5h1M196 177.5h1M168 194.5h1M185 173.5h1M99 132.5h1M194 143.5h1M259 209.5h1M177 157.5h1M179 175.5h1M186 189.5h1M102 112.5h1M202 176.5h1M251 189.5h1M191 141.5h1M122 178.5h1M187 162.5h1M204 179.5h1M227 188.5h1M156 148.5h1M176 173.5h1M230 147.5h1M129 173.5h1M271 160.5h1M200 176.5h1M133 163.5h1M184 152.5h1M97 175.5h1M298 162.5h1M221 138.5h1M164 148.5h1M223 144.5h1M161 142.5h1M233 174.5h1M183 172.5h1M240 162.5h1M277 149.5h1M271 202.5h1M276 206.5h1M206 206.5h1M203 148.5h1M158 148.5h1M155 148.5h1M211 174.5h1M214 139.5h1M142 149.5h1M151 107.5h1M125 158.5h1M108 134.5h1M152 129.5h1M203 156.5h1M215 160.5h1M273 190.5h1M130 153.5h1M253 192.5h1M152 154.5h1M200 167.5h1M223 193.5h1M218 173.5h1M206 177.5h1M188 169.5h1M134 200.5h1M215 164.5h1M145 141.5h1M180 176.5h1M173 163.5h1M179 164.5h1M257 204.5h1M170 161.5h1M193 170.5h1M143 155.5h1M235 160.5h1M193 183.5h1M221 145.5h1M152 179.5h1M258 166.5h1M216 140.5h1M142 148.5h1M129 144.5h1M138 170.5h1M174 140.5h1M187 159.5h1M236 149.5h1M135 166.5h1M240 130.5h1M193 161.5h1M222 181.5h1M180 150.5h1M196 164.5h1M143 169.5h1M179 137.5h1M203 140.5h1M187 174.5h1M152 151.5h1M136 137.5h1M183 140.5h1M313 159.5h1M175 148.5h1M262 165.5h1M217 174.5h1M197 150.5h1M229 169.5h1M127 145.5h1M207 148.5h1M188 127.5h1M171 150.5h1M153 130.5h1M258 176.5h1M172 143.5h1M225 139.5h1M187 163.5h1M192 141.5h1M148 151.5h1M162 155.5h1M121 169.5h1M233 128.5h1M319 167.5h1M278 185.5h1M180 167.5h1M118 133.5h1M236 174.5h1M156 161.5h1M275 159.5h1M355 156.5h1M186 149.5h1M155 141.5h1M98 127.5h1M261 167.5h1M164 135.5h1M98 171.5h1M185 166.5h1M157 192.5h1M138 146.5h1M181 171.5h1M149 152.5h1M274 149.5h1M203 144.5h1M178 156.5h1M208 146.5h1M165 163.5h1M269 155.5h1M318 183.5h1M147 202.5h1M164 147.5h1M235 165.5h1M189 127.5h1M220 148.5h1M201 147.5h1M94 141.5h1M232 167.5h1M95 169.5h1M210 172.5h1M172 175.5h1M350 167.5h1M203 180.5h1M117 159.5h1M183 152.5h1M173 172.5h1M67 140.5h1M65 133.5h1M284 158.5h1M176 162.5h1M230 142.5h1M169 167.5h1M213 165.5h1M226 123.5h1M226 124.5h1M229 121.5h1M217 197.5h1M157 104.5h1M187 139.5h1M199 158.5h1M97 145.5h1M224 171.5h1M11 178.5h1M226 162.5h1M215 169.5h1M161 174.5h1M176 174.5h1M225 179.5h1M297 160.5h1M148 151.5h1M249 165.5h1M196 117.5h1M178 126.5h1M156 143.5h1M121 143.5h1M205 188.5h1M177 160.5h1M155 165.5h1M115 131.5h1M79 131.5h1M170 169.5h1M168 147.5h1M144 161.5h1M251 171.5h1M277 170.5h1M206 201.5h1M131 130.5h1M158 155.5h1M196 145.5h1M245 159.5h1M235 177.5h1M176 161.5h1M172 209.5h1M236 169.5h1M264 199.5h1M170 182.5h1M124 174.5h1M194 162.5h1M233 174.5h1M162 172.5h1M276 180.5h1M213 182.5h1M121 131.5h1M140 140.5h1M185 137.5h1M199 150.5h1M170 169.5h1M154 164.5h1M223 165.5h1M187 158.5h1M184 182.5h1M319 172.5h1M146 185.5h1M138 149.5h1M116 150.5h1M248 183.5h1M185 136.5h1M161 168.5h1M90 171.5h1M118 138.5h1M80 142.5h1M164 133.5h1M142 170.5h1M124 147.5h1M207 138.5h1M183 141.5h1M186 153.5h1M170 144.5h1M234 205.5h1M213 196.5h1M147 137.5h1M209 188.5h1M296 176.5h1M176 175.5h1M198 191.5h1M201 154.5h1M113 149.5h1M115 184.5h1M248 154.5h1M179 178.5h1M120 143.5h1M178 175.5h1M224 189.5h1M192 145.5h1M212 157.5h1M218 146.5h1M202 173.5h1M191 187.5h1M278 157.5h1M129 161.5h1M208 167.5h1M225 169.5h1M143 161.5h1M169 172.5h1M120 168.5h1M190 169.5h1M171 163.5h1M170 150.5h1M234 173.5h1M151 155.5h1M205 157.5h1M88 117.5h1M261 185.5h1M223 163.5h1M174 138.5h1M134 165.5h1M229 140.5h1M138 143.5h1M219 157.5h1M210 159.5h1M165 172.5h1M201 181.5h1M188 179.5h1M248 179.5h1M288 154.5h1M230 159.5h1M225 150.5h1M222 153.5h1M167 165.5h1M141 158.5h1M138 130.5h1M220 181.5h1M103 111.5h1M229 150.5h1M196 159.5h1M284 198.5h1M187 146.5h1M141 134.5h1M168 180.5h1M83 133.5h1M202 179.5h1" stroke="#4a50b8" stroke-width="1"/><ellipse cx="368" cy="151" rx="50" ry="27" fill="url(#gr)" transform="rotate(9 368 151)"/><ellipse cx="430" cy="155" rx="86" ry="29" fill="url(#gy)" transform="rotate(9 430 155)"/><path d="M650 186.5h1M657 240.5h1M570 248.5h1M496 228.5h1M617 199.5h1M583 240.5h1M497 210.5h1M620 176.5h1M554 187.5h1M637 243.5h1M537 189.5h1M613 217.5h1M650 276.5h1M697 235.5h1M490 193.5h1M566 231.5h1M578 277.5h1M593 247.5h1M532 232.5h1M554 196.5h1M505 209.5h1M644 225.5h1M500 216.5h1M668 222.5h1M624 270.5h1M544 190.5h1M473 202.5h1M609 283.5h1M452 198.5h1M452 180.5h1M576 170.5h1M520 213.5h1M481 201.5h1M613 202.5h1M609 234.5h1M589 206.5h1M631 205.5h1M430 171.5h1M586 205.5h1M516 191.5h1M691 221.5h1M558 253.5h1M562 203.5h1M580 275.5h1M585 269.5h1M648 234.5h1M461 269.5h1M560 222.5h1M513 213.5h1M702 221.5h1M611 213.5h1M685 174.5h1M530 284.5h1M525 227.5h1M527 174.5h1M523 264.5h1M551 207.5h1M657 243.5h1M592 232.5h1M637 231.5h1M511 233.5h1M551 249.5h1M630 209.5h1M513 187.5h1M496 288.5h1M526 204.5h1M543 193.5h1M506 227.5h1M570 248.5h1M613 180.5h1M586 180.5h1M565 211.5h1M531 232.5h1M544 279.5h1M588 222.5h1M532 212.5h1M542 249.5h1M556 250.5h1M564 247.5h1M524 216.5h1M611 278.5h1M532 175.5h1M527 223.5h1M569 188.5h1M474 219.5h1M622 195.5h1M579 288.5h1M434 182.5h1M571 189.5h1M594 223.5h1M594 223.5h1M588 228.5h1M569 191.5h1M541 219.5h1M582 244.5h1M485 250.5h1M523 177.5h1M613 233.5h1M589 269.5h1M513 261.5h1M530 195.5h1M612 191.5h1M565 226.5h1M519 209.5h1M561 187.5h1M600 261.5h1M580 205.5h1M518 203.5h1M593 235.5h1M637 186.5h1M587 247.5h1M589 205.5h1M556 221.5h1M470 238.5h1M637 191.5h1M607 236.5h1M499 200.5h1M591 239.5h1M574 179.5h1M493 254.5h1M576 251.5h1M576 267.5h1M676 283.5h1M546 191.5h1M549 244.5h1M584 277.5h1M555 232.5h1M486 232.5h1M514 194.5h1M527 226.5h1M654 241.5h1M451 199.5h1M451 218.5h1M635 215.5h1M476 172.5h1M553 214.5h1M650 260.5h1M494 180.5h1M539 227.5h1M594 238.5h1M562 249.5h1M531 247.5h1M669 202.5h1M607 274.5h1M604 237.5h1M456 217.5h1M581 262.5h1M548 231.5h1M675 187.5h1M569 194.5h1M614 239.5h1M545 239.5h1M434 211.5h1M616 262.5h1M558 255.5h1M536 221.5h1M504 201.5h1M461 188.5h1M442 179.5h1M639 213.5h1M613 193.5h1M616 229.5h1M561 275.5h1M614 279.5h1M515 262.5h1M657 200.5h1M477 177.5h1M562 172.5h1M440 234.5h1M559 208.5h1M531 243.5h1M554 235.5h1M472 205.5h1M503 174.5h1M577 214.5h1M462 191.5h1M618 206.5h1M598 180.5h1M638 175.5h1M513 209.5h1M533 267.5h1M535 234.5h1M548 260.5h1M665 248.5h1M643 258.5h1M586 285.5h1M520 210.5h1M472 197.5h1M651 251.5h1M445 240.5h1M589 238.5h1M556 253.5h1M588 182.5h1M637 258.5h1M632 242.5h1M534 192.5h1M701 248.5h1M624 265.5h1M513 243.5h1M653 181.5h1M655 256.5h1M482 187.5h1M472 284.5h1M594 206.5h1M663 264.5h1M537 260.5h1M495 172.5h1M634 260.5h1M633 202.5h1M584 238.5h1M679 224.5h1M516 250.5h1M623 197.5h1M481 173.5h1M604 279.5h1M498 194.5h1M652 233.5h1M572 227.5h1M612 198.5h1M507 213.5h1M495 232.5h1M595 276.5h1M509 273.5h1M562 214.5h1M498 182.5h1M558 245.5h1M548 229.5h1M577 228.5h1M475 282.5h1M477 267.5h1M612 285.5h1M612 217.5h1M579 219.5h1M503 217.5h1M491 239.5h1M570 185.5h1M594 193.5h1M593 221.5h1M662 204.5h1M601 270.5h1M705 228.5h1M546 181.5h1M461 215.5h1M617 256.5h1M485 213.5h1M568 184.5h1M486 187.5h1M457 224.5h1M551 264.5h1M538 244.5h1M574 242.5h1M581 226.5h1M675 220.5h1M590 264.5h1M582 201.5h1M576 235.5h1M473 208.5h1M657 252.5h1M543 204.5h1M646 249.5h1M567 252.5h1M486 268.5h1M589 235.5h1M449 172.5h1M661 237.5h1M621 188.5h1M542 174.5h1M517 281.5h1M561 205.5h1M539 228.5h1M586 257.5h1M646 194.5h1M524 244.5h1M585 208.5h1M530 219.5h1M524 200.5h1M528 229.5h1M642 213.5h1M606 235.5h1M490 207.5h1M461 217.5h1M521 202.5h1M503 183.5h1M589 220.5h1M644 233.5h1M609 174.5h1M537 192.5h1M622 259.5h1M621 173.5h1M560 213.5h1M607 232.5h1M536 219.5h1M604 246.5h1M631 233.5h1M523 173.5h1M459 213.5h1M475 184.5h1M620 254.5h1M682 177.5h1M606 190.5h1M633 225.5h1M537 233.5h1M561 280.5h1M565 201.5h1M522 200.5h1M491 194.5h1M550 209.5h1M635 240.5h1M529 278.5h1M598 232.5h1M674 217.5h1M580 251.5h1M661 240.5h1M452 227.5h1M660 244.5h1M645 205.5h1M519 223.5h1M617 259.5h1M471 225.5h1M621 249.5h1M580 201.5h1M565 258.5h1M629 204.5h1M462 193.5h1M516 267.5h1M672 253.5h1M628 236.5h1M504 269.5h1M582 260.5h1M534 213.5h1M529 187.5h1M642 210.5h1M563 260.5h1M563 239.5h1M694 194.5h1M420 191.5h1M675 178.5h1M608 242.5h1M551 273.5h1M707 254.5h1M601 201.5h1M508 211.5h1M522 211.5h1M590 197.5h1M498 236.5h1M601 236.5h1M501 265.5h1M505 214.5h1M486 215.5h1M544 263.5h1M579 230.5h1M538 190.5h1M563 177.5h1M585 213.5h1M645 255.5h1M561 227.5h1M488 224.5h1M605 284.5h1M525 178.5h1M690 275.5h1M579 263.5h1M437 213.5h1M672 221.5h1M500 230.5h1M509 282.5h1M543 220.5h1M510 217.5h1M547 216.5h1M598 131.5h1M519 150.5h1M584 166.5h1M546 156.5h1M452 171.5h1M663 157.5h1M510 156.5h1M473 164.5h1M633 185.5h1M558 147.5h1M585 151.5h1M596 167.5h1M547 164.5h1M621 134.5h1M603 159.5h1M517 149.5h1M488 166.5h1M564 150.5h1M452 152.5h1M517 127.5h1M608 163.5h1M581 169.5h1M494 162.5h1M441 141.5h1M516 146.5h1M667 169.5h1M532 176.5h1M602 179.5h1M577 180.5h1M575 141.5h1M551 186.5h1M572 158.5h1M592 137.5h1M581 143.5h1M591 170.5h1M528 140.5h1M571 161.5h1M631 176.5h1M582 160.5h1M574 162.5h1M639 175.5h1M660 157.5h1M569 172.5h1M625 184.5h1M548 169.5h1M598 179.5h1M465 132.5h1M598 147.5h1M553 157.5h1M571 153.5h1M589 143.5h1M631 145.5h1M527 172.5h1M551 151.5h1M697 160.5h1M646 174.5h1M589 175.5h1M532 148.5h1M537 177.5h1M557 158.5h1M574 180.5h1M491 148.5h1M572 192.5h1M539 156.5h1M597 186.5h1M495 162.5h1M527 174.5h1M550 202.5h1M480 153.5h1M558 169.5h1M589 152.5h1M514 150.5h1M504 160.5h1M567 159.5h1M587 167.5h1M481 152.5h1M517 159.5h1M647 141.5h1M680 151.5h1M617 143.5h1M594 157.5h1M623 180.5h1M624 154.5h1M486 154.5h1M537 145.5h1M585 165.5h1M535 162.5h1M629 167.5h1M612 155.5h1M578 142.5h1M493 166.5h1M587 159.5h1M519 155.5h1M482 147.5h1M540 169.5h1M553 162.5h1M538 152.5h1M585 168.5h1M459 146.5h1M596 151.5h1M501 191.5h1M586 154.5h1M600 170.5h1M574 146.5h1M559 160.5h1M550 164.5h1M555 162.5h1M588 174.5h1M479 182.5h1M525 160.5h1M582 172.5h1M574 151.5h1M618 153.5h1M599 173.5h1M548 195.5h1M537 187.5h1M459 154.5h1M617 156.5h1M594 156.5h1M615 178.5h1M535 157.5h1M519 159.5h1M519 193.5h1M646 156.5h1M578 168.5h1M560 142.5h1M512 162.5h1M598 155.5h1M538 163.5h1M629 149.5h1M611 180.5h1M617 155.5h1M533 143.5h1M595 130.5h1M596 162.5h1M585 164.5h1M615 172.5h1M651 184.5h1M535 178.5h1M626 165.5h1M492 192.5h1M514 143.5h1M580 167.5h1M578 142.5h1M561 154.5h1M520 142.5h1M579 139.5h1M563 171.5h1M435 155.5h1M521 156.5h1M575 158.5h1M526 137.5h1M600 161.5h1M610 136.5h1M588 146.5h1M593 186.5h1M412 173.5h1M583 162.5h1M461 169.5h1M517 157.5h1M513 160.5h1M611 155.5h1M557 179.5h1M458 169.5h1M669 171.5h1M547 173.5h1M572 154.5h1M488 163.5h1M531 157.5h1M544 142.5h1M552 154.5h1M643 156.5h1M490 156.5h1M535 171.5h1M469 163.5h1M565 161.5h1M604 136.5h1M626 168.5h1M521 169.5h1M541 143.5h1M516 206.5h1M541 151.5h1M552 156.5h1M531 165.5h1M630 168.5h1M577 152.5h1M561 145.5h1M544 155.5h1M491 173.5h1M591 166.5h1M543 134.5h1M532 139.5h1M482 177.5h1M527 170.5h1M580 175.5h1M528 170.5h1M537 132.5h1M550 168.5h1M592 159.5h1M538 154.5h1M399 177.5h1M511 140.5h1M547 137.5h1M490 137.5h1M565 156.5h1M540 168.5h1M559 164.5h1M605 170.5h1M618 158.5h1M666 166.5h1M495 152.5h1M554 160.5h1M608 165.5h1M567 159.5h1M547 162.5h1M546 152.5h1M562 166.5h1M612 160.5h1M540 154.5h1M677 153.5h1M606 151.5h1M527 179.5h1M589 183.5h1M588 155.5h1M476 163.5h1M550 155.5h1M604 162.5h1M625 192.5h1M415 142.5h1M556 174.5h1M608 144.5h1M524 156.5h1M682 190.5h1M567 181.5h1M532 146.5h1M498 135.5h1M641 170.5h1M525 153.5h1M470 167.5h1M684 155.5h1M550 171.5h1M637 162.5h1M466 156.5h1M563 152.5h1M503 164.5h1M536 177.5h1M598 181.5h1M704 172.5h1M511 141.5h1M565 145.5h1M476 159.5h1M654 143.5h1M499 164.5h1M595 182.5h1M509 165.5h1M578 180.5h1M531 161.5h1M562 173.5h1M412 135.5h1M496 166.5h1M303 34.5h1M456 64.5h1M340 9.5h1M393 40.5h1M296 66.5h1M195 59.5h1M537 81.5h1M463 42.5h1M133 127.5h1M283 43.5h1M470 97.5h1M552 142.5h1M140 110.5h1M482 83.5h1M263 50.5h1M153 105.5h1M240 29.5h1M391 16.5h1M171 98.5h1M192 85.5h1M209 79.5h1M150 115.5h1M301 39.5h1M289 20.5h1M508 108.5h1M320 17.5h1M439 36.5h1M477 60.5h1M453 42.5h1M318 41.5h1M468 25.5h1M509 78.5h1M413 27.5h1M278 43.5h1M428 53.5h1M203 68.5h1M412 36.5h1M500 47.5h1M301 46.5h1M263 55.5h1M451 66.5h1M447 31.5h1M460 57.5h1M262 45.5h1M543 99.5h1M537 115.5h1M204 62.5h1M431 9.5h1M237 72.5h1M532 94.5h1M513 103.5h1M162 88.5h1M327 42.5h1M374 7.5h1M307 26.5h1M382 35.5h1M198 51.5h1M476 74.5h1M203 68.5h1M215 79.5h1M431 27.5h1M408 42.5h1M392 11.5h1M152 95.5h1M207 87.5h1M343 53.5h1M292 28.5h1M171 95.5h1M462 28.5h1M264 57.5h1M508 90.5h1M313 17.5h1M282 25.5h1M144 122.5h1M428 22.5h1M501 76.5h1M517 107.5h1M355 39.5h1M200 72.5h1M316 26.5h1M517 90.5h1M259 56.5h1M315 29.5h1M549 117.5h1M169 101.5h1M317 24.5h1M474 81.5h1M491 93.5h1M363 12.5h1M355 21.5h1M161 85.5h1M142 125.5h1M156 106.5h1M179 81.5h1M191 74.5h1M535 118.5h1M229 33.5h1M284 16.5h1M291 7.5h1M205 63.5h1M396 34.5h1M179 81.5h1M427 57.5h1M247 73.5h1M530 104.5h1M506 98.5h1M234 38.5h1M449 57.5h1M390 26.5h1M166 99.5h1M372 8.5h1M509 62.5h1M378 58.5h1M135 88.5h1M427 67.5h1M296 43.5h1M486 79.5h1M298 49.5h1M261 25.5h1M327 34.5h1M271 52.5h1M388 45.5h1M368 33.5h1M467 39.5h1M471 69.5h1M165 97.5h1M531 105.5h1M204 48.5h1M177 80.5h1M490 69.5h1M408 50.5h1M363 20.5h1M400 18.5h1M438 68.5h1M359 50.5h1M185 85.5h1M204 64.5h1M540 100.5h1M417 15.5h1M215 69.5h1M552 117.5h1M525 102.5h1M264 42.5h1M414 42.5h1M191 61.5h1M316 40.5h1M490 54.5h1M410 65.5h1M259 52.5h1M478 19.5h1M530 114.5h1M223 41.5h1M440 68.5h1M154 118.5h1M427 57.5h1M271 48.5h1M308 13.5h1M206 68.5h1M541 111.5h1" stroke="#8c7e16" stroke-width="1"/><path d="M382 153.5h1M397 151.5h1M274 123.5h1M355 140.5h1M407 144.5h1M433 127.5h1M302 135.5h1M366 141.5h1M395 163.5h1M378 144.5h1M392 141.5h1M346 117.5h1M335 180.5h1M332 145.5h1M401 125.5h1M384 137.5h1M402 164.5h1M353 125.5h1M419 189.5h1M396 106.5h1M358 147.5h1M412 161.5h1M313 177.5h1M414 167.5h1M293 164.5h1M351 135.5h1M420 155.5h1M470 137.5h1M374 149.5h1M323 167.5h1M371 161.5h1M454 123.5h1M374 156.5h1M391 131.5h1M386 111.5h1M390 142.5h1M425 139.5h1M349 145.5h1M402 121.5h1M420 147.5h1M339 147.5h1M335 139.5h1M395 143.5h1M314 140.5h1M405 146.5h1M447 201.5h1M359 149.5h1M315 147.5h1M356 130.5h1M414 163.5h1M389 165.5h1M419 127.5h1M393 140.5h1M389 135.5h1M321 140.5h1M360 166.5h1M389 117.5h1M358 167.5h1M407 154.5h1M385 134.5h1M359 162.5h1M425 143.5h1M334 167.5h1M403 161.5h1M343 159.5h1M412 132.5h1M345 140.5h1M360 141.5h1M389 165.5h1M378 124.5h1M320 167.5h1M334 158.5h1M340 167.5h1M344 150.5h1M347 103.5h1M475 162.5h1M417 105.5h1M351 157.5h1M291 141.5h1M389 193.5h1M375 124.5h1M323 98.5h1M307 125.5h1M413 138.5h1M298 124.5h1M385 185.5h1M313 160.5h1M377 168.5h1M356 155.5h1M383 151.5h1M349 121.5h1M283 169.5h1M414 145.5h1M349 162.5h1M362 191.5h1M403 127.5h1M340 178.5h1M348 145.5h1M358 188.5h1M321 167.5h1M311 112.5h1M329 136.5h1M326 124.5h1M396 205.5h1M335 133.5h1M372 170.5h1M366 147.5h1M333 153.5h1M403 154.5h1M404 153.5h1M391 180.5h1M372 171.5h1M343 119.5h1M348 137.5h1M379 164.5h1M438 193.5h1M350 168.5h1M410 191.5h1M404 176.5h1M409 183.5h1M418 149.5h1M388 167.5h1M396 148.5h1M411 173.5h1M368 203.5h1M330 101.5h1M286 161.5h1M361 168.5h1M290 140.5h1M393 143.5h1M386 147.5h1M346 172.5h1M434 162.5h1M378 115.5h1M384 115.5h1M287 120.5h1M383 137.5h1M362 159.5h1M381 144.5h1M402 177.5h1M343 129.5h1M358 162.5h1M393 180.5h1M338 136.5h1M403 171.5h1M331 131.5h1M405 136.5h1M337 168.5h1M362 129.5h1M396 123.5h1M372 144.5h1M349 133.5h1M360 147.5h1M333 161.5h1M344 139.5h1M378 153.5h1M364 110.5h1M384 131.5h1M326 182.5h1M325 164.5h1M319 111.5h1M421 130.5h1M336 145.5h1M352 156.5h1M378 143.5h1M362 147.5h1M405 146.5h1M351 182.5h1M362 156.5h1M373 168.5h1M460 172.5h1M392 109.5h1M395 137.5h1M347 155.5h1M387 133.5h1M367 176.5h1M377 138.5h1M405 152.5h1M308 140.5h1M412 174.5h1M340 157.5h1M368 166.5h1M338 119.5h1M376 186.5h1M362 154.5h1M361 154.5h1M377 167.5h1M326 172.5h1M311 163.5h1M428 131.5h1M385 130.5h1M320 170.5h1M425 168.5h1M375 148.5h1M435 204.5h1M314 129.5h1M335 189.5h1M402 162.5h1M387 202.5h1M308 128.5h1M397 161.5h1M370 162.5h1M391 170.5h1M368 177.5h1M368 161.5h1M350 126.5h1M387 153.5h1M370 147.5h1M358 130.5h1M375 163.5h1M407 167.5h1M361 144.5h1M344 141.5h1M383 138.5h1M333 134.5h1M330 134.5h1M372 149.5h1M365 157.5h1M408 162.5h1M348 134.5h1M294 25.5h1M555 106.5h1M390 28.5h1M271 28.5h1M428 58.5h1M186 96.5h1M371 33.5h1M180 57.5h1M411 29.5h1M520 91.5h1M389 23.5h1M416 24.5h1M218 86.5h1M401 38.5h1M256 46.5h1M322 31.5h1M376 42.5h1M274 40.5h1M228 58.5h1M421 16.5h1M484 74.5h1M504 78.5h1M470 50.5h1M164 111.5h1M198 78.5h1M270 31.5h1M382 26.5h1M230 46.5h1M410 28.5h1M459 51.5h1M245 54.5h1M239 40.5h1M506 81.5h1M518 91.5h1M294 32.5h1M517 79.5h1M313 42.5h1M504 93.5h1M159 110.5h1M417 42.5h1M490 89.5h1M492 74.5h1M237 60.5h1M198 73.5h1M558 112.5h1M444 36.5h1M269 52.5h1M535 133.5h1M443 43.5h1M359 48.5h1M298 41.5h1M364 12.5h1M241 67.5h1M254 53.5h1M305 47.5h1M185 99.5h1M282 76.5h1M282 25.5h1M550 146.5h1M406 37.5h1M224 76.5h1M547 114.5h1M366 23.5h1M289 37.5h1M458 52.5h1M307 61.5h1M549 118.5h1" stroke="#8a3014" stroke-width="1"/></svg>
<div class="r" style="left:926px;top:1115px;width:361px;height:15px;background:linear-gradient(#f4f4f6,#dcdde2);border:1px solid #b8b8c0;box-sizing:border-box;"></div><div class="t" style="left:928.0px;top:1117.9px;font-size:9.5px;color:#222;transform:scaleX(0.853);">D:/brainstorm_db/Tutorial_e-Phys/data/Floyd/@rawytu288c-01_converted-32/ytu288c-01_...</div><svg class="s" style="left:1263px;top:1117px;" width="22" height="11" viewBox="0 0 22 11"><rect x="2.5" y="3.5" width="6" height="5" fill="none" stroke="#222"/><rect x="4.5" y="1.5" width="6" height="5" fill="#fff" stroke="#222"/><path d="M14 2l6 7M20 2l-6 7" stroke="#111" stroke-width="1.4"/></svg>
<svg class="s" style="left:926px;top:1130px;" width="361" height="292" viewBox="0 0 361 292"><rect width="361" height="292" fill="#070707"/><path d="M1 2.5L6 2.5L11 3.3L16 2.0L20 2.9L25 2.0L30 3.5L35 6.2L40 10.5L45 10.2L50 6.9L54 2.9L59 2.7L64 3.1L69 2.4L74 2.8L79 3.3L84 3.0L89 2.8L93 4.0L98 3.0L103 2.7L108 3.1M1 11.8L6 12.0L11 12.0L16 12.2L20 11.8L25 12.3L30 13.3L35 13.2L40 14.9L45 17.1L50 14.2L54 11.9L59 11.7L64 12.7L69 11.8L74 13.0L79 11.8L84 11.9L89 12.4L93 12.1L98 12.2L103 12.4L108 12.2M1 21.7L6 21.1L11 20.8L16 21.4L20 21.3L25 20.6L30 20.8L35 21.5L40 21.0L45 20.9L50 21.1L54 21.0L59 21.0L64 20.2L69 21.8L74 21.1L79 20.6L84 21.5L89 21.2L93 21.0L98 21.5L103 22.1L108 21.3M1 30.8L6 30.4L11 29.9L16 29.7L20 30.5L25 30.1L30 29.8L35 30.1L40 29.3L45 30.1L50 30.0L54 30.2L59 30.0L64 29.7L69 30.6L74 30.4L79 29.9L84 30.6L89 29.8L93 29.9L98 30.4L103 30.1L108 30.2M1 39.1L6 39.6L11 39.6L16 39.7L20 38.9L25 39.1L30 38.9L35 38.8L40 39.2L45 39.3L50 38.8L54 37.4L59 39.6L64 39.8L69 38.1L74 38.6L79 39.2L84 39.0L89 38.6L93 39.0L98 39.5L103 39.3L108 39.4M1 48.7L6 47.9L11 47.7L16 48.1L20 48.4L25 48.3L30 48.3L35 47.2L40 47.6L45 48.7L50 48.2L54 47.4L59 47.7L64 47.4L69 47.6L74 48.6L79 48.0L84 48.6L89 48.2L93 47.4L98 47.8L103 49.1L108 47.8M1 56.9L6 57.4L11 57.9L16 58.1L20 57.3L25 57.5L30 57.3L35 56.8L40 57.7L45 57.4L50 56.6L54 57.4L59 57.6L64 56.9L69 57.5L74 57.0L79 56.3L84 56.8L89 56.9L93 58.6L98 57.3L103 57.7L108 56.9M1 65.9L6 66.4L11 66.8L16 67.4L20 66.0L25 66.6L30 67.0L35 67.0L40 66.9L45 65.6L50 66.2L54 65.8L59 66.4L64 66.0L69 66.0L74 66.3L79 66.8L84 65.8L89 66.4L93 67.0L98 65.9L103 66.6L108 65.6M1 75.7L6 75.0L11 75.0L16 75.5L20 74.1L25 75.1L30 75.0L35 75.6L40 75.5L45 75.5L50 74.6L54 74.9L59 74.9L64 75.2L69 74.8L74 75.5L79 75.2L84 75.4L89 75.9L93 75.6L98 74.9L103 74.8L108 74.7M1 85.1L6 83.8L11 85.0L16 83.7L20 84.0L25 84.7L30 84.1L35 83.5L40 84.3L45 83.5L50 84.8L54 84.5L59 84.7L64 84.2L69 83.8L74 84.2L79 84.3L84 84.5L89 84.0L93 84.4L98 84.1L103 84.8L108 84.3M1 93.2L6 93.3L11 93.5L16 93.5L20 92.6L25 93.3L30 93.2L35 93.7L40 93.7L45 93.3L50 93.6L54 92.6L59 93.1L64 93.7L69 93.7L74 93.2L79 93.8L84 92.5L89 93.3L93 93.2L98 93.5L103 93.5L108 93.0M1 101.6L6 102.6L11 102.3L16 101.9L20 101.5L25 102.2L30 102.2L35 101.6L40 102.0L45 102.8L50 102.6L54 102.4L59 102.7L64 102.4L69 101.7L74 101.8L79 101.2L84 101.7L89 101.5L93 102.5L98 101.8L103 101.9L108 101.6M1 110.5L6 111.4L11 111.2L16 111.3L20 111.3L25 110.7L30 110.9L35 110.8L40 111.1L45 111.5L50 110.9L54 110.4L59 111.8L64 111.1L69 110.7L74 111.5L79 111.9L84 111.5L89 111.2L93 111.4L98 112.2L103 111.7L108 111.0" stroke="#e8301c" stroke-width="3.1" fill="none" stroke-linejoin="round"/><path d="M1 120.2L6 120.2L11 120.6L16 120.5L20 120.4L25 120.3L30 119.6L35 119.9L40 120.4L45 120.1L50 119.9L54 120.4L59 119.8L64 120.0L69 120.7L74 120.1L79 120.9L84 120.5L89 120.6L93 120.8L98 119.3L103 120.2L108 119.7M1 129.1L6 129.0L11 129.2L16 129.3L20 128.7L25 129.5L30 129.5L35 128.8L40 129.8L45 129.6L50 129.9L54 129.2L59 129.1L64 129.2L69 129.1L74 129.7L79 129.7L84 129.3L89 130.2L93 128.9L98 129.3L103 129.3L108 129.2M1 138.5L6 138.4L11 138.9L16 138.1L20 138.3L25 138.5L30 139.0L35 138.2L40 138.4L45 138.1L50 138.0L54 138.0L59 138.3L64 138.7L69 138.0L74 138.0L79 138.1L84 138.5L89 138.6L93 137.7L98 138.5L103 137.8L108 138.6M1 146.9L6 146.7L11 147.0L16 147.2L20 147.4L25 147.6L30 147.4L35 148.2L40 147.6L45 146.6L50 147.4L54 147.8L59 147.3L64 147.8L69 146.9L74 146.9L79 147.5L84 147.5L89 147.5L93 147.6L98 147.7L103 146.6L108 147.9M1 156.0L6 156.0L11 156.4L16 156.5L20 156.3L25 156.2L30 155.8L35 156.0L40 155.8L45 156.9L50 156.0L54 156.2L59 156.1L64 156.2L69 156.5L74 156.8L79 156.3L84 156.4L89 156.1L93 156.4L98 156.5L103 155.8L108 155.9M1 164.9L6 165.5L11 165.2L16 165.1L20 166.2L25 165.5L30 165.7L35 164.9L40 166.0L45 165.1L50 165.4L54 166.2L59 165.8L64 165.6L69 165.1L74 164.8L79 164.6L84 165.4L89 166.2L93 165.6L98 164.8L103 165.6L108 166.1M1 174.1L6 174.3L11 175.1L16 174.4L20 174.0L25 173.5L30 175.0L35 174.4L40 174.7L45 174.8L50 174.4L54 174.0L59 174.2L64 174.5L69 173.9L74 174.3L79 174.1L84 173.6L89 175.0L93 174.2L98 174.3L103 174.9L108 174.4M1 184.1L6 184.1L11 182.8L16 184.1L20 183.7L25 182.8L30 183.9L35 183.8L40 183.4L45 183.6L50 183.3L54 183.6L59 183.4L64 183.1L69 182.7L74 183.5L79 183.4L84 183.2L89 183.5L93 183.6L98 182.9L103 183.2L108 183.7M1 192.7L6 193.0L11 192.5L16 192.8L20 191.8L25 192.9L30 192.7L35 192.8L40 193.0L45 191.4L50 192.8L54 192.5L59 192.2L64 192.0L69 193.3L74 192.0L79 192.5L84 191.7L89 192.7L93 192.9L98 192.2L103 193.0L108 192.3M1 202.0L6 201.7L11 200.8L16 201.6L20 201.4L25 201.0L30 201.5L35 201.6L40 201.7L45 201.3L50 201.6L54 200.8L59 201.9L64 201.2L69 202.4L74 201.7L79 200.7L84 200.9L89 201.5L93 201.2L98 201.4L103 201.7L108 202.1M1 210.8L6 210.5L11 210.4L16 210.5L20 210.2L25 210.4L30 210.6L35 210.6L40 209.8L45 211.2L50 209.6L54 209.4L59 211.1L64 211.5L69 210.6L74 210.5L79 210.6L84 211.4L89 211.1L93 210.3L98 210.9L103 210.8L108 209.5M1 219.0L6 219.3L11 219.7L16 219.6L20 219.0L25 220.1L30 218.4L35 220.0L40 219.3L45 219.1L50 219.5L54 218.9L59 219.7L64 220.1L69 219.3L74 219.8L79 220.0L84 218.7L89 219.0L93 218.3L98 219.5L103 219.7L108 219.3M1 229.3L6 229.5L11 229.0L16 228.9L20 228.7L25 228.8L30 229.1L35 227.9L40 228.2L45 228.1L50 228.1L54 228.2L59 228.7L64 227.9L69 228.6L74 228.5L79 229.0L84 229.3L89 229.0L93 228.3L98 228.9L103 228.7L108 228.8M1 237.1L6 237.3L11 237.4L16 237.7L20 237.6L25 237.1L30 238.5L35 238.0L40 237.9L45 237.9L50 237.8L54 237.6L59 237.1L64 237.6L69 238.3L74 237.0L79 236.9L84 237.0L89 237.5L93 237.5L98 237.4L103 237.3L108 237.3M1 246.9L6 246.1L11 246.3L16 246.2L20 247.2L25 246.9L30 247.4L35 246.0L40 246.4L45 247.2L50 245.9L54 246.0L59 247.2L64 246.7L69 246.9L74 247.0L79 247.4L84 247.3L89 246.5L93 246.6L98 247.6L103 246.5L108 246.6M1 255.8L6 255.5L11 256.0L16 255.6L20 255.2L25 256.2L30 254.5L35 255.6L40 255.5L45 255.5L50 256.2L54 254.0L59 255.6L64 255.3L69 255.4L74 255.8L79 256.1L84 255.2L89 255.6L93 255.4L98 255.9L103 255.9L108 255.7M1 264.5L6 264.8L11 265.9L16 264.5L20 265.3L25 265.3L30 265.5L35 264.1L40 264.4L45 264.9L50 265.4L54 264.8L59 264.3L64 264.4L69 264.6L74 265.3L79 265.0L84 265.1L89 265.2L93 265.2L98 264.7L103 265.5L108 264.3M1 273.1L6 273.3L11 273.4L16 273.0L20 273.9L25 273.9L30 272.8L35 272.7L40 274.0L45 274.4L50 273.7L54 273.8L59 274.0L64 273.5L69 273.9L74 273.7L79 273.4L84 273.3L89 273.9L93 273.7L98 273.8L103 273.6L108 273.6M1 282.7L6 281.9L11 283.2L16 282.9L20 283.1L25 282.7L30 283.0L35 283.1L40 282.6L45 282.1L50 282.4L54 283.1L59 282.4L64 282.7L69 282.2L74 283.1L79 283.4L84 282.7L89 282.8L93 282.7L98 282.4L103 282.3L108 282.7" stroke="#e8301c" stroke-width="2.1" fill="none" stroke-linejoin="round"/><path d="M1 32.7L9 32.0L16 34.9L24 32.9L32 31.1L39 31.8L47 32.2L54 33.4L62 32.6L70 31.1L77 31.8L85 32.2L93 32.3L100 31.9L108 30.2M1 49.0L9 49.7L16 50.8L24 49.8L32 51.2L39 49.7L47 49.3L54 50.0L62 51.0L70 51.0L77 49.7L85 50.6L93 49.8L100 50.8L108 49.3M1 114.2L9 113.1L16 112.9L24 113.6L32 112.7L39 111.7L47 111.3L54 113.1L62 112.7L70 112.6L77 115.4L85 114.0L93 114.3L100 112.7L108 113.5M1 150.7L9 150.5L16 149.3L24 147.8L32 151.4L39 149.8L47 148.4L54 150.7L62 149.2L70 149.6L77 150.4L85 149.5L93 149.7L100 148.8L108 149.5M1 165.6L9 167.6L16 168.0L24 168.9L32 166.6L39 169.8L47 168.9L54 167.6L62 167.7L70 167.2L77 166.0L85 166.5L93 167.7L100 165.8L108 168.2M1 185.0L9 184.7L16 187.0L24 186.1L32 185.2L39 185.3L47 185.9L54 185.6L62 184.2L70 186.9L77 186.7L85 185.0L93 185.5L100 186.5L108 184.8M1 194.2L9 193.8L16 196.6L24 194.4L32 194.6L39 196.0L47 193.7L54 195.3L62 195.0L70 196.2L77 194.0L85 195.6L93 194.6L100 192.7L108 193.2M1 199.5L9 199.2L16 198.8L24 198.2L32 198.3L39 199.3L47 198.0L54 199.0L62 197.8L70 200.0L77 197.4L85 198.3L93 199.1L100 199.3L108 200.1M1 263.2L9 264.3L16 263.8L24 262.7L32 263.9L39 262.2L47 263.2L54 261.6L62 263.2L70 262.7L77 262.7L85 261.4L93 264.1L100 260.8L108 261.8M1 3L5 6L10 7L14 3L18 12L23 1L27 5L31 7L36 1L40 7L44 11L49 7L53 2L58 4L62 3L66 6L71 12M1 2L5 3L10 8L14 3L18 3L23 7L27 1L31 3L36 8L40 6L44 10L49 1L53 1L58 2L62 12L66 6L71 7M1 7L5 11L10 3L14 4L18 3L23 4L27 6L31 11L36 3L40 1L44 8L49 2L53 3L58 3L62 3L66 11L71 9M1 4L5 3L10 8L14 9L18 12L23 10L27 8L31 4L36 10L40 6L44 3L49 9L53 7L58 2L62 4L66 5L71 10M1 4L5 7L10 9L14 8L18 2L23 12L27 2L31 1L36 3L40 6L44 2L49 2L53 3L58 8L62 1L66 4L71 7" stroke="#e8301c" stroke-width="0.9" fill="none"/><path d="M127 3.4L132 2.1L137 4.4L142 2.9L146 3.1L151 3.1L156 3.1L161 3.6L166 3.4L171 3.4L176 2.9L180 2.8L185 3.0L190 2.1L195 3.5L200 2.4L205 2.8L210 2.8L215 2.6L219 2.9L224 3.1L229 2.8L234 3.2M127 12.8L132 11.8L137 12.0L142 13.0L146 12.4L151 11.5L156 12.1L161 12.5L166 11.7L171 11.7L176 12.0L180 12.0L185 11.7L190 11.3L195 12.2L200 11.8L205 11.9L210 12.2L215 12.7L219 12.0L224 11.8L229 12.3L234 12.0M127 20.8L132 21.5L137 20.3L142 20.4L146 21.0L151 20.9L156 20.9L161 20.9L166 21.6L171 20.9L176 21.5L180 21.1L185 20.7L190 21.4L195 22.1L200 21.5L205 21.1L210 21.7L215 22.0L219 20.7L224 21.2L229 21.3L234 20.5M127 29.9L132 30.1L137 30.9L142 29.8L146 29.7L151 29.9L156 29.8L161 30.1L166 30.1L171 29.7L176 29.6L180 30.0L185 29.5L190 29.7L195 30.2L200 30.0L205 29.6L210 29.4L215 29.6L219 29.4L224 30.3L229 30.4L234 30.2M127 39.2L132 39.2L137 39.8L142 39.1L146 39.5L151 39.4L156 38.3L161 39.4L166 38.5L171 39.2L176 39.9L180 39.2L185 39.1L190 38.5L195 39.4L200 38.5L205 38.9L210 38.2L215 39.0L219 39.0L224 40.1L229 38.2L234 39.1M127 48.3L132 48.0L137 48.4L142 48.0L146 47.8L151 48.1L156 47.8L161 47.3L166 48.1L171 48.3L176 48.2L180 48.6L185 48.4L190 47.3L195 48.6L200 47.8L205 48.4L210 47.4L215 48.1L219 47.8L224 47.5L229 47.7L234 48.2M127 57.0L132 57.4L137 57.1L142 56.6L146 56.6L151 56.4L156 57.5L161 56.9L166 56.9L171 56.4L176 56.9L180 57.8L185 56.9L190 57.0L195 56.6L200 57.6L205 56.3L210 57.0L215 56.2L219 56.7L224 57.2L229 57.8L234 57.1M127 66.2L132 65.9L137 65.8L142 66.5L146 66.3L151 66.3L156 66.5L161 66.2L166 68.5L171 71.4L176 72.5L180 70.6L185 66.1L190 66.2L195 65.2L200 66.1L205 66.0L210 65.2L215 66.2L219 66.2L224 66.5L229 65.6L234 66.4M127 75.7L132 75.1L137 75.8L142 74.6L146 75.0L151 75.1L156 74.8L161 75.5L166 75.6L171 77.7L176 77.7L180 78.2L185 76.0L190 74.9L195 75.5L200 75.4L205 75.4L210 74.7L215 76.3L219 75.4L224 74.8L229 74.2L234 74.4M127 84.0L132 84.6L137 83.7L142 83.8L146 84.4L151 84.6L156 84.2L161 84.0L166 84.8L171 84.7L176 84.3L180 84.1L185 84.7L190 84.5L195 84.0L200 84.8L205 84.7L210 84.3L215 84.4L219 84.5L224 84.0L229 83.7L234 84.7M127 92.5L132 93.4L137 93.0L142 92.8L146 93.3L151 93.0L156 93.0L161 93.5L166 92.9L171 93.4L176 92.1L180 93.6L185 93.0L190 94.2L195 92.0L200 93.7L205 93.7L210 93.1L215 92.7L219 93.2L224 93.5L229 92.3L234 93.7M127 102.2L132 102.0L137 102.6L142 102.3L146 102.2L151 102.3L156 102.3L161 101.9L166 102.3L171 103.5L176 101.6L180 102.0L185 102.6L190 102.2L195 102.3L200 102.0L205 101.5L210 102.8L215 102.7L219 102.9L224 102.9L229 101.7L234 101.6M127 110.4L132 110.7L137 111.0L142 111.6L146 110.6L151 111.7L156 111.1L161 111.7L166 111.3L171 112.4L176 111.6L180 110.6L185 110.9L190 111.3L195 111.9L200 111.5L205 111.3L210 110.2L215 111.4L219 111.9L224 111.7L229 111.5L234 111.2" stroke="#f4e414" stroke-width="3.1" fill="none" stroke-linejoin="round"/><path d="M127 119.6L132 120.5L137 120.0L142 120.1L146 120.7L151 119.9L156 120.5L161 120.4L166 119.8L171 120.7L176 120.4L180 121.1L185 120.7L190 120.8L195 120.6L200 120.8L205 119.6L210 119.7L215 120.0L219 120.1L224 119.9L229 120.4L234 120.2M127 129.9L132 129.5L137 128.7L142 129.0L146 128.7L151 128.3L156 128.8L161 129.4L166 129.3L171 129.5L176 129.3L180 129.7L185 129.9L190 128.7L195 129.9L200 129.6L205 128.8L210 129.1L215 129.5L219 128.7L224 129.1L229 129.2L234 128.7M127 138.5L132 138.2L137 138.0L142 138.2L146 138.2L151 137.9L156 138.5L161 138.0L166 138.1L171 138.0L176 138.6L180 138.5L185 137.4L190 137.6L195 138.5L200 137.9L205 138.4L210 138.1L215 137.3L219 139.1L224 137.5L229 138.8L234 139.4M127 147.4L132 147.9L137 147.2L142 147.2L146 147.3L151 147.0L156 146.8L161 147.3L166 147.2L171 146.6L176 146.3L180 147.5L185 146.8L190 147.5L195 147.7L200 147.3L205 147.1L210 146.2L215 148.0L219 147.7L224 147.0L229 146.9L234 147.5M127 155.6L132 156.2L137 156.2L142 156.6L146 156.6L151 156.8L156 156.9L161 155.6L166 156.0L171 157.0L176 156.3L180 156.3L185 156.6L190 156.3L195 156.0L200 156.2L205 156.7L210 156.3L215 156.1L219 155.9L224 156.8L229 156.6L234 156.6M127 165.2L132 165.5L137 165.8L142 165.0L146 166.1L151 165.4L156 165.7L161 165.5L166 166.4L171 165.5L176 163.9L180 165.8L185 165.7L190 165.3L195 165.9L200 165.3L205 165.3L210 164.9L215 164.6L219 165.7L224 165.6L229 166.0L234 166.2M127 174.2L132 175.0L137 174.3L142 174.3L146 174.6L151 173.9L156 174.6L161 174.0L166 174.5L171 174.9L176 174.2L180 174.1L185 175.1L190 174.4L195 174.9L200 174.6L205 174.6L210 175.0L215 174.4L219 173.7L224 174.3L229 174.1L234 173.9M127 183.5L132 183.5L137 183.7L142 183.7L146 184.1L151 183.4L156 183.2L161 183.7L166 183.2L171 183.9L176 183.6L180 184.3L185 183.2L190 183.4L195 184.2L200 183.9L205 183.1L210 183.2L215 183.4L219 183.3L224 184.2L229 182.7L234 183.3M127 192.3L132 192.7L137 191.9L142 192.5L146 192.7L151 192.9L156 192.6L161 192.6L166 192.9L171 193.2L176 191.8L180 191.6L185 192.5L190 193.1L195 193.2L200 192.8L205 192.0L210 192.7L215 192.2L219 192.8L224 192.4L229 193.2L234 192.0M127 201.4L132 201.3L137 201.3L142 202.1L146 202.0L151 201.1L156 201.8L161 201.5L166 201.3L171 201.7L176 201.5L180 202.0L185 201.2L190 201.7L195 200.5L200 202.0L205 200.8L210 201.0L215 201.5L219 201.4L224 201.6L229 201.3L234 201.7M127 211.2L132 210.1L137 210.1L142 210.4L146 210.0L151 210.6L156 210.8L161 210.6L166 210.5L171 211.5L176 210.1L180 210.2L185 210.8L190 210.3L195 211.2L200 210.2L205 210.5L210 211.2L215 209.8L219 210.9L224 210.6L229 210.6L234 211.1M127 219.4L132 219.8L137 219.1L142 219.1L146 218.8L151 219.5L156 218.4L161 219.7L166 218.7L171 219.8L176 220.0L180 219.2L185 218.8L190 219.1L195 219.4L200 219.2L205 219.3L210 219.6L215 220.2L219 219.6L224 219.3L229 219.8L234 219.6M127 228.5L132 228.2L137 228.9L142 228.1L146 227.6L151 228.4L156 228.2L161 228.8L166 228.5L171 227.9L176 228.2L180 228.3L185 229.4L190 228.0L195 228.0L200 229.0L205 229.2L210 228.4L215 229.1L219 228.5L224 228.1L229 228.5L234 228.9M127 237.2L132 237.1L137 236.9L142 237.3L146 237.5L151 237.7L156 238.0L161 237.9L166 236.5L171 236.8L176 236.9L180 236.9L185 238.0L190 237.5L195 237.1L200 237.8L205 237.0L210 238.1L215 237.3L219 237.4L224 238.0L229 237.4L234 237.5M127 246.0L132 246.3L137 246.4L142 247.0L146 247.1L151 246.4L156 246.7L161 246.8L166 245.9L171 246.6L176 246.1L180 247.1L185 247.1L190 246.7L195 247.2L200 246.4L205 246.2L210 247.1L215 246.5L219 246.7L224 246.0L229 246.9L234 246.5M127 255.0L132 255.8L137 255.5L142 255.9L146 255.0L151 255.4L156 256.1L161 255.2L166 254.9L171 255.6L176 255.2L180 255.2L185 255.5L190 256.2L195 255.5L200 255.6L205 255.8L210 255.9L215 255.3L219 255.0L224 254.7L229 255.6L234 255.4M127 265.0L132 264.4L137 264.2L142 264.7L146 264.5L151 263.7L156 264.4L161 264.8L166 264.4L171 264.8L176 264.1L180 264.9L185 264.4L190 264.2L195 264.0L200 265.0L205 264.6L210 264.4L215 264.7L219 264.5L224 264.4L229 264.7L234 264.4M127 273.3L132 274.0L137 274.0L142 274.1L146 273.6L151 273.9L156 274.4L161 273.2L166 272.9L171 273.1L176 273.6L180 273.4L185 273.7L190 273.8L195 273.4L200 273.6L205 273.5L210 273.7L215 273.5L219 274.0L224 273.7L229 274.4L234 273.5M127 283.3L132 282.1L137 282.3L142 282.5L146 282.5L151 282.6L156 282.7L161 283.0L166 282.8L171 282.7L176 282.8L180 283.0L185 282.8L190 283.8L195 282.1L200 282.4L205 282.6L210 282.9L215 283.5L219 282.2L224 283.0L229 283.0L234 282.6" stroke="#f4e414" stroke-width="2.1" fill="none" stroke-linejoin="round"/><path d="M127 3.6L135 2.5L142 -0.0L150 0.7L158 0.8L165 2.3L173 2.0L180 0.8L188 1.3L196 2.2L203 1.9L211 0.5L219 -0.5L226 -0.7L234 0.2M127 9.9L135 9.3L142 8.6L150 10.4L158 10.4L165 8.9L173 9.4L180 12.0L188 8.9L196 8.9L203 8.8L211 9.7L219 10.1L226 10.2L234 9.0M127 22.7L135 21.7L142 23.2L150 22.5L158 23.0L165 23.0L173 23.5L180 21.4L188 23.2L196 22.8L203 21.9L211 22.8L219 23.5L226 23.5L234 25.0M127 37.4L135 35.0L142 36.6L150 37.6L158 38.0L165 37.4L173 37.2L180 37.9L188 39.0L196 35.7L203 38.2L211 37.8L219 37.7L226 37.3L234 37.6M127 59.0L135 60.4L142 59.8L150 58.5L158 60.1L165 58.9L173 58.1L180 59.9L188 59.3L196 59.1L203 58.6L211 59.2L219 57.4L226 59.0L234 58.7M127 76.0L135 77.7L142 76.1L150 76.5L158 78.1L165 77.9L173 76.1L180 75.8L188 77.6L196 76.4L203 76.5L211 76.7L219 77.4L226 75.3L234 77.9M127 95.4L135 95.7L142 96.2L150 94.6L158 95.9L165 95.9L173 95.4L180 95.8L188 93.9L196 96.1L203 96.3L211 94.2L219 95.7L226 95.3L234 94.8M127 109.2L135 110.0L142 108.8L150 109.3L158 110.6L165 110.8L173 109.3L180 111.7L188 109.3L196 108.3L203 109.1L211 109.2L219 109.9L226 110.0L234 108.1M127 140.1L135 140.1L142 140.1L150 138.8L158 140.3L165 139.6L173 141.6L180 139.4L188 141.3L196 139.2L203 139.3L211 141.7L219 139.6L226 139.9L234 138.8M127 147.4L135 148.8L142 147.9L150 149.6L158 149.7L165 150.9L173 149.8L180 149.9L188 148.4L196 149.5L203 149.8L211 151.1L219 149.5L226 146.5L234 150.5M127 167.6L135 167.3L142 168.2L150 166.7L158 168.1L165 167.4L173 168.9L180 167.2L188 167.2L196 165.5L203 168.2L211 167.4L219 165.2L226 167.8L234 167.8M127 264.8L135 267.3L142 265.6L150 267.5L158 268.0L165 270.2L173 267.9L180 267.3L188 267.4L196 266.4L203 267.6L211 266.8L219 266.9L226 265.7L234 267.2M127 2L134 5L140 4L147 8L154 2L160 3L167 7L174 3L180 2L187 3L194 11L201 13L207 3L214 3L221 4L227 1L234 11M127 5L134 12L140 3L147 3L154 6L160 12L167 3L174 10L180 1L187 7L194 12L201 3L207 2L214 4L221 8L227 3L234 11M127 11L134 3L140 2L147 7L154 4L160 8L167 13L174 13L180 2L187 1L194 8L201 12L207 3L214 10L221 3L227 7L234 2M127 13L134 1L140 2L147 3L154 6L160 12L167 6L174 1L180 10L187 3L194 3L201 3L207 12L214 5L221 3L227 9L234 8M127 21L134 14L140 15L147 11L154 13L160 21L167 19L174 21L180 11L187 19L194 13L201 18L207 11L214 12L221 16L227 13L234 12M127 12L134 10L140 11L147 13L154 11L160 15L167 12L174 21L180 11L187 11L194 19L201 11L207 20L214 15L221 21L227 21L234 12M191 75L194 75L197 70L199 76L202 64L205 65L207 66L210 65L213 65L215 73L218 67L221 71L223 70L226 71L229 67L231 72L234 76M191 65L194 65L197 74L199 71L202 66L205 69L207 73L210 67L213 64L215 69L218 65L221 65L223 70L226 67L229 66L231 66L234 66" stroke="#f4e414" stroke-width="0.9" fill="none"/><path d="M253 2.9L258 2.5L263 3.0L268 2.9L272 2.9L277 3.7L282 3.4L287 2.8L292 6.3L297 13.1L302 12.2L306 5.9L311 2.9L316 1.9L321 3.2L326 3.3L331 2.5L336 2.3L341 3.6L345 3.5L350 3.9L355 3.1L360 2.9M253 11.6L258 12.3L263 12.1L268 11.8L272 11.9L277 12.0L282 12.8L287 12.1L292 11.7L297 16.3L302 16.1L306 13.7L311 12.0L316 12.2L321 11.8L326 12.0L331 12.2L336 12.3L341 11.8L345 11.4L350 11.7L355 11.9L360 11.7M253 20.6L258 20.7L263 21.2L268 20.5L272 20.9L277 20.7L282 22.0L287 20.5L292 21.1L297 20.8L302 20.9L306 20.2L311 21.2L316 20.7L321 20.1L326 21.0L331 20.6L336 20.9L341 21.4L345 21.9L350 21.3L355 21.6L360 20.8M253 30.3L258 29.7L263 30.3L268 30.1L272 29.6L277 29.5L282 29.7L287 30.5L292 30.4L297 30.6L302 30.2L306 29.3L311 29.5L316 29.8L321 30.4L326 30.1L331 29.9L336 30.2L341 31.1L345 30.6L350 29.8L355 29.5L360 29.7M253 38.2L258 38.7L263 39.3L268 40.2L272 38.9L277 39.6L282 39.8L287 38.8L292 38.8L297 39.0L302 38.7L306 39.1L311 38.5L316 38.9L321 39.0L326 40.0L331 38.4L336 39.1L341 38.7L345 39.0L350 38.9L355 38.7L360 39.0M253 48.6L258 48.0L263 48.0L268 47.5L272 48.7L277 48.0L282 47.1L287 47.7L292 48.6L297 47.7L302 48.5L306 48.4L311 47.3L316 48.4L321 48.5L326 48.4L331 48.9L336 47.8L341 48.1L345 47.5L350 48.3L355 47.8L360 48.3M253 56.6L258 56.6L263 57.5L268 57.0L272 57.8L277 56.5L282 57.4L287 56.7L292 57.6L297 57.3L302 57.6L306 57.0L311 57.1L316 57.5L321 57.5L326 57.2L331 56.3L336 57.6L341 56.4L345 57.4L350 57.1L355 57.3L360 57.3M253 66.3L258 66.5L263 66.8L268 66.9L272 66.2L277 66.5L282 65.6L287 65.7L292 66.7L297 66.3L302 65.6L306 66.0L311 65.3L316 66.1L321 66.5L326 65.3L331 66.1L336 66.3L341 66.0L345 66.2L350 65.8L355 65.8L360 66.1M253 74.3L258 75.0L263 74.8L268 75.1L272 74.5L277 75.3L282 76.1L287 74.6L292 75.3L297 75.4L302 76.0L306 74.4L311 75.3L316 75.5L321 74.7L326 74.7L331 74.9L336 75.2L341 76.0L345 75.3L350 75.1L355 75.7L360 75.3M253 83.9L258 84.8L263 84.5L268 83.9L272 83.6L277 84.6L282 84.3L287 84.6L292 84.4L297 83.8L302 83.9L306 83.8L311 84.1L316 84.2L321 83.5L326 83.5L331 83.9L336 84.2L341 84.0L345 84.6L350 84.5L355 84.0L360 84.1M253 92.7L258 92.8L263 93.9L268 93.6L272 94.2L277 92.4L282 93.2L287 93.0L292 91.9L297 92.6L302 93.9L306 92.4L311 93.1L316 92.9L321 93.1L326 92.7L331 93.8L336 93.1L341 93.0L345 94.0L350 92.5L355 93.4L360 93.4M253 102.6L258 102.4L263 102.3L268 102.1L272 102.5L277 101.9L282 101.7L287 102.8L292 102.0L297 102.2L302 102.4L306 102.6L311 102.2L316 102.4L321 101.3L326 101.7L331 102.6L336 102.9L341 102.3L345 102.2L350 102.1L355 102.4L360 102.6M253 111.3L258 111.8L263 111.8L268 111.2L272 110.8L277 111.3L282 111.1L287 111.3L292 110.9L297 111.8L302 110.7L306 110.7L311 111.0L316 110.3L321 110.6L326 111.5L331 111.3L336 112.1L341 111.0L345 111.1L350 111.0L355 111.9L360 110.9" stroke="#4850c4" stroke-width="3.1" fill="none" stroke-linejoin="round"/><path d="M253 120.4L258 120.9L263 120.7L268 121.3L272 120.2L277 121.1L282 119.9L287 120.6L292 119.4L297 120.1L302 120.2L306 120.0L311 121.2L316 120.5L321 120.1L326 119.7L331 120.1L336 120.2L341 120.5L345 120.8L350 119.8L355 120.1L360 120.5M253 129.8L258 129.1L263 129.9L268 130.4L272 129.1L277 129.1L282 129.6L287 128.8L292 128.6L297 128.6L302 129.1L306 129.6L311 129.0L316 129.2L321 129.1L326 128.8L331 129.4L336 129.5L341 129.6L345 129.8L350 130.0L355 128.9L360 129.6M253 137.8L258 138.1L263 138.7L268 138.6L272 138.1L277 137.9L282 137.9L287 138.9L292 138.5L297 138.6L302 137.4L306 137.5L311 138.8L316 139.3L321 138.5L326 138.0L331 137.6L336 137.7L341 138.5L345 138.4L350 138.0L355 138.6L360 139.0M253 147.4L258 147.9L263 146.9L268 147.3L272 147.5L277 147.0L282 147.4L287 146.9L292 148.0L297 148.2L302 147.4L306 147.5L311 147.7L316 147.4L321 147.6L326 147.4L331 147.6L336 147.2L341 147.3L345 147.0L350 147.4L355 147.3L360 148.1M253 157.1L258 156.3L263 156.5L268 156.1L272 156.0L277 156.5L282 156.8L287 156.2L292 155.9L297 156.1L302 156.2L306 156.2L311 156.3L316 157.3L321 155.9L326 155.9L331 156.1L336 155.7L341 156.8L345 155.7L350 156.0L355 155.9L360 156.5M253 165.5L258 165.7L263 165.4L268 165.7L272 165.6L277 165.1L282 165.3L287 165.2L292 165.8L297 165.1L302 165.4L306 165.1L311 164.7L316 164.9L321 165.3L326 165.6L331 164.8L336 165.9L341 165.4L345 165.2L350 164.9L355 166.3L360 165.3M253 174.6L258 174.6L263 173.9L268 174.1L272 173.7L277 174.5L282 174.1L287 174.3L292 173.4L297 174.5L302 173.8L306 173.4L311 175.2L316 175.2L321 174.3L326 173.4L331 174.3L336 174.8L341 174.0L345 174.8L350 174.8L355 174.6L360 174.7M253 182.8L258 183.4L263 183.9L268 182.4L272 183.0L277 184.4L282 183.2L287 183.8L292 183.4L297 182.2L302 182.6L306 183.4L311 183.6L316 183.1L321 182.6L326 182.7L331 183.6L336 183.4L341 183.8L345 183.0L350 182.7L355 183.8L360 183.2M253 192.5L258 192.5L263 191.8L268 192.4L272 192.4L277 192.6L282 192.4L287 192.3L292 193.2L297 193.1L302 192.2L306 191.9L311 192.9L316 192.1L321 191.9L326 192.5L331 191.9L336 192.1L341 192.3L345 192.5L350 192.2L355 192.9L360 192.8M253 202.0L258 202.0L263 201.2L268 202.2L272 202.1L277 200.3L282 201.6L287 200.8L292 201.7L297 201.9L302 202.5L306 200.8L311 201.4L316 201.0L321 201.1L326 201.0L331 201.6L336 201.6L341 201.3L345 202.3L350 201.8L355 201.2L360 200.7M253 210.6L258 210.3L263 210.4L268 210.5L272 210.7L277 209.8L282 210.2L287 209.9L292 210.5L297 210.9L302 210.4L306 210.3L311 211.1L316 210.5L321 209.9L326 210.5L331 209.8L336 210.1L341 211.3L345 210.4L350 210.1L355 210.6L360 210.5M253 219.4L258 219.4L263 219.9L268 219.1L272 219.4L277 220.4L282 219.4L287 219.4L292 218.5L297 218.7L302 219.5L306 220.3L311 219.0L316 220.0L321 218.1L326 219.8L331 219.5L336 218.7L341 219.3L345 219.8L350 220.2L355 219.2L360 219.9M253 227.7L258 228.2L263 229.2L268 228.0L272 228.8L277 229.0L282 227.7L287 228.9L292 228.4L297 228.7L302 228.3L306 229.1L311 228.4L316 229.1L321 228.9L326 228.7L331 228.7L336 228.2L341 229.1L345 228.9L350 228.6L355 228.1L360 227.7M253 237.4L258 237.3L263 237.8L268 237.4L272 237.7L277 237.7L282 237.6L287 237.4L292 237.2L297 237.7L302 237.2L306 237.2L311 238.0L316 237.4L321 237.8L326 238.3L331 237.0L336 237.0L341 236.6L345 237.7L350 237.4L355 237.7L360 237.6M253 246.5L258 246.6L263 246.8L268 245.9L272 246.0L277 245.7L282 245.8L287 246.5L292 247.0L297 246.7L302 246.4L306 246.6L311 246.7L316 246.5L321 246.3L326 246.4L331 247.4L336 246.8L341 246.7L345 245.9L350 245.9L355 246.1L360 246.5M253 256.5L258 255.3L263 255.7L268 256.6L272 255.9L277 255.4L282 255.7L287 255.7L292 255.2L297 255.5L302 255.3L306 254.9L311 255.3L316 254.9L321 255.3L326 255.9L331 256.3L336 255.5L341 256.0L345 255.9L350 255.9L355 256.1L360 255.1M253 264.7L258 264.0L263 264.5L268 264.3L272 265.1L277 265.0L282 264.0L287 265.2L292 264.5L297 264.5L302 264.3L306 264.7L311 264.6L316 265.2L321 264.4L326 265.2L331 265.1L336 264.7L341 264.0L345 263.6L350 264.6L355 264.0L360 264.9M253 273.7L258 273.5L263 274.0L268 273.4L272 274.0L277 272.9L282 274.1L287 274.1L292 273.1L297 273.0L302 273.3L306 273.8L311 273.0L316 274.1L321 273.7L326 273.5L331 274.5L336 273.9L341 273.1L345 273.6L350 273.6L355 273.3L360 273.7M253 281.7L258 283.5L263 282.9L268 282.9L272 282.3L277 282.8L282 282.6L287 282.2L292 283.2L297 282.7L302 282.8L306 282.3L311 282.4L316 283.0L321 282.8L326 283.2L331 282.5L336 282.7L341 282.4L345 283.0L350 283.3L355 283.2L360 283.0" stroke="#4850c4" stroke-width="2.1" fill="none" stroke-linejoin="round"/><path d="M253 1.3L261 1.1L268 0.1L276 0.4L284 0.2L291 0.8L299 0.2L306 0.4L314 2.5L322 -0.0L329 0.6L337 3.0L345 1.5L352 1.8L360 1.3M253 24.8L261 22.2L268 22.3L276 24.8L284 21.9L291 23.4L299 21.5L306 22.9L314 22.4L322 22.3L329 23.1L337 23.7L345 25.4L352 23.3L360 24.9M253 41.1L261 41.4L268 41.5L276 42.2L284 42.4L291 40.0L299 41.5L306 41.1L314 40.7L322 40.2L329 41.0L337 41.9L345 42.5L352 41.1L360 40.3M253 50.5L261 49.0L268 50.6L276 51.5L284 50.0L291 50.8L299 49.2L306 50.8L314 51.0L322 50.3L329 51.3L337 49.8L345 49.4L352 50.9L360 49.7M253 78.1L261 78.1L268 76.9L276 76.6L284 77.1L291 77.8L299 77.4L306 80.4L314 74.9L322 76.5L329 78.2L337 76.9L345 77.2L352 76.5L360 78.7M253 95.3L261 95.5L268 95.9L276 95.1L284 96.9L291 95.3L299 94.0L306 95.7L314 94.8L322 96.6L329 95.8L337 95.5L345 95.2L352 96.6L360 93.6M253 118.4L261 119.3L268 117.5L276 117.7L284 119.3L291 119.7L299 118.8L306 119.4L314 116.4L322 119.0L329 117.0L337 118.5L345 117.5L352 117.7L360 118.0M253 191.0L261 190.5L268 190.0L276 190.2L284 190.6L291 190.4L299 190.2L306 189.7L314 189.4L322 189.4L329 190.8L337 189.4L345 189.9L352 192.0L360 193.2M274 65L280 65L285 67L290 73L296 66L301 76L306 73L312 75L317 64L323 75L328 67L333 66L339 66L344 66L349 73L355 66L360 72M274 64L280 66L285 76L290 69L296 65L301 67L306 66L312 72L317 74L323 65L328 68L333 65L339 64L344 65L349 72L355 69L360 65" stroke="#4850c4" stroke-width="0.9" fill="none"/><text x="4" y="287" font-size="8" fill="#bbb" font-family="Liberation Sans">2</text><text x="130" y="287" font-size="8" fill="#bbb" font-family="Liberation Sans">6</text><text x="257" y="287" font-size="8" fill="#bbb" font-family="Liberation Sans">21</text></svg>
<div class="r" style="left:1287px;top:1115px;width:2px;height:307px;background:#d0d0d0;"></div>
<div class="r" style="left:1289px;top:1115px;width:349px;height:15px;background:linear-gradient(#f4f4f6,#dcdde2);border:1px solid #b8b8c0;box-sizing:border-box;"></div><div class="t" style="left:1291.0px;top:1117.9px;font-size:9.5px;color:#222;transform:scaleX(0.809);">D:/brainstorm_db/Tutorial_e-Phys/data/Floyd/@rawytu288c-01_converted-32/ytu288c-...</div><svg class="s" style="left:1614px;top:1117px;" width="22" height="11" viewBox="0 0 22 11"><rect x="2.5" y="3.5" width="6" height="5" fill="none" stroke="#222"/><rect x="4.5" y="1.5" width="6" height="5" fill="#fff" stroke="#222"/><path d="M14 2l6 7M20 2l-6 7" stroke="#111" stroke-width="1.4"/></svg>
<svg class="s" style="left:1289.5px;top:1130px;overflow:hidden;" width="348" height="292" viewBox="0 0 348 292"><rect width="348" height="292" fill="#070707"/><path d="M11.0 87V67.2M12.5 87V65.0M14.0 87V65.2M15.5 87V66.8M16.9 87V66.1M18.4 87V66.2M19.9 87V65.6M21.4 87V65.2M22.9 87V67.3M24.4 87V67.6M25.9 87V65.0M27.3 87V66.3M28.8 87V65.2M30.3 87V67.6M31.8 87V66.2M33.3 87V65.4M34.8 87V66.9M36.3 87V64.7M37.7 87V64.8M39.2 87V67.5M40.7 87V67.6M42.2 87V65.9M43.7 87V64.7M45.2 87V66.4M46.7 87V67.0M48.1 87V64.7M49.6 87V64.4M51.1 87V62.2M52.6 87V59.6M54.1 87V57.2M55.6 87V55.7M57.1 87V53.5M58.5 87V48.7M60.0 87V43.2M61.5 87V38.3M63.0 87V8.0M64.5 87V62.7M66.0 87V64.1M67.5 87V64.4M68.9 87V66.7M70.4 87V65.6M71.9 87V67.4M73.4 87V70.6M74.9 87V70.3M76.4 87V69.5M77.9 87V69.9M79.3 87V69.4M80.8 87V71.1M82.3 87V69.8M83.8 87V70.4M85.3 87V71.6M86.8 87V70.7M88.3 87V69.8M89.7 87V70.0M91.2 87V71.1M92.7 87V70.8M94.2 87V72.6M95.7 87V72.0M97.2 87V70.3M98.7 87V71.5M100.1 87V72.3M101.6 87V71.2M103.1 87V70.7M104.6 87V70.8M106.1 87V71.8M107.6 87V71.6M109.1 87V71.5M110.5 87V70.6M112.0 87V71.5M113.5 87V71.9" stroke="#ffffff" stroke-width="1.57" fill="none"/><path d="M8 87.5h110" stroke="#ffffff" stroke-width="1"/><path d="M11.0 87v2.5" stroke="#ffffff" stroke-width="0.8"/><path d="M19.7 87v2.5" stroke="#ffffff" stroke-width="0.8"/><path d="M28.3 87v2.5" stroke="#ffffff" stroke-width="0.8"/><path d="M37.0 87v2.5" stroke="#ffffff" stroke-width="0.8"/><path d="M45.7 87v2.5" stroke="#ffffff" stroke-width="0.8"/><path d="M54.3 87v2.5" stroke="#ffffff" stroke-width="0.8"/><path d="M63.0 87v2.5" stroke="#ffffff" stroke-width="0.8"/><path d="M71.7 87v2.5" stroke="#ffffff" stroke-width="0.8"/><path d="M80.3 87v2.5" stroke="#ffffff" stroke-width="0.8"/><path d="M89.0 87v2.5" stroke="#ffffff" stroke-width="0.8"/><path d="M97.7 87v2.5" stroke="#ffffff" stroke-width="0.8"/><path d="M106.3 87v2.5" stroke="#ffffff" stroke-width="0.8"/><path d="M115.0 87v2.5" stroke="#ffffff" stroke-width="0.8"/><path d="M11 74.4h104" stroke="#9a9a9a" stroke-width="0.7" stroke-dasharray="1 1.6"/><path d="M126.0 87V21.7M127.5 87V21.6M129.0 87V27.1M130.5 87V26.8M131.9 87V22.0M133.4 87V22.5M134.9 87V22.8M136.4 87V25.0M137.9 87V23.0M139.4 87V22.8M140.9 87V22.9M142.3 87V25.5M143.8 87V23.6M145.3 87V23.7M146.8 87V21.5M148.3 87V19.7M149.8 87V19.9M151.3 87V22.3M152.7 87V22.9M154.2 87V23.9M155.7 87V25.2M157.2 87V25.0M158.7 87V22.0M160.2 87V22.6M161.7 87V21.9M163.1 87V18.3M164.6 87V20.3M166.1 87V19.8M167.6 87V21.5M169.1 87V22.5M170.6 87V20.3M172.1 87V21.2M173.5 87V18.5M175.0 87V15.1M176.5 87V16.9M178.0 87V19.6M179.5 87V14.8M181.0 87V15.1M182.5 87V15.2M183.9 87V14.4M185.4 87V15.6M186.9 87V15.8M188.4 87V18.8M189.9 87V15.2M191.4 87V15.6M192.9 87V20.9M194.3 87V17.5M195.8 87V18.0M197.3 87V19.9M198.8 87V19.7M200.3 87V20.0M201.8 87V17.4M203.3 87V20.1M204.7 87V18.1M206.2 87V21.2M207.7 87V17.9M209.2 87V17.9M210.7 87V20.7M212.2 87V20.1M213.7 87V18.0M215.1 87V19.3M216.6 87V20.9M218.1 87V22.6M219.6 87V22.0M221.1 87V19.8M222.6 87V23.2M224.1 87V18.6M225.5 87V22.7M227.0 87V18.7M228.5 87V22.6" stroke="#ffffff" stroke-width="1.57" fill="none"/><path d="M123 87.5h110" stroke="#ffffff" stroke-width="1"/><path d="M126.0 87v2.5" stroke="#ffffff" stroke-width="0.8"/><path d="M134.7 87v2.5" stroke="#ffffff" stroke-width="0.8"/><path d="M143.3 87v2.5" stroke="#ffffff" stroke-width="0.8"/><path d="M152.0 87v2.5" stroke="#ffffff" stroke-width="0.8"/><path d="M160.7 87v2.5" stroke="#ffffff" stroke-width="0.8"/><path d="M169.3 87v2.5" stroke="#ffffff" stroke-width="0.8"/><path d="M178.0 87v2.5" stroke="#ffffff" stroke-width="0.8"/><path d="M186.7 87v2.5" stroke="#ffffff" stroke-width="0.8"/><path d="M195.3 87v2.5" stroke="#ffffff" stroke-width="0.8"/><path d="M204.0 87v2.5" stroke="#ffffff" stroke-width="0.8"/><path d="M212.7 87v2.5" stroke="#ffffff" stroke-width="0.8"/><path d="M221.3 87v2.5" stroke="#ffffff" stroke-width="0.8"/><path d="M230.0 87v2.5" stroke="#ffffff" stroke-width="0.8"/><path d="M126 27.0h104" stroke="#9a9a9a" stroke-width="0.7" stroke-dasharray="1 1.6"/><path d="M240.0 87V14.8M241.5 87V13.9M243.0 87V14.5M244.5 87V13.8M246.0 87V13.8M247.5 87V15.7M249.0 87V15.9M250.5 87V13.4M252.0 87V15.3M253.5 87V15.4M255.0 87V13.1M256.5 87V15.1M258.0 87V15.1M259.5 87V17.4M261.0 87V18.0M262.5 87V20.7M264.0 87V20.3M265.5 87V20.7M267.0 87V23.2M268.5 87V24.8M270.0 87V27.3M271.5 87V31.4M273.0 87V31.6M274.5 87V35.3M276.0 87V39.4M277.5 87V43.5M279.0 87V44.1M280.5 87V45.8M282.0 87V45.2M283.5 87V44.9M285.0 87V45.6M286.5 87V26.8M288.0 87V28.5M289.5 87V68.4M291.0 87V85.4M292.5 87V85.4M294.0 87V70.4M295.5 87V33.7M297.0 87V38.8M298.5 87V42.8M300.0 87V44.3M301.5 87V45.6M303.0 87V42.9M304.5 87V42.2M306.0 87V39.2M307.5 87V37.8M309.0 87V34.8M310.5 87V32.8M312.0 87V30.6M313.5 87V28.0M315.0 87V26.2M316.5 87V23.4M318.0 87V22.2M319.5 87V19.6M321.0 87V18.4M322.5 87V16.9M324.0 87V16.8M325.5 87V17.2M327.0 87V13.9M328.5 87V12.5M330.0 87V12.5M331.5 87V13.4M333.0 87V12.8M334.5 87V14.2M336.0 87V12.1M337.5 87V12.8M339.0 87V13.6M340.5 87V14.1M342.0 87V11.5M343.5 87V10.9" stroke="#4a4fb0" stroke-width="1.59" fill="none"/><path d="M237 87.5h111" stroke="#4a4fb0" stroke-width="1"/><path d="M240.0 87v2.5" stroke="#4a4fb0" stroke-width="0.8"/><path d="M248.8 87v2.5" stroke="#4a4fb0" stroke-width="0.8"/><path d="M257.5 87v2.5" stroke="#4a4fb0" stroke-width="0.8"/><path d="M266.2 87v2.5" stroke="#4a4fb0" stroke-width="0.8"/><path d="M275.0 87v2.5" stroke="#4a4fb0" stroke-width="0.8"/><path d="M283.8 87v2.5" stroke="#4a4fb0" stroke-width="0.8"/><path d="M292.5 87v2.5" stroke="#4a4fb0" stroke-width="0.8"/><path d="M301.2 87v2.5" stroke="#4a4fb0" stroke-width="0.8"/><path d="M310.0 87v2.5" stroke="#4a4fb0" stroke-width="0.8"/><path d="M318.8 87v2.5" stroke="#4a4fb0" stroke-width="0.8"/><path d="M327.5 87v2.5" stroke="#4a4fb0" stroke-width="0.8"/><path d="M336.2 87v2.5" stroke="#4a4fb0" stroke-width="0.8"/><path d="M345.0 87v2.5" stroke="#4a4fb0" stroke-width="0.8"/><path d="M240 37.2h105" stroke="#9a9a9a" stroke-width="0.7" stroke-dasharray="1 1.6"/><path d="M11.0 182V129.5M12.5 182V131.7M14.0 182V126.3M15.5 182V130.4M16.9 182V131.8M18.4 182V125.7M19.9 182V116.3M21.4 182V118.2M22.9 182V118.7M24.4 182V128.1M25.9 182V122.3M27.3 182V126.8M28.8 182V128.4M30.3 182V129.4M31.8 182V127.3M33.3 182V114.5M34.8 182V116.0M36.3 182V116.2M37.7 182V116.2M39.2 182V126.7M40.7 182V124.5M42.2 182V118.8M43.7 182V117.1M45.2 182V115.0M46.7 182V114.7M48.1 182V128.8M49.6 182V119.8M51.1 182V118.7M52.6 182V121.8M54.1 182V127.7M55.6 182V122.6M57.1 182V129.5M58.5 182V114.6M60.0 182V116.0M61.5 182V121.7M63.0 182V126.1M64.5 182V115.3M66.0 182V121.2M67.5 182V115.7M68.9 182V116.2M70.4 182V122.2M71.9 182V123.8M73.4 182V120.5M74.9 182V123.4M76.4 182V128.2M77.9 182V125.6M79.3 182V116.5M80.8 182V130.1M82.3 182V130.0M83.8 182V119.7M85.3 182V125.8M86.8 182V121.2M88.3 182V122.3M89.7 182V124.5M91.2 182V112.9M92.7 182V127.1M94.2 182V123.2M95.7 182V126.8M97.2 182V119.2M98.7 182V125.4M100.1 182V124.0M101.6 182V117.0M103.1 182V124.5M104.6 182V120.3M106.1 182V114.1M107.6 182V128.3M109.1 182V128.9M110.5 182V125.9M112.0 182V116.4M113.5 182V119.0" stroke="#ffffff" stroke-width="1.57" fill="none"/><path d="M8 182.5h110" stroke="#ffffff" stroke-width="1"/><path d="M11.0 182v2.5" stroke="#ffffff" stroke-width="0.8"/><path d="M19.7 182v2.5" stroke="#ffffff" stroke-width="0.8"/><path d="M28.3 182v2.5" stroke="#ffffff" stroke-width="0.8"/><path d="M37.0 182v2.5" stroke="#ffffff" stroke-width="0.8"/><path d="M45.7 182v2.5" stroke="#ffffff" stroke-width="0.8"/><path d="M54.3 182v2.5" stroke="#ffffff" stroke-width="0.8"/><path d="M63.0 182v2.5" stroke="#ffffff" stroke-width="0.8"/><path d="M71.7 182v2.5" stroke="#ffffff" stroke-width="0.8"/><path d="M80.3 182v2.5" stroke="#ffffff" stroke-width="0.8"/><path d="M89.0 182v2.5" stroke="#ffffff" stroke-width="0.8"/><path d="M97.7 182v2.5" stroke="#ffffff" stroke-width="0.8"/><path d="M106.3 182v2.5" stroke="#ffffff" stroke-width="0.8"/><path d="M115.0 182v2.5" stroke="#ffffff" stroke-width="0.8"/><path d="M11 112.5h104" stroke="#9a9a9a" stroke-width="0.7" stroke-dasharray="1 1.6"/><path d="M126.0 182V104.7M127.5 182V104.5M129.0 182V104.5M130.5 182V104.2M131.9 182V105.2M133.4 182V104.7M134.9 182V108.3M136.4 182V106.9M137.9 182V105.4M139.4 182V106.8M140.9 182V106.1M142.3 182V109.4M143.8 182V108.3M145.3 182V110.2M146.8 182V110.2M148.3 182V111.2M149.8 182V114.5M151.3 182V114.8M152.7 182V116.0M154.2 182V115.1M155.7 182V117.1M157.2 182V120.8M158.7 182V119.9M160.2 182V124.3M161.7 182V124.4M163.1 182V128.1M164.6 182V130.5M166.1 182V128.6M167.6 182V132.4M169.1 182V133.8M170.6 182V132.4M172.1 182V134.6M173.5 182V154.8M175.0 182V182.0M176.5 182V182.0M178.0 182V182.0M179.5 182V173.5M181.0 182V157.0M182.5 182V135.5M183.9 182V136.0M185.4 182V132.0M186.9 182V130.9M188.4 182V127.7M189.9 182V125.9M191.4 182V126.1M192.9 182V123.8M194.3 182V122.9M195.8 182V121.3M197.3 182V120.0M198.8 182V117.5M200.3 182V114.8M201.8 182V115.6M203.3 182V111.5M204.7 182V111.3M206.2 182V109.9M207.7 182V107.3M209.2 182V108.0M210.7 182V108.1M212.2 182V106.9M213.7 182V105.5M215.1 182V107.5M216.6 182V104.0M218.1 182V107.7M219.6 182V104.9M221.1 182V104.5M222.6 182V107.7M224.1 182V104.8M225.5 182V106.4M227.0 182V105.5M228.5 182V107.7" stroke="#f0e010" stroke-width="1.57" fill="none"/><path d="M123 182.5h110" stroke="#f0e010" stroke-width="1"/><path d="M126.0 182v2.5" stroke="#f0e010" stroke-width="0.8"/><path d="M134.7 182v2.5" stroke="#f0e010" stroke-width="0.8"/><path d="M143.3 182v2.5" stroke="#f0e010" stroke-width="0.8"/><path d="M152.0 182v2.5" stroke="#f0e010" stroke-width="0.8"/><path d="M160.7 182v2.5" stroke="#f0e010" stroke-width="0.8"/><path d="M169.3 182v2.5" stroke="#f0e010" stroke-width="0.8"/><path d="M178.0 182v2.5" stroke="#f0e010" stroke-width="0.8"/><path d="M186.7 182v2.5" stroke="#f0e010" stroke-width="0.8"/><path d="M195.3 182v2.5" stroke="#f0e010" stroke-width="0.8"/><path d="M204.0 182v2.5" stroke="#f0e010" stroke-width="0.8"/><path d="M212.7 182v2.5" stroke="#f0e010" stroke-width="0.8"/><path d="M221.3 182v2.5" stroke="#f0e010" stroke-width="0.8"/><path d="M230.0 182v2.5" stroke="#f0e010" stroke-width="0.8"/><path d="M126 133.0h104" stroke="#9a9a9a" stroke-width="0.7" stroke-dasharray="1 1.6"/><path d="M11.0 277V227.4M12.5 277V225.9M14.0 277V229.9M15.5 277V232.2M16.9 277V235.1M18.4 277V223.7M19.9 277V225.5M21.4 277V220.6M22.9 277V226.6M24.4 277V197.0M25.9 277V228.4M27.3 277V220.4M28.8 277V221.6M30.3 277V226.6M31.8 277V224.8M33.3 277V222.7M34.8 277V230.3M36.3 277V224.9M37.7 277V221.1M39.2 277V229.6M40.7 277V221.4M42.2 277V223.5M43.7 277V221.5M45.2 277V229.8M46.7 277V234.0M48.1 277V211.4M49.6 277V224.0M51.1 277V229.9M52.6 277V235.8M54.1 277V234.7M55.6 277V228.4M57.1 277V234.1M58.5 277V225.4M60.0 277V232.4M61.5 277V262.4M63.0 277V273.0M64.5 277V273.0M66.0 277V228.0M67.5 277V231.2M68.9 277V221.1M70.4 277V220.2M71.9 277V224.9M73.4 277V222.2M74.9 277V221.3M76.4 277V219.5M77.9 277V216.8M79.3 277V211.4M80.8 277V226.0M82.3 277V222.2M83.8 277V226.7M85.3 277V222.2M86.8 277V229.7M88.3 277V217.5M89.7 277V222.8M91.2 277V229.0M92.7 277V220.5M94.2 277V226.1M95.7 277V228.4M97.2 277V224.6M98.7 277V230.5M100.1 277V197.0M101.6 277V220.4M103.1 277V223.6M104.6 277V234.7M106.1 277V223.5M107.6 277V235.8M109.1 277V231.5M110.5 277V223.3M112.0 277V228.2M113.5 277V233.6" stroke="#e0301c" stroke-width="1.57" fill="none"/><path d="M8 277.5h110" stroke="#e0301c" stroke-width="1"/><path d="M11.0 277v2.5" stroke="#e0301c" stroke-width="0.8"/><path d="M19.7 277v2.5" stroke="#e0301c" stroke-width="0.8"/><path d="M28.3 277v2.5" stroke="#e0301c" stroke-width="0.8"/><path d="M37.0 277v2.5" stroke="#e0301c" stroke-width="0.8"/><path d="M45.7 277v2.5" stroke="#e0301c" stroke-width="0.8"/><path d="M54.3 277v2.5" stroke="#e0301c" stroke-width="0.8"/><path d="M63.0 277v2.5" stroke="#e0301c" stroke-width="0.8"/><path d="M71.7 277v2.5" stroke="#e0301c" stroke-width="0.8"/><path d="M80.3 277v2.5" stroke="#e0301c" stroke-width="0.8"/><path d="M89.0 277v2.5" stroke="#e0301c" stroke-width="0.8"/><path d="M97.7 277v2.5" stroke="#e0301c" stroke-width="0.8"/><path d="M106.3 277v2.5" stroke="#e0301c" stroke-width="0.8"/><path d="M115.0 277v2.5" stroke="#e0301c" stroke-width="0.8"/><path d="M11 261.0h104" stroke="#9a9a9a" stroke-width="0.7" stroke-dasharray="1 1.6"/><rect x="240.5" y="94.5" width="105" height="10" fill="none" stroke="#4a4fb0"/><text x="293" y="103" font-size="8" fill="#ddd" text-anchor="middle" font-family="Liberation Sans">20.66</text><rect x="126.5" y="189.5" width="104" height="10" fill="none" stroke="#c8b818"/><text x="178" y="198" font-size="8" fill="#ddd" text-anchor="middle" font-family="Liberation Sans">18.68</text><rect x="126.5" y="267.5" width="104" height="11" fill="none" stroke="#b83020"/><text x="178" y="277" font-size="8" fill="#ddd" text-anchor="middle" font-family="Liberation Sans">2.34</text><text x="62" y="287" font-size="8" fill="#bbb" text-anchor="middle" font-family="Liberation Sans">2</text><text x="178" y="287" font-size="8" fill="#bbb" text-anchor="middle" font-family="Liberation Sans">6</text><text x="293" y="287" font-size="8" fill="#bbb" text-anchor="middle" font-family="Liberation Sans">21</text><text x="1" y="44" font-size="8" fill="#bbb" font-family="Liberation Sans">21</text><text x="3" y="139" font-size="8" fill="#bbb" font-family="Liberation Sans">6</text><text x="3" y="233" font-size="8" fill="#bbb" font-family="Liberation Sans">2</text></svg>
<div class="r" style="left:812px;top:1424px;width:828px;height:16px;background:#f4f4f4;border-top:1px solid #d0d0d0;"></div>
<div class="t" style="left:817.5px;top:1426.2px;font-size:9.5px;color:#222;transform:scaleX(0.870);">Coordinates: (4808, 1684)</div>
</body></html>
